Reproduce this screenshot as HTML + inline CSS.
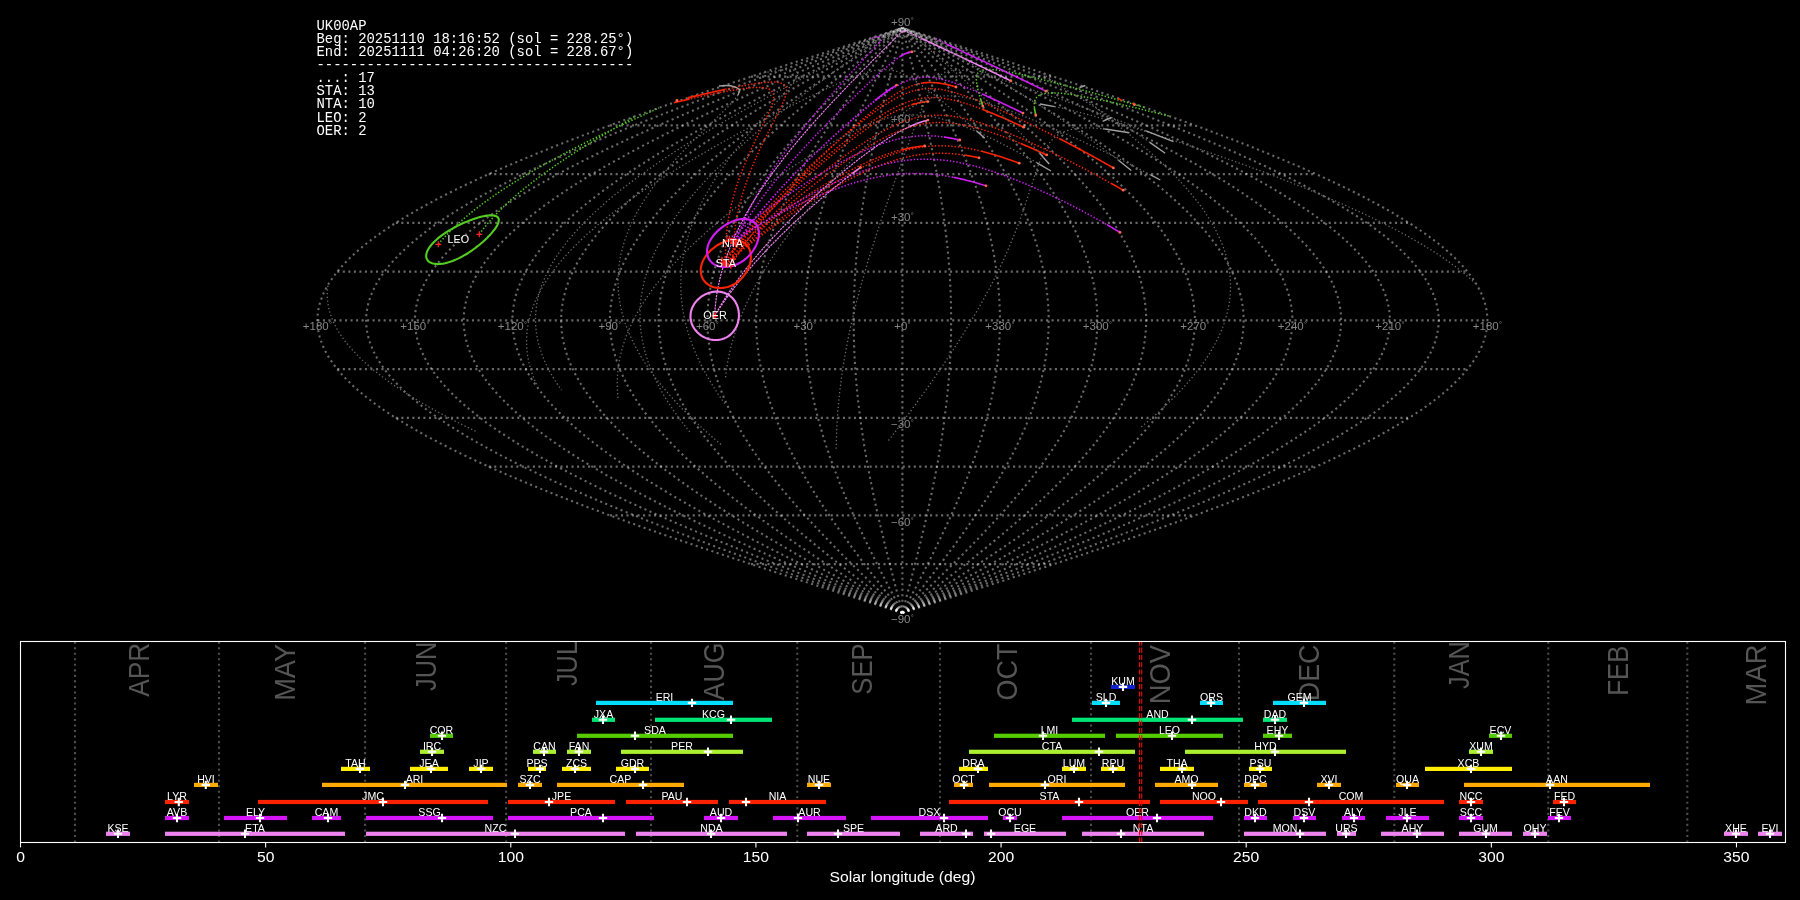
<!DOCTYPE html><html><head><meta charset="utf-8"><style>html,body{margin:0;padding:0;background:#000;width:1800px;height:900px;overflow:hidden}svg{display:block;will-change:transform}text{font-family:"Liberation Sans",sans-serif}</style></head><body>
<svg width="1800" height="900" viewBox="0 0 1800 900">
<rect width="1800" height="900" fill="#000"/>
<g fill="none" stroke="#fff" stroke-opacity="0.41" stroke-width="2.08" stroke-dasharray="2.08 3.44"><path d="M902.4 612.9 L907.5 611.3 L912.6 609.6 L917.7 608.0 L922.8 606.4 L927.9 604.8 L933.0 603.1 L938.1 601.5 L943.2 599.9 L948.3 598.3 L953.4 596.6 L958.5 595.0 L963.5 593.4 L968.6 591.8 L973.7 590.1 L978.8 588.5 L983.8 586.9 L988.9 585.3 L993.9 583.6 L999.0 582.0 L1004.0 580.4 L1009.0 578.8 L1014.0 577.1 L1019.0 575.5 L1024.0 573.9 L1029.0 572.3 L1034.0 570.6 L1039.0 569.0 L1043.9 567.4 L1048.9 565.8 L1053.8 564.1 L1058.7 562.5 L1063.6 560.9 L1068.5 559.3 L1073.4 557.6 L1078.3 556.0 L1083.2 554.4 L1088.0 552.8 L1092.9 551.1 L1097.7 549.5 L1102.5 547.9 L1107.3 546.3 L1112.0 544.6 L1116.8 543.0 L1121.5 541.4 L1126.3 539.8 L1131.0 538.1 L1135.7 536.5 L1140.3 534.9 L1145.0 533.3 L1149.6 531.6 L1154.2 530.0 L1158.8 528.4 L1163.4 526.8 L1168.0 525.1 L1172.5 523.5 L1177.0 521.9 L1181.5 520.3 L1186.0 518.6 L1190.5 517.0 L1194.9 515.4 L1199.3 513.8 L1203.7 512.1 L1208.1 510.5 L1212.4 508.9 L1216.7 507.3 L1221.0 505.6 L1225.3 504.0 L1229.5 502.4 L1233.7 500.8 L1237.9 499.1 L1242.1 497.5 L1246.3 495.9 L1250.4 494.3 L1254.5 492.6 L1258.5 491.0 L1262.6 489.4 L1266.6 487.8 L1270.6 486.1 L1274.5 484.5 L1278.4 482.9 L1282.3 481.3 L1286.2 479.6 L1290.0 478.0 L1293.8 476.4 L1297.6 474.8 L1301.4 473.1 L1305.1 471.5 L1308.8 469.9 L1312.4 468.3 L1316.1 466.6 L1319.7 465.0 L1323.2 463.4 L1326.7 461.8 L1330.2 460.1 L1333.7 458.5 L1337.1 456.9 L1340.5 455.3 L1343.9 453.6 L1347.2 452.0 L1350.5 450.4 L1353.8 448.8 L1357.0 447.1 L1360.2 445.5 L1363.4 443.9 L1366.5 442.3 L1369.6 440.6 L1372.7 439.0 L1375.7 437.4 L1378.7 435.8 L1381.6 434.1 L1384.5 432.5 L1387.4 430.9 L1390.2 429.3 L1393.0 427.6 L1395.8 426.0 L1398.5 424.4 L1401.2 422.8 L1403.8 421.1 L1406.5 419.5 L1409.0 417.9 L1411.6 416.3 L1414.1 414.6 L1416.5 413.0 L1418.9 411.4 L1421.3 409.8 L1423.6 408.1 L1425.9 406.5 L1428.2 404.9 L1430.4 403.3 L1432.6 401.6 L1434.7 400.0 L1436.8 398.4 L1438.9 396.8 L1440.9 395.1 L1442.9 393.5 L1444.8 391.9 L1446.7 390.3 L1448.5 388.6 L1450.4 387.0 L1452.1 385.4 L1453.8 383.8 L1455.5 382.1 L1457.2 380.5 L1458.8 378.9 L1460.3 377.3 L1461.8 375.6 L1463.3 374.0 L1464.7 372.4 L1466.1 370.8 L1467.5 369.1 L1468.8 367.5 L1470.0 365.9 L1471.2 364.3 L1472.4 362.6 L1473.5 361.0 L1474.6 359.4 L1475.7 357.8 L1476.7 356.1 L1477.6 354.5 L1478.5 352.9 L1479.4 351.3 L1480.2 349.6 L1481.0 348.0 L1481.7 346.4 L1482.4 344.8 L1483.0 343.1 L1483.6 341.5 L1484.2 339.9 L1484.7 338.3 L1485.2 336.6 L1485.6 335.0 L1486.0 333.4 L1486.3 331.8 L1486.6 330.1 L1486.8 328.5 L1487.0 326.9 L1487.2 325.3 L1487.3 323.6 L1487.4 322.0 L1487.4 320.4 L1487.4 318.8 L1487.3 317.1 L1487.2 315.5 L1487.0 313.9 L1486.8 312.3 L1486.6 310.6 L1486.3 309.0 L1486.0 307.4 L1485.6 305.8 L1485.2 304.1 L1484.7 302.5 L1484.2 300.9 L1483.6 299.3 L1483.0 297.6 L1482.4 296.0 L1481.7 294.4 L1481.0 292.8 L1480.2 291.1 L1479.4 289.5 L1478.5 287.9 L1477.6 286.3 L1476.7 284.6 L1475.7 283.0 L1474.6 281.4 L1473.5 279.8 L1472.4 278.1 L1471.2 276.5 L1470.0 274.9 L1468.8 273.3 L1467.5 271.6 L1466.1 270.0 L1464.7 268.4 L1463.3 266.8 L1461.8 265.1 L1460.3 263.5 L1458.8 261.9 L1457.2 260.3 L1455.5 258.6 L1453.8 257.0 L1452.1 255.4 L1450.4 253.8 L1448.5 252.1 L1446.7 250.5 L1444.8 248.9 L1442.9 247.3 L1440.9 245.6 L1438.9 244.0 L1436.8 242.4 L1434.7 240.8 L1432.6 239.1 L1430.4 237.5 L1428.2 235.9 L1425.9 234.3 L1423.6 232.6 L1421.3 231.0 L1418.9 229.4 L1416.5 227.8 L1414.1 226.1 L1411.6 224.5 L1409.0 222.9 L1406.5 221.3 L1403.8 219.6 L1401.2 218.0 L1398.5 216.4 L1395.8 214.8 L1393.0 213.1 L1390.2 211.5 L1387.4 209.9 L1384.5 208.3 L1381.6 206.6 L1378.7 205.0 L1375.7 203.4 L1372.7 201.8 L1369.6 200.1 L1366.5 198.5 L1363.4 196.9 L1360.2 195.3 L1357.0 193.6 L1353.8 192.0 L1350.5 190.4 L1347.2 188.8 L1343.9 187.1 L1340.5 185.5 L1337.1 183.9 L1333.7 182.3 L1330.2 180.6 L1326.7 179.0 L1323.2 177.4 L1319.7 175.8 L1316.1 174.1 L1312.4 172.5 L1308.8 170.9 L1305.1 169.3 L1301.4 167.6 L1297.6 166.0 L1293.8 164.4 L1290.0 162.8 L1286.2 161.1 L1282.3 159.5 L1278.4 157.9 L1274.5 156.3 L1270.6 154.6 L1266.6 153.0 L1262.6 151.4 L1258.5 149.8 L1254.5 148.1 L1250.4 146.5 L1246.3 144.9 L1242.1 143.3 L1237.9 141.6 L1233.7 140.0 L1229.5 138.4 L1225.3 136.8 L1221.0 135.1 L1216.7 133.5 L1212.4 131.9 L1208.1 130.3 L1203.7 128.6 L1199.3 127.0 L1194.9 125.4 L1190.5 123.8 L1186.0 122.1 L1181.5 120.5 L1177.0 118.9 L1172.5 117.3 L1168.0 115.6 L1163.4 114.0 L1158.8 112.4 L1154.2 110.8 L1149.6 109.1 L1145.0 107.5 L1140.3 105.9 L1135.7 104.3 L1131.0 102.6 L1126.3 101.0 L1121.5 99.4 L1116.8 97.8 L1112.0 96.1 L1107.3 94.5 L1102.5 92.9 L1097.7 91.3 L1092.9 89.6 L1088.0 88.0 L1083.2 86.4 L1078.3 84.8 L1073.4 83.1 L1068.5 81.5 L1063.6 79.9 L1058.7 78.3 L1053.8 76.6 L1048.9 75.0 L1043.9 73.4 L1039.0 71.8 L1034.0 70.1 L1029.0 68.5 L1024.0 66.9 L1019.0 65.3 L1014.0 63.6 L1009.0 62.0 L1004.0 60.4 L999.0 58.8 L993.9 57.1 L988.9 55.5 L983.8 53.9 L978.8 52.3 L973.7 50.6 L968.6 49.0 L963.5 47.4 L958.5 45.8 L953.4 44.1 L948.3 42.5 L943.2 40.9 L938.1 39.3 L933.0 37.6 L927.9 36.0 L922.8 34.4 L917.7 32.8 L912.6 31.1 L907.5 29.5 L902.4 27.9"/><path d="M902.4 612.9 L907.1 611.3 L911.8 609.6 L916.4 608.0 L921.1 606.4 L925.8 604.8 L930.5 603.1 L935.1 601.5 L939.8 599.9 L944.5 598.3 L949.1 596.6 L953.8 595.0 L958.5 593.4 L963.1 591.8 L967.8 590.1 L972.4 588.5 L977.0 586.9 L981.7 585.3 L986.3 583.6 L990.9 582.0 L995.5 580.4 L1000.1 578.8 L1004.7 577.1 L1009.3 575.5 L1013.9 573.9 L1018.5 572.3 L1023.0 570.6 L1027.6 569.0 L1032.1 567.4 L1036.7 565.8 L1041.2 564.1 L1045.7 562.5 L1050.2 560.9 L1054.7 559.3 L1059.2 557.6 L1063.7 556.0 L1068.1 554.4 L1072.6 552.8 L1077.0 551.1 L1081.4 549.5 L1085.8 547.9 L1090.2 546.3 L1094.6 544.6 L1098.9 543.0 L1103.3 541.4 L1107.6 539.8 L1111.9 538.1 L1116.2 536.5 L1120.5 534.9 L1124.8 533.3 L1129.0 531.6 L1133.3 530.0 L1137.5 528.4 L1141.7 526.8 L1145.9 525.1 L1150.0 523.5 L1154.2 521.9 L1158.3 520.3 L1162.4 518.6 L1166.5 517.0 L1170.5 515.4 L1174.6 513.8 L1178.6 512.1 L1182.6 510.5 L1186.6 508.9 L1190.5 507.3 L1194.5 505.6 L1198.4 504.0 L1202.3 502.4 L1206.1 500.8 L1210.0 499.1 L1213.8 497.5 L1217.6 495.9 L1221.4 494.3 L1225.1 492.6 L1228.8 491.0 L1232.5 489.4 L1236.2 487.8 L1239.9 486.1 L1243.5 484.5 L1247.1 482.9 L1250.7 481.3 L1254.2 479.6 L1257.7 478.0 L1261.2 476.4 L1264.7 474.8 L1268.1 473.1 L1271.5 471.5 L1274.9 469.9 L1278.3 468.3 L1281.6 466.6 L1284.9 465.0 L1288.1 463.4 L1291.4 461.8 L1294.6 460.1 L1297.8 458.5 L1300.9 456.9 L1304.0 455.3 L1307.1 453.6 L1310.2 452.0 L1313.2 450.4 L1316.2 448.8 L1319.1 447.1 L1322.1 445.5 L1325.0 443.9 L1327.8 442.3 L1330.7 440.6 L1333.5 439.0 L1336.2 437.4 L1339.0 435.8 L1341.7 434.1 L1344.3 432.5 L1347.0 430.9 L1349.6 429.3 L1352.1 427.6 L1354.7 426.0 L1357.2 424.4 L1359.6 422.8 L1362.1 421.1 L1364.4 419.5 L1366.8 417.9 L1369.1 416.3 L1371.4 414.6 L1373.7 413.0 L1375.9 411.4 L1378.1 409.8 L1380.2 408.1 L1382.3 406.5 L1384.4 404.9 L1386.4 403.3 L1388.4 401.6 L1390.4 400.0 L1392.3 398.4 L1394.2 396.8 L1396.0 395.1 L1397.8 393.5 L1399.6 391.9 L1401.3 390.3 L1403.0 388.6 L1404.7 387.0 L1406.3 385.4 L1407.9 383.8 L1409.4 382.1 L1410.9 380.5 L1412.4 378.9 L1413.8 377.3 L1415.2 375.6 L1416.6 374.0 L1417.9 372.4 L1419.1 370.8 L1420.4 369.1 L1421.6 367.5 L1422.7 365.9 L1423.8 364.3 L1424.9 362.6 L1425.9 361.0 L1426.9 359.4 L1427.9 357.8 L1428.8 356.1 L1429.7 354.5 L1430.5 352.9 L1431.3 351.3 L1432.0 349.6 L1432.8 348.0 L1433.4 346.4 L1434.1 344.8 L1434.7 343.1 L1435.2 341.5 L1435.7 339.9 L1436.2 338.3 L1436.6 336.6 L1437.0 335.0 L1437.3 333.4 L1437.6 331.8 L1437.9 330.1 L1438.1 328.5 L1438.3 326.9 L1438.5 325.3 L1438.6 323.6 L1438.6 322.0 L1438.7 320.4 L1438.6 318.8 L1438.6 317.1 L1438.5 315.5 L1438.3 313.9 L1438.1 312.3 L1437.9 310.6 L1437.6 309.0 L1437.3 307.4 L1437.0 305.8 L1436.6 304.1 L1436.2 302.5 L1435.7 300.9 L1435.2 299.3 L1434.7 297.6 L1434.1 296.0 L1433.4 294.4 L1432.8 292.8 L1432.0 291.1 L1431.3 289.5 L1430.5 287.9 L1429.7 286.3 L1428.8 284.6 L1427.9 283.0 L1426.9 281.4 L1425.9 279.8 L1424.9 278.1 L1423.8 276.5 L1422.7 274.9 L1421.6 273.3 L1420.4 271.6 L1419.1 270.0 L1417.9 268.4 L1416.6 266.8 L1415.2 265.1 L1413.8 263.5 L1412.4 261.9 L1410.9 260.3 L1409.4 258.6 L1407.9 257.0 L1406.3 255.4 L1404.7 253.8 L1403.0 252.1 L1401.3 250.5 L1399.6 248.9 L1397.8 247.3 L1396.0 245.6 L1394.2 244.0 L1392.3 242.4 L1390.4 240.8 L1388.4 239.1 L1386.4 237.5 L1384.4 235.9 L1382.3 234.3 L1380.2 232.6 L1378.1 231.0 L1375.9 229.4 L1373.7 227.8 L1371.4 226.1 L1369.1 224.5 L1366.8 222.9 L1364.4 221.3 L1362.1 219.6 L1359.6 218.0 L1357.2 216.4 L1354.7 214.8 L1352.1 213.1 L1349.6 211.5 L1347.0 209.9 L1344.3 208.3 L1341.7 206.6 L1339.0 205.0 L1336.2 203.4 L1333.5 201.8 L1330.7 200.1 L1327.8 198.5 L1325.0 196.9 L1322.1 195.3 L1319.1 193.6 L1316.2 192.0 L1313.2 190.4 L1310.2 188.8 L1307.1 187.1 L1304.0 185.5 L1300.9 183.9 L1297.8 182.3 L1294.6 180.6 L1291.4 179.0 L1288.1 177.4 L1284.9 175.8 L1281.6 174.1 L1278.3 172.5 L1274.9 170.9 L1271.5 169.3 L1268.1 167.6 L1264.7 166.0 L1261.2 164.4 L1257.7 162.8 L1254.2 161.1 L1250.7 159.5 L1247.1 157.9 L1243.5 156.3 L1239.9 154.6 L1236.2 153.0 L1232.5 151.4 L1228.8 149.8 L1225.1 148.1 L1221.4 146.5 L1217.6 144.9 L1213.8 143.3 L1210.0 141.6 L1206.1 140.0 L1202.3 138.4 L1198.4 136.8 L1194.5 135.1 L1190.5 133.5 L1186.6 131.9 L1182.6 130.3 L1178.6 128.6 L1174.6 127.0 L1170.5 125.4 L1166.5 123.8 L1162.4 122.1 L1158.3 120.5 L1154.2 118.9 L1150.0 117.3 L1145.9 115.6 L1141.7 114.0 L1137.5 112.4 L1133.3 110.8 L1129.0 109.1 L1124.8 107.5 L1120.5 105.9 L1116.2 104.3 L1111.9 102.6 L1107.6 101.0 L1103.3 99.4 L1098.9 97.8 L1094.6 96.1 L1090.2 94.5 L1085.8 92.9 L1081.4 91.3 L1077.0 89.6 L1072.6 88.0 L1068.1 86.4 L1063.7 84.8 L1059.2 83.1 L1054.7 81.5 L1050.2 79.9 L1045.7 78.3 L1041.2 76.6 L1036.7 75.0 L1032.1 73.4 L1027.6 71.8 L1023.0 70.1 L1018.5 68.5 L1013.9 66.9 L1009.3 65.3 L1004.7 63.6 L1000.1 62.0 L995.5 60.4 L990.9 58.8 L986.3 57.1 L981.7 55.5 L977.0 53.9 L972.4 52.3 L967.8 50.6 L963.1 49.0 L958.5 47.4 L953.8 45.8 L949.1 44.1 L944.5 42.5 L939.8 40.9 L935.1 39.3 L930.5 37.6 L925.8 36.0 L921.1 34.4 L916.4 32.8 L911.8 31.1 L907.1 29.5 L902.4 27.9"/><path d="M902.4 612.9 L906.7 611.3 L910.9 609.6 L915.2 608.0 L919.4 606.4 L923.7 604.8 L927.9 603.1 L932.2 601.5 L936.4 599.9 L940.6 598.3 L944.9 596.6 L949.1 595.0 L953.4 593.4 L957.6 591.8 L961.8 590.1 L966.0 588.5 L970.2 586.9 L974.5 585.3 L978.7 583.6 L982.9 582.0 L987.1 580.4 L991.2 578.8 L995.4 577.1 L999.6 575.5 L1003.8 573.9 L1007.9 572.3 L1012.1 570.6 L1016.2 569.0 L1020.3 567.4 L1024.5 565.8 L1028.6 564.1 L1032.7 562.5 L1036.8 560.9 L1040.9 559.3 L1044.9 557.6 L1049.0 556.0 L1053.0 554.4 L1057.1 552.8 L1061.1 551.1 L1065.1 549.5 L1069.1 547.9 L1073.1 546.3 L1077.1 544.6 L1081.1 543.0 L1085.0 541.4 L1089.0 539.8 L1092.9 538.1 L1096.8 536.5 L1100.7 534.9 L1104.6 533.3 L1108.4 531.6 L1112.3 530.0 L1116.1 528.4 L1119.9 526.8 L1123.7 525.1 L1127.5 523.5 L1131.3 521.9 L1135.0 520.3 L1138.7 518.6 L1142.5 517.0 L1146.2 515.4 L1149.8 513.8 L1153.5 512.1 L1157.1 510.5 L1160.7 508.9 L1164.3 507.3 L1167.9 505.6 L1171.5 504.0 L1175.0 502.4 L1178.5 500.8 L1182.0 499.1 L1185.5 497.5 L1188.9 495.9 L1192.4 494.3 L1195.8 492.6 L1199.2 491.0 L1202.5 489.4 L1205.9 487.8 L1209.2 486.1 L1212.5 484.5 L1215.8 482.9 L1219.0 481.3 L1222.2 479.6 L1225.4 478.0 L1228.6 476.4 L1231.8 474.8 L1234.9 473.1 L1238.0 471.5 L1241.0 469.9 L1244.1 468.3 L1247.1 466.6 L1250.1 465.0 L1253.1 463.4 L1256.0 461.8 L1258.9 460.1 L1261.8 458.5 L1264.7 456.9 L1267.5 455.3 L1270.3 453.6 L1273.1 452.0 L1275.8 450.4 L1278.6 448.8 L1281.3 447.1 L1283.9 445.5 L1286.6 443.9 L1289.2 442.3 L1291.7 440.6 L1294.3 439.0 L1296.8 437.4 L1299.3 435.8 L1301.7 434.1 L1304.2 432.5 L1306.6 430.9 L1308.9 429.3 L1311.3 427.6 L1313.6 426.0 L1315.8 424.4 L1318.1 422.8 L1320.3 421.1 L1322.4 419.5 L1324.6 417.9 L1326.7 416.3 L1328.8 414.6 L1330.8 413.0 L1332.8 411.4 L1334.8 409.8 L1336.8 408.1 L1338.7 406.5 L1340.6 404.9 L1342.4 403.3 L1344.2 401.6 L1346.0 400.0 L1347.8 398.4 L1349.5 396.8 L1351.1 395.1 L1352.8 393.5 L1354.4 391.9 L1356.0 390.3 L1357.5 388.6 L1359.0 387.0 L1360.5 385.4 L1361.9 383.8 L1363.3 382.1 L1364.7 380.5 L1366.0 378.9 L1367.3 377.3 L1368.6 375.6 L1369.8 374.0 L1371.0 372.4 L1372.2 370.8 L1373.3 369.1 L1374.4 367.5 L1375.4 365.9 L1376.4 364.3 L1377.4 362.6 L1378.3 361.0 L1379.2 359.4 L1380.1 357.8 L1380.9 356.1 L1381.7 354.5 L1382.5 352.9 L1383.2 351.3 L1383.9 349.6 L1384.5 348.0 L1385.2 346.4 L1385.7 344.8 L1386.3 343.1 L1386.8 341.5 L1387.2 339.9 L1387.7 338.3 L1388.0 336.6 L1388.4 335.0 L1388.7 333.4 L1389.0 331.8 L1389.2 330.1 L1389.4 328.5 L1389.6 326.9 L1389.7 325.3 L1389.8 323.6 L1389.9 322.0 L1389.9 320.4 L1389.9 318.8 L1389.8 317.1 L1389.7 315.5 L1389.6 313.9 L1389.4 312.3 L1389.2 310.6 L1389.0 309.0 L1388.7 307.4 L1388.4 305.8 L1388.0 304.1 L1387.7 302.5 L1387.2 300.9 L1386.8 299.3 L1386.3 297.6 L1385.7 296.0 L1385.2 294.4 L1384.5 292.8 L1383.9 291.1 L1383.2 289.5 L1382.5 287.9 L1381.7 286.3 L1380.9 284.6 L1380.1 283.0 L1379.2 281.4 L1378.3 279.8 L1377.4 278.1 L1376.4 276.5 L1375.4 274.9 L1374.4 273.3 L1373.3 271.6 L1372.2 270.0 L1371.0 268.4 L1369.8 266.8 L1368.6 265.1 L1367.3 263.5 L1366.0 261.9 L1364.7 260.3 L1363.3 258.6 L1361.9 257.0 L1360.5 255.4 L1359.0 253.8 L1357.5 252.1 L1356.0 250.5 L1354.4 248.9 L1352.8 247.3 L1351.1 245.6 L1349.5 244.0 L1347.8 242.4 L1346.0 240.8 L1344.2 239.1 L1342.4 237.5 L1340.6 235.9 L1338.7 234.3 L1336.8 232.6 L1334.8 231.0 L1332.8 229.4 L1330.8 227.8 L1328.8 226.1 L1326.7 224.5 L1324.6 222.9 L1322.4 221.3 L1320.3 219.6 L1318.1 218.0 L1315.8 216.4 L1313.6 214.8 L1311.3 213.1 L1308.9 211.5 L1306.6 209.9 L1304.2 208.3 L1301.7 206.6 L1299.3 205.0 L1296.8 203.4 L1294.3 201.8 L1291.7 200.1 L1289.2 198.5 L1286.6 196.9 L1283.9 195.3 L1281.3 193.6 L1278.6 192.0 L1275.8 190.4 L1273.1 188.8 L1270.3 187.1 L1267.5 185.5 L1264.7 183.9 L1261.8 182.3 L1258.9 180.6 L1256.0 179.0 L1253.1 177.4 L1250.1 175.8 L1247.1 174.1 L1244.1 172.5 L1241.0 170.9 L1238.0 169.3 L1234.9 167.6 L1231.8 166.0 L1228.6 164.4 L1225.4 162.8 L1222.2 161.1 L1219.0 159.5 L1215.8 157.9 L1212.5 156.3 L1209.2 154.6 L1205.9 153.0 L1202.5 151.4 L1199.2 149.8 L1195.8 148.1 L1192.4 146.5 L1188.9 144.9 L1185.5 143.3 L1182.0 141.6 L1178.5 140.0 L1175.0 138.4 L1171.5 136.8 L1167.9 135.1 L1164.3 133.5 L1160.7 131.9 L1157.1 130.3 L1153.5 128.6 L1149.8 127.0 L1146.2 125.4 L1142.5 123.8 L1138.7 122.1 L1135.0 120.5 L1131.3 118.9 L1127.5 117.3 L1123.7 115.6 L1119.9 114.0 L1116.1 112.4 L1112.3 110.8 L1108.4 109.1 L1104.6 107.5 L1100.7 105.9 L1096.8 104.3 L1092.9 102.6 L1089.0 101.0 L1085.0 99.4 L1081.1 97.8 L1077.1 96.1 L1073.1 94.5 L1069.1 92.9 L1065.1 91.3 L1061.1 89.6 L1057.1 88.0 L1053.0 86.4 L1049.0 84.8 L1044.9 83.1 L1040.9 81.5 L1036.8 79.9 L1032.7 78.3 L1028.6 76.6 L1024.5 75.0 L1020.3 73.4 L1016.2 71.8 L1012.1 70.1 L1007.9 68.5 L1003.8 66.9 L999.6 65.3 L995.4 63.6 L991.2 62.0 L987.1 60.4 L982.9 58.8 L978.7 57.1 L974.5 55.5 L970.2 53.9 L966.0 52.3 L961.8 50.6 L957.6 49.0 L953.4 47.4 L949.1 45.8 L944.9 44.1 L940.6 42.5 L936.4 40.9 L932.2 39.3 L927.9 37.6 L923.7 36.0 L919.4 34.4 L915.2 32.8 L910.9 31.1 L906.7 29.5 L902.4 27.9"/><path d="M902.4 612.9 L906.2 611.3 L910.1 609.6 L913.9 608.0 L917.7 606.4 L921.5 604.8 L925.4 603.1 L929.2 601.5 L933.0 599.9 L936.8 598.3 L940.6 596.6 L944.5 595.0 L948.3 593.4 L952.1 591.8 L955.9 590.1 L959.7 588.5 L963.5 586.9 L967.3 585.3 L971.0 583.6 L974.8 582.0 L978.6 580.4 L982.4 578.8 L986.1 577.1 L989.9 575.5 L993.6 573.9 L997.4 572.3 L1001.1 570.6 L1004.8 569.0 L1008.5 567.4 L1012.3 565.8 L1016.0 564.1 L1019.7 562.5 L1023.3 560.9 L1027.0 559.3 L1030.7 557.6 L1034.3 556.0 L1038.0 554.4 L1041.6 552.8 L1045.2 551.1 L1048.9 549.5 L1052.5 547.9 L1056.1 546.3 L1059.6 544.6 L1063.2 543.0 L1066.8 541.4 L1070.3 539.8 L1073.8 538.1 L1077.4 536.5 L1080.9 534.9 L1084.3 533.3 L1087.8 531.6 L1091.3 530.0 L1094.7 528.4 L1098.2 526.8 L1101.6 525.1 L1105.0 523.5 L1108.4 521.9 L1111.8 520.3 L1115.1 518.6 L1118.5 517.0 L1121.8 515.4 L1125.1 513.8 L1128.4 512.1 L1131.6 510.5 L1134.9 508.9 L1138.1 507.3 L1141.4 505.6 L1144.6 504.0 L1147.7 502.4 L1150.9 500.8 L1154.1 499.1 L1157.2 497.5 L1160.3 495.9 L1163.4 494.3 L1166.4 492.6 L1169.5 491.0 L1172.5 489.4 L1175.5 487.8 L1178.5 486.1 L1181.5 484.5 L1184.4 482.9 L1187.3 481.3 L1190.2 479.6 L1193.1 478.0 L1196.0 476.4 L1198.8 474.8 L1201.6 473.1 L1204.4 471.5 L1207.2 469.9 L1209.9 468.3 L1212.6 466.6 L1215.3 465.0 L1218.0 463.4 L1220.7 461.8 L1223.3 460.1 L1225.9 458.5 L1228.5 456.9 L1231.0 455.3 L1233.5 453.6 L1236.0 452.0 L1238.5 450.4 L1241.0 448.8 L1243.4 447.1 L1245.8 445.5 L1248.1 443.9 L1250.5 442.3 L1252.8 440.6 L1255.1 439.0 L1257.4 437.4 L1259.6 435.8 L1261.8 434.1 L1264.0 432.5 L1266.1 430.9 L1268.3 429.3 L1270.4 427.6 L1272.4 426.0 L1274.5 424.4 L1276.5 422.8 L1278.5 421.1 L1280.4 419.5 L1282.4 417.9 L1284.3 416.3 L1286.1 414.6 L1288.0 413.0 L1289.8 411.4 L1291.6 409.8 L1293.3 408.1 L1295.1 406.5 L1296.7 404.9 L1298.4 403.3 L1300.0 401.6 L1301.6 400.0 L1303.2 398.4 L1304.8 396.8 L1306.3 395.1 L1307.8 393.5 L1309.2 391.9 L1310.6 390.3 L1312.0 388.6 L1313.4 387.0 L1314.7 385.4 L1316.0 383.8 L1317.2 382.1 L1318.5 380.5 L1319.7 378.9 L1320.8 377.3 L1322.0 375.6 L1323.1 374.0 L1324.2 372.4 L1325.2 370.8 L1326.2 369.1 L1327.2 367.5 L1328.1 365.9 L1329.0 364.3 L1329.9 362.6 L1330.7 361.0 L1331.6 359.4 L1332.3 357.8 L1333.1 356.1 L1333.8 354.5 L1334.5 352.9 L1335.1 351.3 L1335.7 349.6 L1336.3 348.0 L1336.9 346.4 L1337.4 344.8 L1337.9 343.1 L1338.3 341.5 L1338.7 339.9 L1339.1 338.3 L1339.5 336.6 L1339.8 335.0 L1340.1 333.4 L1340.3 331.8 L1340.5 330.1 L1340.7 328.5 L1340.9 326.9 L1341.0 325.3 L1341.1 323.6 L1341.1 322.0 L1341.2 320.4 L1341.1 318.8 L1341.1 317.1 L1341.0 315.5 L1340.9 313.9 L1340.7 312.3 L1340.5 310.6 L1340.3 309.0 L1340.1 307.4 L1339.8 305.8 L1339.5 304.1 L1339.1 302.5 L1338.7 300.9 L1338.3 299.3 L1337.9 297.6 L1337.4 296.0 L1336.9 294.4 L1336.3 292.8 L1335.7 291.1 L1335.1 289.5 L1334.5 287.9 L1333.8 286.3 L1333.1 284.6 L1332.3 283.0 L1331.6 281.4 L1330.7 279.8 L1329.9 278.1 L1329.0 276.5 L1328.1 274.9 L1327.2 273.3 L1326.2 271.6 L1325.2 270.0 L1324.2 268.4 L1323.1 266.8 L1322.0 265.1 L1320.8 263.5 L1319.7 261.9 L1318.5 260.3 L1317.2 258.6 L1316.0 257.0 L1314.7 255.4 L1313.4 253.8 L1312.0 252.1 L1310.6 250.5 L1309.2 248.9 L1307.8 247.3 L1306.3 245.6 L1304.8 244.0 L1303.2 242.4 L1301.6 240.8 L1300.0 239.1 L1298.4 237.5 L1296.7 235.9 L1295.1 234.3 L1293.3 232.6 L1291.6 231.0 L1289.8 229.4 L1288.0 227.8 L1286.1 226.1 L1284.3 224.5 L1282.4 222.9 L1280.4 221.3 L1278.5 219.6 L1276.5 218.0 L1274.5 216.4 L1272.4 214.8 L1270.4 213.1 L1268.3 211.5 L1266.1 209.9 L1264.0 208.3 L1261.8 206.6 L1259.6 205.0 L1257.4 203.4 L1255.1 201.8 L1252.8 200.1 L1250.5 198.5 L1248.1 196.9 L1245.8 195.3 L1243.4 193.6 L1241.0 192.0 L1238.5 190.4 L1236.0 188.8 L1233.5 187.1 L1231.0 185.5 L1228.5 183.9 L1225.9 182.3 L1223.3 180.6 L1220.7 179.0 L1218.0 177.4 L1215.3 175.8 L1212.6 174.1 L1209.9 172.5 L1207.2 170.9 L1204.4 169.3 L1201.6 167.6 L1198.8 166.0 L1196.0 164.4 L1193.1 162.8 L1190.2 161.1 L1187.3 159.5 L1184.4 157.9 L1181.5 156.3 L1178.5 154.6 L1175.5 153.0 L1172.5 151.4 L1169.5 149.8 L1166.4 148.1 L1163.4 146.5 L1160.3 144.9 L1157.2 143.3 L1154.1 141.6 L1150.9 140.0 L1147.7 138.4 L1144.6 136.8 L1141.4 135.1 L1138.1 133.5 L1134.9 131.9 L1131.6 130.3 L1128.4 128.6 L1125.1 127.0 L1121.8 125.4 L1118.5 123.8 L1115.1 122.1 L1111.8 120.5 L1108.4 118.9 L1105.0 117.3 L1101.6 115.6 L1098.2 114.0 L1094.7 112.4 L1091.3 110.8 L1087.8 109.1 L1084.3 107.5 L1080.9 105.9 L1077.4 104.3 L1073.8 102.6 L1070.3 101.0 L1066.8 99.4 L1063.2 97.8 L1059.6 96.1 L1056.1 94.5 L1052.5 92.9 L1048.9 91.3 L1045.2 89.6 L1041.6 88.0 L1038.0 86.4 L1034.3 84.8 L1030.7 83.1 L1027.0 81.5 L1023.3 79.9 L1019.7 78.3 L1016.0 76.6 L1012.3 75.0 L1008.5 73.4 L1004.8 71.8 L1001.1 70.1 L997.4 68.5 L993.6 66.9 L989.9 65.3 L986.1 63.6 L982.4 62.0 L978.6 60.4 L974.8 58.8 L971.0 57.1 L967.3 55.5 L963.5 53.9 L959.7 52.3 L955.9 50.6 L952.1 49.0 L948.3 47.4 L944.5 45.8 L940.6 44.1 L936.8 42.5 L933.0 40.9 L929.2 39.3 L925.4 37.6 L921.5 36.0 L917.7 34.4 L913.9 32.8 L910.1 31.1 L906.2 29.5 L902.4 27.9"/><path d="M902.4 612.9 L905.8 611.3 L909.2 609.6 L912.6 608.0 L916.0 606.4 L919.4 604.8 L922.8 603.1 L926.2 601.5 L929.6 599.9 L933.0 598.3 L936.4 596.6 L939.8 595.0 L943.2 593.4 L946.5 591.8 L949.9 590.1 L953.3 588.5 L956.7 586.9 L960.0 585.3 L963.4 583.6 L966.8 582.0 L970.1 580.4 L973.5 578.8 L976.8 577.1 L980.2 575.5 L983.5 573.9 L986.8 572.3 L990.1 570.6 L993.4 569.0 L996.7 567.4 L1000.0 565.8 L1003.3 564.1 L1006.6 562.5 L1009.9 560.9 L1013.2 559.3 L1016.4 557.6 L1019.7 556.0 L1022.9 554.4 L1026.1 552.8 L1029.4 551.1 L1032.6 549.5 L1035.8 547.9 L1039.0 546.3 L1042.2 544.6 L1045.3 543.0 L1048.5 541.4 L1051.6 539.8 L1054.8 538.1 L1057.9 536.5 L1061.0 534.9 L1064.1 533.3 L1067.2 531.6 L1070.3 530.0 L1073.4 528.4 L1076.4 526.8 L1079.5 525.1 L1082.5 523.5 L1085.5 521.9 L1088.5 520.3 L1091.5 518.6 L1094.4 517.0 L1097.4 515.4 L1100.3 513.8 L1103.3 512.1 L1106.2 510.5 L1109.1 508.9 L1111.9 507.3 L1114.8 505.6 L1117.7 504.0 L1120.5 502.4 L1123.3 500.8 L1126.1 499.1 L1128.9 497.5 L1131.6 495.9 L1134.4 494.3 L1137.1 492.6 L1139.8 491.0 L1142.5 489.4 L1145.2 487.8 L1147.8 486.1 L1150.5 484.5 L1153.1 482.9 L1155.7 481.3 L1158.3 479.6 L1160.8 478.0 L1163.4 476.4 L1165.9 474.8 L1168.4 473.1 L1170.9 471.5 L1173.3 469.9 L1175.8 468.3 L1178.2 466.6 L1180.6 465.0 L1182.9 463.4 L1185.3 461.8 L1187.6 460.1 L1189.9 458.5 L1192.2 456.9 L1194.5 455.3 L1196.7 453.6 L1199.0 452.0 L1201.2 450.4 L1203.3 448.8 L1205.5 447.1 L1207.6 445.5 L1209.7 443.9 L1211.8 442.3 L1213.9 440.6 L1215.9 439.0 L1217.9 437.4 L1219.9 435.8 L1221.9 434.1 L1223.8 432.5 L1225.7 430.9 L1227.6 429.3 L1229.5 427.6 L1231.3 426.0 L1233.1 424.4 L1234.9 422.8 L1236.7 421.1 L1238.4 419.5 L1240.1 417.9 L1241.8 416.3 L1243.5 414.6 L1245.1 413.0 L1246.7 411.4 L1248.3 409.8 L1249.9 408.1 L1251.4 406.5 L1252.9 404.9 L1254.4 403.3 L1255.9 401.6 L1257.3 400.0 L1258.7 398.4 L1260.1 396.8 L1261.4 395.1 L1262.7 393.5 L1264.0 391.9 L1265.3 390.3 L1266.5 388.6 L1267.7 387.0 L1268.9 385.4 L1270.0 383.8 L1271.2 382.1 L1272.2 380.5 L1273.3 378.9 L1274.3 377.3 L1275.4 375.6 L1276.3 374.0 L1277.3 372.4 L1278.2 370.8 L1279.1 369.1 L1280.0 367.5 L1280.8 365.9 L1281.6 364.3 L1282.4 362.6 L1283.2 361.0 L1283.9 359.4 L1284.6 357.8 L1285.2 356.1 L1285.9 354.5 L1286.5 352.9 L1287.1 351.3 L1287.6 349.6 L1288.1 348.0 L1288.6 346.4 L1289.1 344.8 L1289.5 343.1 L1289.9 341.5 L1290.3 339.9 L1290.6 338.3 L1290.9 336.6 L1291.2 335.0 L1291.4 333.4 L1291.7 331.8 L1291.9 330.1 L1292.0 328.5 L1292.2 326.9 L1292.3 325.3 L1292.3 323.6 L1292.4 322.0 L1292.4 320.4 L1292.4 318.8 L1292.3 317.1 L1292.3 315.5 L1292.2 313.9 L1292.0 312.3 L1291.9 310.6 L1291.7 309.0 L1291.4 307.4 L1291.2 305.8 L1290.9 304.1 L1290.6 302.5 L1290.3 300.9 L1289.9 299.3 L1289.5 297.6 L1289.1 296.0 L1288.6 294.4 L1288.1 292.8 L1287.6 291.1 L1287.1 289.5 L1286.5 287.9 L1285.9 286.3 L1285.2 284.6 L1284.6 283.0 L1283.9 281.4 L1283.2 279.8 L1282.4 278.1 L1281.6 276.5 L1280.8 274.9 L1280.0 273.3 L1279.1 271.6 L1278.2 270.0 L1277.3 268.4 L1276.3 266.8 L1275.4 265.1 L1274.3 263.5 L1273.3 261.9 L1272.2 260.3 L1271.2 258.6 L1270.0 257.0 L1268.9 255.4 L1267.7 253.8 L1266.5 252.1 L1265.3 250.5 L1264.0 248.9 L1262.7 247.3 L1261.4 245.6 L1260.1 244.0 L1258.7 242.4 L1257.3 240.8 L1255.9 239.1 L1254.4 237.5 L1252.9 235.9 L1251.4 234.3 L1249.9 232.6 L1248.3 231.0 L1246.7 229.4 L1245.1 227.8 L1243.5 226.1 L1241.8 224.5 L1240.1 222.9 L1238.4 221.3 L1236.7 219.6 L1234.9 218.0 L1233.1 216.4 L1231.3 214.8 L1229.5 213.1 L1227.6 211.5 L1225.7 209.9 L1223.8 208.3 L1221.9 206.6 L1219.9 205.0 L1217.9 203.4 L1215.9 201.8 L1213.9 200.1 L1211.8 198.5 L1209.7 196.9 L1207.6 195.3 L1205.5 193.6 L1203.3 192.0 L1201.2 190.4 L1199.0 188.8 L1196.7 187.1 L1194.5 185.5 L1192.2 183.9 L1189.9 182.3 L1187.6 180.6 L1185.3 179.0 L1182.9 177.4 L1180.6 175.8 L1178.2 174.1 L1175.8 172.5 L1173.3 170.9 L1170.9 169.3 L1168.4 167.6 L1165.9 166.0 L1163.4 164.4 L1160.8 162.8 L1158.3 161.1 L1155.7 159.5 L1153.1 157.9 L1150.5 156.3 L1147.8 154.6 L1145.2 153.0 L1142.5 151.4 L1139.8 149.8 L1137.1 148.1 L1134.4 146.5 L1131.6 144.9 L1128.9 143.3 L1126.1 141.6 L1123.3 140.0 L1120.5 138.4 L1117.7 136.8 L1114.8 135.1 L1111.9 133.5 L1109.1 131.9 L1106.2 130.3 L1103.3 128.6 L1100.3 127.0 L1097.4 125.4 L1094.4 123.8 L1091.5 122.1 L1088.5 120.5 L1085.5 118.9 L1082.5 117.3 L1079.5 115.6 L1076.4 114.0 L1073.4 112.4 L1070.3 110.8 L1067.2 109.1 L1064.1 107.5 L1061.0 105.9 L1057.9 104.3 L1054.8 102.6 L1051.6 101.0 L1048.5 99.4 L1045.3 97.8 L1042.2 96.1 L1039.0 94.5 L1035.8 92.9 L1032.6 91.3 L1029.4 89.6 L1026.1 88.0 L1022.9 86.4 L1019.7 84.8 L1016.4 83.1 L1013.2 81.5 L1009.9 79.9 L1006.6 78.3 L1003.3 76.6 L1000.0 75.0 L996.7 73.4 L993.4 71.8 L990.1 70.1 L986.8 68.5 L983.5 66.9 L980.2 65.3 L976.8 63.6 L973.5 62.0 L970.1 60.4 L966.8 58.8 L963.4 57.1 L960.0 55.5 L956.7 53.9 L953.3 52.3 L949.9 50.6 L946.5 49.0 L943.2 47.4 L939.8 45.8 L936.4 44.1 L933.0 42.5 L929.6 40.9 L926.2 39.3 L922.8 37.6 L919.4 36.0 L916.0 34.4 L912.6 32.8 L909.2 31.1 L905.8 29.5 L902.4 27.9"/><path d="M902.4 612.9 L905.4 611.3 L908.4 609.6 L911.3 608.0 L914.3 606.4 L917.3 604.8 L920.3 603.1 L923.2 601.5 L926.2 599.9 L929.2 598.3 L932.1 596.6 L935.1 595.0 L938.1 593.4 L941.0 591.8 L944.0 590.1 L946.9 588.5 L949.9 586.9 L952.8 585.3 L955.8 583.6 L958.7 582.0 L961.7 580.4 L964.6 578.8 L967.5 577.1 L970.4 575.5 L973.3 573.9 L976.3 572.3 L979.2 570.6 L982.1 569.0 L985.0 567.4 L987.8 565.8 L990.7 564.1 L993.6 562.5 L996.5 560.9 L999.3 559.3 L1002.2 557.6 L1005.0 556.0 L1007.9 554.4 L1010.7 552.8 L1013.5 551.1 L1016.3 549.5 L1019.1 547.9 L1021.9 546.3 L1024.7 544.6 L1027.5 543.0 L1030.2 541.4 L1033.0 539.8 L1035.7 538.1 L1038.5 536.5 L1041.2 534.9 L1043.9 533.3 L1046.6 531.6 L1049.3 530.0 L1052.0 528.4 L1054.7 526.8 L1057.3 525.1 L1060.0 523.5 L1062.6 521.9 L1065.2 520.3 L1067.8 518.6 L1070.4 517.0 L1073.0 515.4 L1075.6 513.8 L1078.2 512.1 L1080.7 510.5 L1083.2 508.9 L1085.8 507.3 L1088.3 505.6 L1090.7 504.0 L1093.2 502.4 L1095.7 500.8 L1098.1 499.1 L1100.6 497.5 L1103.0 495.9 L1105.4 494.3 L1107.8 492.6 L1110.1 491.0 L1112.5 489.4 L1114.8 487.8 L1117.2 486.1 L1119.5 484.5 L1121.8 482.9 L1124.0 481.3 L1126.3 479.6 L1128.5 478.0 L1130.7 476.4 L1132.9 474.8 L1135.1 473.1 L1137.3 471.5 L1139.5 469.9 L1141.6 468.3 L1143.7 466.6 L1145.8 465.0 L1147.9 463.4 L1149.9 461.8 L1152.0 460.1 L1154.0 458.5 L1156.0 456.9 L1158.0 455.3 L1159.9 453.6 L1161.9 452.0 L1163.8 450.4 L1165.7 448.8 L1167.6 447.1 L1169.5 445.5 L1171.3 443.9 L1173.1 442.3 L1174.9 440.6 L1176.7 439.0 L1178.5 437.4 L1180.2 435.8 L1181.9 434.1 L1183.6 432.5 L1185.3 430.9 L1187.0 429.3 L1188.6 427.6 L1190.2 426.0 L1191.8 424.4 L1193.4 422.8 L1194.9 421.1 L1196.4 419.5 L1197.9 417.9 L1199.4 416.3 L1200.9 414.6 L1202.3 413.0 L1203.7 411.4 L1205.1 409.8 L1206.5 408.1 L1207.8 406.5 L1209.1 404.9 L1210.4 403.3 L1211.7 401.6 L1212.9 400.0 L1214.1 398.4 L1215.3 396.8 L1216.5 395.1 L1217.7 393.5 L1218.8 391.9 L1219.9 390.3 L1221.0 388.6 L1222.0 387.0 L1223.1 385.4 L1224.1 383.8 L1225.1 382.1 L1226.0 380.5 L1226.9 378.9 L1227.9 377.3 L1228.7 375.6 L1229.6 374.0 L1230.4 372.4 L1231.2 370.8 L1232.0 369.1 L1232.8 367.5 L1233.5 365.9 L1234.2 364.3 L1234.9 362.6 L1235.6 361.0 L1236.2 359.4 L1236.8 357.8 L1237.4 356.1 L1237.9 354.5 L1238.5 352.9 L1239.0 351.3 L1239.4 349.6 L1239.9 348.0 L1240.3 346.4 L1240.7 344.8 L1241.1 343.1 L1241.5 341.5 L1241.8 339.9 L1242.1 338.3 L1242.4 336.6 L1242.6 335.0 L1242.8 333.4 L1243.0 331.8 L1243.2 330.1 L1243.3 328.5 L1243.4 326.9 L1243.5 325.3 L1243.6 323.6 L1243.6 322.0 L1243.7 320.4 L1243.6 318.8 L1243.6 317.1 L1243.5 315.5 L1243.4 313.9 L1243.3 312.3 L1243.2 310.6 L1243.0 309.0 L1242.8 307.4 L1242.6 305.8 L1242.4 304.1 L1242.1 302.5 L1241.8 300.9 L1241.5 299.3 L1241.1 297.6 L1240.7 296.0 L1240.3 294.4 L1239.9 292.8 L1239.4 291.1 L1239.0 289.5 L1238.5 287.9 L1237.9 286.3 L1237.4 284.6 L1236.8 283.0 L1236.2 281.4 L1235.6 279.8 L1234.9 278.1 L1234.2 276.5 L1233.5 274.9 L1232.8 273.3 L1232.0 271.6 L1231.2 270.0 L1230.4 268.4 L1229.6 266.8 L1228.7 265.1 L1227.9 263.5 L1226.9 261.9 L1226.0 260.3 L1225.1 258.6 L1224.1 257.0 L1223.1 255.4 L1222.0 253.8 L1221.0 252.1 L1219.9 250.5 L1218.8 248.9 L1217.7 247.3 L1216.5 245.6 L1215.3 244.0 L1214.1 242.4 L1212.9 240.8 L1211.7 239.1 L1210.4 237.5 L1209.1 235.9 L1207.8 234.3 L1206.5 232.6 L1205.1 231.0 L1203.7 229.4 L1202.3 227.8 L1200.9 226.1 L1199.4 224.5 L1197.9 222.9 L1196.4 221.3 L1194.9 219.6 L1193.4 218.0 L1191.8 216.4 L1190.2 214.8 L1188.6 213.1 L1187.0 211.5 L1185.3 209.9 L1183.6 208.3 L1181.9 206.6 L1180.2 205.0 L1178.5 203.4 L1176.7 201.8 L1174.9 200.1 L1173.1 198.5 L1171.3 196.9 L1169.5 195.3 L1167.6 193.6 L1165.7 192.0 L1163.8 190.4 L1161.9 188.8 L1159.9 187.1 L1158.0 185.5 L1156.0 183.9 L1154.0 182.3 L1152.0 180.6 L1149.9 179.0 L1147.9 177.4 L1145.8 175.8 L1143.7 174.1 L1141.6 172.5 L1139.5 170.9 L1137.3 169.3 L1135.1 167.6 L1132.9 166.0 L1130.7 164.4 L1128.5 162.8 L1126.3 161.1 L1124.0 159.5 L1121.8 157.9 L1119.5 156.3 L1117.2 154.6 L1114.8 153.0 L1112.5 151.4 L1110.1 149.8 L1107.8 148.1 L1105.4 146.5 L1103.0 144.9 L1100.6 143.3 L1098.1 141.6 L1095.7 140.0 L1093.2 138.4 L1090.7 136.8 L1088.3 135.1 L1085.8 133.5 L1083.2 131.9 L1080.7 130.3 L1078.2 128.6 L1075.6 127.0 L1073.0 125.4 L1070.4 123.8 L1067.8 122.1 L1065.2 120.5 L1062.6 118.9 L1060.0 117.3 L1057.3 115.6 L1054.7 114.0 L1052.0 112.4 L1049.3 110.8 L1046.6 109.1 L1043.9 107.5 L1041.2 105.9 L1038.5 104.3 L1035.7 102.6 L1033.0 101.0 L1030.2 99.4 L1027.5 97.8 L1024.7 96.1 L1021.9 94.5 L1019.1 92.9 L1016.3 91.3 L1013.5 89.6 L1010.7 88.0 L1007.9 86.4 L1005.0 84.8 L1002.2 83.1 L999.3 81.5 L996.5 79.9 L993.6 78.3 L990.7 76.6 L987.8 75.0 L985.0 73.4 L982.1 71.8 L979.2 70.1 L976.3 68.5 L973.3 66.9 L970.4 65.3 L967.5 63.6 L964.6 62.0 L961.7 60.4 L958.7 58.8 L955.8 57.1 L952.8 55.5 L949.9 53.9 L946.9 52.3 L944.0 50.6 L941.0 49.0 L938.1 47.4 L935.1 45.8 L932.1 44.1 L929.2 42.5 L926.2 40.9 L923.2 39.3 L920.3 37.6 L917.3 36.0 L914.3 34.4 L911.3 32.8 L908.4 31.1 L905.4 29.5 L902.4 27.9"/><path d="M902.4 612.9 L905.0 611.3 L907.5 609.6 L910.1 608.0 L912.6 606.4 L915.2 604.8 L917.7 603.1 L920.3 601.5 L922.8 599.9 L925.3 598.3 L927.9 596.6 L930.4 595.0 L933.0 593.4 L935.5 591.8 L938.0 590.1 L940.6 588.5 L943.1 586.9 L945.6 585.3 L948.2 583.6 L950.7 582.0 L953.2 580.4 L955.7 578.8 L958.2 577.1 L960.7 575.5 L963.2 573.9 L965.7 572.3 L968.2 570.6 L970.7 569.0 L973.2 567.4 L975.6 565.8 L978.1 564.1 L980.6 562.5 L983.0 560.9 L985.5 559.3 L987.9 557.6 L990.4 556.0 L992.8 554.4 L995.2 552.8 L997.6 551.1 L1000.0 549.5 L1002.4 547.9 L1004.8 546.3 L1007.2 544.6 L1009.6 543.0 L1012.0 541.4 L1014.3 539.8 L1016.7 538.1 L1019.0 536.5 L1021.4 534.9 L1023.7 533.3 L1026.0 531.6 L1028.3 530.0 L1030.6 528.4 L1032.9 526.8 L1035.2 525.1 L1037.5 523.5 L1039.7 521.9 L1042.0 520.3 L1044.2 518.6 L1046.4 517.0 L1048.7 515.4 L1050.9 513.8 L1053.0 512.1 L1055.2 510.5 L1057.4 508.9 L1059.6 507.3 L1061.7 505.6 L1063.8 504.0 L1066.0 502.4 L1068.1 500.8 L1070.2 499.1 L1072.3 497.5 L1074.3 495.9 L1076.4 494.3 L1078.4 492.6 L1080.5 491.0 L1082.5 489.4 L1084.5 487.8 L1086.5 486.1 L1088.5 484.5 L1090.4 482.9 L1092.4 481.3 L1094.3 479.6 L1096.2 478.0 L1098.1 476.4 L1100.0 474.8 L1101.9 473.1 L1103.7 471.5 L1105.6 469.9 L1107.4 468.3 L1109.2 466.6 L1111.0 465.0 L1112.8 463.4 L1114.6 461.8 L1116.3 460.1 L1118.1 458.5 L1119.8 456.9 L1121.5 455.3 L1123.2 453.6 L1124.8 452.0 L1126.5 450.4 L1128.1 448.8 L1129.7 447.1 L1131.3 445.5 L1132.9 443.9 L1134.5 442.3 L1136.0 440.6 L1137.5 439.0 L1139.0 437.4 L1140.5 435.8 L1142.0 434.1 L1143.5 432.5 L1144.9 430.9 L1146.3 429.3 L1147.7 427.6 L1149.1 426.0 L1150.5 424.4 L1151.8 422.8 L1153.1 421.1 L1154.4 419.5 L1155.7 417.9 L1157.0 416.3 L1158.2 414.6 L1159.5 413.0 L1160.7 411.4 L1161.9 409.8 L1163.0 408.1 L1164.2 406.5 L1165.3 404.9 L1166.4 403.3 L1167.5 401.6 L1168.6 400.0 L1169.6 398.4 L1170.6 396.8 L1171.6 395.1 L1172.6 393.5 L1173.6 391.9 L1174.5 390.3 L1175.5 388.6 L1176.4 387.0 L1177.3 385.4 L1178.1 383.8 L1179.0 382.1 L1179.8 380.5 L1180.6 378.9 L1181.4 377.3 L1182.1 375.6 L1182.9 374.0 L1183.6 372.4 L1184.3 370.8 L1184.9 369.1 L1185.6 367.5 L1186.2 365.9 L1186.8 364.3 L1187.4 362.6 L1188.0 361.0 L1188.5 359.4 L1189.0 357.8 L1189.5 356.1 L1190.0 354.5 L1190.5 352.9 L1190.9 351.3 L1191.3 349.6 L1191.7 348.0 L1192.1 346.4 L1192.4 344.8 L1192.7 343.1 L1193.0 341.5 L1193.3 339.9 L1193.6 338.3 L1193.8 336.6 L1194.0 335.0 L1194.2 333.4 L1194.4 331.8 L1194.5 330.1 L1194.6 328.5 L1194.7 326.9 L1194.8 325.3 L1194.9 323.6 L1194.9 322.0 L1194.9 320.4 L1194.9 318.8 L1194.9 317.1 L1194.8 315.5 L1194.7 313.9 L1194.6 312.3 L1194.5 310.6 L1194.4 309.0 L1194.2 307.4 L1194.0 305.8 L1193.8 304.1 L1193.6 302.5 L1193.3 300.9 L1193.0 299.3 L1192.7 297.6 L1192.4 296.0 L1192.1 294.4 L1191.7 292.8 L1191.3 291.1 L1190.9 289.5 L1190.5 287.9 L1190.0 286.3 L1189.5 284.6 L1189.0 283.0 L1188.5 281.4 L1188.0 279.8 L1187.4 278.1 L1186.8 276.5 L1186.2 274.9 L1185.6 273.3 L1184.9 271.6 L1184.3 270.0 L1183.6 268.4 L1182.9 266.8 L1182.1 265.1 L1181.4 263.5 L1180.6 261.9 L1179.8 260.3 L1179.0 258.6 L1178.1 257.0 L1177.3 255.4 L1176.4 253.8 L1175.5 252.1 L1174.5 250.5 L1173.6 248.9 L1172.6 247.3 L1171.6 245.6 L1170.6 244.0 L1169.6 242.4 L1168.6 240.8 L1167.5 239.1 L1166.4 237.5 L1165.3 235.9 L1164.2 234.3 L1163.0 232.6 L1161.9 231.0 L1160.7 229.4 L1159.5 227.8 L1158.2 226.1 L1157.0 224.5 L1155.7 222.9 L1154.4 221.3 L1153.1 219.6 L1151.8 218.0 L1150.5 216.4 L1149.1 214.8 L1147.7 213.1 L1146.3 211.5 L1144.9 209.9 L1143.5 208.3 L1142.0 206.6 L1140.5 205.0 L1139.0 203.4 L1137.5 201.8 L1136.0 200.1 L1134.5 198.5 L1132.9 196.9 L1131.3 195.3 L1129.7 193.6 L1128.1 192.0 L1126.5 190.4 L1124.8 188.8 L1123.2 187.1 L1121.5 185.5 L1119.8 183.9 L1118.1 182.3 L1116.3 180.6 L1114.6 179.0 L1112.8 177.4 L1111.0 175.8 L1109.2 174.1 L1107.4 172.5 L1105.6 170.9 L1103.7 169.3 L1101.9 167.6 L1100.0 166.0 L1098.1 164.4 L1096.2 162.8 L1094.3 161.1 L1092.4 159.5 L1090.4 157.9 L1088.5 156.3 L1086.5 154.6 L1084.5 153.0 L1082.5 151.4 L1080.5 149.8 L1078.4 148.1 L1076.4 146.5 L1074.3 144.9 L1072.3 143.3 L1070.2 141.6 L1068.1 140.0 L1066.0 138.4 L1063.8 136.8 L1061.7 135.1 L1059.6 133.5 L1057.4 131.9 L1055.2 130.3 L1053.0 128.6 L1050.9 127.0 L1048.7 125.4 L1046.4 123.8 L1044.2 122.1 L1042.0 120.5 L1039.7 118.9 L1037.5 117.3 L1035.2 115.6 L1032.9 114.0 L1030.6 112.4 L1028.3 110.8 L1026.0 109.1 L1023.7 107.5 L1021.4 105.9 L1019.0 104.3 L1016.7 102.6 L1014.3 101.0 L1012.0 99.4 L1009.6 97.8 L1007.2 96.1 L1004.8 94.5 L1002.4 92.9 L1000.0 91.3 L997.6 89.6 L995.2 88.0 L992.8 86.4 L990.4 84.8 L987.9 83.1 L985.5 81.5 L983.0 79.9 L980.6 78.3 L978.1 76.6 L975.6 75.0 L973.2 73.4 L970.7 71.8 L968.2 70.1 L965.7 68.5 L963.2 66.9 L960.7 65.3 L958.2 63.6 L955.7 62.0 L953.2 60.4 L950.7 58.8 L948.2 57.1 L945.6 55.5 L943.1 53.9 L940.6 52.3 L938.0 50.6 L935.5 49.0 L933.0 47.4 L930.4 45.8 L927.9 44.1 L925.3 42.5 L922.8 40.9 L920.3 39.3 L917.7 37.6 L915.2 36.0 L912.6 34.4 L910.1 32.8 L907.5 31.1 L905.0 29.5 L902.4 27.9"/><path d="M902.4 612.9 L904.5 611.3 L906.7 609.6 L908.8 608.0 L910.9 606.4 L913.0 604.8 L915.2 603.1 L917.3 601.5 L919.4 599.9 L921.5 598.3 L923.6 596.6 L925.8 595.0 L927.9 593.4 L930.0 591.8 L932.1 590.1 L934.2 588.5 L936.3 586.9 L938.4 585.3 L940.5 583.6 L942.6 582.0 L944.7 580.4 L946.8 578.8 L948.9 577.1 L951.0 575.5 L953.1 573.9 L955.2 572.3 L957.2 570.6 L959.3 569.0 L961.4 567.4 L963.4 565.8 L965.5 564.1 L967.5 562.5 L969.6 560.9 L971.6 559.3 L973.7 557.6 L975.7 556.0 L977.7 554.4 L979.7 552.8 L981.8 551.1 L983.8 549.5 L985.8 547.9 L987.8 546.3 L989.8 544.6 L991.7 543.0 L993.7 541.4 L995.7 539.8 L997.6 538.1 L999.6 536.5 L1001.5 534.9 L1003.5 533.3 L1005.4 531.6 L1007.3 530.0 L1009.3 528.4 L1011.2 526.8 L1013.1 525.1 L1015.0 523.5 L1016.8 521.9 L1018.7 520.3 L1020.6 518.6 L1022.4 517.0 L1024.3 515.4 L1026.1 513.8 L1027.9 512.1 L1029.8 510.5 L1031.6 508.9 L1033.4 507.3 L1035.2 505.6 L1036.9 504.0 L1038.7 502.4 L1040.5 500.8 L1042.2 499.1 L1043.9 497.5 L1045.7 495.9 L1047.4 494.3 L1049.1 492.6 L1050.8 491.0 L1052.5 489.4 L1054.1 487.8 L1055.8 486.1 L1057.4 484.5 L1059.1 482.9 L1060.7 481.3 L1062.3 479.6 L1063.9 478.0 L1065.5 476.4 L1067.1 474.8 L1068.6 473.1 L1070.2 471.5 L1071.7 469.9 L1073.2 468.3 L1074.8 466.6 L1076.3 465.0 L1077.7 463.4 L1079.2 461.8 L1080.7 460.1 L1082.1 458.5 L1083.5 456.9 L1085.0 455.3 L1086.4 453.6 L1087.7 452.0 L1089.1 450.4 L1090.5 448.8 L1091.8 447.1 L1093.2 445.5 L1094.5 443.9 L1095.8 442.3 L1097.1 440.6 L1098.3 439.0 L1099.6 437.4 L1100.8 435.8 L1102.1 434.1 L1103.3 432.5 L1104.5 430.9 L1105.7 429.3 L1106.8 427.6 L1108.0 426.0 L1109.1 424.4 L1110.2 422.8 L1111.3 421.1 L1112.4 419.5 L1113.5 417.9 L1114.5 416.3 L1115.6 414.6 L1116.6 413.0 L1117.6 411.4 L1118.6 409.8 L1119.6 408.1 L1120.5 406.5 L1121.5 404.9 L1122.4 403.3 L1123.3 401.6 L1124.2 400.0 L1125.1 398.4 L1125.9 396.8 L1126.8 395.1 L1127.6 393.5 L1128.4 391.9 L1129.2 390.3 L1130.0 388.6 L1130.7 387.0 L1131.5 385.4 L1132.2 383.8 L1132.9 382.1 L1133.6 380.5 L1134.2 378.9 L1134.9 377.3 L1135.5 375.6 L1136.1 374.0 L1136.7 372.4 L1137.3 370.8 L1137.8 369.1 L1138.4 367.5 L1138.9 365.9 L1139.4 364.3 L1139.9 362.6 L1140.4 361.0 L1140.8 359.4 L1141.3 357.8 L1141.7 356.1 L1142.1 354.5 L1142.4 352.9 L1142.8 351.3 L1143.1 349.6 L1143.5 348.0 L1143.8 346.4 L1144.1 344.8 L1144.3 343.1 L1144.6 341.5 L1144.8 339.9 L1145.0 338.3 L1145.2 336.6 L1145.4 335.0 L1145.6 333.4 L1145.7 331.8 L1145.8 330.1 L1145.9 328.5 L1146.0 326.9 L1146.1 325.3 L1146.1 323.6 L1146.1 322.0 L1146.2 320.4 L1146.1 318.8 L1146.1 317.1 L1146.1 315.5 L1146.0 313.9 L1145.9 312.3 L1145.8 310.6 L1145.7 309.0 L1145.6 307.4 L1145.4 305.8 L1145.2 304.1 L1145.0 302.5 L1144.8 300.9 L1144.6 299.3 L1144.3 297.6 L1144.1 296.0 L1143.8 294.4 L1143.5 292.8 L1143.1 291.1 L1142.8 289.5 L1142.4 287.9 L1142.1 286.3 L1141.7 284.6 L1141.3 283.0 L1140.8 281.4 L1140.4 279.8 L1139.9 278.1 L1139.4 276.5 L1138.9 274.9 L1138.4 273.3 L1137.8 271.6 L1137.3 270.0 L1136.7 268.4 L1136.1 266.8 L1135.5 265.1 L1134.9 263.5 L1134.2 261.9 L1133.6 260.3 L1132.9 258.6 L1132.2 257.0 L1131.5 255.4 L1130.7 253.8 L1130.0 252.1 L1129.2 250.5 L1128.4 248.9 L1127.6 247.3 L1126.8 245.6 L1125.9 244.0 L1125.1 242.4 L1124.2 240.8 L1123.3 239.1 L1122.4 237.5 L1121.5 235.9 L1120.5 234.3 L1119.6 232.6 L1118.6 231.0 L1117.6 229.4 L1116.6 227.8 L1115.6 226.1 L1114.5 224.5 L1113.5 222.9 L1112.4 221.3 L1111.3 219.6 L1110.2 218.0 L1109.1 216.4 L1108.0 214.8 L1106.8 213.1 L1105.7 211.5 L1104.5 209.9 L1103.3 208.3 L1102.1 206.6 L1100.8 205.0 L1099.6 203.4 L1098.3 201.8 L1097.1 200.1 L1095.8 198.5 L1094.5 196.9 L1093.2 195.3 L1091.8 193.6 L1090.5 192.0 L1089.1 190.4 L1087.7 188.8 L1086.4 187.1 L1085.0 185.5 L1083.5 183.9 L1082.1 182.3 L1080.7 180.6 L1079.2 179.0 L1077.7 177.4 L1076.3 175.8 L1074.8 174.1 L1073.2 172.5 L1071.7 170.9 L1070.2 169.3 L1068.6 167.6 L1067.1 166.0 L1065.5 164.4 L1063.9 162.8 L1062.3 161.1 L1060.7 159.5 L1059.1 157.9 L1057.4 156.3 L1055.8 154.6 L1054.1 153.0 L1052.5 151.4 L1050.8 149.8 L1049.1 148.1 L1047.4 146.5 L1045.7 144.9 L1043.9 143.3 L1042.2 141.6 L1040.5 140.0 L1038.7 138.4 L1036.9 136.8 L1035.2 135.1 L1033.4 133.5 L1031.6 131.9 L1029.8 130.3 L1027.9 128.6 L1026.1 127.0 L1024.3 125.4 L1022.4 123.8 L1020.6 122.1 L1018.7 120.5 L1016.8 118.9 L1015.0 117.3 L1013.1 115.6 L1011.2 114.0 L1009.3 112.4 L1007.3 110.8 L1005.4 109.1 L1003.5 107.5 L1001.5 105.9 L999.6 104.3 L997.6 102.6 L995.7 101.0 L993.7 99.4 L991.7 97.8 L989.8 96.1 L987.8 94.5 L985.8 92.9 L983.8 91.3 L981.8 89.6 L979.7 88.0 L977.7 86.4 L975.7 84.8 L973.7 83.1 L971.6 81.5 L969.6 79.9 L967.5 78.3 L965.5 76.6 L963.4 75.0 L961.4 73.4 L959.3 71.8 L957.2 70.1 L955.2 68.5 L953.1 66.9 L951.0 65.3 L948.9 63.6 L946.8 62.0 L944.7 60.4 L942.6 58.8 L940.5 57.1 L938.4 55.5 L936.3 53.9 L934.2 52.3 L932.1 50.6 L930.0 49.0 L927.9 47.4 L925.8 45.8 L923.6 44.1 L921.5 42.5 L919.4 40.9 L917.3 39.3 L915.2 37.6 L913.0 36.0 L910.9 34.4 L908.8 32.8 L906.7 31.1 L904.5 29.5 L902.4 27.9"/><path d="M902.4 612.9 L904.1 611.3 L905.8 609.6 L907.5 608.0 L909.2 606.4 L910.9 604.8 L912.6 603.1 L914.3 601.5 L916.0 599.9 L917.7 598.3 L919.4 596.6 L921.1 595.0 L922.8 593.4 L924.5 591.8 L926.2 590.1 L927.9 588.5 L929.5 586.9 L931.2 585.3 L932.9 583.6 L934.6 582.0 L936.3 580.4 L937.9 578.8 L939.6 577.1 L941.3 575.5 L942.9 573.9 L944.6 572.3 L946.3 570.6 L947.9 569.0 L949.6 567.4 L951.2 565.8 L952.9 564.1 L954.5 562.5 L956.1 560.9 L957.8 559.3 L959.4 557.6 L961.0 556.0 L962.7 554.4 L964.3 552.8 L965.9 551.1 L967.5 549.5 L969.1 547.9 L970.7 546.3 L972.3 544.6 L973.9 543.0 L975.4 541.4 L977.0 539.8 L978.6 538.1 L980.2 536.5 L981.7 534.9 L983.3 533.3 L984.8 531.6 L986.3 530.0 L987.9 528.4 L989.4 526.8 L990.9 525.1 L992.4 523.5 L993.9 521.9 L995.4 520.3 L996.9 518.6 L998.4 517.0 L999.9 515.4 L1001.4 513.8 L1002.8 512.1 L1004.3 510.5 L1005.7 508.9 L1007.2 507.3 L1008.6 505.6 L1010.0 504.0 L1011.4 502.4 L1012.8 500.8 L1014.2 499.1 L1015.6 497.5 L1017.0 495.9 L1018.4 494.3 L1019.8 492.6 L1021.1 491.0 L1022.5 489.4 L1023.8 487.8 L1025.1 486.1 L1026.4 484.5 L1027.7 482.9 L1029.0 481.3 L1030.3 479.6 L1031.6 478.0 L1032.9 476.4 L1034.1 474.8 L1035.4 473.1 L1036.6 471.5 L1037.9 469.9 L1039.1 468.3 L1040.3 466.6 L1041.5 465.0 L1042.7 463.4 L1043.8 461.8 L1045.0 460.1 L1046.2 458.5 L1047.3 456.9 L1048.4 455.3 L1049.6 453.6 L1050.7 452.0 L1051.8 450.4 L1052.9 448.8 L1053.9 447.1 L1055.0 445.5 L1056.1 443.9 L1057.1 442.3 L1058.1 440.6 L1059.2 439.0 L1060.2 437.4 L1061.2 435.8 L1062.1 434.1 L1063.1 432.5 L1064.1 430.9 L1065.0 429.3 L1065.9 427.6 L1066.9 426.0 L1067.8 424.4 L1068.7 422.8 L1069.5 421.1 L1070.4 419.5 L1071.3 417.9 L1072.1 416.3 L1073.0 414.6 L1073.8 413.0 L1074.6 411.4 L1075.4 409.8 L1076.1 408.1 L1076.9 406.5 L1077.7 404.9 L1078.4 403.3 L1079.1 401.6 L1079.8 400.0 L1080.5 398.4 L1081.2 396.8 L1081.9 395.1 L1082.6 393.5 L1083.2 391.9 L1083.8 390.3 L1084.4 388.6 L1085.1 387.0 L1085.6 385.4 L1086.2 383.8 L1086.8 382.1 L1087.3 380.5 L1087.9 378.9 L1088.4 377.3 L1088.9 375.6 L1089.4 374.0 L1089.8 372.4 L1090.3 370.8 L1090.8 369.1 L1091.2 367.5 L1091.6 365.9 L1092.0 364.3 L1092.4 362.6 L1092.8 361.0 L1093.1 359.4 L1093.5 357.8 L1093.8 356.1 L1094.1 354.5 L1094.4 352.9 L1094.7 351.3 L1095.0 349.6 L1095.3 348.0 L1095.5 346.4 L1095.7 344.8 L1095.9 343.1 L1096.1 341.5 L1096.3 339.9 L1096.5 338.3 L1096.7 336.6 L1096.8 335.0 L1096.9 333.4 L1097.0 331.8 L1097.1 330.1 L1097.2 328.5 L1097.3 326.9 L1097.3 325.3 L1097.4 323.6 L1097.4 322.0 L1097.4 320.4 L1097.4 318.8 L1097.4 317.1 L1097.3 315.5 L1097.3 313.9 L1097.2 312.3 L1097.1 310.6 L1097.0 309.0 L1096.9 307.4 L1096.8 305.8 L1096.7 304.1 L1096.5 302.5 L1096.3 300.9 L1096.1 299.3 L1095.9 297.6 L1095.7 296.0 L1095.5 294.4 L1095.3 292.8 L1095.0 291.1 L1094.7 289.5 L1094.4 287.9 L1094.1 286.3 L1093.8 284.6 L1093.5 283.0 L1093.1 281.4 L1092.8 279.8 L1092.4 278.1 L1092.0 276.5 L1091.6 274.9 L1091.2 273.3 L1090.8 271.6 L1090.3 270.0 L1089.8 268.4 L1089.4 266.8 L1088.9 265.1 L1088.4 263.5 L1087.9 261.9 L1087.3 260.3 L1086.8 258.6 L1086.2 257.0 L1085.6 255.4 L1085.1 253.8 L1084.4 252.1 L1083.8 250.5 L1083.2 248.9 L1082.6 247.3 L1081.9 245.6 L1081.2 244.0 L1080.5 242.4 L1079.8 240.8 L1079.1 239.1 L1078.4 237.5 L1077.7 235.9 L1076.9 234.3 L1076.1 232.6 L1075.4 231.0 L1074.6 229.4 L1073.8 227.8 L1073.0 226.1 L1072.1 224.5 L1071.3 222.9 L1070.4 221.3 L1069.5 219.6 L1068.7 218.0 L1067.8 216.4 L1066.9 214.8 L1065.9 213.1 L1065.0 211.5 L1064.1 209.9 L1063.1 208.3 L1062.1 206.6 L1061.2 205.0 L1060.2 203.4 L1059.2 201.8 L1058.1 200.1 L1057.1 198.5 L1056.1 196.9 L1055.0 195.3 L1053.9 193.6 L1052.9 192.0 L1051.8 190.4 L1050.7 188.8 L1049.6 187.1 L1048.4 185.5 L1047.3 183.9 L1046.2 182.3 L1045.0 180.6 L1043.8 179.0 L1042.7 177.4 L1041.5 175.8 L1040.3 174.1 L1039.1 172.5 L1037.9 170.9 L1036.6 169.3 L1035.4 167.6 L1034.1 166.0 L1032.9 164.4 L1031.6 162.8 L1030.3 161.1 L1029.0 159.5 L1027.7 157.9 L1026.4 156.3 L1025.1 154.6 L1023.8 153.0 L1022.5 151.4 L1021.1 149.8 L1019.8 148.1 L1018.4 146.5 L1017.0 144.9 L1015.6 143.3 L1014.2 141.6 L1012.8 140.0 L1011.4 138.4 L1010.0 136.8 L1008.6 135.1 L1007.2 133.5 L1005.7 131.9 L1004.3 130.3 L1002.8 128.6 L1001.4 127.0 L999.9 125.4 L998.4 123.8 L996.9 122.1 L995.4 120.5 L993.9 118.9 L992.4 117.3 L990.9 115.6 L989.4 114.0 L987.9 112.4 L986.3 110.8 L984.8 109.1 L983.3 107.5 L981.7 105.9 L980.2 104.3 L978.6 102.6 L977.0 101.0 L975.4 99.4 L973.9 97.8 L972.3 96.1 L970.7 94.5 L969.1 92.9 L967.5 91.3 L965.9 89.6 L964.3 88.0 L962.7 86.4 L961.0 84.8 L959.4 83.1 L957.8 81.5 L956.1 79.9 L954.5 78.3 L952.9 76.6 L951.2 75.0 L949.6 73.4 L947.9 71.8 L946.3 70.1 L944.6 68.5 L942.9 66.9 L941.3 65.3 L939.6 63.6 L937.9 62.0 L936.3 60.4 L934.6 58.8 L932.9 57.1 L931.2 55.5 L929.5 53.9 L927.9 52.3 L926.2 50.6 L924.5 49.0 L922.8 47.4 L921.1 45.8 L919.4 44.1 L917.7 42.5 L916.0 40.9 L914.3 39.3 L912.6 37.6 L910.9 36.0 L909.2 34.4 L907.5 32.8 L905.8 31.1 L904.1 29.5 L902.4 27.9"/><path d="M902.4 612.9 L903.7 611.3 L905.0 609.6 L906.2 608.0 L907.5 606.4 L908.8 604.8 L910.1 603.1 L911.3 601.5 L912.6 599.9 L913.9 598.3 L915.1 596.6 L916.4 595.0 L917.7 593.4 L919.0 591.8 L920.2 590.1 L921.5 588.5 L922.8 586.9 L924.0 585.3 L925.3 583.6 L926.5 582.0 L927.8 580.4 L929.1 578.8 L930.3 577.1 L931.6 575.5 L932.8 573.9 L934.1 572.3 L935.3 570.6 L936.5 569.0 L937.8 567.4 L939.0 565.8 L940.3 564.1 L941.5 562.5 L942.7 560.9 L943.9 559.3 L945.2 557.6 L946.4 556.0 L947.6 554.4 L948.8 552.8 L950.0 551.1 L951.2 549.5 L952.4 547.9 L953.6 546.3 L954.8 544.6 L956.0 543.0 L957.2 541.4 L958.4 539.8 L959.5 538.1 L960.7 536.5 L961.9 534.9 L963.0 533.3 L964.2 531.6 L965.4 530.0 L966.5 528.4 L967.7 526.8 L968.8 525.1 L969.9 523.5 L971.1 521.9 L972.2 520.3 L973.3 518.6 L974.4 517.0 L975.5 515.4 L976.6 513.8 L977.7 512.1 L978.8 510.5 L979.9 508.9 L981.0 507.3 L982.1 505.6 L983.1 504.0 L984.2 502.4 L985.2 500.8 L986.3 499.1 L987.3 497.5 L988.4 495.9 L989.4 494.3 L990.4 492.6 L991.4 491.0 L992.4 489.4 L993.4 487.8 L994.4 486.1 L995.4 484.5 L996.4 482.9 L997.4 481.3 L998.3 479.6 L999.3 478.0 L1000.3 476.4 L1001.2 474.8 L1002.1 473.1 L1003.1 471.5 L1004.0 469.9 L1004.9 468.3 L1005.8 466.6 L1006.7 465.0 L1007.6 463.4 L1008.5 461.8 L1009.4 460.1 L1010.2 458.5 L1011.1 456.9 L1011.9 455.3 L1012.8 453.6 L1013.6 452.0 L1014.4 450.4 L1015.3 448.8 L1016.1 447.1 L1016.9 445.5 L1017.6 443.9 L1018.4 442.3 L1019.2 440.6 L1020.0 439.0 L1020.7 437.4 L1021.5 435.8 L1022.2 434.1 L1022.9 432.5 L1023.6 430.9 L1024.4 429.3 L1025.1 427.6 L1025.7 426.0 L1026.4 424.4 L1027.1 422.8 L1027.8 421.1 L1028.4 419.5 L1029.1 417.9 L1029.7 416.3 L1030.3 414.6 L1030.9 413.0 L1031.5 411.4 L1032.1 409.8 L1032.7 408.1 L1033.3 406.5 L1033.8 404.9 L1034.4 403.3 L1034.9 401.6 L1035.5 400.0 L1036.0 398.4 L1036.5 396.8 L1037.0 395.1 L1037.5 393.5 L1038.0 391.9 L1038.5 390.3 L1038.9 388.6 L1039.4 387.0 L1039.8 385.4 L1040.3 383.8 L1040.7 382.1 L1041.1 380.5 L1041.5 378.9 L1041.9 377.3 L1042.3 375.6 L1042.6 374.0 L1043.0 372.4 L1043.3 370.8 L1043.7 369.1 L1044.0 367.5 L1044.3 365.9 L1044.6 364.3 L1044.9 362.6 L1045.2 361.0 L1045.5 359.4 L1045.7 357.8 L1046.0 356.1 L1046.2 354.5 L1046.4 352.9 L1046.6 351.3 L1046.8 349.6 L1047.0 348.0 L1047.2 346.4 L1047.4 344.8 L1047.6 343.1 L1047.7 341.5 L1047.8 339.9 L1048.0 338.3 L1048.1 336.6 L1048.2 335.0 L1048.3 333.4 L1048.4 331.8 L1048.4 330.1 L1048.5 328.5 L1048.6 326.9 L1048.6 325.3 L1048.6 323.6 L1048.6 322.0 L1048.7 320.4 L1048.6 318.8 L1048.6 317.1 L1048.6 315.5 L1048.6 313.9 L1048.5 312.3 L1048.4 310.6 L1048.4 309.0 L1048.3 307.4 L1048.2 305.8 L1048.1 304.1 L1048.0 302.5 L1047.8 300.9 L1047.7 299.3 L1047.6 297.6 L1047.4 296.0 L1047.2 294.4 L1047.0 292.8 L1046.8 291.1 L1046.6 289.5 L1046.4 287.9 L1046.2 286.3 L1046.0 284.6 L1045.7 283.0 L1045.5 281.4 L1045.2 279.8 L1044.9 278.1 L1044.6 276.5 L1044.3 274.9 L1044.0 273.3 L1043.7 271.6 L1043.3 270.0 L1043.0 268.4 L1042.6 266.8 L1042.3 265.1 L1041.9 263.5 L1041.5 261.9 L1041.1 260.3 L1040.7 258.6 L1040.3 257.0 L1039.8 255.4 L1039.4 253.8 L1038.9 252.1 L1038.5 250.5 L1038.0 248.9 L1037.5 247.3 L1037.0 245.6 L1036.5 244.0 L1036.0 242.4 L1035.5 240.8 L1034.9 239.1 L1034.4 237.5 L1033.8 235.9 L1033.3 234.3 L1032.7 232.6 L1032.1 231.0 L1031.5 229.4 L1030.9 227.8 L1030.3 226.1 L1029.7 224.5 L1029.1 222.9 L1028.4 221.3 L1027.8 219.6 L1027.1 218.0 L1026.4 216.4 L1025.7 214.8 L1025.1 213.1 L1024.4 211.5 L1023.6 209.9 L1022.9 208.3 L1022.2 206.6 L1021.5 205.0 L1020.7 203.4 L1020.0 201.8 L1019.2 200.1 L1018.4 198.5 L1017.6 196.9 L1016.9 195.3 L1016.1 193.6 L1015.3 192.0 L1014.4 190.4 L1013.6 188.8 L1012.8 187.1 L1011.9 185.5 L1011.1 183.9 L1010.2 182.3 L1009.4 180.6 L1008.5 179.0 L1007.6 177.4 L1006.7 175.8 L1005.8 174.1 L1004.9 172.5 L1004.0 170.9 L1003.1 169.3 L1002.1 167.6 L1001.2 166.0 L1000.3 164.4 L999.3 162.8 L998.3 161.1 L997.4 159.5 L996.4 157.9 L995.4 156.3 L994.4 154.6 L993.4 153.0 L992.4 151.4 L991.4 149.8 L990.4 148.1 L989.4 146.5 L988.4 144.9 L987.3 143.3 L986.3 141.6 L985.2 140.0 L984.2 138.4 L983.1 136.8 L982.1 135.1 L981.0 133.5 L979.9 131.9 L978.8 130.3 L977.7 128.6 L976.6 127.0 L975.5 125.4 L974.4 123.8 L973.3 122.1 L972.2 120.5 L971.1 118.9 L969.9 117.3 L968.8 115.6 L967.7 114.0 L966.5 112.4 L965.4 110.8 L964.2 109.1 L963.0 107.5 L961.9 105.9 L960.7 104.3 L959.5 102.6 L958.4 101.0 L957.2 99.4 L956.0 97.8 L954.8 96.1 L953.6 94.5 L952.4 92.9 L951.2 91.3 L950.0 89.6 L948.8 88.0 L947.6 86.4 L946.4 84.8 L945.2 83.1 L943.9 81.5 L942.7 79.9 L941.5 78.3 L940.3 76.6 L939.0 75.0 L937.8 73.4 L936.5 71.8 L935.3 70.1 L934.1 68.5 L932.8 66.9 L931.6 65.3 L930.3 63.6 L929.1 62.0 L927.8 60.4 L926.5 58.8 L925.3 57.1 L924.0 55.5 L922.8 53.9 L921.5 52.3 L920.2 50.6 L919.0 49.0 L917.7 47.4 L916.4 45.8 L915.1 44.1 L913.9 42.5 L912.6 40.9 L911.3 39.3 L910.1 37.6 L908.8 36.0 L907.5 34.4 L906.2 32.8 L905.0 31.1 L903.7 29.5 L902.4 27.9"/><path d="M902.4 612.9 L903.3 611.3 L904.1 609.6 L905.0 608.0 L905.8 606.4 L906.7 604.8 L907.5 603.1 L908.4 601.5 L909.2 599.9 L910.0 598.3 L910.9 596.6 L911.7 595.0 L912.6 593.4 L913.4 591.8 L914.3 590.1 L915.1 588.5 L916.0 586.9 L916.8 585.3 L917.7 583.6 L918.5 582.0 L919.3 580.4 L920.2 578.8 L921.0 577.1 L921.8 575.5 L922.7 573.9 L923.5 572.3 L924.3 570.6 L925.2 569.0 L926.0 567.4 L926.8 565.8 L927.6 564.1 L928.5 562.5 L929.3 560.9 L930.1 559.3 L930.9 557.6 L931.7 556.0 L932.5 554.4 L933.3 552.8 L934.1 551.1 L934.9 549.5 L935.7 547.9 L936.5 546.3 L937.3 544.6 L938.1 543.0 L938.9 541.4 L939.7 539.8 L940.5 538.1 L941.3 536.5 L942.1 534.9 L942.8 533.3 L943.6 531.6 L944.4 530.0 L945.1 528.4 L945.9 526.8 L946.7 525.1 L947.4 523.5 L948.2 521.9 L948.9 520.3 L949.7 518.6 L950.4 517.0 L951.1 515.4 L951.9 513.8 L952.6 512.1 L953.3 510.5 L954.1 508.9 L954.8 507.3 L955.5 505.6 L956.2 504.0 L956.9 502.4 L957.6 500.8 L958.3 499.1 L959.0 497.5 L959.7 495.9 L960.4 494.3 L961.1 492.6 L961.8 491.0 L962.4 489.4 L963.1 487.8 L963.8 486.1 L964.4 484.5 L965.1 482.9 L965.7 481.3 L966.4 479.6 L967.0 478.0 L967.6 476.4 L968.3 474.8 L968.9 473.1 L969.5 471.5 L970.1 469.9 L970.7 468.3 L971.3 466.6 L971.9 465.0 L972.5 463.4 L973.1 461.8 L973.7 460.1 L974.3 458.5 L974.9 456.9 L975.4 455.3 L976.0 453.6 L976.5 452.0 L977.1 450.4 L977.6 448.8 L978.2 447.1 L978.7 445.5 L979.2 443.9 L979.8 442.3 L980.3 440.6 L980.8 439.0 L981.3 437.4 L981.8 435.8 L982.3 434.1 L982.8 432.5 L983.2 430.9 L983.7 429.3 L984.2 427.6 L984.6 426.0 L985.1 424.4 L985.5 422.8 L986.0 421.1 L986.4 419.5 L986.8 417.9 L987.3 416.3 L987.7 414.6 L988.1 413.0 L988.5 411.4 L988.9 409.8 L989.3 408.1 L989.7 406.5 L990.0 404.9 L990.4 403.3 L990.8 401.6 L991.1 400.0 L991.5 398.4 L991.8 396.8 L992.1 395.1 L992.5 393.5 L992.8 391.9 L993.1 390.3 L993.4 388.6 L993.7 387.0 L994.0 385.4 L994.3 383.8 L994.6 382.1 L994.9 380.5 L995.1 378.9 L995.4 377.3 L995.6 375.6 L995.9 374.0 L996.1 372.4 L996.4 370.8 L996.6 369.1 L996.8 367.5 L997.0 365.9 L997.2 364.3 L997.4 362.6 L997.6 361.0 L997.8 359.4 L997.9 357.8 L998.1 356.1 L998.3 354.5 L998.4 352.9 L998.6 351.3 L998.7 349.6 L998.8 348.0 L999.0 346.4 L999.1 344.8 L999.2 343.1 L999.3 341.5 L999.4 339.9 L999.5 338.3 L999.5 336.6 L999.6 335.0 L999.7 333.4 L999.7 331.8 L999.8 330.1 L999.8 328.5 L999.8 326.9 L999.9 325.3 L999.9 323.6 L999.9 322.0 L999.9 320.4 L999.9 318.8 L999.9 317.1 L999.9 315.5 L999.8 313.9 L999.8 312.3 L999.8 310.6 L999.7 309.0 L999.7 307.4 L999.6 305.8 L999.5 304.1 L999.5 302.5 L999.4 300.9 L999.3 299.3 L999.2 297.6 L999.1 296.0 L999.0 294.4 L998.8 292.8 L998.7 291.1 L998.6 289.5 L998.4 287.9 L998.3 286.3 L998.1 284.6 L997.9 283.0 L997.8 281.4 L997.6 279.8 L997.4 278.1 L997.2 276.5 L997.0 274.9 L996.8 273.3 L996.6 271.6 L996.4 270.0 L996.1 268.4 L995.9 266.8 L995.6 265.1 L995.4 263.5 L995.1 261.9 L994.9 260.3 L994.6 258.6 L994.3 257.0 L994.0 255.4 L993.7 253.8 L993.4 252.1 L993.1 250.5 L992.8 248.9 L992.5 247.3 L992.1 245.6 L991.8 244.0 L991.5 242.4 L991.1 240.8 L990.8 239.1 L990.4 237.5 L990.0 235.9 L989.7 234.3 L989.3 232.6 L988.9 231.0 L988.5 229.4 L988.1 227.8 L987.7 226.1 L987.3 224.5 L986.8 222.9 L986.4 221.3 L986.0 219.6 L985.5 218.0 L985.1 216.4 L984.6 214.8 L984.2 213.1 L983.7 211.5 L983.2 209.9 L982.8 208.3 L982.3 206.6 L981.8 205.0 L981.3 203.4 L980.8 201.8 L980.3 200.1 L979.8 198.5 L979.2 196.9 L978.7 195.3 L978.2 193.6 L977.6 192.0 L977.1 190.4 L976.5 188.8 L976.0 187.1 L975.4 185.5 L974.9 183.9 L974.3 182.3 L973.7 180.6 L973.1 179.0 L972.5 177.4 L971.9 175.8 L971.3 174.1 L970.7 172.5 L970.1 170.9 L969.5 169.3 L968.9 167.6 L968.3 166.0 L967.6 164.4 L967.0 162.8 L966.4 161.1 L965.7 159.5 L965.1 157.9 L964.4 156.3 L963.8 154.6 L963.1 153.0 L962.4 151.4 L961.8 149.8 L961.1 148.1 L960.4 146.5 L959.7 144.9 L959.0 143.3 L958.3 141.6 L957.6 140.0 L956.9 138.4 L956.2 136.8 L955.5 135.1 L954.8 133.5 L954.1 131.9 L953.3 130.3 L952.6 128.6 L951.9 127.0 L951.1 125.4 L950.4 123.8 L949.7 122.1 L948.9 120.5 L948.2 118.9 L947.4 117.3 L946.7 115.6 L945.9 114.0 L945.1 112.4 L944.4 110.8 L943.6 109.1 L942.8 107.5 L942.1 105.9 L941.3 104.3 L940.5 102.6 L939.7 101.0 L938.9 99.4 L938.1 97.8 L937.3 96.1 L936.5 94.5 L935.7 92.9 L934.9 91.3 L934.1 89.6 L933.3 88.0 L932.5 86.4 L931.7 84.8 L930.9 83.1 L930.1 81.5 L929.3 79.9 L928.5 78.3 L927.6 76.6 L926.8 75.0 L926.0 73.4 L925.2 71.8 L924.3 70.1 L923.5 68.5 L922.7 66.9 L921.8 65.3 L921.0 63.6 L920.2 62.0 L919.3 60.4 L918.5 58.8 L917.7 57.1 L916.8 55.5 L916.0 53.9 L915.1 52.3 L914.3 50.6 L913.4 49.0 L912.6 47.4 L911.7 45.8 L910.9 44.1 L910.0 42.5 L909.2 40.9 L908.4 39.3 L907.5 37.6 L906.7 36.0 L905.8 34.4 L905.0 32.8 L904.1 31.1 L903.3 29.5 L902.4 27.9"/><path d="M902.4 612.9 L902.8 611.3 L903.3 609.6 L903.7 608.0 L904.1 606.4 L904.5 604.8 L905.0 603.1 L905.4 601.5 L905.8 599.9 L906.2 598.3 L906.6 596.6 L907.1 595.0 L907.5 593.4 L907.9 591.8 L908.3 590.1 L908.8 588.5 L909.2 586.9 L909.6 585.3 L910.0 583.6 L910.4 582.0 L910.9 580.4 L911.3 578.8 L911.7 577.1 L912.1 575.5 L912.5 573.9 L913.0 572.3 L913.4 570.6 L913.8 569.0 L914.2 567.4 L914.6 565.8 L915.0 564.1 L915.4 562.5 L915.8 560.9 L916.2 559.3 L916.7 557.6 L917.1 556.0 L917.5 554.4 L917.9 552.8 L918.3 551.1 L918.7 549.5 L919.1 547.9 L919.5 546.3 L919.9 544.6 L920.3 543.0 L920.7 541.4 L921.1 539.8 L921.4 538.1 L921.8 536.5 L922.2 534.9 L922.6 533.3 L923.0 531.6 L923.4 530.0 L923.8 528.4 L924.2 526.8 L924.5 525.1 L924.9 523.5 L925.3 521.9 L925.7 520.3 L926.0 518.6 L926.4 517.0 L926.8 515.4 L927.1 513.8 L927.5 512.1 L927.9 510.5 L928.2 508.9 L928.6 507.3 L929.0 505.6 L929.3 504.0 L929.7 502.4 L930.0 500.8 L930.4 499.1 L930.7 497.5 L931.1 495.9 L931.4 494.3 L931.7 492.6 L932.1 491.0 L932.4 489.4 L932.7 487.8 L933.1 486.1 L933.4 484.5 L933.7 482.9 L934.1 481.3 L934.4 479.6 L934.7 478.0 L935.0 476.4 L935.3 474.8 L935.6 473.1 L936.0 471.5 L936.3 469.9 L936.6 468.3 L936.9 466.6 L937.2 465.0 L937.5 463.4 L937.8 461.8 L938.1 460.1 L938.3 458.5 L938.6 456.9 L938.9 455.3 L939.2 453.6 L939.5 452.0 L939.7 450.4 L940.0 448.8 L940.3 447.1 L940.6 445.5 L940.8 443.9 L941.1 442.3 L941.3 440.6 L941.6 439.0 L941.8 437.4 L942.1 435.8 L942.3 434.1 L942.6 432.5 L942.8 430.9 L943.1 429.3 L943.3 427.6 L943.5 426.0 L943.7 424.4 L944.0 422.8 L944.2 421.1 L944.4 419.5 L944.6 417.9 L944.8 416.3 L945.0 414.6 L945.2 413.0 L945.4 411.4 L945.6 409.8 L945.8 408.1 L946.0 406.5 L946.2 404.9 L946.4 403.3 L946.6 401.6 L946.8 400.0 L946.9 398.4 L947.1 396.8 L947.3 395.1 L947.4 393.5 L947.6 391.9 L947.8 390.3 L947.9 388.6 L948.1 387.0 L948.2 385.4 L948.4 383.8 L948.5 382.1 L948.6 380.5 L948.8 378.9 L948.9 377.3 L949.0 375.6 L949.1 374.0 L949.3 372.4 L949.4 370.8 L949.5 369.1 L949.6 367.5 L949.7 365.9 L949.8 364.3 L949.9 362.6 L950.0 361.0 L950.1 359.4 L950.2 357.8 L950.3 356.1 L950.3 354.5 L950.4 352.9 L950.5 351.3 L950.5 349.6 L950.6 348.0 L950.7 346.4 L950.7 344.8 L950.8 343.1 L950.8 341.5 L950.9 339.9 L950.9 338.3 L951.0 336.6 L951.0 335.0 L951.0 333.4 L951.1 331.8 L951.1 330.1 L951.1 328.5 L951.1 326.9 L951.1 325.3 L951.1 323.6 L951.1 322.0 L951.1 320.4 L951.1 318.8 L951.1 317.1 L951.1 315.5 L951.1 313.9 L951.1 312.3 L951.1 310.6 L951.1 309.0 L951.0 307.4 L951.0 305.8 L951.0 304.1 L950.9 302.5 L950.9 300.9 L950.8 299.3 L950.8 297.6 L950.7 296.0 L950.7 294.4 L950.6 292.8 L950.5 291.1 L950.5 289.5 L950.4 287.9 L950.3 286.3 L950.3 284.6 L950.2 283.0 L950.1 281.4 L950.0 279.8 L949.9 278.1 L949.8 276.5 L949.7 274.9 L949.6 273.3 L949.5 271.6 L949.4 270.0 L949.3 268.4 L949.1 266.8 L949.0 265.1 L948.9 263.5 L948.8 261.9 L948.6 260.3 L948.5 258.6 L948.4 257.0 L948.2 255.4 L948.1 253.8 L947.9 252.1 L947.8 250.5 L947.6 248.9 L947.4 247.3 L947.3 245.6 L947.1 244.0 L946.9 242.4 L946.8 240.8 L946.6 239.1 L946.4 237.5 L946.2 235.9 L946.0 234.3 L945.8 232.6 L945.6 231.0 L945.4 229.4 L945.2 227.8 L945.0 226.1 L944.8 224.5 L944.6 222.9 L944.4 221.3 L944.2 219.6 L944.0 218.0 L943.7 216.4 L943.5 214.8 L943.3 213.1 L943.1 211.5 L942.8 209.9 L942.6 208.3 L942.3 206.6 L942.1 205.0 L941.8 203.4 L941.6 201.8 L941.3 200.1 L941.1 198.5 L940.8 196.9 L940.6 195.3 L940.3 193.6 L940.0 192.0 L939.7 190.4 L939.5 188.8 L939.2 187.1 L938.9 185.5 L938.6 183.9 L938.3 182.3 L938.1 180.6 L937.8 179.0 L937.5 177.4 L937.2 175.8 L936.9 174.1 L936.6 172.5 L936.3 170.9 L936.0 169.3 L935.6 167.6 L935.3 166.0 L935.0 164.4 L934.7 162.8 L934.4 161.1 L934.1 159.5 L933.7 157.9 L933.4 156.3 L933.1 154.6 L932.7 153.0 L932.4 151.4 L932.1 149.8 L931.7 148.1 L931.4 146.5 L931.1 144.9 L930.7 143.3 L930.4 141.6 L930.0 140.0 L929.7 138.4 L929.3 136.8 L929.0 135.1 L928.6 133.5 L928.2 131.9 L927.9 130.3 L927.5 128.6 L927.1 127.0 L926.8 125.4 L926.4 123.8 L926.0 122.1 L925.7 120.5 L925.3 118.9 L924.9 117.3 L924.5 115.6 L924.2 114.0 L923.8 112.4 L923.4 110.8 L923.0 109.1 L922.6 107.5 L922.2 105.9 L921.8 104.3 L921.4 102.6 L921.1 101.0 L920.7 99.4 L920.3 97.8 L919.9 96.1 L919.5 94.5 L919.1 92.9 L918.7 91.3 L918.3 89.6 L917.9 88.0 L917.5 86.4 L917.1 84.8 L916.7 83.1 L916.2 81.5 L915.8 79.9 L915.4 78.3 L915.0 76.6 L914.6 75.0 L914.2 73.4 L913.8 71.8 L913.4 70.1 L913.0 68.5 L912.5 66.9 L912.1 65.3 L911.7 63.6 L911.3 62.0 L910.9 60.4 L910.4 58.8 L910.0 57.1 L909.6 55.5 L909.2 53.9 L908.8 52.3 L908.3 50.6 L907.9 49.0 L907.5 47.4 L907.1 45.8 L906.6 44.1 L906.2 42.5 L905.8 40.9 L905.4 39.3 L905.0 37.6 L904.5 36.0 L904.1 34.4 L903.7 32.8 L903.3 31.1 L902.8 29.5 L902.4 27.9"/><path d="M902.4 612.9 L902.4 611.3 L902.4 609.6 L902.4 608.0 L902.4 606.4 L902.4 604.8 L902.4 603.1 L902.4 601.5 L902.4 599.9 L902.4 598.3 L902.4 596.6 L902.4 595.0 L902.4 593.4 L902.4 591.8 L902.4 590.1 L902.4 588.5 L902.4 586.9 L902.4 585.3 L902.4 583.6 L902.4 582.0 L902.4 580.4 L902.4 578.8 L902.4 577.1 L902.4 575.5 L902.4 573.9 L902.4 572.3 L902.4 570.6 L902.4 569.0 L902.4 567.4 L902.4 565.8 L902.4 564.1 L902.4 562.5 L902.4 560.9 L902.4 559.3 L902.4 557.6 L902.4 556.0 L902.4 554.4 L902.4 552.8 L902.4 551.1 L902.4 549.5 L902.4 547.9 L902.4 546.3 L902.4 544.6 L902.4 543.0 L902.4 541.4 L902.4 539.8 L902.4 538.1 L902.4 536.5 L902.4 534.9 L902.4 533.3 L902.4 531.6 L902.4 530.0 L902.4 528.4 L902.4 526.8 L902.4 525.1 L902.4 523.5 L902.4 521.9 L902.4 520.3 L902.4 518.6 L902.4 517.0 L902.4 515.4 L902.4 513.8 L902.4 512.1 L902.4 510.5 L902.4 508.9 L902.4 507.3 L902.4 505.6 L902.4 504.0 L902.4 502.4 L902.4 500.8 L902.4 499.1 L902.4 497.5 L902.4 495.9 L902.4 494.3 L902.4 492.6 L902.4 491.0 L902.4 489.4 L902.4 487.8 L902.4 486.1 L902.4 484.5 L902.4 482.9 L902.4 481.3 L902.4 479.6 L902.4 478.0 L902.4 476.4 L902.4 474.8 L902.4 473.1 L902.4 471.5 L902.4 469.9 L902.4 468.3 L902.4 466.6 L902.4 465.0 L902.4 463.4 L902.4 461.8 L902.4 460.1 L902.4 458.5 L902.4 456.9 L902.4 455.3 L902.4 453.6 L902.4 452.0 L902.4 450.4 L902.4 448.8 L902.4 447.1 L902.4 445.5 L902.4 443.9 L902.4 442.3 L902.4 440.6 L902.4 439.0 L902.4 437.4 L902.4 435.8 L902.4 434.1 L902.4 432.5 L902.4 430.9 L902.4 429.3 L902.4 427.6 L902.4 426.0 L902.4 424.4 L902.4 422.8 L902.4 421.1 L902.4 419.5 L902.4 417.9 L902.4 416.3 L902.4 414.6 L902.4 413.0 L902.4 411.4 L902.4 409.8 L902.4 408.1 L902.4 406.5 L902.4 404.9 L902.4 403.3 L902.4 401.6 L902.4 400.0 L902.4 398.4 L902.4 396.8 L902.4 395.1 L902.4 393.5 L902.4 391.9 L902.4 390.3 L902.4 388.6 L902.4 387.0 L902.4 385.4 L902.4 383.8 L902.4 382.1 L902.4 380.5 L902.4 378.9 L902.4 377.3 L902.4 375.6 L902.4 374.0 L902.4 372.4 L902.4 370.8 L902.4 369.1 L902.4 367.5 L902.4 365.9 L902.4 364.3 L902.4 362.6 L902.4 361.0 L902.4 359.4 L902.4 357.8 L902.4 356.1 L902.4 354.5 L902.4 352.9 L902.4 351.3 L902.4 349.6 L902.4 348.0 L902.4 346.4 L902.4 344.8 L902.4 343.1 L902.4 341.5 L902.4 339.9 L902.4 338.3 L902.4 336.6 L902.4 335.0 L902.4 333.4 L902.4 331.8 L902.4 330.1 L902.4 328.5 L902.4 326.9 L902.4 325.3 L902.4 323.6 L902.4 322.0 L902.4 320.4 L902.4 318.8 L902.4 317.1 L902.4 315.5 L902.4 313.9 L902.4 312.3 L902.4 310.6 L902.4 309.0 L902.4 307.4 L902.4 305.8 L902.4 304.1 L902.4 302.5 L902.4 300.9 L902.4 299.3 L902.4 297.6 L902.4 296.0 L902.4 294.4 L902.4 292.8 L902.4 291.1 L902.4 289.5 L902.4 287.9 L902.4 286.3 L902.4 284.6 L902.4 283.0 L902.4 281.4 L902.4 279.8 L902.4 278.1 L902.4 276.5 L902.4 274.9 L902.4 273.3 L902.4 271.6 L902.4 270.0 L902.4 268.4 L902.4 266.8 L902.4 265.1 L902.4 263.5 L902.4 261.9 L902.4 260.3 L902.4 258.6 L902.4 257.0 L902.4 255.4 L902.4 253.8 L902.4 252.1 L902.4 250.5 L902.4 248.9 L902.4 247.3 L902.4 245.6 L902.4 244.0 L902.4 242.4 L902.4 240.8 L902.4 239.1 L902.4 237.5 L902.4 235.9 L902.4 234.3 L902.4 232.6 L902.4 231.0 L902.4 229.4 L902.4 227.8 L902.4 226.1 L902.4 224.5 L902.4 222.9 L902.4 221.3 L902.4 219.6 L902.4 218.0 L902.4 216.4 L902.4 214.8 L902.4 213.1 L902.4 211.5 L902.4 209.9 L902.4 208.3 L902.4 206.6 L902.4 205.0 L902.4 203.4 L902.4 201.8 L902.4 200.1 L902.4 198.5 L902.4 196.9 L902.4 195.3 L902.4 193.6 L902.4 192.0 L902.4 190.4 L902.4 188.8 L902.4 187.1 L902.4 185.5 L902.4 183.9 L902.4 182.3 L902.4 180.6 L902.4 179.0 L902.4 177.4 L902.4 175.8 L902.4 174.1 L902.4 172.5 L902.4 170.9 L902.4 169.3 L902.4 167.6 L902.4 166.0 L902.4 164.4 L902.4 162.8 L902.4 161.1 L902.4 159.5 L902.4 157.9 L902.4 156.3 L902.4 154.6 L902.4 153.0 L902.4 151.4 L902.4 149.8 L902.4 148.1 L902.4 146.5 L902.4 144.9 L902.4 143.3 L902.4 141.6 L902.4 140.0 L902.4 138.4 L902.4 136.8 L902.4 135.1 L902.4 133.5 L902.4 131.9 L902.4 130.3 L902.4 128.6 L902.4 127.0 L902.4 125.4 L902.4 123.8 L902.4 122.1 L902.4 120.5 L902.4 118.9 L902.4 117.3 L902.4 115.6 L902.4 114.0 L902.4 112.4 L902.4 110.8 L902.4 109.1 L902.4 107.5 L902.4 105.9 L902.4 104.3 L902.4 102.6 L902.4 101.0 L902.4 99.4 L902.4 97.8 L902.4 96.1 L902.4 94.5 L902.4 92.9 L902.4 91.3 L902.4 89.6 L902.4 88.0 L902.4 86.4 L902.4 84.8 L902.4 83.1 L902.4 81.5 L902.4 79.9 L902.4 78.3 L902.4 76.6 L902.4 75.0 L902.4 73.4 L902.4 71.8 L902.4 70.1 L902.4 68.5 L902.4 66.9 L902.4 65.3 L902.4 63.6 L902.4 62.0 L902.4 60.4 L902.4 58.8 L902.4 57.1 L902.4 55.5 L902.4 53.9 L902.4 52.3 L902.4 50.6 L902.4 49.0 L902.4 47.4 L902.4 45.8 L902.4 44.1 L902.4 42.5 L902.4 40.9 L902.4 39.3 L902.4 37.6 L902.4 36.0 L902.4 34.4 L902.4 32.8 L902.4 31.1 L902.4 29.5 L902.4 27.9"/><path d="M902.4 612.9 L902.0 611.3 L901.5 609.6 L901.1 608.0 L900.7 606.4 L900.3 604.8 L899.8 603.1 L899.4 601.5 L899.0 599.9 L898.6 598.3 L898.2 596.6 L897.7 595.0 L897.3 593.4 L896.9 591.8 L896.5 590.1 L896.0 588.5 L895.6 586.9 L895.2 585.3 L894.8 583.6 L894.4 582.0 L893.9 580.4 L893.5 578.8 L893.1 577.1 L892.7 575.5 L892.3 573.9 L891.8 572.3 L891.4 570.6 L891.0 569.0 L890.6 567.4 L890.2 565.8 L889.8 564.1 L889.4 562.5 L889.0 560.9 L888.6 559.3 L888.1 557.6 L887.7 556.0 L887.3 554.4 L886.9 552.8 L886.5 551.1 L886.1 549.5 L885.7 547.9 L885.3 546.3 L884.9 544.6 L884.5 543.0 L884.1 541.4 L883.7 539.8 L883.4 538.1 L883.0 536.5 L882.6 534.9 L882.2 533.3 L881.8 531.6 L881.4 530.0 L881.0 528.4 L880.6 526.8 L880.3 525.1 L879.9 523.5 L879.5 521.9 L879.1 520.3 L878.8 518.6 L878.4 517.0 L878.0 515.4 L877.7 513.8 L877.3 512.1 L876.9 510.5 L876.6 508.9 L876.2 507.3 L875.8 505.6 L875.5 504.0 L875.1 502.4 L874.8 500.8 L874.4 499.1 L874.1 497.5 L873.7 495.9 L873.4 494.3 L873.1 492.6 L872.7 491.0 L872.4 489.4 L872.1 487.8 L871.7 486.1 L871.4 484.5 L871.1 482.9 L870.7 481.3 L870.4 479.6 L870.1 478.0 L869.8 476.4 L869.5 474.8 L869.2 473.1 L868.8 471.5 L868.5 469.9 L868.2 468.3 L867.9 466.6 L867.6 465.0 L867.3 463.4 L867.0 461.8 L866.7 460.1 L866.5 458.5 L866.2 456.9 L865.9 455.3 L865.6 453.6 L865.3 452.0 L865.1 450.4 L864.8 448.8 L864.5 447.1 L864.2 445.5 L864.0 443.9 L863.7 442.3 L863.5 440.6 L863.2 439.0 L863.0 437.4 L862.7 435.8 L862.5 434.1 L862.2 432.5 L862.0 430.9 L861.7 429.3 L861.5 427.6 L861.3 426.0 L861.1 424.4 L860.8 422.8 L860.6 421.1 L860.4 419.5 L860.2 417.9 L860.0 416.3 L859.8 414.6 L859.6 413.0 L859.4 411.4 L859.2 409.8 L859.0 408.1 L858.8 406.5 L858.6 404.9 L858.4 403.3 L858.2 401.6 L858.0 400.0 L857.9 398.4 L857.7 396.8 L857.5 395.1 L857.4 393.5 L857.2 391.9 L857.0 390.3 L856.9 388.6 L856.7 387.0 L856.6 385.4 L856.4 383.8 L856.3 382.1 L856.2 380.5 L856.0 378.9 L855.9 377.3 L855.8 375.6 L855.7 374.0 L855.5 372.4 L855.4 370.8 L855.3 369.1 L855.2 367.5 L855.1 365.9 L855.0 364.3 L854.9 362.6 L854.8 361.0 L854.7 359.4 L854.6 357.8 L854.5 356.1 L854.5 354.5 L854.4 352.9 L854.3 351.3 L854.3 349.6 L854.2 348.0 L854.1 346.4 L854.1 344.8 L854.0 343.1 L854.0 341.5 L853.9 339.9 L853.9 338.3 L853.8 336.6 L853.8 335.0 L853.8 333.4 L853.7 331.8 L853.7 330.1 L853.7 328.5 L853.7 326.9 L853.7 325.3 L853.7 323.6 L853.7 322.0 L853.6 320.4 L853.7 318.8 L853.7 317.1 L853.7 315.5 L853.7 313.9 L853.7 312.3 L853.7 310.6 L853.7 309.0 L853.8 307.4 L853.8 305.8 L853.8 304.1 L853.9 302.5 L853.9 300.9 L854.0 299.3 L854.0 297.6 L854.1 296.0 L854.1 294.4 L854.2 292.8 L854.3 291.1 L854.3 289.5 L854.4 287.9 L854.5 286.3 L854.5 284.6 L854.6 283.0 L854.7 281.4 L854.8 279.8 L854.9 278.1 L855.0 276.5 L855.1 274.9 L855.2 273.3 L855.3 271.6 L855.4 270.0 L855.5 268.4 L855.7 266.8 L855.8 265.1 L855.9 263.5 L856.0 261.9 L856.2 260.3 L856.3 258.6 L856.4 257.0 L856.6 255.4 L856.7 253.8 L856.9 252.1 L857.0 250.5 L857.2 248.9 L857.4 247.3 L857.5 245.6 L857.7 244.0 L857.9 242.4 L858.0 240.8 L858.2 239.1 L858.4 237.5 L858.6 235.9 L858.8 234.3 L859.0 232.6 L859.2 231.0 L859.4 229.4 L859.6 227.8 L859.8 226.1 L860.0 224.5 L860.2 222.9 L860.4 221.3 L860.6 219.6 L860.8 218.0 L861.1 216.4 L861.3 214.8 L861.5 213.1 L861.7 211.5 L862.0 209.9 L862.2 208.3 L862.5 206.6 L862.7 205.0 L863.0 203.4 L863.2 201.8 L863.5 200.1 L863.7 198.5 L864.0 196.9 L864.2 195.3 L864.5 193.6 L864.8 192.0 L865.1 190.4 L865.3 188.8 L865.6 187.1 L865.9 185.5 L866.2 183.9 L866.5 182.3 L866.7 180.6 L867.0 179.0 L867.3 177.4 L867.6 175.8 L867.9 174.1 L868.2 172.5 L868.5 170.9 L868.8 169.3 L869.2 167.6 L869.5 166.0 L869.8 164.4 L870.1 162.8 L870.4 161.1 L870.7 159.5 L871.1 157.9 L871.4 156.3 L871.7 154.6 L872.1 153.0 L872.4 151.4 L872.7 149.8 L873.1 148.1 L873.4 146.5 L873.7 144.9 L874.1 143.3 L874.4 141.6 L874.8 140.0 L875.1 138.4 L875.5 136.8 L875.8 135.1 L876.2 133.5 L876.6 131.9 L876.9 130.3 L877.3 128.6 L877.7 127.0 L878.0 125.4 L878.4 123.8 L878.8 122.1 L879.1 120.5 L879.5 118.9 L879.9 117.3 L880.3 115.6 L880.6 114.0 L881.0 112.4 L881.4 110.8 L881.8 109.1 L882.2 107.5 L882.6 105.9 L883.0 104.3 L883.4 102.6 L883.7 101.0 L884.1 99.4 L884.5 97.8 L884.9 96.1 L885.3 94.5 L885.7 92.9 L886.1 91.3 L886.5 89.6 L886.9 88.0 L887.3 86.4 L887.7 84.8 L888.1 83.1 L888.6 81.5 L889.0 79.9 L889.4 78.3 L889.8 76.6 L890.2 75.0 L890.6 73.4 L891.0 71.8 L891.4 70.1 L891.8 68.5 L892.3 66.9 L892.7 65.3 L893.1 63.6 L893.5 62.0 L893.9 60.4 L894.4 58.8 L894.8 57.1 L895.2 55.5 L895.6 53.9 L896.0 52.3 L896.5 50.6 L896.9 49.0 L897.3 47.4 L897.7 45.8 L898.2 44.1 L898.6 42.5 L899.0 40.9 L899.4 39.3 L899.8 37.6 L900.3 36.0 L900.7 34.4 L901.1 32.8 L901.5 31.1 L902.0 29.5 L902.4 27.9"/><path d="M902.4 612.9 L901.5 611.3 L900.7 609.6 L899.8 608.0 L899.0 606.4 L898.1 604.8 L897.3 603.1 L896.4 601.5 L895.6 599.9 L894.8 598.3 L893.9 596.6 L893.1 595.0 L892.2 593.4 L891.4 591.8 L890.5 590.1 L889.7 588.5 L888.8 586.9 L888.0 585.3 L887.1 583.6 L886.3 582.0 L885.5 580.4 L884.6 578.8 L883.8 577.1 L883.0 575.5 L882.1 573.9 L881.3 572.3 L880.5 570.6 L879.6 569.0 L878.8 567.4 L878.0 565.8 L877.2 564.1 L876.3 562.5 L875.5 560.9 L874.7 559.3 L873.9 557.6 L873.1 556.0 L872.3 554.4 L871.5 552.8 L870.7 551.1 L869.9 549.5 L869.1 547.9 L868.3 546.3 L867.5 544.6 L866.7 543.0 L865.9 541.4 L865.1 539.8 L864.3 538.1 L863.5 536.5 L862.7 534.9 L862.0 533.3 L861.2 531.6 L860.4 530.0 L859.7 528.4 L858.9 526.8 L858.1 525.1 L857.4 523.5 L856.6 521.9 L855.9 520.3 L855.1 518.6 L854.4 517.0 L853.6 515.4 L852.9 513.8 L852.2 512.1 L851.5 510.5 L850.7 508.9 L850.0 507.3 L849.3 505.6 L848.6 504.0 L847.9 502.4 L847.2 500.8 L846.5 499.1 L845.8 497.5 L845.1 495.9 L844.4 494.3 L843.7 492.6 L843.0 491.0 L842.4 489.4 L841.7 487.8 L841.0 486.1 L840.4 484.5 L839.7 482.9 L839.1 481.3 L838.4 479.6 L837.8 478.0 L837.2 476.4 L836.5 474.8 L835.9 473.1 L835.3 471.5 L834.7 469.9 L834.1 468.3 L833.5 466.6 L832.9 465.0 L832.3 463.4 L831.7 461.8 L831.1 460.1 L830.5 458.5 L829.9 456.9 L829.4 455.3 L828.8 453.6 L828.3 452.0 L827.7 450.4 L827.2 448.8 L826.6 447.1 L826.1 445.5 L825.6 443.9 L825.0 442.3 L824.5 440.6 L824.0 439.0 L823.5 437.4 L823.0 435.8 L822.5 434.1 L822.0 432.5 L821.6 430.9 L821.1 429.3 L820.6 427.6 L820.2 426.0 L819.7 424.4 L819.3 422.8 L818.8 421.1 L818.4 419.5 L818.0 417.9 L817.5 416.3 L817.1 414.6 L816.7 413.0 L816.3 411.4 L815.9 409.8 L815.5 408.1 L815.1 406.5 L814.8 404.9 L814.4 403.3 L814.0 401.6 L813.7 400.0 L813.3 398.4 L813.0 396.8 L812.7 395.1 L812.3 393.5 L812.0 391.9 L811.7 390.3 L811.4 388.6 L811.1 387.0 L810.8 385.4 L810.5 383.8 L810.2 382.1 L809.9 380.5 L809.7 378.9 L809.4 377.3 L809.2 375.6 L808.9 374.0 L808.7 372.4 L808.4 370.8 L808.2 369.1 L808.0 367.5 L807.8 365.9 L807.6 364.3 L807.4 362.6 L807.2 361.0 L807.0 359.4 L806.9 357.8 L806.7 356.1 L806.5 354.5 L806.4 352.9 L806.2 351.3 L806.1 349.6 L806.0 348.0 L805.8 346.4 L805.7 344.8 L805.6 343.1 L805.5 341.5 L805.4 339.9 L805.3 338.3 L805.3 336.6 L805.2 335.0 L805.1 333.4 L805.1 331.8 L805.0 330.1 L805.0 328.5 L805.0 326.9 L804.9 325.3 L804.9 323.6 L804.9 322.0 L804.9 320.4 L804.9 318.8 L804.9 317.1 L804.9 315.5 L805.0 313.9 L805.0 312.3 L805.0 310.6 L805.1 309.0 L805.1 307.4 L805.2 305.8 L805.3 304.1 L805.3 302.5 L805.4 300.9 L805.5 299.3 L805.6 297.6 L805.7 296.0 L805.8 294.4 L806.0 292.8 L806.1 291.1 L806.2 289.5 L806.4 287.9 L806.5 286.3 L806.7 284.6 L806.9 283.0 L807.0 281.4 L807.2 279.8 L807.4 278.1 L807.6 276.5 L807.8 274.9 L808.0 273.3 L808.2 271.6 L808.4 270.0 L808.7 268.4 L808.9 266.8 L809.2 265.1 L809.4 263.5 L809.7 261.9 L809.9 260.3 L810.2 258.6 L810.5 257.0 L810.8 255.4 L811.1 253.8 L811.4 252.1 L811.7 250.5 L812.0 248.9 L812.3 247.3 L812.7 245.6 L813.0 244.0 L813.3 242.4 L813.7 240.8 L814.0 239.1 L814.4 237.5 L814.8 235.9 L815.1 234.3 L815.5 232.6 L815.9 231.0 L816.3 229.4 L816.7 227.8 L817.1 226.1 L817.5 224.5 L818.0 222.9 L818.4 221.3 L818.8 219.6 L819.3 218.0 L819.7 216.4 L820.2 214.8 L820.6 213.1 L821.1 211.5 L821.6 209.9 L822.0 208.3 L822.5 206.6 L823.0 205.0 L823.5 203.4 L824.0 201.8 L824.5 200.1 L825.0 198.5 L825.6 196.9 L826.1 195.3 L826.6 193.6 L827.2 192.0 L827.7 190.4 L828.3 188.8 L828.8 187.1 L829.4 185.5 L829.9 183.9 L830.5 182.3 L831.1 180.6 L831.7 179.0 L832.3 177.4 L832.9 175.8 L833.5 174.1 L834.1 172.5 L834.7 170.9 L835.3 169.3 L835.9 167.6 L836.5 166.0 L837.2 164.4 L837.8 162.8 L838.4 161.1 L839.1 159.5 L839.7 157.9 L840.4 156.3 L841.0 154.6 L841.7 153.0 L842.4 151.4 L843.0 149.8 L843.7 148.1 L844.4 146.5 L845.1 144.9 L845.8 143.3 L846.5 141.6 L847.2 140.0 L847.9 138.4 L848.6 136.8 L849.3 135.1 L850.0 133.5 L850.7 131.9 L851.5 130.3 L852.2 128.6 L852.9 127.0 L853.6 125.4 L854.4 123.8 L855.1 122.1 L855.9 120.5 L856.6 118.9 L857.4 117.3 L858.1 115.6 L858.9 114.0 L859.7 112.4 L860.4 110.8 L861.2 109.1 L862.0 107.5 L862.7 105.9 L863.5 104.3 L864.3 102.6 L865.1 101.0 L865.9 99.4 L866.7 97.8 L867.5 96.1 L868.3 94.5 L869.1 92.9 L869.9 91.3 L870.7 89.6 L871.5 88.0 L872.3 86.4 L873.1 84.8 L873.9 83.1 L874.7 81.5 L875.5 79.9 L876.3 78.3 L877.2 76.6 L878.0 75.0 L878.8 73.4 L879.6 71.8 L880.5 70.1 L881.3 68.5 L882.1 66.9 L883.0 65.3 L883.8 63.6 L884.6 62.0 L885.5 60.4 L886.3 58.8 L887.1 57.1 L888.0 55.5 L888.8 53.9 L889.7 52.3 L890.5 50.6 L891.4 49.0 L892.2 47.4 L893.1 45.8 L893.9 44.1 L894.8 42.5 L895.6 40.9 L896.4 39.3 L897.3 37.6 L898.1 36.0 L899.0 34.4 L899.8 32.8 L900.7 31.1 L901.5 29.5 L902.4 27.9"/><path d="M902.4 612.9 L901.1 611.3 L899.8 609.6 L898.6 608.0 L897.3 606.4 L896.0 604.8 L894.7 603.1 L893.5 601.5 L892.2 599.9 L890.9 598.3 L889.7 596.6 L888.4 595.0 L887.1 593.4 L885.8 591.8 L884.6 590.1 L883.3 588.5 L882.0 586.9 L880.8 585.3 L879.5 583.6 L878.3 582.0 L877.0 580.4 L875.7 578.8 L874.5 577.1 L873.2 575.5 L872.0 573.9 L870.7 572.3 L869.5 570.6 L868.3 569.0 L867.0 567.4 L865.8 565.8 L864.5 564.1 L863.3 562.5 L862.1 560.9 L860.9 559.3 L859.6 557.6 L858.4 556.0 L857.2 554.4 L856.0 552.8 L854.8 551.1 L853.6 549.5 L852.4 547.9 L851.2 546.3 L850.0 544.6 L848.8 543.0 L847.6 541.4 L846.4 539.8 L845.3 538.1 L844.1 536.5 L842.9 534.9 L841.8 533.3 L840.6 531.6 L839.4 530.0 L838.3 528.4 L837.1 526.8 L836.0 525.1 L834.9 523.5 L833.7 521.9 L832.6 520.3 L831.5 518.6 L830.4 517.0 L829.3 515.4 L828.2 513.8 L827.1 512.1 L826.0 510.5 L824.9 508.9 L823.8 507.3 L822.7 505.6 L821.7 504.0 L820.6 502.4 L819.6 500.8 L818.5 499.1 L817.5 497.5 L816.4 495.9 L815.4 494.3 L814.4 492.6 L813.4 491.0 L812.4 489.4 L811.4 487.8 L810.4 486.1 L809.4 484.5 L808.4 482.9 L807.4 481.3 L806.5 479.6 L805.5 478.0 L804.5 476.4 L803.6 474.8 L802.7 473.1 L801.7 471.5 L800.8 469.9 L799.9 468.3 L799.0 466.6 L798.1 465.0 L797.2 463.4 L796.3 461.8 L795.4 460.1 L794.6 458.5 L793.7 456.9 L792.9 455.3 L792.0 453.6 L791.2 452.0 L790.4 450.4 L789.5 448.8 L788.7 447.1 L787.9 445.5 L787.2 443.9 L786.4 442.3 L785.6 440.6 L784.8 439.0 L784.1 437.4 L783.3 435.8 L782.6 434.1 L781.9 432.5 L781.2 430.9 L780.4 429.3 L779.7 427.6 L779.1 426.0 L778.4 424.4 L777.7 422.8 L777.0 421.1 L776.4 419.5 L775.7 417.9 L775.1 416.3 L774.5 414.6 L773.9 413.0 L773.3 411.4 L772.7 409.8 L772.1 408.1 L771.5 406.5 L771.0 404.9 L770.4 403.3 L769.9 401.6 L769.3 400.0 L768.8 398.4 L768.3 396.8 L767.8 395.1 L767.3 393.5 L766.8 391.9 L766.3 390.3 L765.9 388.6 L765.4 387.0 L765.0 385.4 L764.5 383.8 L764.1 382.1 L763.7 380.5 L763.3 378.9 L762.9 377.3 L762.5 375.6 L762.2 374.0 L761.8 372.4 L761.5 370.8 L761.1 369.1 L760.8 367.5 L760.5 365.9 L760.2 364.3 L759.9 362.6 L759.6 361.0 L759.3 359.4 L759.1 357.8 L758.8 356.1 L758.6 354.5 L758.4 352.9 L758.2 351.3 L758.0 349.6 L757.8 348.0 L757.6 346.4 L757.4 344.8 L757.2 343.1 L757.1 341.5 L757.0 339.9 L756.8 338.3 L756.7 336.6 L756.6 335.0 L756.5 333.4 L756.4 331.8 L756.4 330.1 L756.3 328.5 L756.2 326.9 L756.2 325.3 L756.2 323.6 L756.2 322.0 L756.1 320.4 L756.2 318.8 L756.2 317.1 L756.2 315.5 L756.2 313.9 L756.3 312.3 L756.4 310.6 L756.4 309.0 L756.5 307.4 L756.6 305.8 L756.7 304.1 L756.8 302.5 L757.0 300.9 L757.1 299.3 L757.2 297.6 L757.4 296.0 L757.6 294.4 L757.8 292.8 L758.0 291.1 L758.2 289.5 L758.4 287.9 L758.6 286.3 L758.8 284.6 L759.1 283.0 L759.3 281.4 L759.6 279.8 L759.9 278.1 L760.2 276.5 L760.5 274.9 L760.8 273.3 L761.1 271.6 L761.5 270.0 L761.8 268.4 L762.2 266.8 L762.5 265.1 L762.9 263.5 L763.3 261.9 L763.7 260.3 L764.1 258.6 L764.5 257.0 L765.0 255.4 L765.4 253.8 L765.9 252.1 L766.3 250.5 L766.8 248.9 L767.3 247.3 L767.8 245.6 L768.3 244.0 L768.8 242.4 L769.3 240.8 L769.9 239.1 L770.4 237.5 L771.0 235.9 L771.5 234.3 L772.1 232.6 L772.7 231.0 L773.3 229.4 L773.9 227.8 L774.5 226.1 L775.1 224.5 L775.7 222.9 L776.4 221.3 L777.0 219.6 L777.7 218.0 L778.4 216.4 L779.1 214.8 L779.7 213.1 L780.4 211.5 L781.2 209.9 L781.9 208.3 L782.6 206.6 L783.3 205.0 L784.1 203.4 L784.8 201.8 L785.6 200.1 L786.4 198.5 L787.2 196.9 L787.9 195.3 L788.7 193.6 L789.5 192.0 L790.4 190.4 L791.2 188.8 L792.0 187.1 L792.9 185.5 L793.7 183.9 L794.6 182.3 L795.4 180.6 L796.3 179.0 L797.2 177.4 L798.1 175.8 L799.0 174.1 L799.9 172.5 L800.8 170.9 L801.7 169.3 L802.7 167.6 L803.6 166.0 L804.5 164.4 L805.5 162.8 L806.5 161.1 L807.4 159.5 L808.4 157.9 L809.4 156.3 L810.4 154.6 L811.4 153.0 L812.4 151.4 L813.4 149.8 L814.4 148.1 L815.4 146.5 L816.4 144.9 L817.5 143.3 L818.5 141.6 L819.6 140.0 L820.6 138.4 L821.7 136.8 L822.7 135.1 L823.8 133.5 L824.9 131.9 L826.0 130.3 L827.1 128.6 L828.2 127.0 L829.3 125.4 L830.4 123.8 L831.5 122.1 L832.6 120.5 L833.7 118.9 L834.9 117.3 L836.0 115.6 L837.1 114.0 L838.3 112.4 L839.4 110.8 L840.6 109.1 L841.8 107.5 L842.9 105.9 L844.1 104.3 L845.3 102.6 L846.4 101.0 L847.6 99.4 L848.8 97.8 L850.0 96.1 L851.2 94.5 L852.4 92.9 L853.6 91.3 L854.8 89.6 L856.0 88.0 L857.2 86.4 L858.4 84.8 L859.6 83.1 L860.9 81.5 L862.1 79.9 L863.3 78.3 L864.5 76.6 L865.8 75.0 L867.0 73.4 L868.3 71.8 L869.5 70.1 L870.7 68.5 L872.0 66.9 L873.2 65.3 L874.5 63.6 L875.7 62.0 L877.0 60.4 L878.3 58.8 L879.5 57.1 L880.8 55.5 L882.0 53.9 L883.3 52.3 L884.6 50.6 L885.8 49.0 L887.1 47.4 L888.4 45.8 L889.7 44.1 L890.9 42.5 L892.2 40.9 L893.5 39.3 L894.7 37.6 L896.0 36.0 L897.3 34.4 L898.6 32.8 L899.8 31.1 L901.1 29.5 L902.4 27.9"/><path d="M902.4 612.9 L900.7 611.3 L899.0 609.6 L897.3 608.0 L895.6 606.4 L893.9 604.8 L892.2 603.1 L890.5 601.5 L888.8 599.9 L887.1 598.3 L885.4 596.6 L883.7 595.0 L882.0 593.4 L880.3 591.8 L878.6 590.1 L876.9 588.5 L875.3 586.9 L873.6 585.3 L871.9 583.6 L870.2 582.0 L868.5 580.4 L866.9 578.8 L865.2 577.1 L863.5 575.5 L861.9 573.9 L860.2 572.3 L858.5 570.6 L856.9 569.0 L855.2 567.4 L853.6 565.8 L851.9 564.1 L850.3 562.5 L848.7 560.9 L847.0 559.3 L845.4 557.6 L843.8 556.0 L842.1 554.4 L840.5 552.8 L838.9 551.1 L837.3 549.5 L835.7 547.9 L834.1 546.3 L832.5 544.6 L830.9 543.0 L829.4 541.4 L827.8 539.8 L826.2 538.1 L824.6 536.5 L823.1 534.9 L821.5 533.3 L820.0 531.6 L818.5 530.0 L816.9 528.4 L815.4 526.8 L813.9 525.1 L812.4 523.5 L810.9 521.9 L809.4 520.3 L807.9 518.6 L806.4 517.0 L804.9 515.4 L803.4 513.8 L802.0 512.1 L800.5 510.5 L799.1 508.9 L797.6 507.3 L796.2 505.6 L794.8 504.0 L793.4 502.4 L792.0 500.8 L790.6 499.1 L789.2 497.5 L787.8 495.9 L786.4 494.3 L785.0 492.6 L783.7 491.0 L782.3 489.4 L781.0 487.8 L779.7 486.1 L778.4 484.5 L777.1 482.9 L775.8 481.3 L774.5 479.6 L773.2 478.0 L771.9 476.4 L770.7 474.8 L769.4 473.1 L768.2 471.5 L766.9 469.9 L765.7 468.3 L764.5 466.6 L763.3 465.0 L762.1 463.4 L761.0 461.8 L759.8 460.1 L758.6 458.5 L757.5 456.9 L756.4 455.3 L755.2 453.6 L754.1 452.0 L753.0 450.4 L751.9 448.8 L750.9 447.1 L749.8 445.5 L748.7 443.9 L747.7 442.3 L746.7 440.6 L745.6 439.0 L744.6 437.4 L743.6 435.8 L742.7 434.1 L741.7 432.5 L740.7 430.9 L739.8 429.3 L738.9 427.6 L737.9 426.0 L737.0 424.4 L736.1 422.8 L735.3 421.1 L734.4 419.5 L733.5 417.9 L732.7 416.3 L731.8 414.6 L731.0 413.0 L730.2 411.4 L729.4 409.8 L728.7 408.1 L727.9 406.5 L727.1 404.9 L726.4 403.3 L725.7 401.6 L725.0 400.0 L724.3 398.4 L723.6 396.8 L722.9 395.1 L722.2 393.5 L721.6 391.9 L721.0 390.3 L720.4 388.6 L719.7 387.0 L719.2 385.4 L718.6 383.8 L718.0 382.1 L717.5 380.5 L716.9 378.9 L716.4 377.3 L715.9 375.6 L715.4 374.0 L715.0 372.4 L714.5 370.8 L714.0 369.1 L713.6 367.5 L713.2 365.9 L712.8 364.3 L712.4 362.6 L712.0 361.0 L711.7 359.4 L711.3 357.8 L711.0 356.1 L710.7 354.5 L710.4 352.9 L710.1 351.3 L709.8 349.6 L709.5 348.0 L709.3 346.4 L709.1 344.8 L708.9 343.1 L708.7 341.5 L708.5 339.9 L708.3 338.3 L708.1 336.6 L708.0 335.0 L707.9 333.4 L707.8 331.8 L707.7 330.1 L707.6 328.5 L707.5 326.9 L707.5 325.3 L707.4 323.6 L707.4 322.0 L707.4 320.4 L707.4 318.8 L707.4 317.1 L707.5 315.5 L707.5 313.9 L707.6 312.3 L707.7 310.6 L707.8 309.0 L707.9 307.4 L708.0 305.8 L708.1 304.1 L708.3 302.5 L708.5 300.9 L708.7 299.3 L708.9 297.6 L709.1 296.0 L709.3 294.4 L709.5 292.8 L709.8 291.1 L710.1 289.5 L710.4 287.9 L710.7 286.3 L711.0 284.6 L711.3 283.0 L711.7 281.4 L712.0 279.8 L712.4 278.1 L712.8 276.5 L713.2 274.9 L713.6 273.3 L714.0 271.6 L714.5 270.0 L715.0 268.4 L715.4 266.8 L715.9 265.1 L716.4 263.5 L716.9 261.9 L717.5 260.3 L718.0 258.6 L718.6 257.0 L719.2 255.4 L719.7 253.8 L720.4 252.1 L721.0 250.5 L721.6 248.9 L722.2 247.3 L722.9 245.6 L723.6 244.0 L724.3 242.4 L725.0 240.8 L725.7 239.1 L726.4 237.5 L727.1 235.9 L727.9 234.3 L728.7 232.6 L729.4 231.0 L730.2 229.4 L731.0 227.8 L731.8 226.1 L732.7 224.5 L733.5 222.9 L734.4 221.3 L735.3 219.6 L736.1 218.0 L737.0 216.4 L737.9 214.8 L738.9 213.1 L739.8 211.5 L740.7 209.9 L741.7 208.3 L742.7 206.6 L743.6 205.0 L744.6 203.4 L745.6 201.8 L746.7 200.1 L747.7 198.5 L748.7 196.9 L749.8 195.3 L750.9 193.6 L751.9 192.0 L753.0 190.4 L754.1 188.8 L755.2 187.1 L756.4 185.5 L757.5 183.9 L758.6 182.3 L759.8 180.6 L761.0 179.0 L762.1 177.4 L763.3 175.8 L764.5 174.1 L765.7 172.5 L766.9 170.9 L768.2 169.3 L769.4 167.6 L770.7 166.0 L771.9 164.4 L773.2 162.8 L774.5 161.1 L775.8 159.5 L777.1 157.9 L778.4 156.3 L779.7 154.6 L781.0 153.0 L782.3 151.4 L783.7 149.8 L785.0 148.1 L786.4 146.5 L787.8 144.9 L789.2 143.3 L790.6 141.6 L792.0 140.0 L793.4 138.4 L794.8 136.8 L796.2 135.1 L797.6 133.5 L799.1 131.9 L800.5 130.3 L802.0 128.6 L803.4 127.0 L804.9 125.4 L806.4 123.8 L807.9 122.1 L809.4 120.5 L810.9 118.9 L812.4 117.3 L813.9 115.6 L815.4 114.0 L816.9 112.4 L818.5 110.8 L820.0 109.1 L821.5 107.5 L823.1 105.9 L824.6 104.3 L826.2 102.6 L827.8 101.0 L829.4 99.4 L830.9 97.8 L832.5 96.1 L834.1 94.5 L835.7 92.9 L837.3 91.3 L838.9 89.6 L840.5 88.0 L842.1 86.4 L843.8 84.8 L845.4 83.1 L847.0 81.5 L848.7 79.9 L850.3 78.3 L851.9 76.6 L853.6 75.0 L855.2 73.4 L856.9 71.8 L858.5 70.1 L860.2 68.5 L861.9 66.9 L863.5 65.3 L865.2 63.6 L866.9 62.0 L868.5 60.4 L870.2 58.8 L871.9 57.1 L873.6 55.5 L875.3 53.9 L876.9 52.3 L878.6 50.6 L880.3 49.0 L882.0 47.4 L883.7 45.8 L885.4 44.1 L887.1 42.5 L888.8 40.9 L890.5 39.3 L892.2 37.6 L893.9 36.0 L895.6 34.4 L897.3 32.8 L899.0 31.1 L900.7 29.5 L902.4 27.9"/><path d="M902.4 612.9 L900.3 611.3 L898.1 609.6 L896.0 608.0 L893.9 606.4 L891.8 604.8 L889.6 603.1 L887.5 601.5 L885.4 599.9 L883.3 598.3 L881.2 596.6 L879.0 595.0 L876.9 593.4 L874.8 591.8 L872.7 590.1 L870.6 588.5 L868.5 586.9 L866.4 585.3 L864.3 583.6 L862.2 582.0 L860.1 580.4 L858.0 578.8 L855.9 577.1 L853.8 575.5 L851.7 573.9 L849.6 572.3 L847.6 570.6 L845.5 569.0 L843.4 567.4 L841.4 565.8 L839.3 564.1 L837.3 562.5 L835.2 560.9 L833.2 559.3 L831.1 557.6 L829.1 556.0 L827.1 554.4 L825.1 552.8 L823.0 551.1 L821.0 549.5 L819.0 547.9 L817.0 546.3 L815.0 544.6 L813.1 543.0 L811.1 541.4 L809.1 539.8 L807.2 538.1 L805.2 536.5 L803.3 534.9 L801.3 533.3 L799.4 531.6 L797.5 530.0 L795.5 528.4 L793.6 526.8 L791.7 525.1 L789.8 523.5 L788.0 521.9 L786.1 520.3 L784.2 518.6 L782.4 517.0 L780.5 515.4 L778.7 513.8 L776.9 512.1 L775.0 510.5 L773.2 508.9 L771.4 507.3 L769.6 505.6 L767.9 504.0 L766.1 502.4 L764.3 500.8 L762.6 499.1 L760.9 497.5 L759.1 495.9 L757.4 494.3 L755.7 492.6 L754.0 491.0 L752.3 489.4 L750.7 487.8 L749.0 486.1 L747.4 484.5 L745.7 482.9 L744.1 481.3 L742.5 479.6 L740.9 478.0 L739.3 476.4 L737.7 474.8 L736.2 473.1 L734.6 471.5 L733.1 469.9 L731.6 468.3 L730.0 466.6 L728.5 465.0 L727.1 463.4 L725.6 461.8 L724.1 460.1 L722.7 458.5 L721.3 456.9 L719.8 455.3 L718.4 453.6 L717.1 452.0 L715.7 450.4 L714.3 448.8 L713.0 447.1 L711.6 445.5 L710.3 443.9 L709.0 442.3 L707.7 440.6 L706.5 439.0 L705.2 437.4 L704.0 435.8 L702.7 434.1 L701.5 432.5 L700.3 430.9 L699.1 429.3 L698.0 427.6 L696.8 426.0 L695.7 424.4 L694.6 422.8 L693.5 421.1 L692.4 419.5 L691.3 417.9 L690.3 416.3 L689.2 414.6 L688.2 413.0 L687.2 411.4 L686.2 409.8 L685.2 408.1 L684.3 406.5 L683.3 404.9 L682.4 403.3 L681.5 401.6 L680.6 400.0 L679.7 398.4 L678.9 396.8 L678.0 395.1 L677.2 393.5 L676.4 391.9 L675.6 390.3 L674.8 388.6 L674.1 387.0 L673.3 385.4 L672.6 383.8 L671.9 382.1 L671.2 380.5 L670.6 378.9 L669.9 377.3 L669.3 375.6 L668.7 374.0 L668.1 372.4 L667.5 370.8 L667.0 369.1 L666.4 367.5 L665.9 365.9 L665.4 364.3 L664.9 362.6 L664.4 361.0 L664.0 359.4 L663.5 357.8 L663.1 356.1 L662.7 354.5 L662.4 352.9 L662.0 351.3 L661.7 349.6 L661.3 348.0 L661.0 346.4 L660.7 344.8 L660.5 343.1 L660.2 341.5 L660.0 339.9 L659.8 338.3 L659.6 336.6 L659.4 335.0 L659.2 333.4 L659.1 331.8 L659.0 330.1 L658.9 328.5 L658.8 326.9 L658.7 325.3 L658.7 323.6 L658.7 322.0 L658.6 320.4 L658.7 318.8 L658.7 317.1 L658.7 315.5 L658.8 313.9 L658.9 312.3 L659.0 310.6 L659.1 309.0 L659.2 307.4 L659.4 305.8 L659.6 304.1 L659.8 302.5 L660.0 300.9 L660.2 299.3 L660.5 297.6 L660.7 296.0 L661.0 294.4 L661.3 292.8 L661.7 291.1 L662.0 289.5 L662.4 287.9 L662.7 286.3 L663.1 284.6 L663.5 283.0 L664.0 281.4 L664.4 279.8 L664.9 278.1 L665.4 276.5 L665.9 274.9 L666.4 273.3 L667.0 271.6 L667.5 270.0 L668.1 268.4 L668.7 266.8 L669.3 265.1 L669.9 263.5 L670.6 261.9 L671.2 260.3 L671.9 258.6 L672.6 257.0 L673.3 255.4 L674.1 253.8 L674.8 252.1 L675.6 250.5 L676.4 248.9 L677.2 247.3 L678.0 245.6 L678.9 244.0 L679.7 242.4 L680.6 240.8 L681.5 239.1 L682.4 237.5 L683.3 235.9 L684.3 234.3 L685.2 232.6 L686.2 231.0 L687.2 229.4 L688.2 227.8 L689.2 226.1 L690.3 224.5 L691.3 222.9 L692.4 221.3 L693.5 219.6 L694.6 218.0 L695.7 216.4 L696.8 214.8 L698.0 213.1 L699.1 211.5 L700.3 209.9 L701.5 208.3 L702.7 206.6 L704.0 205.0 L705.2 203.4 L706.5 201.8 L707.7 200.1 L709.0 198.5 L710.3 196.9 L711.6 195.3 L713.0 193.6 L714.3 192.0 L715.7 190.4 L717.1 188.8 L718.4 187.1 L719.8 185.5 L721.3 183.9 L722.7 182.3 L724.1 180.6 L725.6 179.0 L727.1 177.4 L728.5 175.8 L730.0 174.1 L731.6 172.5 L733.1 170.9 L734.6 169.3 L736.2 167.6 L737.7 166.0 L739.3 164.4 L740.9 162.8 L742.5 161.1 L744.1 159.5 L745.7 157.9 L747.4 156.3 L749.0 154.6 L750.7 153.0 L752.3 151.4 L754.0 149.8 L755.7 148.1 L757.4 146.5 L759.1 144.9 L760.9 143.3 L762.6 141.6 L764.3 140.0 L766.1 138.4 L767.9 136.8 L769.6 135.1 L771.4 133.5 L773.2 131.9 L775.0 130.3 L776.9 128.6 L778.7 127.0 L780.5 125.4 L782.4 123.8 L784.2 122.1 L786.1 120.5 L788.0 118.9 L789.8 117.3 L791.7 115.6 L793.6 114.0 L795.5 112.4 L797.5 110.8 L799.4 109.1 L801.3 107.5 L803.3 105.9 L805.2 104.3 L807.2 102.6 L809.1 101.0 L811.1 99.4 L813.1 97.8 L815.0 96.1 L817.0 94.5 L819.0 92.9 L821.0 91.3 L823.0 89.6 L825.1 88.0 L827.1 86.4 L829.1 84.8 L831.1 83.1 L833.2 81.5 L835.2 79.9 L837.3 78.3 L839.3 76.6 L841.4 75.0 L843.4 73.4 L845.5 71.8 L847.6 70.1 L849.6 68.5 L851.7 66.9 L853.8 65.3 L855.9 63.6 L858.0 62.0 L860.1 60.4 L862.2 58.8 L864.3 57.1 L866.4 55.5 L868.5 53.9 L870.6 52.3 L872.7 50.6 L874.8 49.0 L876.9 47.4 L879.0 45.8 L881.2 44.1 L883.3 42.5 L885.4 40.9 L887.5 39.3 L889.6 37.6 L891.8 36.0 L893.9 34.4 L896.0 32.8 L898.1 31.1 L900.3 29.5 L902.4 27.9"/><path d="M902.4 612.9 L899.8 611.3 L897.3 609.6 L894.7 608.0 L892.2 606.4 L889.6 604.8 L887.1 603.1 L884.5 601.5 L882.0 599.9 L879.5 598.3 L876.9 596.6 L874.4 595.0 L871.8 593.4 L869.3 591.8 L866.8 590.1 L864.2 588.5 L861.7 586.9 L859.2 585.3 L856.6 583.6 L854.1 582.0 L851.6 580.4 L849.1 578.8 L846.6 577.1 L844.1 575.5 L841.6 573.9 L839.1 572.3 L836.6 570.6 L834.1 569.0 L831.6 567.4 L829.2 565.8 L826.7 564.1 L824.2 562.5 L821.8 560.9 L819.3 559.3 L816.9 557.6 L814.4 556.0 L812.0 554.4 L809.6 552.8 L807.2 551.1 L804.8 549.5 L802.4 547.9 L800.0 546.3 L797.6 544.6 L795.2 543.0 L792.8 541.4 L790.5 539.8 L788.1 538.1 L785.8 536.5 L783.4 534.9 L781.1 533.3 L778.8 531.6 L776.5 530.0 L774.2 528.4 L771.9 526.8 L769.6 525.1 L767.3 523.5 L765.1 521.9 L762.8 520.3 L760.6 518.6 L758.4 517.0 L756.1 515.4 L753.9 513.8 L751.8 512.1 L749.6 510.5 L747.4 508.9 L745.2 507.3 L743.1 505.6 L741.0 504.0 L738.8 502.4 L736.7 500.8 L734.6 499.1 L732.5 497.5 L730.5 495.9 L728.4 494.3 L726.4 492.6 L724.3 491.0 L722.3 489.4 L720.3 487.8 L718.3 486.1 L716.3 484.5 L714.4 482.9 L712.4 481.3 L710.5 479.6 L708.6 478.0 L706.7 476.4 L704.8 474.8 L702.9 473.1 L701.1 471.5 L699.2 469.9 L697.4 468.3 L695.6 466.6 L693.8 465.0 L692.0 463.4 L690.2 461.8 L688.5 460.1 L686.7 458.5 L685.0 456.9 L683.3 455.3 L681.6 453.6 L680.0 452.0 L678.3 450.4 L676.7 448.8 L675.1 447.1 L673.5 445.5 L671.9 443.9 L670.3 442.3 L668.8 440.6 L667.3 439.0 L665.8 437.4 L664.3 435.8 L662.8 434.1 L661.3 432.5 L659.9 430.9 L658.5 429.3 L657.1 427.6 L655.7 426.0 L654.3 424.4 L653.0 422.8 L651.7 421.1 L650.4 419.5 L649.1 417.9 L647.8 416.3 L646.6 414.6 L645.3 413.0 L644.1 411.4 L642.9 409.8 L641.8 408.1 L640.6 406.5 L639.5 404.9 L638.4 403.3 L637.3 401.6 L636.2 400.0 L635.2 398.4 L634.2 396.8 L633.2 395.1 L632.2 393.5 L631.2 391.9 L630.3 390.3 L629.3 388.6 L628.4 387.0 L627.5 385.4 L626.7 383.8 L625.8 382.1 L625.0 380.5 L624.2 378.9 L623.4 377.3 L622.7 375.6 L621.9 374.0 L621.2 372.4 L620.5 370.8 L619.9 369.1 L619.2 367.5 L618.6 365.9 L618.0 364.3 L617.4 362.6 L616.8 361.0 L616.3 359.4 L615.8 357.8 L615.3 356.1 L614.8 354.5 L614.3 352.9 L613.9 351.3 L613.5 349.6 L613.1 348.0 L612.7 346.4 L612.4 344.8 L612.1 343.1 L611.8 341.5 L611.5 339.9 L611.2 338.3 L611.0 336.6 L610.8 335.0 L610.6 333.4 L610.4 331.8 L610.3 330.1 L610.2 328.5 L610.1 326.9 L610.0 325.3 L609.9 323.6 L609.9 322.0 L609.9 320.4 L609.9 318.8 L609.9 317.1 L610.0 315.5 L610.1 313.9 L610.2 312.3 L610.3 310.6 L610.4 309.0 L610.6 307.4 L610.8 305.8 L611.0 304.1 L611.2 302.5 L611.5 300.9 L611.8 299.3 L612.1 297.6 L612.4 296.0 L612.7 294.4 L613.1 292.8 L613.5 291.1 L613.9 289.5 L614.3 287.9 L614.8 286.3 L615.3 284.6 L615.8 283.0 L616.3 281.4 L616.8 279.8 L617.4 278.1 L618.0 276.5 L618.6 274.9 L619.2 273.3 L619.9 271.6 L620.5 270.0 L621.2 268.4 L621.9 266.8 L622.7 265.1 L623.4 263.5 L624.2 261.9 L625.0 260.3 L625.8 258.6 L626.7 257.0 L627.5 255.4 L628.4 253.8 L629.3 252.1 L630.3 250.5 L631.2 248.9 L632.2 247.3 L633.2 245.6 L634.2 244.0 L635.2 242.4 L636.2 240.8 L637.3 239.1 L638.4 237.5 L639.5 235.9 L640.6 234.3 L641.8 232.6 L642.9 231.0 L644.1 229.4 L645.3 227.8 L646.6 226.1 L647.8 224.5 L649.1 222.9 L650.4 221.3 L651.7 219.6 L653.0 218.0 L654.3 216.4 L655.7 214.8 L657.1 213.1 L658.5 211.5 L659.9 209.9 L661.3 208.3 L662.8 206.6 L664.3 205.0 L665.8 203.4 L667.3 201.8 L668.8 200.1 L670.3 198.5 L671.9 196.9 L673.5 195.3 L675.1 193.6 L676.7 192.0 L678.3 190.4 L680.0 188.8 L681.6 187.1 L683.3 185.5 L685.0 183.9 L686.7 182.3 L688.5 180.6 L690.2 179.0 L692.0 177.4 L693.8 175.8 L695.6 174.1 L697.4 172.5 L699.2 170.9 L701.1 169.3 L702.9 167.6 L704.8 166.0 L706.7 164.4 L708.6 162.8 L710.5 161.1 L712.4 159.5 L714.4 157.9 L716.3 156.3 L718.3 154.6 L720.3 153.0 L722.3 151.4 L724.3 149.8 L726.4 148.1 L728.4 146.5 L730.5 144.9 L732.5 143.3 L734.6 141.6 L736.7 140.0 L738.8 138.4 L741.0 136.8 L743.1 135.1 L745.2 133.5 L747.4 131.9 L749.6 130.3 L751.8 128.6 L753.9 127.0 L756.1 125.4 L758.4 123.8 L760.6 122.1 L762.8 120.5 L765.1 118.9 L767.3 117.3 L769.6 115.6 L771.9 114.0 L774.2 112.4 L776.5 110.8 L778.8 109.1 L781.1 107.5 L783.4 105.9 L785.8 104.3 L788.1 102.6 L790.5 101.0 L792.8 99.4 L795.2 97.8 L797.6 96.1 L800.0 94.5 L802.4 92.9 L804.8 91.3 L807.2 89.6 L809.6 88.0 L812.0 86.4 L814.4 84.8 L816.9 83.1 L819.3 81.5 L821.8 79.9 L824.2 78.3 L826.7 76.6 L829.2 75.0 L831.6 73.4 L834.1 71.8 L836.6 70.1 L839.1 68.5 L841.6 66.9 L844.1 65.3 L846.6 63.6 L849.1 62.0 L851.6 60.4 L854.1 58.8 L856.6 57.1 L859.2 55.5 L861.7 53.9 L864.2 52.3 L866.8 50.6 L869.3 49.0 L871.8 47.4 L874.4 45.8 L876.9 44.1 L879.5 42.5 L882.0 40.9 L884.5 39.3 L887.1 37.6 L889.6 36.0 L892.2 34.4 L894.7 32.8 L897.3 31.1 L899.8 29.5 L902.4 27.9"/><path d="M902.4 612.9 L899.4 611.3 L896.4 609.6 L893.5 608.0 L890.5 606.4 L887.5 604.8 L884.5 603.1 L881.6 601.5 L878.6 599.9 L875.6 598.3 L872.7 596.6 L869.7 595.0 L866.7 593.4 L863.8 591.8 L860.8 590.1 L857.9 588.5 L854.9 586.9 L852.0 585.3 L849.0 583.6 L846.1 582.0 L843.1 580.4 L840.2 578.8 L837.3 577.1 L834.4 575.5 L831.5 573.9 L828.5 572.3 L825.6 570.6 L822.7 569.0 L819.8 567.4 L817.0 565.8 L814.1 564.1 L811.2 562.5 L808.3 560.9 L805.5 559.3 L802.6 557.6 L799.8 556.0 L796.9 554.4 L794.1 552.8 L791.3 551.1 L788.5 549.5 L785.7 547.9 L782.9 546.3 L780.1 544.6 L777.3 543.0 L774.6 541.4 L771.8 539.8 L769.1 538.1 L766.3 536.5 L763.6 534.9 L760.9 533.3 L758.2 531.6 L755.5 530.0 L752.8 528.4 L750.1 526.8 L747.5 525.1 L744.8 523.5 L742.2 521.9 L739.6 520.3 L737.0 518.6 L734.4 517.0 L731.8 515.4 L729.2 513.8 L726.6 512.1 L724.1 510.5 L721.6 508.9 L719.0 507.3 L716.5 505.6 L714.1 504.0 L711.6 502.4 L709.1 500.8 L706.7 499.1 L704.2 497.5 L701.8 495.9 L699.4 494.3 L697.0 492.6 L694.7 491.0 L692.3 489.4 L690.0 487.8 L687.6 486.1 L685.3 484.5 L683.0 482.9 L680.8 481.3 L678.5 479.6 L676.3 478.0 L674.1 476.4 L671.9 474.8 L669.7 473.1 L667.5 471.5 L665.3 469.9 L663.2 468.3 L661.1 466.6 L659.0 465.0 L656.9 463.4 L654.9 461.8 L652.8 460.1 L650.8 458.5 L648.8 456.9 L646.8 455.3 L644.9 453.6 L642.9 452.0 L641.0 450.4 L639.1 448.8 L637.2 447.1 L635.3 445.5 L633.5 443.9 L631.7 442.3 L629.9 440.6 L628.1 439.0 L626.3 437.4 L624.6 435.8 L622.9 434.1 L621.2 432.5 L619.5 430.9 L617.8 429.3 L616.2 427.6 L614.6 426.0 L613.0 424.4 L611.4 422.8 L609.9 421.1 L608.4 419.5 L606.9 417.9 L605.4 416.3 L603.9 414.6 L602.5 413.0 L601.1 411.4 L599.7 409.8 L598.3 408.1 L597.0 406.5 L595.7 404.9 L594.4 403.3 L593.1 401.6 L591.9 400.0 L590.7 398.4 L589.5 396.8 L588.3 395.1 L587.1 393.5 L586.0 391.9 L584.9 390.3 L583.8 388.6 L582.8 387.0 L581.7 385.4 L580.7 383.8 L579.7 382.1 L578.8 380.5 L577.9 378.9 L576.9 377.3 L576.1 375.6 L575.2 374.0 L574.4 372.4 L573.6 370.8 L572.8 369.1 L572.0 367.5 L571.3 365.9 L570.6 364.3 L569.9 362.6 L569.2 361.0 L568.6 359.4 L568.0 357.8 L567.4 356.1 L566.9 354.5 L566.3 352.9 L565.8 351.3 L565.4 349.6 L564.9 348.0 L564.5 346.4 L564.1 344.8 L563.7 343.1 L563.3 341.5 L563.0 339.9 L562.7 338.3 L562.4 336.6 L562.2 335.0 L562.0 333.4 L561.8 331.8 L561.6 330.1 L561.5 328.5 L561.4 326.9 L561.3 325.3 L561.2 323.6 L561.2 322.0 L561.1 320.4 L561.2 318.8 L561.2 317.1 L561.3 315.5 L561.4 313.9 L561.5 312.3 L561.6 310.6 L561.8 309.0 L562.0 307.4 L562.2 305.8 L562.4 304.1 L562.7 302.5 L563.0 300.9 L563.3 299.3 L563.7 297.6 L564.1 296.0 L564.5 294.4 L564.9 292.8 L565.4 291.1 L565.8 289.5 L566.3 287.9 L566.9 286.3 L567.4 284.6 L568.0 283.0 L568.6 281.4 L569.2 279.8 L569.9 278.1 L570.6 276.5 L571.3 274.9 L572.0 273.3 L572.8 271.6 L573.6 270.0 L574.4 268.4 L575.2 266.8 L576.1 265.1 L576.9 263.5 L577.9 261.9 L578.8 260.3 L579.7 258.6 L580.7 257.0 L581.7 255.4 L582.8 253.8 L583.8 252.1 L584.9 250.5 L586.0 248.9 L587.1 247.3 L588.3 245.6 L589.5 244.0 L590.7 242.4 L591.9 240.8 L593.1 239.1 L594.4 237.5 L595.7 235.9 L597.0 234.3 L598.3 232.6 L599.7 231.0 L601.1 229.4 L602.5 227.8 L603.9 226.1 L605.4 224.5 L606.9 222.9 L608.4 221.3 L609.9 219.6 L611.4 218.0 L613.0 216.4 L614.6 214.8 L616.2 213.1 L617.8 211.5 L619.5 209.9 L621.2 208.3 L622.9 206.6 L624.6 205.0 L626.3 203.4 L628.1 201.8 L629.9 200.1 L631.7 198.5 L633.5 196.9 L635.3 195.3 L637.2 193.6 L639.1 192.0 L641.0 190.4 L642.9 188.8 L644.9 187.1 L646.8 185.5 L648.8 183.9 L650.8 182.3 L652.8 180.6 L654.9 179.0 L656.9 177.4 L659.0 175.8 L661.1 174.1 L663.2 172.5 L665.3 170.9 L667.5 169.3 L669.7 167.6 L671.9 166.0 L674.1 164.4 L676.3 162.8 L678.5 161.1 L680.8 159.5 L683.0 157.9 L685.3 156.3 L687.6 154.6 L690.0 153.0 L692.3 151.4 L694.7 149.8 L697.0 148.1 L699.4 146.5 L701.8 144.9 L704.2 143.3 L706.7 141.6 L709.1 140.0 L711.6 138.4 L714.1 136.8 L716.5 135.1 L719.0 133.5 L721.6 131.9 L724.1 130.3 L726.6 128.6 L729.2 127.0 L731.8 125.4 L734.4 123.8 L737.0 122.1 L739.6 120.5 L742.2 118.9 L744.8 117.3 L747.5 115.6 L750.1 114.0 L752.8 112.4 L755.5 110.8 L758.2 109.1 L760.9 107.5 L763.6 105.9 L766.3 104.3 L769.1 102.6 L771.8 101.0 L774.6 99.4 L777.3 97.8 L780.1 96.1 L782.9 94.5 L785.7 92.9 L788.5 91.3 L791.3 89.6 L794.1 88.0 L796.9 86.4 L799.8 84.8 L802.6 83.1 L805.5 81.5 L808.3 79.9 L811.2 78.3 L814.1 76.6 L817.0 75.0 L819.8 73.4 L822.7 71.8 L825.6 70.1 L828.5 68.5 L831.5 66.9 L834.4 65.3 L837.3 63.6 L840.2 62.0 L843.1 60.4 L846.1 58.8 L849.0 57.1 L852.0 55.5 L854.9 53.9 L857.9 52.3 L860.8 50.6 L863.8 49.0 L866.7 47.4 L869.7 45.8 L872.7 44.1 L875.6 42.5 L878.6 40.9 L881.6 39.3 L884.5 37.6 L887.5 36.0 L890.5 34.4 L893.5 32.8 L896.4 31.1 L899.4 29.5 L902.4 27.9"/><path d="M902.4 612.9 L899.0 611.3 L895.6 609.6 L892.2 608.0 L888.8 606.4 L885.4 604.8 L882.0 603.1 L878.6 601.5 L875.2 599.9 L871.8 598.3 L868.4 596.6 L865.0 595.0 L861.6 593.4 L858.3 591.8 L854.9 590.1 L851.5 588.5 L848.1 586.9 L844.8 585.3 L841.4 583.6 L838.0 582.0 L834.7 580.4 L831.3 578.8 L828.0 577.1 L824.6 575.5 L821.3 573.9 L818.0 572.3 L814.7 570.6 L811.4 569.0 L808.1 567.4 L804.8 565.8 L801.5 564.1 L798.2 562.5 L794.9 560.9 L791.6 559.3 L788.4 557.6 L785.1 556.0 L781.9 554.4 L778.7 552.8 L775.4 551.1 L772.2 549.5 L769.0 547.9 L765.8 546.3 L762.6 544.6 L759.5 543.0 L756.3 541.4 L753.2 539.8 L750.0 538.1 L746.9 536.5 L743.8 534.9 L740.7 533.3 L737.6 531.6 L734.5 530.0 L731.4 528.4 L728.4 526.8 L725.3 525.1 L722.3 523.5 L719.3 521.9 L716.3 520.3 L713.3 518.6 L710.4 517.0 L707.4 515.4 L704.5 513.8 L701.5 512.1 L698.6 510.5 L695.7 508.9 L692.9 507.3 L690.0 505.6 L687.1 504.0 L684.3 502.4 L681.5 500.8 L678.7 499.1 L675.9 497.5 L673.2 495.9 L670.4 494.3 L667.7 492.6 L665.0 491.0 L662.3 489.4 L659.6 487.8 L657.0 486.1 L654.3 484.5 L651.7 482.9 L649.1 481.3 L646.5 479.6 L644.0 478.0 L641.4 476.4 L638.9 474.8 L636.4 473.1 L633.9 471.5 L631.5 469.9 L629.0 468.3 L626.6 466.6 L624.2 465.0 L621.9 463.4 L619.5 461.8 L617.2 460.1 L614.9 458.5 L612.6 456.9 L610.3 455.3 L608.1 453.6 L605.8 452.0 L603.6 450.4 L601.5 448.8 L599.3 447.1 L597.2 445.5 L595.1 443.9 L593.0 442.3 L590.9 440.6 L588.9 439.0 L586.9 437.4 L584.9 435.8 L582.9 434.1 L581.0 432.5 L579.1 430.9 L577.2 429.3 L575.3 427.6 L573.5 426.0 L571.7 424.4 L569.9 422.8 L568.1 421.1 L566.4 419.5 L564.7 417.9 L563.0 416.3 L561.3 414.6 L559.7 413.0 L558.1 411.4 L556.5 409.8 L554.9 408.1 L553.4 406.5 L551.9 404.9 L550.4 403.3 L548.9 401.6 L547.5 400.0 L546.1 398.4 L544.7 396.8 L543.4 395.1 L542.1 393.5 L540.8 391.9 L539.5 390.3 L538.3 388.6 L537.1 387.0 L535.9 385.4 L534.8 383.8 L533.6 382.1 L532.6 380.5 L531.5 378.9 L530.5 377.3 L529.4 375.6 L528.5 374.0 L527.5 372.4 L526.6 370.8 L525.7 369.1 L524.8 367.5 L524.0 365.9 L523.2 364.3 L522.4 362.6 L521.6 361.0 L520.9 359.4 L520.2 357.8 L519.6 356.1 L518.9 354.5 L518.3 352.9 L517.7 351.3 L517.2 349.6 L516.7 348.0 L516.2 346.4 L515.7 344.8 L515.3 343.1 L514.9 341.5 L514.5 339.9 L514.2 338.3 L513.9 336.6 L513.6 335.0 L513.4 333.4 L513.1 331.8 L512.9 330.1 L512.8 328.5 L512.6 326.9 L512.5 325.3 L512.5 323.6 L512.4 322.0 L512.4 320.4 L512.4 318.8 L512.5 317.1 L512.5 315.5 L512.6 313.9 L512.8 312.3 L512.9 310.6 L513.1 309.0 L513.4 307.4 L513.6 305.8 L513.9 304.1 L514.2 302.5 L514.5 300.9 L514.9 299.3 L515.3 297.6 L515.7 296.0 L516.2 294.4 L516.7 292.8 L517.2 291.1 L517.7 289.5 L518.3 287.9 L518.9 286.3 L519.6 284.6 L520.2 283.0 L520.9 281.4 L521.6 279.8 L522.4 278.1 L523.2 276.5 L524.0 274.9 L524.8 273.3 L525.7 271.6 L526.6 270.0 L527.5 268.4 L528.5 266.8 L529.4 265.1 L530.5 263.5 L531.5 261.9 L532.6 260.3 L533.6 258.6 L534.8 257.0 L535.9 255.4 L537.1 253.8 L538.3 252.1 L539.5 250.5 L540.8 248.9 L542.1 247.3 L543.4 245.6 L544.7 244.0 L546.1 242.4 L547.5 240.8 L548.9 239.1 L550.4 237.5 L551.9 235.9 L553.4 234.3 L554.9 232.6 L556.5 231.0 L558.1 229.4 L559.7 227.8 L561.3 226.1 L563.0 224.5 L564.7 222.9 L566.4 221.3 L568.1 219.6 L569.9 218.0 L571.7 216.4 L573.5 214.8 L575.3 213.1 L577.2 211.5 L579.1 209.9 L581.0 208.3 L582.9 206.6 L584.9 205.0 L586.9 203.4 L588.9 201.8 L590.9 200.1 L593.0 198.5 L595.1 196.9 L597.2 195.3 L599.3 193.6 L601.5 192.0 L603.6 190.4 L605.8 188.8 L608.1 187.1 L610.3 185.5 L612.6 183.9 L614.9 182.3 L617.2 180.6 L619.5 179.0 L621.9 177.4 L624.2 175.8 L626.6 174.1 L629.0 172.5 L631.5 170.9 L633.9 169.3 L636.4 167.6 L638.9 166.0 L641.4 164.4 L644.0 162.8 L646.5 161.1 L649.1 159.5 L651.7 157.9 L654.3 156.3 L657.0 154.6 L659.6 153.0 L662.3 151.4 L665.0 149.8 L667.7 148.1 L670.4 146.5 L673.2 144.9 L675.9 143.3 L678.7 141.6 L681.5 140.0 L684.3 138.4 L687.1 136.8 L690.0 135.1 L692.9 133.5 L695.7 131.9 L698.6 130.3 L701.5 128.6 L704.5 127.0 L707.4 125.4 L710.4 123.8 L713.3 122.1 L716.3 120.5 L719.3 118.9 L722.3 117.3 L725.3 115.6 L728.4 114.0 L731.4 112.4 L734.5 110.8 L737.6 109.1 L740.7 107.5 L743.8 105.9 L746.9 104.3 L750.0 102.6 L753.2 101.0 L756.3 99.4 L759.5 97.8 L762.6 96.1 L765.8 94.5 L769.0 92.9 L772.2 91.3 L775.4 89.6 L778.7 88.0 L781.9 86.4 L785.1 84.8 L788.4 83.1 L791.6 81.5 L794.9 79.9 L798.2 78.3 L801.5 76.6 L804.8 75.0 L808.1 73.4 L811.4 71.8 L814.7 70.1 L818.0 68.5 L821.3 66.9 L824.6 65.3 L828.0 63.6 L831.3 62.0 L834.7 60.4 L838.0 58.8 L841.4 57.1 L844.8 55.5 L848.1 53.9 L851.5 52.3 L854.9 50.6 L858.3 49.0 L861.6 47.4 L865.0 45.8 L868.4 44.1 L871.8 42.5 L875.2 40.9 L878.6 39.3 L882.0 37.6 L885.4 36.0 L888.8 34.4 L892.2 32.8 L895.6 31.1 L899.0 29.5 L902.4 27.9"/><path d="M902.4 612.9 L898.6 611.3 L894.7 609.6 L890.9 608.0 L887.1 606.4 L883.3 604.8 L879.4 603.1 L875.6 601.5 L871.8 599.9 L868.0 598.3 L864.2 596.6 L860.3 595.0 L856.5 593.4 L852.7 591.8 L848.9 590.1 L845.1 588.5 L841.3 586.9 L837.5 585.3 L833.8 583.6 L830.0 582.0 L826.2 580.4 L822.4 578.8 L818.7 577.1 L814.9 575.5 L811.2 573.9 L807.4 572.3 L803.7 570.6 L800.0 569.0 L796.3 567.4 L792.5 565.8 L788.8 564.1 L785.1 562.5 L781.5 560.9 L777.8 559.3 L774.1 557.6 L770.5 556.0 L766.8 554.4 L763.2 552.8 L759.6 551.1 L755.9 549.5 L752.3 547.9 L748.7 546.3 L745.2 544.6 L741.6 543.0 L738.0 541.4 L734.5 539.8 L731.0 538.1 L727.4 536.5 L723.9 534.9 L720.5 533.3 L717.0 531.6 L713.5 530.0 L710.1 528.4 L706.6 526.8 L703.2 525.1 L699.8 523.5 L696.4 521.9 L693.0 520.3 L689.7 518.6 L686.3 517.0 L683.0 515.4 L679.7 513.8 L676.4 512.1 L673.2 510.5 L669.9 508.9 L666.7 507.3 L663.4 505.6 L660.2 504.0 L657.1 502.4 L653.9 500.8 L650.7 499.1 L647.6 497.5 L644.5 495.9 L641.4 494.3 L638.4 492.6 L635.3 491.0 L632.3 489.4 L629.3 487.8 L626.3 486.1 L623.3 484.5 L620.4 482.9 L617.5 481.3 L614.6 479.6 L611.7 478.0 L608.8 476.4 L606.0 474.8 L603.2 473.1 L600.4 471.5 L597.6 469.9 L594.9 468.3 L592.2 466.6 L589.5 465.0 L586.8 463.4 L584.1 461.8 L581.5 460.1 L578.9 458.5 L576.3 456.9 L573.8 455.3 L571.3 453.6 L568.8 452.0 L566.3 450.4 L563.8 448.8 L561.4 447.1 L559.0 445.5 L556.7 443.9 L554.3 442.3 L552.0 440.6 L549.7 439.0 L547.4 437.4 L545.2 435.8 L543.0 434.1 L540.8 432.5 L538.7 430.9 L536.5 429.3 L534.4 427.6 L532.4 426.0 L530.3 424.4 L528.3 422.8 L526.3 421.1 L524.4 419.5 L522.4 417.9 L520.5 416.3 L518.7 414.6 L516.8 413.0 L515.0 411.4 L513.2 409.8 L511.5 408.1 L509.7 406.5 L508.1 404.9 L506.4 403.3 L504.8 401.6 L503.2 400.0 L501.6 398.4 L500.0 396.8 L498.5 395.1 L497.0 393.5 L495.6 391.9 L494.2 390.3 L492.8 388.6 L491.4 387.0 L490.1 385.4 L488.8 383.8 L487.6 382.1 L486.3 380.5 L485.1 378.9 L484.0 377.3 L482.8 375.6 L481.7 374.0 L480.6 372.4 L479.6 370.8 L478.6 369.1 L477.6 367.5 L476.7 365.9 L475.8 364.3 L474.9 362.6 L474.1 361.0 L473.2 359.4 L472.5 357.8 L471.7 356.1 L471.0 354.5 L470.3 352.9 L469.7 351.3 L469.1 349.6 L468.5 348.0 L467.9 346.4 L467.4 344.8 L466.9 343.1 L466.5 341.5 L466.1 339.9 L465.7 338.3 L465.3 336.6 L465.0 335.0 L464.7 333.4 L464.5 331.8 L464.3 330.1 L464.1 328.5 L463.9 326.9 L463.8 325.3 L463.7 323.6 L463.7 322.0 L463.6 320.4 L463.7 318.8 L463.7 317.1 L463.8 315.5 L463.9 313.9 L464.1 312.3 L464.3 310.6 L464.5 309.0 L464.7 307.4 L465.0 305.8 L465.3 304.1 L465.7 302.5 L466.1 300.9 L466.5 299.3 L466.9 297.6 L467.4 296.0 L467.9 294.4 L468.5 292.8 L469.1 291.1 L469.7 289.5 L470.3 287.9 L471.0 286.3 L471.7 284.6 L472.5 283.0 L473.2 281.4 L474.1 279.8 L474.9 278.1 L475.8 276.5 L476.7 274.9 L477.6 273.3 L478.6 271.6 L479.6 270.0 L480.6 268.4 L481.7 266.8 L482.8 265.1 L484.0 263.5 L485.1 261.9 L486.3 260.3 L487.6 258.6 L488.8 257.0 L490.1 255.4 L491.4 253.8 L492.8 252.1 L494.2 250.5 L495.6 248.9 L497.0 247.3 L498.5 245.6 L500.0 244.0 L501.6 242.4 L503.2 240.8 L504.8 239.1 L506.4 237.5 L508.1 235.9 L509.7 234.3 L511.5 232.6 L513.2 231.0 L515.0 229.4 L516.8 227.8 L518.7 226.1 L520.5 224.5 L522.4 222.9 L524.4 221.3 L526.3 219.6 L528.3 218.0 L530.3 216.4 L532.4 214.8 L534.4 213.1 L536.5 211.5 L538.7 209.9 L540.8 208.3 L543.0 206.6 L545.2 205.0 L547.4 203.4 L549.7 201.8 L552.0 200.1 L554.3 198.5 L556.7 196.9 L559.0 195.3 L561.4 193.6 L563.8 192.0 L566.3 190.4 L568.8 188.8 L571.3 187.1 L573.8 185.5 L576.3 183.9 L578.9 182.3 L581.5 180.6 L584.1 179.0 L586.8 177.4 L589.5 175.8 L592.2 174.1 L594.9 172.5 L597.6 170.9 L600.4 169.3 L603.2 167.6 L606.0 166.0 L608.8 164.4 L611.7 162.8 L614.6 161.1 L617.5 159.5 L620.4 157.9 L623.3 156.3 L626.3 154.6 L629.3 153.0 L632.3 151.4 L635.3 149.8 L638.4 148.1 L641.4 146.5 L644.5 144.9 L647.6 143.3 L650.7 141.6 L653.9 140.0 L657.1 138.4 L660.2 136.8 L663.4 135.1 L666.7 133.5 L669.9 131.9 L673.2 130.3 L676.4 128.6 L679.7 127.0 L683.0 125.4 L686.3 123.8 L689.7 122.1 L693.0 120.5 L696.4 118.9 L699.8 117.3 L703.2 115.6 L706.6 114.0 L710.1 112.4 L713.5 110.8 L717.0 109.1 L720.5 107.5 L723.9 105.9 L727.4 104.3 L731.0 102.6 L734.5 101.0 L738.0 99.4 L741.6 97.8 L745.2 96.1 L748.7 94.5 L752.3 92.9 L755.9 91.3 L759.6 89.6 L763.2 88.0 L766.8 86.4 L770.5 84.8 L774.1 83.1 L777.8 81.5 L781.5 79.9 L785.1 78.3 L788.8 76.6 L792.5 75.0 L796.3 73.4 L800.0 71.8 L803.7 70.1 L807.4 68.5 L811.2 66.9 L814.9 65.3 L818.7 63.6 L822.4 62.0 L826.2 60.4 L830.0 58.8 L833.8 57.1 L837.5 55.5 L841.3 53.9 L845.1 52.3 L848.9 50.6 L852.7 49.0 L856.5 47.4 L860.3 45.8 L864.2 44.1 L868.0 42.5 L871.8 40.9 L875.6 39.3 L879.4 37.6 L883.3 36.0 L887.1 34.4 L890.9 32.8 L894.7 31.1 L898.6 29.5 L902.4 27.9"/><path d="M902.4 612.9 L898.1 611.3 L893.9 609.6 L889.6 608.0 L885.4 606.4 L881.1 604.8 L876.9 603.1 L872.6 601.5 L868.4 599.9 L864.2 598.3 L859.9 596.6 L855.7 595.0 L851.4 593.4 L847.2 591.8 L843.0 590.1 L838.8 588.5 L834.6 586.9 L830.3 585.3 L826.1 583.6 L821.9 582.0 L817.7 580.4 L813.6 578.8 L809.4 577.1 L805.2 575.5 L801.0 573.9 L796.9 572.3 L792.7 570.6 L788.6 569.0 L784.5 567.4 L780.3 565.8 L776.2 564.1 L772.1 562.5 L768.0 560.9 L763.9 559.3 L759.9 557.6 L755.8 556.0 L751.8 554.4 L747.7 552.8 L743.7 551.1 L739.7 549.5 L735.7 547.9 L731.7 546.3 L727.7 544.6 L723.7 543.0 L719.8 541.4 L715.8 539.8 L711.9 538.1 L708.0 536.5 L704.1 534.9 L700.2 533.3 L696.4 531.6 L692.5 530.0 L688.7 528.4 L684.9 526.8 L681.1 525.1 L677.3 523.5 L673.5 521.9 L669.8 520.3 L666.1 518.6 L662.3 517.0 L658.6 515.4 L655.0 513.8 L651.3 512.1 L647.7 510.5 L644.1 508.9 L640.5 507.3 L636.9 505.6 L633.3 504.0 L629.8 502.4 L626.3 500.8 L622.8 499.1 L619.3 497.5 L615.9 495.9 L612.4 494.3 L609.0 492.6 L605.6 491.0 L602.3 489.4 L598.9 487.8 L595.6 486.1 L592.3 484.5 L589.0 482.9 L585.8 481.3 L582.6 479.6 L579.4 478.0 L576.2 476.4 L573.0 474.8 L569.9 473.1 L566.8 471.5 L563.8 469.9 L560.7 468.3 L557.7 466.6 L554.7 465.0 L551.7 463.4 L548.8 461.8 L545.9 460.1 L543.0 458.5 L540.1 456.9 L537.3 455.3 L534.5 453.6 L531.7 452.0 L529.0 450.4 L526.2 448.8 L523.5 447.1 L520.9 445.5 L518.2 443.9 L515.6 442.3 L513.1 440.6 L510.5 439.0 L508.0 437.4 L505.5 435.8 L503.1 434.1 L500.6 432.5 L498.2 430.9 L495.9 429.3 L493.5 427.6 L491.2 426.0 L489.0 424.4 L486.7 422.8 L484.5 421.1 L482.4 419.5 L480.2 417.9 L478.1 416.3 L476.0 414.6 L474.0 413.0 L472.0 411.4 L470.0 409.8 L468.0 408.1 L466.1 406.5 L464.2 404.9 L462.4 403.3 L460.6 401.6 L458.8 400.0 L457.0 398.4 L455.3 396.8 L453.7 395.1 L452.0 393.5 L450.4 391.9 L448.8 390.3 L447.3 388.6 L445.8 387.0 L444.3 385.4 L442.9 383.8 L441.5 382.1 L440.1 380.5 L438.8 378.9 L437.5 377.3 L436.2 375.6 L435.0 374.0 L433.8 372.4 L432.6 370.8 L431.5 369.1 L430.4 367.5 L429.4 365.9 L428.4 364.3 L427.4 362.6 L426.5 361.0 L425.6 359.4 L424.7 357.8 L423.9 356.1 L423.1 354.5 L422.3 352.9 L421.6 351.3 L420.9 349.6 L420.3 348.0 L419.6 346.4 L419.1 344.8 L418.5 343.1 L418.0 341.5 L417.6 339.9 L417.1 338.3 L416.8 336.6 L416.4 335.0 L416.1 333.4 L415.8 331.8 L415.6 330.1 L415.4 328.5 L415.2 326.9 L415.1 325.3 L415.0 323.6 L414.9 322.0 L414.9 320.4 L414.9 318.8 L415.0 317.1 L415.1 315.5 L415.2 313.9 L415.4 312.3 L415.6 310.6 L415.8 309.0 L416.1 307.4 L416.4 305.8 L416.8 304.1 L417.1 302.5 L417.6 300.9 L418.0 299.3 L418.5 297.6 L419.1 296.0 L419.6 294.4 L420.3 292.8 L420.9 291.1 L421.6 289.5 L422.3 287.9 L423.1 286.3 L423.9 284.6 L424.7 283.0 L425.6 281.4 L426.5 279.8 L427.4 278.1 L428.4 276.5 L429.4 274.9 L430.4 273.3 L431.5 271.6 L432.6 270.0 L433.8 268.4 L435.0 266.8 L436.2 265.1 L437.5 263.5 L438.8 261.9 L440.1 260.3 L441.5 258.6 L442.9 257.0 L444.3 255.4 L445.8 253.8 L447.3 252.1 L448.8 250.5 L450.4 248.9 L452.0 247.3 L453.7 245.6 L455.3 244.0 L457.0 242.4 L458.8 240.8 L460.6 239.1 L462.4 237.5 L464.2 235.9 L466.1 234.3 L468.0 232.6 L470.0 231.0 L472.0 229.4 L474.0 227.8 L476.0 226.1 L478.1 224.5 L480.2 222.9 L482.4 221.3 L484.5 219.6 L486.7 218.0 L489.0 216.4 L491.2 214.8 L493.5 213.1 L495.9 211.5 L498.2 209.9 L500.6 208.3 L503.1 206.6 L505.5 205.0 L508.0 203.4 L510.5 201.8 L513.1 200.1 L515.6 198.5 L518.2 196.9 L520.9 195.3 L523.5 193.6 L526.2 192.0 L529.0 190.4 L531.7 188.8 L534.5 187.1 L537.3 185.5 L540.1 183.9 L543.0 182.3 L545.9 180.6 L548.8 179.0 L551.7 177.4 L554.7 175.8 L557.7 174.1 L560.7 172.5 L563.8 170.9 L566.8 169.3 L569.9 167.6 L573.0 166.0 L576.2 164.4 L579.4 162.8 L582.6 161.1 L585.8 159.5 L589.0 157.9 L592.3 156.3 L595.6 154.6 L598.9 153.0 L602.3 151.4 L605.6 149.8 L609.0 148.1 L612.4 146.5 L615.9 144.9 L619.3 143.3 L622.8 141.6 L626.3 140.0 L629.8 138.4 L633.3 136.8 L636.9 135.1 L640.5 133.5 L644.1 131.9 L647.7 130.3 L651.3 128.6 L655.0 127.0 L658.6 125.4 L662.3 123.8 L666.1 122.1 L669.8 120.5 L673.5 118.9 L677.3 117.3 L681.1 115.6 L684.9 114.0 L688.7 112.4 L692.5 110.8 L696.4 109.1 L700.2 107.5 L704.1 105.9 L708.0 104.3 L711.9 102.6 L715.8 101.0 L719.8 99.4 L723.7 97.8 L727.7 96.1 L731.7 94.5 L735.7 92.9 L739.7 91.3 L743.7 89.6 L747.7 88.0 L751.8 86.4 L755.8 84.8 L759.9 83.1 L763.9 81.5 L768.0 79.9 L772.1 78.3 L776.2 76.6 L780.3 75.0 L784.5 73.4 L788.6 71.8 L792.7 70.1 L796.9 68.5 L801.0 66.9 L805.2 65.3 L809.4 63.6 L813.6 62.0 L817.7 60.4 L821.9 58.8 L826.1 57.1 L830.3 55.5 L834.6 53.9 L838.8 52.3 L843.0 50.6 L847.2 49.0 L851.4 47.4 L855.7 45.8 L859.9 44.1 L864.2 42.5 L868.4 40.9 L872.6 39.3 L876.9 37.6 L881.1 36.0 L885.4 34.4 L889.6 32.8 L893.9 31.1 L898.1 29.5 L902.4 27.9"/><path d="M902.4 612.9 L897.7 611.3 L893.0 609.6 L888.4 608.0 L883.7 606.4 L879.0 604.8 L874.3 603.1 L869.7 601.5 L865.0 599.9 L860.3 598.3 L855.7 596.6 L851.0 595.0 L846.3 593.4 L841.7 591.8 L837.0 590.1 L832.4 588.5 L827.8 586.9 L823.1 585.3 L818.5 583.6 L813.9 582.0 L809.3 580.4 L804.7 578.8 L800.1 577.1 L795.5 575.5 L790.9 573.9 L786.3 572.3 L781.8 570.6 L777.2 569.0 L772.7 567.4 L768.1 565.8 L763.6 564.1 L759.1 562.5 L754.6 560.9 L750.1 559.3 L745.6 557.6 L741.1 556.0 L736.7 554.4 L732.2 552.8 L727.8 551.1 L723.4 549.5 L719.0 547.9 L714.6 546.3 L710.2 544.6 L705.9 543.0 L701.5 541.4 L697.2 539.8 L692.9 538.1 L688.6 536.5 L684.3 534.9 L680.0 533.3 L675.8 531.6 L671.5 530.0 L667.3 528.4 L663.1 526.8 L658.9 525.1 L654.8 523.5 L650.6 521.9 L646.5 520.3 L642.4 518.6 L638.3 517.0 L634.3 515.4 L630.2 513.8 L626.2 512.1 L622.2 510.5 L618.2 508.9 L614.3 507.3 L610.3 505.6 L606.4 504.0 L602.5 502.4 L598.7 500.8 L594.8 499.1 L591.0 497.5 L587.2 495.9 L583.4 494.3 L579.7 492.6 L576.0 491.0 L572.3 489.4 L568.6 487.8 L564.9 486.1 L561.3 484.5 L557.7 482.9 L554.1 481.3 L550.6 479.6 L547.1 478.0 L543.6 476.4 L540.1 474.8 L536.7 473.1 L533.3 471.5 L529.9 469.9 L526.5 468.3 L523.2 466.6 L519.9 465.0 L516.7 463.4 L513.4 461.8 L510.2 460.1 L507.0 458.5 L503.9 456.9 L500.8 455.3 L497.7 453.6 L494.6 452.0 L491.6 450.4 L488.6 448.8 L485.7 447.1 L482.7 445.5 L479.8 443.9 L477.0 442.3 L474.1 440.6 L471.3 439.0 L468.6 437.4 L465.8 435.8 L463.1 434.1 L460.5 432.5 L457.8 430.9 L455.2 429.3 L452.7 427.6 L450.1 426.0 L447.6 424.4 L445.2 422.8 L442.7 421.1 L440.4 419.5 L438.0 417.9 L435.7 416.3 L433.4 414.6 L431.1 413.0 L428.9 411.4 L426.7 409.8 L424.6 408.1 L422.5 406.5 L420.4 404.9 L418.4 403.3 L416.4 401.6 L414.4 400.0 L412.5 398.4 L410.6 396.8 L408.8 395.1 L407.0 393.5 L405.2 391.9 L403.5 390.3 L401.8 388.6 L400.1 387.0 L398.5 385.4 L396.9 383.8 L395.4 382.1 L393.9 380.5 L392.4 378.9 L391.0 377.3 L389.6 375.6 L388.2 374.0 L386.9 372.4 L385.7 370.8 L384.4 369.1 L383.2 367.5 L382.1 365.9 L381.0 364.3 L379.9 362.6 L378.9 361.0 L377.9 359.4 L376.9 357.8 L376.0 356.1 L375.1 354.5 L374.3 352.9 L373.5 351.3 L372.8 349.6 L372.0 348.0 L371.4 346.4 L370.7 344.8 L370.1 343.1 L369.6 341.5 L369.1 339.9 L368.6 338.3 L368.2 336.6 L367.8 335.0 L367.5 333.4 L367.2 331.8 L366.9 330.1 L366.7 328.5 L366.5 326.9 L366.3 325.3 L366.2 323.6 L366.2 322.0 L366.1 320.4 L366.2 318.8 L366.2 317.1 L366.3 315.5 L366.5 313.9 L366.7 312.3 L366.9 310.6 L367.2 309.0 L367.5 307.4 L367.8 305.8 L368.2 304.1 L368.6 302.5 L369.1 300.9 L369.6 299.3 L370.1 297.6 L370.7 296.0 L371.4 294.4 L372.0 292.8 L372.8 291.1 L373.5 289.5 L374.3 287.9 L375.1 286.3 L376.0 284.6 L376.9 283.0 L377.9 281.4 L378.9 279.8 L379.9 278.1 L381.0 276.5 L382.1 274.9 L383.2 273.3 L384.4 271.6 L385.7 270.0 L386.9 268.4 L388.2 266.8 L389.6 265.1 L391.0 263.5 L392.4 261.9 L393.9 260.3 L395.4 258.6 L396.9 257.0 L398.5 255.4 L400.1 253.8 L401.8 252.1 L403.5 250.5 L405.2 248.9 L407.0 247.3 L408.8 245.6 L410.6 244.0 L412.5 242.4 L414.4 240.8 L416.4 239.1 L418.4 237.5 L420.4 235.9 L422.5 234.3 L424.6 232.6 L426.7 231.0 L428.9 229.4 L431.1 227.8 L433.4 226.1 L435.7 224.5 L438.0 222.9 L440.4 221.3 L442.7 219.6 L445.2 218.0 L447.6 216.4 L450.1 214.8 L452.7 213.1 L455.2 211.5 L457.8 209.9 L460.5 208.3 L463.1 206.6 L465.8 205.0 L468.6 203.4 L471.3 201.8 L474.1 200.1 L477.0 198.5 L479.8 196.9 L482.7 195.3 L485.7 193.6 L488.6 192.0 L491.6 190.4 L494.6 188.8 L497.7 187.1 L500.8 185.5 L503.9 183.9 L507.0 182.3 L510.2 180.6 L513.4 179.0 L516.7 177.4 L519.9 175.8 L523.2 174.1 L526.5 172.5 L529.9 170.9 L533.3 169.3 L536.7 167.6 L540.1 166.0 L543.6 164.4 L547.1 162.8 L550.6 161.1 L554.1 159.5 L557.7 157.9 L561.3 156.3 L564.9 154.6 L568.6 153.0 L572.3 151.4 L576.0 149.8 L579.7 148.1 L583.4 146.5 L587.2 144.9 L591.0 143.3 L594.8 141.6 L598.7 140.0 L602.5 138.4 L606.4 136.8 L610.3 135.1 L614.3 133.5 L618.2 131.9 L622.2 130.3 L626.2 128.6 L630.2 127.0 L634.3 125.4 L638.3 123.8 L642.4 122.1 L646.5 120.5 L650.6 118.9 L654.8 117.3 L658.9 115.6 L663.1 114.0 L667.3 112.4 L671.5 110.8 L675.8 109.1 L680.0 107.5 L684.3 105.9 L688.6 104.3 L692.9 102.6 L697.2 101.0 L701.5 99.4 L705.9 97.8 L710.2 96.1 L714.6 94.5 L719.0 92.9 L723.4 91.3 L727.8 89.6 L732.2 88.0 L736.7 86.4 L741.1 84.8 L745.6 83.1 L750.1 81.5 L754.6 79.9 L759.1 78.3 L763.6 76.6 L768.1 75.0 L772.7 73.4 L777.2 71.8 L781.8 70.1 L786.3 68.5 L790.9 66.9 L795.5 65.3 L800.1 63.6 L804.7 62.0 L809.3 60.4 L813.9 58.8 L818.5 57.1 L823.1 55.5 L827.8 53.9 L832.4 52.3 L837.0 50.6 L841.7 49.0 L846.3 47.4 L851.0 45.8 L855.7 44.1 L860.3 42.5 L865.0 40.9 L869.7 39.3 L874.3 37.6 L879.0 36.0 L883.7 34.4 L888.4 32.8 L893.0 31.1 L897.7 29.5 L902.4 27.9"/><path d="M902.4 612.9 L897.3 611.3 L892.2 609.6 L887.1 608.0 L882.0 606.4 L876.9 604.8 L871.8 603.1 L866.7 601.5 L861.6 599.9 L856.5 598.3 L851.4 596.6 L846.3 595.0 L841.3 593.4 L836.2 591.8 L831.1 590.1 L826.0 588.5 L821.0 586.9 L815.9 585.3 L810.9 583.6 L805.8 582.0 L800.8 580.4 L795.8 578.8 L790.8 577.1 L785.8 575.5 L780.8 573.9 L775.8 572.3 L770.8 570.6 L765.8 569.0 L760.9 567.4 L755.9 565.8 L751.0 564.1 L746.1 562.5 L741.2 560.9 L736.3 559.3 L731.4 557.6 L726.5 556.0 L721.6 554.4 L716.8 552.8 L711.9 551.1 L707.1 549.5 L702.3 547.9 L697.5 546.3 L692.8 544.6 L688.0 543.0 L683.3 541.4 L678.5 539.8 L673.8 538.1 L669.1 536.5 L664.5 534.9 L659.8 533.3 L655.2 531.6 L650.6 530.0 L646.0 528.4 L641.4 526.8 L636.8 525.1 L632.3 523.5 L627.8 521.9 L623.3 520.3 L618.8 518.6 L614.3 517.0 L609.9 515.4 L605.5 513.8 L601.1 512.1 L596.7 510.5 L592.4 508.9 L588.1 507.3 L583.8 505.6 L579.5 504.0 L575.3 502.4 L571.1 500.8 L566.9 499.1 L562.7 497.5 L558.5 495.9 L554.4 494.3 L550.3 492.6 L546.3 491.0 L542.2 489.4 L538.2 487.8 L534.2 486.1 L530.3 484.5 L526.4 482.9 L522.5 481.3 L518.6 479.6 L514.8 478.0 L511.0 476.4 L507.2 474.8 L503.4 473.1 L499.7 471.5 L496.0 469.9 L492.4 468.3 L488.7 466.6 L485.1 465.0 L481.6 463.4 L478.1 461.8 L474.6 460.1 L471.1 458.5 L467.7 456.9 L464.3 455.3 L460.9 453.6 L457.6 452.0 L454.3 450.4 L451.0 448.8 L447.8 447.1 L444.6 445.5 L441.4 443.9 L438.3 442.3 L435.2 440.6 L432.1 439.0 L429.1 437.4 L426.1 435.8 L423.2 434.1 L420.3 432.5 L417.4 430.9 L414.6 429.3 L411.8 427.6 L409.0 426.0 L406.3 424.4 L403.6 422.8 L401.0 421.1 L398.3 419.5 L395.8 417.9 L393.2 416.3 L390.7 414.6 L388.3 413.0 L385.9 411.4 L383.5 409.8 L381.2 408.1 L378.9 406.5 L376.6 404.9 L374.4 403.3 L372.2 401.6 L370.1 400.0 L368.0 398.4 L365.9 396.8 L363.9 395.1 L361.9 393.5 L360.0 391.9 L358.1 390.3 L356.3 388.6 L354.4 387.0 L352.7 385.4 L351.0 383.8 L349.3 382.1 L347.6 380.5 L346.0 378.9 L344.5 377.3 L343.0 375.6 L341.5 374.0 L340.1 372.4 L338.7 370.8 L337.3 369.1 L336.0 367.5 L334.8 365.9 L333.6 364.3 L332.4 362.6 L331.3 361.0 L330.2 359.4 L329.1 357.8 L328.1 356.1 L327.2 354.5 L326.3 352.9 L325.4 351.3 L324.6 349.6 L323.8 348.0 L323.1 346.4 L322.4 344.8 L321.8 343.1 L321.2 341.5 L320.6 339.9 L320.1 338.3 L319.6 336.6 L319.2 335.0 L318.8 333.4 L318.5 331.8 L318.2 330.1 L318.0 328.5 L317.8 326.9 L317.6 325.3 L317.5 323.6 L317.4 322.0 L317.4 320.4 L317.4 318.8 L317.5 317.1 L317.6 315.5 L317.8 313.9 L318.0 312.3 L318.2 310.6 L318.5 309.0 L318.8 307.4 L319.2 305.8 L319.6 304.1 L320.1 302.5 L320.6 300.9 L321.2 299.3 L321.8 297.6 L322.4 296.0 L323.1 294.4 L323.8 292.8 L324.6 291.1 L325.4 289.5 L326.3 287.9 L327.2 286.3 L328.1 284.6 L329.1 283.0 L330.2 281.4 L331.3 279.8 L332.4 278.1 L333.6 276.5 L334.8 274.9 L336.0 273.3 L337.3 271.6 L338.7 270.0 L340.1 268.4 L341.5 266.8 L343.0 265.1 L344.5 263.5 L346.0 261.9 L347.6 260.3 L349.3 258.6 L351.0 257.0 L352.7 255.4 L354.4 253.8 L356.3 252.1 L358.1 250.5 L360.0 248.9 L361.9 247.3 L363.9 245.6 L365.9 244.0 L368.0 242.4 L370.1 240.8 L372.2 239.1 L374.4 237.5 L376.6 235.9 L378.9 234.3 L381.2 232.6 L383.5 231.0 L385.9 229.4 L388.3 227.8 L390.7 226.1 L393.2 224.5 L395.8 222.9 L398.3 221.3 L401.0 219.6 L403.6 218.0 L406.3 216.4 L409.0 214.8 L411.8 213.1 L414.6 211.5 L417.4 209.9 L420.3 208.3 L423.2 206.6 L426.1 205.0 L429.1 203.4 L432.1 201.8 L435.2 200.1 L438.3 198.5 L441.4 196.9 L444.6 195.3 L447.8 193.6 L451.0 192.0 L454.3 190.4 L457.6 188.8 L460.9 187.1 L464.3 185.5 L467.7 183.9 L471.1 182.3 L474.6 180.6 L478.1 179.0 L481.6 177.4 L485.1 175.8 L488.7 174.1 L492.4 172.5 L496.0 170.9 L499.7 169.3 L503.4 167.6 L507.2 166.0 L511.0 164.4 L514.8 162.8 L518.6 161.1 L522.5 159.5 L526.4 157.9 L530.3 156.3 L534.2 154.6 L538.2 153.0 L542.2 151.4 L546.3 149.8 L550.3 148.1 L554.4 146.5 L558.5 144.9 L562.7 143.3 L566.9 141.6 L571.1 140.0 L575.3 138.4 L579.5 136.8 L583.8 135.1 L588.1 133.5 L592.4 131.9 L596.7 130.3 L601.1 128.6 L605.5 127.0 L609.9 125.4 L614.3 123.8 L618.8 122.1 L623.3 120.5 L627.8 118.9 L632.3 117.3 L636.8 115.6 L641.4 114.0 L646.0 112.4 L650.6 110.8 L655.2 109.1 L659.8 107.5 L664.5 105.9 L669.1 104.3 L673.8 102.6 L678.5 101.0 L683.3 99.4 L688.0 97.8 L692.8 96.1 L697.5 94.5 L702.3 92.9 L707.1 91.3 L711.9 89.6 L716.8 88.0 L721.6 86.4 L726.5 84.8 L731.4 83.1 L736.3 81.5 L741.2 79.9 L746.1 78.3 L751.0 76.6 L755.9 75.0 L760.9 73.4 L765.8 71.8 L770.8 70.1 L775.8 68.5 L780.8 66.9 L785.8 65.3 L790.8 63.6 L795.8 62.0 L800.8 60.4 L805.8 58.8 L810.9 57.1 L815.9 55.5 L821.0 53.9 L826.0 52.3 L831.1 50.6 L836.2 49.0 L841.3 47.4 L846.3 45.8 L851.4 44.1 L856.5 42.5 L861.6 40.9 L866.7 39.3 L871.8 37.6 L876.9 36.0 L882.0 34.4 L887.1 32.8 L892.2 31.1 L897.3 29.5 L902.4 27.9"/><path d="M751.0 564.1 L752.7 564.1 L754.4 564.1 L756.0 564.1 L757.7 564.1 L759.4 564.1 L761.1 564.1 L762.8 564.1 L764.4 564.1 L766.1 564.1 L767.8 564.1 L769.5 564.1 L771.2 564.1 L772.9 564.1 L774.5 564.1 L776.2 564.1 L777.9 564.1 L779.6 564.1 L781.3 564.1 L783.0 564.1 L784.6 564.1 L786.3 564.1 L788.0 564.1 L789.7 564.1 L791.4 564.1 L793.0 564.1 L794.7 564.1 L796.4 564.1 L798.1 564.1 L799.8 564.1 L801.5 564.1 L803.1 564.1 L804.8 564.1 L806.5 564.1 L808.2 564.1 L809.9 564.1 L811.6 564.1 L813.2 564.1 L814.9 564.1 L816.6 564.1 L818.3 564.1 L820.0 564.1 L821.6 564.1 L823.3 564.1 L825.0 564.1 L826.7 564.1 L828.4 564.1 L830.1 564.1 L831.7 564.1 L833.4 564.1 L835.1 564.1 L836.8 564.1 L838.5 564.1 L840.2 564.1 L841.8 564.1 L843.5 564.1 L845.2 564.1 L846.9 564.1 L848.6 564.1 L850.2 564.1 L851.9 564.1 L853.6 564.1 L855.3 564.1 L857.0 564.1 L858.7 564.1 L860.3 564.1 L862.0 564.1 L863.7 564.1 L865.4 564.1 L867.1 564.1 L868.8 564.1 L870.4 564.1 L872.1 564.1 L873.8 564.1 L875.5 564.1 L877.2 564.1 L878.8 564.1 L880.5 564.1 L882.2 564.1 L883.9 564.1 L885.6 564.1 L887.3 564.1 L888.9 564.1 L890.6 564.1 L892.3 564.1 L894.0 564.1 L895.7 564.1 L897.4 564.1 L899.0 564.1 L900.7 564.1 L902.4 564.1 L904.1 564.1 L905.8 564.1 L907.4 564.1 L909.1 564.1 L910.8 564.1 L912.5 564.1 L914.2 564.1 L915.9 564.1 L917.5 564.1 L919.2 564.1 L920.9 564.1 L922.6 564.1 L924.3 564.1 L926.0 564.1 L927.6 564.1 L929.3 564.1 L931.0 564.1 L932.7 564.1 L934.4 564.1 L936.0 564.1 L937.7 564.1 L939.4 564.1 L941.1 564.1 L942.8 564.1 L944.5 564.1 L946.1 564.1 L947.8 564.1 L949.5 564.1 L951.2 564.1 L952.9 564.1 L954.6 564.1 L956.2 564.1 L957.9 564.1 L959.6 564.1 L961.3 564.1 L963.0 564.1 L964.6 564.1 L966.3 564.1 L968.0 564.1 L969.7 564.1 L971.4 564.1 L973.1 564.1 L974.7 564.1 L976.4 564.1 L978.1 564.1 L979.8 564.1 L981.5 564.1 L983.2 564.1 L984.8 564.1 L986.5 564.1 L988.2 564.1 L989.9 564.1 L991.6 564.1 L993.2 564.1 L994.9 564.1 L996.6 564.1 L998.3 564.1 L1000.0 564.1 L1001.7 564.1 L1003.3 564.1 L1005.0 564.1 L1006.7 564.1 L1008.4 564.1 L1010.1 564.1 L1011.8 564.1 L1013.4 564.1 L1015.1 564.1 L1016.8 564.1 L1018.5 564.1 L1020.2 564.1 L1021.8 564.1 L1023.5 564.1 L1025.2 564.1 L1026.9 564.1 L1028.6 564.1 L1030.3 564.1 L1031.9 564.1 L1033.6 564.1 L1035.3 564.1 L1037.0 564.1 L1038.7 564.1 L1040.4 564.1 L1042.0 564.1 L1043.7 564.1 L1045.4 564.1 L1047.1 564.1 L1048.8 564.1 L1050.4 564.1 L1052.1 564.1 L1053.8 564.1"/><path d="M609.9 515.4 L613.1 515.4 L616.4 515.4 L619.6 515.4 L622.9 515.4 L626.1 515.4 L629.4 515.4 L632.6 515.4 L635.9 515.4 L639.1 515.4 L642.4 515.4 L645.6 515.4 L648.9 515.4 L652.1 515.4 L655.4 515.4 L658.6 515.4 L661.9 515.4 L665.1 515.4 L668.4 515.4 L671.6 515.4 L674.9 515.4 L678.1 515.4 L681.4 515.4 L684.6 515.4 L687.9 515.4 L691.1 515.4 L694.4 515.4 L697.6 515.4 L700.9 515.4 L704.1 515.4 L707.4 515.4 L710.6 515.4 L713.9 515.4 L717.1 515.4 L720.4 515.4 L723.6 515.4 L726.9 515.4 L730.1 515.4 L733.4 515.4 L736.6 515.4 L739.9 515.4 L743.1 515.4 L746.4 515.4 L749.6 515.4 L752.9 515.4 L756.1 515.4 L759.4 515.4 L762.6 515.4 L765.9 515.4 L769.1 515.4 L772.4 515.4 L775.6 515.4 L778.9 515.4 L782.1 515.4 L785.4 515.4 L788.6 515.4 L791.9 515.4 L795.1 515.4 L798.4 515.4 L801.6 515.4 L804.9 515.4 L808.1 515.4 L811.4 515.4 L814.6 515.4 L817.9 515.4 L821.1 515.4 L824.4 515.4 L827.6 515.4 L830.9 515.4 L834.1 515.4 L837.4 515.4 L840.6 515.4 L843.9 515.4 L847.1 515.4 L850.4 515.4 L853.6 515.4 L856.9 515.4 L860.1 515.4 L863.4 515.4 L866.6 515.4 L869.9 515.4 L873.1 515.4 L876.4 515.4 L879.6 515.4 L882.9 515.4 L886.1 515.4 L889.4 515.4 L892.6 515.4 L895.9 515.4 L899.1 515.4 L902.4 515.4 L905.6 515.4 L908.9 515.4 L912.1 515.4 L915.4 515.4 L918.6 515.4 L921.9 515.4 L925.1 515.4 L928.4 515.4 L931.6 515.4 L934.9 515.4 L938.1 515.4 L941.4 515.4 L944.6 515.4 L947.9 515.4 L951.1 515.4 L954.4 515.4 L957.6 515.4 L960.9 515.4 L964.1 515.4 L967.4 515.4 L970.6 515.4 L973.9 515.4 L977.1 515.4 L980.4 515.4 L983.6 515.4 L986.9 515.4 L990.1 515.4 L993.4 515.4 L996.6 515.4 L999.9 515.4 L1003.1 515.4 L1006.4 515.4 L1009.6 515.4 L1012.9 515.4 L1016.1 515.4 L1019.4 515.4 L1022.6 515.4 L1025.9 515.4 L1029.2 515.4 L1032.4 515.4 L1035.7 515.4 L1038.9 515.4 L1042.2 515.4 L1045.4 515.4 L1048.7 515.4 L1051.9 515.4 L1055.2 515.4 L1058.4 515.4 L1061.7 515.4 L1064.9 515.4 L1068.2 515.4 L1071.4 515.4 L1074.7 515.4 L1077.9 515.4 L1081.2 515.4 L1084.4 515.4 L1087.7 515.4 L1090.9 515.4 L1094.2 515.4 L1097.4 515.4 L1100.7 515.4 L1103.9 515.4 L1107.2 515.4 L1110.4 515.4 L1113.7 515.4 L1116.9 515.4 L1120.2 515.4 L1123.4 515.4 L1126.7 515.4 L1129.9 515.4 L1133.2 515.4 L1136.4 515.4 L1139.7 515.4 L1142.9 515.4 L1146.2 515.4 L1149.4 515.4 L1152.7 515.4 L1155.9 515.4 L1159.2 515.4 L1162.4 515.4 L1165.7 515.4 L1168.9 515.4 L1172.2 515.4 L1175.4 515.4 L1178.7 515.4 L1181.9 515.4 L1185.2 515.4 L1188.4 515.4 L1191.7 515.4 L1194.9 515.4"/><path d="M488.7 466.6 L493.3 466.6 L497.9 466.6 L502.5 466.6 L507.1 466.6 L511.7 466.6 L516.3 466.6 L520.9 466.6 L525.5 466.6 L530.1 466.6 L534.7 466.6 L539.3 466.6 L543.9 466.6 L548.5 466.6 L553.1 466.6 L557.7 466.6 L562.3 466.6 L566.9 466.6 L571.5 466.6 L576.1 466.6 L580.7 466.6 L585.3 466.6 L589.9 466.6 L594.5 466.6 L599.1 466.6 L603.6 466.6 L608.2 466.6 L612.8 466.6 L617.4 466.6 L622.0 466.6 L626.6 466.6 L631.2 466.6 L635.8 466.6 L640.4 466.6 L645.0 466.6 L649.6 466.6 L654.2 466.6 L658.8 466.6 L663.4 466.6 L668.0 466.6 L672.6 466.6 L677.2 466.6 L681.8 466.6 L686.4 466.6 L691.0 466.6 L695.6 466.6 L700.2 466.6 L704.8 466.6 L709.4 466.6 L714.0 466.6 L718.6 466.6 L723.1 466.6 L727.7 466.6 L732.3 466.6 L736.9 466.6 L741.5 466.6 L746.1 466.6 L750.7 466.6 L755.3 466.6 L759.9 466.6 L764.5 466.6 L769.1 466.6 L773.7 466.6 L778.3 466.6 L782.9 466.6 L787.5 466.6 L792.1 466.6 L796.7 466.6 L801.3 466.6 L805.9 466.6 L810.5 466.6 L815.1 466.6 L819.7 466.6 L824.3 466.6 L828.9 466.6 L833.5 466.6 L838.1 466.6 L842.6 466.6 L847.2 466.6 L851.8 466.6 L856.4 466.6 L861.0 466.6 L865.6 466.6 L870.2 466.6 L874.8 466.6 L879.4 466.6 L884.0 466.6 L888.6 466.6 L893.2 466.6 L897.8 466.6 L902.4 466.6 L907.0 466.6 L911.6 466.6 L916.2 466.6 L920.8 466.6 L925.4 466.6 L930.0 466.6 L934.6 466.6 L939.2 466.6 L943.8 466.6 L948.4 466.6 L953.0 466.6 L957.6 466.6 L962.2 466.6 L966.7 466.6 L971.3 466.6 L975.9 466.6 L980.5 466.6 L985.1 466.6 L989.7 466.6 L994.3 466.6 L998.9 466.6 L1003.5 466.6 L1008.1 466.6 L1012.7 466.6 L1017.3 466.6 L1021.9 466.6 L1026.5 466.6 L1031.1 466.6 L1035.7 466.6 L1040.3 466.6 L1044.9 466.6 L1049.5 466.6 L1054.1 466.6 L1058.7 466.6 L1063.3 466.6 L1067.9 466.6 L1072.5 466.6 L1077.1 466.6 L1081.7 466.6 L1086.2 466.6 L1090.8 466.6 L1095.4 466.6 L1100.0 466.6 L1104.6 466.6 L1109.2 466.6 L1113.8 466.6 L1118.4 466.6 L1123.0 466.6 L1127.6 466.6 L1132.2 466.6 L1136.8 466.6 L1141.4 466.6 L1146.0 466.6 L1150.6 466.6 L1155.2 466.6 L1159.8 466.6 L1164.4 466.6 L1169.0 466.6 L1173.6 466.6 L1178.2 466.6 L1182.8 466.6 L1187.4 466.6 L1192.0 466.6 L1196.6 466.6 L1201.2 466.6 L1205.7 466.6 L1210.3 466.6 L1214.9 466.6 L1219.5 466.6 L1224.1 466.6 L1228.7 466.6 L1233.3 466.6 L1237.9 466.6 L1242.5 466.6 L1247.1 466.6 L1251.7 466.6 L1256.3 466.6 L1260.9 466.6 L1265.5 466.6 L1270.1 466.6 L1274.7 466.6 L1279.3 466.6 L1283.9 466.6 L1288.5 466.6 L1293.1 466.6 L1297.7 466.6 L1302.3 466.6 L1306.9 466.6 L1311.5 466.6 L1316.1 466.6"/><path d="M395.8 417.9 L401.4 417.9 L407.0 417.9 L412.7 417.9 L418.3 417.9 L423.9 417.9 L429.6 417.9 L435.2 417.9 L440.8 417.9 L446.4 417.9 L452.1 417.9 L457.7 417.9 L463.3 417.9 L469.0 417.9 L474.6 417.9 L480.2 417.9 L485.8 417.9 L491.5 417.9 L497.1 417.9 L502.7 417.9 L508.4 417.9 L514.0 417.9 L519.6 417.9 L525.2 417.9 L530.9 417.9 L536.5 417.9 L542.1 417.9 L547.8 417.9 L553.4 417.9 L559.0 417.9 L564.7 417.9 L570.3 417.9 L575.9 417.9 L581.5 417.9 L587.2 417.9 L592.8 417.9 L598.4 417.9 L604.1 417.9 L609.7 417.9 L615.3 417.9 L620.9 417.9 L626.6 417.9 L632.2 417.9 L637.8 417.9 L643.5 417.9 L649.1 417.9 L654.7 417.9 L660.3 417.9 L666.0 417.9 L671.6 417.9 L677.2 417.9 L682.9 417.9 L688.5 417.9 L694.1 417.9 L699.8 417.9 L705.4 417.9 L711.0 417.9 L716.6 417.9 L722.3 417.9 L727.9 417.9 L733.5 417.9 L739.2 417.9 L744.8 417.9 L750.4 417.9 L756.0 417.9 L761.7 417.9 L767.3 417.9 L772.9 417.9 L778.6 417.9 L784.2 417.9 L789.8 417.9 L795.4 417.9 L801.1 417.9 L806.7 417.9 L812.3 417.9 L818.0 417.9 L823.6 417.9 L829.2 417.9 L834.9 417.9 L840.5 417.9 L846.1 417.9 L851.7 417.9 L857.4 417.9 L863.0 417.9 L868.6 417.9 L874.3 417.9 L879.9 417.9 L885.5 417.9 L891.1 417.9 L896.8 417.9 L902.4 417.9 L908.0 417.9 L913.7 417.9 L919.3 417.9 L924.9 417.9 L930.5 417.9 L936.2 417.9 L941.8 417.9 L947.4 417.9 L953.1 417.9 L958.7 417.9 L964.3 417.9 L969.9 417.9 L975.6 417.9 L981.2 417.9 L986.8 417.9 L992.5 417.9 L998.1 417.9 L1003.7 417.9 L1009.4 417.9 L1015.0 417.9 L1020.6 417.9 L1026.2 417.9 L1031.9 417.9 L1037.5 417.9 L1043.1 417.9 L1048.8 417.9 L1054.4 417.9 L1060.0 417.9 L1065.6 417.9 L1071.3 417.9 L1076.9 417.9 L1082.5 417.9 L1088.2 417.9 L1093.8 417.9 L1099.4 417.9 L1105.0 417.9 L1110.7 417.9 L1116.3 417.9 L1121.9 417.9 L1127.6 417.9 L1133.2 417.9 L1138.8 417.9 L1144.5 417.9 L1150.1 417.9 L1155.7 417.9 L1161.3 417.9 L1167.0 417.9 L1172.6 417.9 L1178.2 417.9 L1183.9 417.9 L1189.5 417.9 L1195.1 417.9 L1200.7 417.9 L1206.4 417.9 L1212.0 417.9 L1217.6 417.9 L1223.3 417.9 L1228.9 417.9 L1234.5 417.9 L1240.1 417.9 L1245.8 417.9 L1251.4 417.9 L1257.0 417.9 L1262.7 417.9 L1268.3 417.9 L1273.9 417.9 L1279.6 417.9 L1285.2 417.9 L1290.8 417.9 L1296.4 417.9 L1302.1 417.9 L1307.7 417.9 L1313.3 417.9 L1319.0 417.9 L1324.6 417.9 L1330.2 417.9 L1335.8 417.9 L1341.5 417.9 L1347.1 417.9 L1352.7 417.9 L1358.4 417.9 L1364.0 417.9 L1369.6 417.9 L1375.2 417.9 L1380.9 417.9 L1386.5 417.9 L1392.1 417.9 L1397.8 417.9 L1403.4 417.9 L1409.0 417.9"/><path d="M337.3 369.1 L343.6 369.1 L349.9 369.1 L356.2 369.1 L362.4 369.1 L368.7 369.1 L375.0 369.1 L381.3 369.1 L387.6 369.1 L393.8 369.1 L400.1 369.1 L406.4 369.1 L412.7 369.1 L419.0 369.1 L425.2 369.1 L431.5 369.1 L437.8 369.1 L444.1 369.1 L450.3 369.1 L456.6 369.1 L462.9 369.1 L469.2 369.1 L475.5 369.1 L481.7 369.1 L488.0 369.1 L494.3 369.1 L500.6 369.1 L506.9 369.1 L513.1 369.1 L519.4 369.1 L525.7 369.1 L532.0 369.1 L538.2 369.1 L544.5 369.1 L550.8 369.1 L557.1 369.1 L563.4 369.1 L569.6 369.1 L575.9 369.1 L582.2 369.1 L588.5 369.1 L594.8 369.1 L601.0 369.1 L607.3 369.1 L613.6 369.1 L619.9 369.1 L626.1 369.1 L632.4 369.1 L638.7 369.1 L645.0 369.1 L651.3 369.1 L657.5 369.1 L663.8 369.1 L670.1 369.1 L676.4 369.1 L682.7 369.1 L688.9 369.1 L695.2 369.1 L701.5 369.1 L707.8 369.1 L714.0 369.1 L720.3 369.1 L726.6 369.1 L732.9 369.1 L739.2 369.1 L745.4 369.1 L751.7 369.1 L758.0 369.1 L764.3 369.1 L770.6 369.1 L776.8 369.1 L783.1 369.1 L789.4 369.1 L795.7 369.1 L801.9 369.1 L808.2 369.1 L814.5 369.1 L820.8 369.1 L827.1 369.1 L833.3 369.1 L839.6 369.1 L845.9 369.1 L852.2 369.1 L858.5 369.1 L864.7 369.1 L871.0 369.1 L877.3 369.1 L883.6 369.1 L889.8 369.1 L896.1 369.1 L902.4 369.1 L908.7 369.1 L915.0 369.1 L921.2 369.1 L927.5 369.1 L933.8 369.1 L940.1 369.1 L946.3 369.1 L952.6 369.1 L958.9 369.1 L965.2 369.1 L971.5 369.1 L977.7 369.1 L984.0 369.1 L990.3 369.1 L996.6 369.1 L1002.9 369.1 L1009.1 369.1 L1015.4 369.1 L1021.7 369.1 L1028.0 369.1 L1034.2 369.1 L1040.5 369.1 L1046.8 369.1 L1053.1 369.1 L1059.4 369.1 L1065.6 369.1 L1071.9 369.1 L1078.2 369.1 L1084.5 369.1 L1090.8 369.1 L1097.0 369.1 L1103.3 369.1 L1109.6 369.1 L1115.9 369.1 L1122.1 369.1 L1128.4 369.1 L1134.7 369.1 L1141.0 369.1 L1147.3 369.1 L1153.5 369.1 L1159.8 369.1 L1166.1 369.1 L1172.4 369.1 L1178.7 369.1 L1184.9 369.1 L1191.2 369.1 L1197.5 369.1 L1203.8 369.1 L1210.0 369.1 L1216.3 369.1 L1222.6 369.1 L1228.9 369.1 L1235.2 369.1 L1241.4 369.1 L1247.7 369.1 L1254.0 369.1 L1260.3 369.1 L1266.6 369.1 L1272.8 369.1 L1279.1 369.1 L1285.4 369.1 L1291.7 369.1 L1297.9 369.1 L1304.2 369.1 L1310.5 369.1 L1316.8 369.1 L1323.1 369.1 L1329.3 369.1 L1335.6 369.1 L1341.9 369.1 L1348.2 369.1 L1354.5 369.1 L1360.7 369.1 L1367.0 369.1 L1373.3 369.1 L1379.6 369.1 L1385.8 369.1 L1392.1 369.1 L1398.4 369.1 L1404.7 369.1 L1411.0 369.1 L1417.2 369.1 L1423.5 369.1 L1429.8 369.1 L1436.1 369.1 L1442.4 369.1 L1448.6 369.1 L1454.9 369.1 L1461.2 369.1 L1467.5 369.1"/><path d="M317.4 320.4 L323.9 320.4 L330.4 320.4 L336.9 320.4 L343.4 320.4 L349.9 320.4 L356.4 320.4 L362.9 320.4 L369.4 320.4 L375.9 320.4 L382.4 320.4 L388.9 320.4 L395.4 320.4 L401.9 320.4 L408.4 320.4 L414.9 320.4 L421.4 320.4 L427.9 320.4 L434.4 320.4 L440.9 320.4 L447.4 320.4 L453.9 320.4 L460.4 320.4 L466.9 320.4 L473.4 320.4 L479.9 320.4 L486.4 320.4 L492.9 320.4 L499.4 320.4 L505.9 320.4 L512.4 320.4 L518.9 320.4 L525.4 320.4 L531.9 320.4 L538.4 320.4 L544.9 320.4 L551.4 320.4 L557.9 320.4 L564.4 320.4 L570.9 320.4 L577.4 320.4 L583.9 320.4 L590.4 320.4 L596.9 320.4 L603.4 320.4 L609.9 320.4 L616.4 320.4 L622.9 320.4 L629.4 320.4 L635.9 320.4 L642.4 320.4 L648.9 320.4 L655.4 320.4 L661.9 320.4 L668.4 320.4 L674.9 320.4 L681.4 320.4 L687.9 320.4 L694.4 320.4 L700.9 320.4 L707.4 320.4 L713.9 320.4 L720.4 320.4 L726.9 320.4 L733.4 320.4 L739.9 320.4 L746.4 320.4 L752.9 320.4 L759.4 320.4 L765.9 320.4 L772.4 320.4 L778.9 320.4 L785.4 320.4 L791.9 320.4 L798.4 320.4 L804.9 320.4 L811.4 320.4 L817.9 320.4 L824.4 320.4 L830.9 320.4 L837.4 320.4 L843.9 320.4 L850.4 320.4 L856.9 320.4 L863.4 320.4 L869.9 320.4 L876.4 320.4 L882.9 320.4 L889.4 320.4 L895.9 320.4 L902.4 320.4 L908.9 320.4 L915.4 320.4 L921.9 320.4 L928.4 320.4 L934.9 320.4 L941.4 320.4 L947.9 320.4 L954.4 320.4 L960.9 320.4 L967.4 320.4 L973.9 320.4 L980.4 320.4 L986.9 320.4 L993.4 320.4 L999.9 320.4 L1006.4 320.4 L1012.9 320.4 L1019.4 320.4 L1025.9 320.4 L1032.4 320.4 L1038.9 320.4 L1045.4 320.4 L1051.9 320.4 L1058.4 320.4 L1064.9 320.4 L1071.4 320.4 L1077.9 320.4 L1084.4 320.4 L1090.9 320.4 L1097.4 320.4 L1103.9 320.4 L1110.4 320.4 L1116.9 320.4 L1123.4 320.4 L1129.9 320.4 L1136.4 320.4 L1142.9 320.4 L1149.4 320.4 L1155.9 320.4 L1162.4 320.4 L1168.9 320.4 L1175.4 320.4 L1181.9 320.4 L1188.4 320.4 L1194.9 320.4 L1201.4 320.4 L1207.9 320.4 L1214.4 320.4 L1220.9 320.4 L1227.4 320.4 L1233.9 320.4 L1240.4 320.4 L1246.9 320.4 L1253.4 320.4 L1259.9 320.4 L1266.4 320.4 L1272.9 320.4 L1279.4 320.4 L1285.9 320.4 L1292.4 320.4 L1298.9 320.4 L1305.4 320.4 L1311.9 320.4 L1318.4 320.4 L1324.9 320.4 L1331.4 320.4 L1337.9 320.4 L1344.4 320.4 L1350.9 320.4 L1357.4 320.4 L1363.9 320.4 L1370.4 320.4 L1376.9 320.4 L1383.4 320.4 L1389.9 320.4 L1396.4 320.4 L1402.9 320.4 L1409.4 320.4 L1415.9 320.4 L1422.4 320.4 L1428.9 320.4 L1435.4 320.4 L1441.9 320.4 L1448.4 320.4 L1454.9 320.4 L1461.4 320.4 L1467.9 320.4 L1474.4 320.4 L1480.9 320.4 L1487.4 320.4"/><path d="M337.3 271.6 L343.6 271.6 L349.9 271.6 L356.2 271.6 L362.4 271.6 L368.7 271.6 L375.0 271.6 L381.3 271.6 L387.6 271.6 L393.8 271.6 L400.1 271.6 L406.4 271.6 L412.7 271.6 L419.0 271.6 L425.2 271.6 L431.5 271.6 L437.8 271.6 L444.1 271.6 L450.3 271.6 L456.6 271.6 L462.9 271.6 L469.2 271.6 L475.5 271.6 L481.7 271.6 L488.0 271.6 L494.3 271.6 L500.6 271.6 L506.9 271.6 L513.1 271.6 L519.4 271.6 L525.7 271.6 L532.0 271.6 L538.2 271.6 L544.5 271.6 L550.8 271.6 L557.1 271.6 L563.4 271.6 L569.6 271.6 L575.9 271.6 L582.2 271.6 L588.5 271.6 L594.8 271.6 L601.0 271.6 L607.3 271.6 L613.6 271.6 L619.9 271.6 L626.1 271.6 L632.4 271.6 L638.7 271.6 L645.0 271.6 L651.3 271.6 L657.5 271.6 L663.8 271.6 L670.1 271.6 L676.4 271.6 L682.7 271.6 L688.9 271.6 L695.2 271.6 L701.5 271.6 L707.8 271.6 L714.0 271.6 L720.3 271.6 L726.6 271.6 L732.9 271.6 L739.2 271.6 L745.4 271.6 L751.7 271.6 L758.0 271.6 L764.3 271.6 L770.6 271.6 L776.8 271.6 L783.1 271.6 L789.4 271.6 L795.7 271.6 L801.9 271.6 L808.2 271.6 L814.5 271.6 L820.8 271.6 L827.1 271.6 L833.3 271.6 L839.6 271.6 L845.9 271.6 L852.2 271.6 L858.5 271.6 L864.7 271.6 L871.0 271.6 L877.3 271.6 L883.6 271.6 L889.8 271.6 L896.1 271.6 L902.4 271.6 L908.7 271.6 L915.0 271.6 L921.2 271.6 L927.5 271.6 L933.8 271.6 L940.1 271.6 L946.3 271.6 L952.6 271.6 L958.9 271.6 L965.2 271.6 L971.5 271.6 L977.7 271.6 L984.0 271.6 L990.3 271.6 L996.6 271.6 L1002.9 271.6 L1009.1 271.6 L1015.4 271.6 L1021.7 271.6 L1028.0 271.6 L1034.2 271.6 L1040.5 271.6 L1046.8 271.6 L1053.1 271.6 L1059.4 271.6 L1065.6 271.6 L1071.9 271.6 L1078.2 271.6 L1084.5 271.6 L1090.8 271.6 L1097.0 271.6 L1103.3 271.6 L1109.6 271.6 L1115.9 271.6 L1122.1 271.6 L1128.4 271.6 L1134.7 271.6 L1141.0 271.6 L1147.3 271.6 L1153.5 271.6 L1159.8 271.6 L1166.1 271.6 L1172.4 271.6 L1178.7 271.6 L1184.9 271.6 L1191.2 271.6 L1197.5 271.6 L1203.8 271.6 L1210.0 271.6 L1216.3 271.6 L1222.6 271.6 L1228.9 271.6 L1235.2 271.6 L1241.4 271.6 L1247.7 271.6 L1254.0 271.6 L1260.3 271.6 L1266.6 271.6 L1272.8 271.6 L1279.1 271.6 L1285.4 271.6 L1291.7 271.6 L1297.9 271.6 L1304.2 271.6 L1310.5 271.6 L1316.8 271.6 L1323.1 271.6 L1329.3 271.6 L1335.6 271.6 L1341.9 271.6 L1348.2 271.6 L1354.5 271.6 L1360.7 271.6 L1367.0 271.6 L1373.3 271.6 L1379.6 271.6 L1385.8 271.6 L1392.1 271.6 L1398.4 271.6 L1404.7 271.6 L1411.0 271.6 L1417.2 271.6 L1423.5 271.6 L1429.8 271.6 L1436.1 271.6 L1442.4 271.6 L1448.6 271.6 L1454.9 271.6 L1461.2 271.6 L1467.5 271.6"/><path d="M395.8 222.9 L401.4 222.9 L407.0 222.9 L412.7 222.9 L418.3 222.9 L423.9 222.9 L429.6 222.9 L435.2 222.9 L440.8 222.9 L446.4 222.9 L452.1 222.9 L457.7 222.9 L463.3 222.9 L469.0 222.9 L474.6 222.9 L480.2 222.9 L485.8 222.9 L491.5 222.9 L497.1 222.9 L502.7 222.9 L508.4 222.9 L514.0 222.9 L519.6 222.9 L525.2 222.9 L530.9 222.9 L536.5 222.9 L542.1 222.9 L547.8 222.9 L553.4 222.9 L559.0 222.9 L564.7 222.9 L570.3 222.9 L575.9 222.9 L581.5 222.9 L587.2 222.9 L592.8 222.9 L598.4 222.9 L604.1 222.9 L609.7 222.9 L615.3 222.9 L620.9 222.9 L626.6 222.9 L632.2 222.9 L637.8 222.9 L643.5 222.9 L649.1 222.9 L654.7 222.9 L660.3 222.9 L666.0 222.9 L671.6 222.9 L677.2 222.9 L682.9 222.9 L688.5 222.9 L694.1 222.9 L699.8 222.9 L705.4 222.9 L711.0 222.9 L716.6 222.9 L722.3 222.9 L727.9 222.9 L733.5 222.9 L739.2 222.9 L744.8 222.9 L750.4 222.9 L756.0 222.9 L761.7 222.9 L767.3 222.9 L772.9 222.9 L778.6 222.9 L784.2 222.9 L789.8 222.9 L795.4 222.9 L801.1 222.9 L806.7 222.9 L812.3 222.9 L818.0 222.9 L823.6 222.9 L829.2 222.9 L834.9 222.9 L840.5 222.9 L846.1 222.9 L851.7 222.9 L857.4 222.9 L863.0 222.9 L868.6 222.9 L874.3 222.9 L879.9 222.9 L885.5 222.9 L891.1 222.9 L896.8 222.9 L902.4 222.9 L908.0 222.9 L913.7 222.9 L919.3 222.9 L924.9 222.9 L930.5 222.9 L936.2 222.9 L941.8 222.9 L947.4 222.9 L953.1 222.9 L958.7 222.9 L964.3 222.9 L969.9 222.9 L975.6 222.9 L981.2 222.9 L986.8 222.9 L992.5 222.9 L998.1 222.9 L1003.7 222.9 L1009.4 222.9 L1015.0 222.9 L1020.6 222.9 L1026.2 222.9 L1031.9 222.9 L1037.5 222.9 L1043.1 222.9 L1048.8 222.9 L1054.4 222.9 L1060.0 222.9 L1065.6 222.9 L1071.3 222.9 L1076.9 222.9 L1082.5 222.9 L1088.2 222.9 L1093.8 222.9 L1099.4 222.9 L1105.0 222.9 L1110.7 222.9 L1116.3 222.9 L1121.9 222.9 L1127.6 222.9 L1133.2 222.9 L1138.8 222.9 L1144.5 222.9 L1150.1 222.9 L1155.7 222.9 L1161.3 222.9 L1167.0 222.9 L1172.6 222.9 L1178.2 222.9 L1183.9 222.9 L1189.5 222.9 L1195.1 222.9 L1200.7 222.9 L1206.4 222.9 L1212.0 222.9 L1217.6 222.9 L1223.3 222.9 L1228.9 222.9 L1234.5 222.9 L1240.1 222.9 L1245.8 222.9 L1251.4 222.9 L1257.0 222.9 L1262.7 222.9 L1268.3 222.9 L1273.9 222.9 L1279.6 222.9 L1285.2 222.9 L1290.8 222.9 L1296.4 222.9 L1302.1 222.9 L1307.7 222.9 L1313.3 222.9 L1319.0 222.9 L1324.6 222.9 L1330.2 222.9 L1335.8 222.9 L1341.5 222.9 L1347.1 222.9 L1352.7 222.9 L1358.4 222.9 L1364.0 222.9 L1369.6 222.9 L1375.2 222.9 L1380.9 222.9 L1386.5 222.9 L1392.1 222.9 L1397.8 222.9 L1403.4 222.9 L1409.0 222.9"/><path d="M488.7 174.1 L493.3 174.1 L497.9 174.1 L502.5 174.1 L507.1 174.1 L511.7 174.1 L516.3 174.1 L520.9 174.1 L525.5 174.1 L530.1 174.1 L534.7 174.1 L539.3 174.1 L543.9 174.1 L548.5 174.1 L553.1 174.1 L557.7 174.1 L562.3 174.1 L566.9 174.1 L571.5 174.1 L576.1 174.1 L580.7 174.1 L585.3 174.1 L589.9 174.1 L594.5 174.1 L599.1 174.1 L603.6 174.1 L608.2 174.1 L612.8 174.1 L617.4 174.1 L622.0 174.1 L626.6 174.1 L631.2 174.1 L635.8 174.1 L640.4 174.1 L645.0 174.1 L649.6 174.1 L654.2 174.1 L658.8 174.1 L663.4 174.1 L668.0 174.1 L672.6 174.1 L677.2 174.1 L681.8 174.1 L686.4 174.1 L691.0 174.1 L695.6 174.1 L700.2 174.1 L704.8 174.1 L709.4 174.1 L714.0 174.1 L718.6 174.1 L723.1 174.1 L727.7 174.1 L732.3 174.1 L736.9 174.1 L741.5 174.1 L746.1 174.1 L750.7 174.1 L755.3 174.1 L759.9 174.1 L764.5 174.1 L769.1 174.1 L773.7 174.1 L778.3 174.1 L782.9 174.1 L787.5 174.1 L792.1 174.1 L796.7 174.1 L801.3 174.1 L805.9 174.1 L810.5 174.1 L815.1 174.1 L819.7 174.1 L824.3 174.1 L828.9 174.1 L833.5 174.1 L838.1 174.1 L842.6 174.1 L847.2 174.1 L851.8 174.1 L856.4 174.1 L861.0 174.1 L865.6 174.1 L870.2 174.1 L874.8 174.1 L879.4 174.1 L884.0 174.1 L888.6 174.1 L893.2 174.1 L897.8 174.1 L902.4 174.1 L907.0 174.1 L911.6 174.1 L916.2 174.1 L920.8 174.1 L925.4 174.1 L930.0 174.1 L934.6 174.1 L939.2 174.1 L943.8 174.1 L948.4 174.1 L953.0 174.1 L957.6 174.1 L962.2 174.1 L966.7 174.1 L971.3 174.1 L975.9 174.1 L980.5 174.1 L985.1 174.1 L989.7 174.1 L994.3 174.1 L998.9 174.1 L1003.5 174.1 L1008.1 174.1 L1012.7 174.1 L1017.3 174.1 L1021.9 174.1 L1026.5 174.1 L1031.1 174.1 L1035.7 174.1 L1040.3 174.1 L1044.9 174.1 L1049.5 174.1 L1054.1 174.1 L1058.7 174.1 L1063.3 174.1 L1067.9 174.1 L1072.5 174.1 L1077.1 174.1 L1081.7 174.1 L1086.2 174.1 L1090.8 174.1 L1095.4 174.1 L1100.0 174.1 L1104.6 174.1 L1109.2 174.1 L1113.8 174.1 L1118.4 174.1 L1123.0 174.1 L1127.6 174.1 L1132.2 174.1 L1136.8 174.1 L1141.4 174.1 L1146.0 174.1 L1150.6 174.1 L1155.2 174.1 L1159.8 174.1 L1164.4 174.1 L1169.0 174.1 L1173.6 174.1 L1178.2 174.1 L1182.8 174.1 L1187.4 174.1 L1192.0 174.1 L1196.6 174.1 L1201.2 174.1 L1205.7 174.1 L1210.3 174.1 L1214.9 174.1 L1219.5 174.1 L1224.1 174.1 L1228.7 174.1 L1233.3 174.1 L1237.9 174.1 L1242.5 174.1 L1247.1 174.1 L1251.7 174.1 L1256.3 174.1 L1260.9 174.1 L1265.5 174.1 L1270.1 174.1 L1274.7 174.1 L1279.3 174.1 L1283.9 174.1 L1288.5 174.1 L1293.1 174.1 L1297.7 174.1 L1302.3 174.1 L1306.9 174.1 L1311.5 174.1 L1316.1 174.1"/><path d="M609.9 125.4 L613.1 125.4 L616.4 125.4 L619.6 125.4 L622.9 125.4 L626.1 125.4 L629.4 125.4 L632.6 125.4 L635.9 125.4 L639.1 125.4 L642.4 125.4 L645.6 125.4 L648.9 125.4 L652.1 125.4 L655.4 125.4 L658.6 125.4 L661.9 125.4 L665.1 125.4 L668.4 125.4 L671.6 125.4 L674.9 125.4 L678.1 125.4 L681.4 125.4 L684.6 125.4 L687.9 125.4 L691.1 125.4 L694.4 125.4 L697.6 125.4 L700.9 125.4 L704.1 125.4 L707.4 125.4 L710.6 125.4 L713.9 125.4 L717.1 125.4 L720.4 125.4 L723.6 125.4 L726.9 125.4 L730.1 125.4 L733.4 125.4 L736.6 125.4 L739.9 125.4 L743.1 125.4 L746.4 125.4 L749.6 125.4 L752.9 125.4 L756.1 125.4 L759.4 125.4 L762.6 125.4 L765.9 125.4 L769.1 125.4 L772.4 125.4 L775.6 125.4 L778.9 125.4 L782.1 125.4 L785.4 125.4 L788.6 125.4 L791.9 125.4 L795.1 125.4 L798.4 125.4 L801.6 125.4 L804.9 125.4 L808.1 125.4 L811.4 125.4 L814.6 125.4 L817.9 125.4 L821.1 125.4 L824.4 125.4 L827.6 125.4 L830.9 125.4 L834.1 125.4 L837.4 125.4 L840.6 125.4 L843.9 125.4 L847.1 125.4 L850.4 125.4 L853.6 125.4 L856.9 125.4 L860.1 125.4 L863.4 125.4 L866.6 125.4 L869.9 125.4 L873.1 125.4 L876.4 125.4 L879.6 125.4 L882.9 125.4 L886.1 125.4 L889.4 125.4 L892.6 125.4 L895.9 125.4 L899.1 125.4 L902.4 125.4 L905.6 125.4 L908.9 125.4 L912.1 125.4 L915.4 125.4 L918.6 125.4 L921.9 125.4 L925.1 125.4 L928.4 125.4 L931.6 125.4 L934.9 125.4 L938.1 125.4 L941.4 125.4 L944.6 125.4 L947.9 125.4 L951.1 125.4 L954.4 125.4 L957.6 125.4 L960.9 125.4 L964.1 125.4 L967.4 125.4 L970.6 125.4 L973.9 125.4 L977.1 125.4 L980.4 125.4 L983.6 125.4 L986.9 125.4 L990.1 125.4 L993.4 125.4 L996.6 125.4 L999.9 125.4 L1003.1 125.4 L1006.4 125.4 L1009.6 125.4 L1012.9 125.4 L1016.1 125.4 L1019.4 125.4 L1022.6 125.4 L1025.9 125.4 L1029.2 125.4 L1032.4 125.4 L1035.7 125.4 L1038.9 125.4 L1042.2 125.4 L1045.4 125.4 L1048.7 125.4 L1051.9 125.4 L1055.2 125.4 L1058.4 125.4 L1061.7 125.4 L1064.9 125.4 L1068.2 125.4 L1071.4 125.4 L1074.7 125.4 L1077.9 125.4 L1081.2 125.4 L1084.4 125.4 L1087.7 125.4 L1090.9 125.4 L1094.2 125.4 L1097.4 125.4 L1100.7 125.4 L1103.9 125.4 L1107.2 125.4 L1110.4 125.4 L1113.7 125.4 L1116.9 125.4 L1120.2 125.4 L1123.4 125.4 L1126.7 125.4 L1129.9 125.4 L1133.2 125.4 L1136.4 125.4 L1139.7 125.4 L1142.9 125.4 L1146.2 125.4 L1149.4 125.4 L1152.7 125.4 L1155.9 125.4 L1159.2 125.4 L1162.4 125.4 L1165.7 125.4 L1168.9 125.4 L1172.2 125.4 L1175.4 125.4 L1178.7 125.4 L1181.9 125.4 L1185.2 125.4 L1188.4 125.4 L1191.7 125.4 L1194.9 125.4"/><path d="M751.0 76.6 L752.7 76.6 L754.4 76.6 L756.0 76.6 L757.7 76.6 L759.4 76.6 L761.1 76.6 L762.8 76.6 L764.4 76.6 L766.1 76.6 L767.8 76.6 L769.5 76.6 L771.2 76.6 L772.9 76.6 L774.5 76.6 L776.2 76.6 L777.9 76.6 L779.6 76.6 L781.3 76.6 L783.0 76.6 L784.6 76.6 L786.3 76.6 L788.0 76.6 L789.7 76.6 L791.4 76.6 L793.0 76.6 L794.7 76.6 L796.4 76.6 L798.1 76.6 L799.8 76.6 L801.5 76.6 L803.1 76.6 L804.8 76.6 L806.5 76.6 L808.2 76.6 L809.9 76.6 L811.6 76.6 L813.2 76.6 L814.9 76.6 L816.6 76.6 L818.3 76.6 L820.0 76.6 L821.6 76.6 L823.3 76.6 L825.0 76.6 L826.7 76.6 L828.4 76.6 L830.1 76.6 L831.7 76.6 L833.4 76.6 L835.1 76.6 L836.8 76.6 L838.5 76.6 L840.2 76.6 L841.8 76.6 L843.5 76.6 L845.2 76.6 L846.9 76.6 L848.6 76.6 L850.2 76.6 L851.9 76.6 L853.6 76.6 L855.3 76.6 L857.0 76.6 L858.7 76.6 L860.3 76.6 L862.0 76.6 L863.7 76.6 L865.4 76.6 L867.1 76.6 L868.8 76.6 L870.4 76.6 L872.1 76.6 L873.8 76.6 L875.5 76.6 L877.2 76.6 L878.8 76.6 L880.5 76.6 L882.2 76.6 L883.9 76.6 L885.6 76.6 L887.3 76.6 L888.9 76.6 L890.6 76.6 L892.3 76.6 L894.0 76.6 L895.7 76.6 L897.4 76.6 L899.0 76.6 L900.7 76.6 L902.4 76.6 L904.1 76.6 L905.8 76.6 L907.4 76.6 L909.1 76.6 L910.8 76.6 L912.5 76.6 L914.2 76.6 L915.9 76.6 L917.5 76.6 L919.2 76.6 L920.9 76.6 L922.6 76.6 L924.3 76.6 L926.0 76.6 L927.6 76.6 L929.3 76.6 L931.0 76.6 L932.7 76.6 L934.4 76.6 L936.0 76.6 L937.7 76.6 L939.4 76.6 L941.1 76.6 L942.8 76.6 L944.5 76.6 L946.1 76.6 L947.8 76.6 L949.5 76.6 L951.2 76.6 L952.9 76.6 L954.6 76.6 L956.2 76.6 L957.9 76.6 L959.6 76.6 L961.3 76.6 L963.0 76.6 L964.6 76.6 L966.3 76.6 L968.0 76.6 L969.7 76.6 L971.4 76.6 L973.1 76.6 L974.7 76.6 L976.4 76.6 L978.1 76.6 L979.8 76.6 L981.5 76.6 L983.2 76.6 L984.8 76.6 L986.5 76.6 L988.2 76.6 L989.9 76.6 L991.6 76.6 L993.2 76.6 L994.9 76.6 L996.6 76.6 L998.3 76.6 L1000.0 76.6 L1001.7 76.6 L1003.3 76.6 L1005.0 76.6 L1006.7 76.6 L1008.4 76.6 L1010.1 76.6 L1011.8 76.6 L1013.4 76.6 L1015.1 76.6 L1016.8 76.6 L1018.5 76.6 L1020.2 76.6 L1021.8 76.6 L1023.5 76.6 L1025.2 76.6 L1026.9 76.6 L1028.6 76.6 L1030.3 76.6 L1031.9 76.6 L1033.6 76.6 L1035.3 76.6 L1037.0 76.6 L1038.7 76.6 L1040.4 76.6 L1042.0 76.6 L1043.7 76.6 L1045.4 76.6 L1047.1 76.6 L1048.8 76.6 L1050.4 76.6 L1052.1 76.6 L1053.8 76.6"/></g>
<text x="902.4" y="330.0" fill="#868686" font-size="11.5" text-anchor="middle">+0<tspan font-size="7.5" dx="0.3" dy="-3">°</tspan></text>
<text x="804.9" y="330.0" fill="#868686" font-size="11.5" text-anchor="middle">+30<tspan font-size="7.5" dx="0.3" dy="-3">°</tspan></text>
<text x="707.4" y="330.0" fill="#868686" font-size="11.5" text-anchor="middle">+60<tspan font-size="7.5" dx="0.3" dy="-3">°</tspan></text>
<text x="609.9" y="330.0" fill="#868686" font-size="11.5" text-anchor="middle">+90<tspan font-size="7.5" dx="0.3" dy="-3">°</tspan></text>
<text x="512.4" y="330.0" fill="#868686" font-size="11.5" text-anchor="middle">+120<tspan font-size="7.5" dx="0.3" dy="-3">°</tspan></text>
<text x="414.9" y="330.0" fill="#868686" font-size="11.5" text-anchor="middle">+150<tspan font-size="7.5" dx="0.3" dy="-3">°</tspan></text>
<text x="1389.9" y="330.0" fill="#868686" font-size="11.5" text-anchor="middle">+210<tspan font-size="7.5" dx="0.3" dy="-3">°</tspan></text>
<text x="1292.4" y="330.0" fill="#868686" font-size="11.5" text-anchor="middle">+240<tspan font-size="7.5" dx="0.3" dy="-3">°</tspan></text>
<text x="1194.9" y="330.0" fill="#868686" font-size="11.5" text-anchor="middle">+270<tspan font-size="7.5" dx="0.3" dy="-3">°</tspan></text>
<text x="1097.4" y="330.0" fill="#868686" font-size="11.5" text-anchor="middle">+300<tspan font-size="7.5" dx="0.3" dy="-3">°</tspan></text>
<text x="999.9" y="330.0" fill="#868686" font-size="11.5" text-anchor="middle">+330<tspan font-size="7.5" dx="0.3" dy="-3">°</tspan></text>
<text x="317.4" y="330.0" fill="#868686" font-size="11.5" text-anchor="middle">+180<tspan font-size="7.5" dx="0.3" dy="-3">°</tspan></text>
<text x="1487.4" y="330.0" fill="#868686" font-size="11.5" text-anchor="middle">+180<tspan font-size="7.5" dx="0.3" dy="-3">°</tspan></text>
<text x="902.4" y="25.9" fill="#868686" font-size="11.5" text-anchor="middle">+90<tspan font-size="7.5" dx="0.3" dy="-3">°</tspan></text>
<text x="902.4" y="123.4" fill="#868686" font-size="11.5" text-anchor="middle">+60<tspan font-size="7.5" dx="0.3" dy="-3">°</tspan></text>
<text x="902.4" y="220.9" fill="#868686" font-size="11.5" text-anchor="middle">+30<tspan font-size="7.5" dx="0.3" dy="-3">°</tspan></text>
<text x="902.4" y="428.1" fill="#868686" font-size="11.5" text-anchor="middle">−30<tspan font-size="7.5" dx="0.3" dy="-3">°</tspan></text>
<text x="902.4" y="525.6" fill="#868686" font-size="11.5" text-anchor="middle">−60<tspan font-size="7.5" dx="0.3" dy="-3">°</tspan></text>
<text x="902.4" y="623.1" fill="#868686" font-size="11.5" text-anchor="middle">−90<tspan font-size="7.5" dx="0.3" dy="-3">°</tspan></text>
<path d="M733.0 259.0 L733.0 258.2 L733.0 257.5 L733.0 256.7 L733.0 255.9 L733.0 255.1 L733.0 254.4 L733.0 253.6 L733.1 252.8 L733.1 252.0 L733.1 251.3 L733.1 250.5 L733.1 249.7 L733.2 249.0 L733.2 248.2 L733.2 247.4 L733.3 246.6 L733.3 245.9 L733.4 245.1 L733.4 244.3 L733.5 243.6 L733.5 242.8 L733.6 242.0 L733.6 241.3 L733.7 240.5 L733.8 239.7 L733.8 238.9 L733.9 238.2 L734.0 237.4 L734.1 236.6 L734.1 235.9 L734.2 235.1 L734.3 234.3 L734.4 233.6 L734.5 232.8 L734.6 232.0 L734.7 231.3 L734.8 230.5 L734.9 229.7 L735.0 229.0 L735.1 228.2 L735.2 227.4 L735.3 226.7 L735.4 225.9 L735.5 225.1 L735.6 224.4 L735.8 223.6 L735.9 222.8 L736.0 222.1 L736.2 221.3 L736.3 220.5 L736.4 219.8 L736.6 219.0 L736.7 218.2 L736.8 217.5 L737.0 216.7 L737.1 216.0 L737.3 215.2 L737.5 214.4 L737.6 213.7 L737.8 212.9 L737.9 212.1 L738.1 211.4 L738.3 210.6 L738.4 209.9 L738.6 209.1 L738.8 208.3 L739.0 207.6 L739.1 206.8 L739.3 206.1 L739.5 205.3 L739.7 204.5 L739.9 203.8 L740.1 203.0 L740.3 202.3 L740.5 201.5 L740.7 200.7 L740.9 200.0 L741.1 199.2 L741.3 198.5 L741.5 197.7 L741.7 197.0 L741.9 196.2 L742.2 195.5 L742.4 194.7 L742.6 193.9 L742.8 193.2 L743.0 192.4 L743.3 191.7 L743.5 190.9 L743.7 190.2 L744.0 189.4 L744.2 188.7 L744.5 187.9 L744.7 187.2 L744.9 186.4 L745.2 185.7 L745.4 184.9 L745.7 184.2 L745.9 183.4 L746.2 182.7 L746.5 181.9 L746.7 181.2 L747.0 180.4 L747.2 179.7 L747.5 179.0 L747.8 178.2 L748.1 177.5 L748.3 176.7 L748.6 176.0 L748.9 175.2 L749.2 174.5 L749.4 173.8 L749.7 173.0 L750.0 172.3 L750.3 171.5 L750.6 170.8 L750.9 170.1 L751.2 169.3 L751.5 168.6 L751.8 167.8 L752.1 167.1 L752.4 166.4 L752.7 165.6 L753.0 164.9 L753.3 164.2 L753.6 163.4 L753.9 162.7 L754.2 162.0 L754.5 161.2 L754.8 160.5 L755.1 159.8 L755.4 159.1 L755.8 158.3 L756.1 157.6 L756.4 156.9 L756.7 156.2 L757.0 155.4 L757.4 154.7 L757.7 154.0 L758.0 153.3 L758.3 152.6 L758.7 151.8 L759.0 151.1 L759.3 150.4 L759.7 149.7 L760.0 149.0 L760.3 148.3 L760.7 147.5 L761.0 146.8 L761.3 146.1 L761.7 145.4 L762.0 144.7 L762.4 144.0 L762.7 143.3 L763.0 142.6 L763.4 141.9 L763.7 141.2 L764.1 140.5 L764.4 139.8 L764.8 139.1 L765.1 138.4 L765.5 137.7 L765.8 137.0 L766.1 136.3 L766.5 135.6 L766.8 134.9 L767.2 134.2 L767.5 133.5 L767.9 132.9 L768.2 132.2 L768.6 131.5 L768.9 130.8 L769.3 130.1 L769.6 129.5 L770.0 128.8 L770.3 128.1 L770.6 127.4 L771.0 126.8 L771.3 126.1 L771.7 125.4 L772.0 124.8 L772.4 124.1 L772.7 123.5 L773.0 122.8 L773.4 122.1 L773.7 121.5 L774.1 120.8 L774.4 120.2 L774.7 119.5 L775.1 118.9 L775.4 118.3 L775.7 117.6 L776.0 117.0 L776.4 116.3 L776.7 115.7 L777.0 115.1 L777.3 114.5 L777.6 113.8 L778.0 113.2 L778.3 112.6 L778.6 112.0 L778.9 111.4 L779.2 110.8 L779.5 110.2 L779.8 109.6 L780.1 109.0 L780.3 108.4 L780.6 107.8 L780.9 107.2 L781.2 106.6 L781.5 106.0 L781.7 105.5 L782.0 104.9 L782.2 104.3 L782.5 103.8 L782.7 103.2 L783.0 102.7 L783.2 102.1 L783.4 101.6 L783.7 101.0 L783.9 100.5 L784.1 100.0 L784.3 99.4 L784.5 98.9 L784.7 98.4 L784.9 97.9 L785.0 97.4 L785.2 96.9 L785.3 96.4 L785.5 95.9 L785.6 95.4 L785.8 95.0 L785.9 94.5 L786.0 94.0 L786.1 93.6 L786.2 93.1 L786.3 92.7 L786.3 92.2 L786.4 91.8 L786.4 91.4 L786.5 91.0 L786.5 90.6 L786.5 90.2 L786.5 89.8 L786.5 89.4 L786.4 89.0 L786.4 88.7 L786.3 88.3 L786.2 88.0 L786.1 87.6 L786.0 87.3 L785.9 87.0 L785.7 86.6 L785.6 86.3 L785.4 86.0 L785.2 85.8 L785.0 85.5 L784.7 85.2 L784.5 85.0 L784.2 84.7 L783.9 84.5 L783.6 84.2 L783.3 84.0 L782.9 83.8 L782.5 83.6 L782.1 83.4 L781.7 83.3 L781.2 83.1 L780.8 83.0 L780.3 82.8 L779.7 82.7 L779.2 82.6 L778.6 82.5 L778.0 82.4 L777.4 82.3 L776.7 82.2 L776.1 82.2 L775.4 82.1 L774.6 82.1 L773.9 82.1 L773.1 82.0 L772.3 82.0 L771.4 82.1 L770.6 82.1 L769.7 82.1 L768.8 82.2 L767.8 82.2 L766.8 82.3 L765.8 82.4 L764.8 82.5 L763.7 82.6 L762.6 82.7 L761.5 82.8 L760.4 83.0 L759.2 83.1 L758.0 83.3 L756.8 83.4 L755.5 83.6 L754.2 83.8 L752.9 84.0 L751.6 84.2 L750.2 84.5 L748.8 84.7 L747.4 85.0 L745.9 85.2 L744.5 85.5 L743.0 85.8 L741.4 86.0 L739.9 86.3 L738.3 86.6 L736.7 87.0 L735.1 87.3 L733.4 87.6 L731.8 88.0 L730.1 88.3 L728.4 88.7 L726.6 89.0 L724.9 89.4 M725.8 264.0 L725.8 263.2 L725.7 262.5 L725.7 261.7 L725.7 260.9 L725.6 260.2 L725.6 259.4 L725.6 258.6 L725.6 257.9 L725.6 257.1 L725.5 256.3 L725.5 255.6 L725.5 254.8 L725.5 254.1 L725.5 253.3 L725.5 252.5 L725.5 251.8 L725.5 251.0 L725.6 250.2 L725.6 249.5 L725.6 248.7 L725.6 247.9 L725.6 247.2 L725.7 246.4 L725.7 245.7 L725.7 244.9 L725.8 244.1 L725.8 243.4 L725.8 242.6 L725.9 241.8 L725.9 241.1 L726.0 240.3 L726.0 239.6 L726.1 238.8 L726.1 238.0 L726.2 237.3 L726.3 236.5 L726.3 235.8 L726.4 235.0 L726.5 234.2 L726.5 233.5 L726.6 232.7 L726.7 232.0 L726.8 231.2 L726.9 230.4 L727.0 229.7 L727.0 228.9 L727.1 228.2 L727.2 227.4 L727.3 226.6 L727.4 225.9 L727.5 225.1 L727.6 224.4 L727.8 223.6 L727.9 222.9 L728.0 222.1 L728.1 221.3 L728.2 220.6 L728.4 219.8 L728.5 219.1 L728.6 218.3 L728.7 217.6 L728.9 216.8 L729.0 216.1 L729.2 215.3 L729.3 214.6 L729.4 213.8 L729.6 213.1 L729.7 212.3 L729.9 211.6 L730.1 210.8 L730.2 210.0 L730.4 209.3 L730.5 208.5 L730.7 207.8 L730.9 207.0 L731.0 206.3 L731.2 205.6 L731.4 204.8 L731.6 204.1 L731.8 203.3 L731.9 202.6 L732.1 201.8 L732.3 201.1 L732.5 200.3 L732.7 199.6 L732.9 198.8 L733.1 198.1 L733.3 197.3 L733.5 196.6 L733.7 195.8 L733.9 195.1 L734.1 194.4 L734.3 193.6 L734.6 192.9 L734.8 192.1 L735.0 191.4 L735.2 190.7 L735.4 189.9 L735.7 189.2 L735.9 188.4 L736.1 187.7 L736.4 187.0 L736.6 186.2 L736.8 185.5 L737.1 184.8 L737.3 184.0 L737.6 183.3 L737.8 182.5 L738.1 181.8 L738.3 181.1 L738.6 180.3 L738.8 179.6 L739.1 178.9 L739.3 178.2 L739.6 177.4 L739.9 176.7 L740.1 176.0 L740.4 175.2 L740.7 174.5 L740.9 173.8 L741.2 173.1 L741.5 172.3 L741.8 171.6 L742.0 170.9 L742.3 170.2 L742.6 169.4 L742.9 168.7 L743.2 168.0 L743.4 167.3 L743.7 166.6 L744.0 165.8 L744.3 165.1 L744.6 164.4 L744.9 163.7 L745.2 163.0 L745.5 162.3 L745.8 161.5 L746.1 160.8 L746.4 160.1 L746.7 159.4 L747.0 158.7 L747.3 158.0 L747.6 157.3 L747.9 156.6 L748.2 155.9 L748.5 155.2 L748.8 154.5 L749.2 153.8 L749.5 153.1 L749.8 152.4 L750.1 151.7 L750.4 151.0 L750.7 150.3 L751.0 149.6 L751.4 148.9 L751.7 148.2 L752.0 147.5 L752.3 146.8 L752.6 146.1 L753.0 145.4 L753.3 144.7 L753.6 144.1 L753.9 143.4 L754.3 142.7 L754.6 142.0 L754.9 141.3 L755.2 140.7 L755.6 140.0 L755.9 139.3 L756.2 138.6 L756.5 138.0 L756.9 137.3 L757.2 136.6 L757.5 136.0 L757.8 135.3 L758.2 134.6 L758.5 134.0 L758.8 133.3 L759.1 132.7 L759.4 132.0 L759.8 131.3 L760.1 130.7 L760.4 130.0 L760.7 129.4 L761.0 128.8 L761.4 128.1 L761.7 127.5 L762.0 126.8 L762.3 126.2 L762.6 125.6 L762.9 124.9 L763.2 124.3 L763.5 123.7 L763.8 123.1 L764.1 122.4 L764.4 121.8 L764.7 121.2 L765.0 120.6 L765.3 120.0 L765.6 119.4 L765.9 118.8 L766.2 118.2 L766.5 117.6 L766.8 117.0 L767.0 116.4 L767.3 115.8 L767.6 115.2 L767.9 114.6 L768.1 114.1 L768.4 113.5 L768.6 112.9 L768.9 112.3 L769.1 111.8 L769.4 111.2 L769.6 110.7 L769.9 110.1 L770.1 109.6 L770.3 109.0 L770.5 108.5 L770.7 107.9 L770.9 107.4 L771.1 106.9 L771.3 106.4 L771.5 105.9 L771.7 105.3 L771.9 104.8 L772.1 104.3 L772.2 103.8 L772.4 103.3 L772.5 102.9 L772.7 102.4 L772.8 101.9 L772.9 101.4 L773.0 101.0 L773.1 100.5 L773.2 100.0 L773.3 99.6 L773.4 99.2 L773.5 98.7 L773.5 98.3 L773.6 97.9 L773.6 97.5 L773.6 97.0 L773.6 96.6 L773.6 96.2 L773.6 95.9 L773.6 95.5 L773.6 95.1 L773.5 94.7 L773.4 94.4 L773.4 94.0 L773.3 93.7 L773.2 93.3 L773.0 93.0 L772.9 92.7 L772.8 92.4 L772.6 92.1 L772.4 91.8 L772.2 91.5 L772.0 91.2 L771.8 91.0 L771.5 90.7 L771.2 90.5 L770.9 90.2 L770.6 90.0 L770.3 89.8 L770.0 89.5 L769.6 89.3 L769.2 89.2 L768.8 89.0 L768.4 88.8 L767.9 88.6 L767.5 88.5 L767.0 88.3 L766.5 88.2 L765.9 88.1 L765.4 88.0 L764.8 87.9 L764.2 87.8 L763.6 87.7 L762.9 87.6 L762.3 87.6 L761.6 87.5 L760.8 87.5 L760.1 87.4 L759.3 87.4 L758.5 87.4 L757.7 87.4 L756.9 87.4 L756.0 87.5 L755.1 87.5 L754.2 87.5 L753.2 87.6 L752.2 87.7 L751.2 87.8 L750.2 87.8 L749.2 87.9 L748.1 88.0 L747.0 88.2 L745.9 88.3 L744.7 88.4 L743.5 88.6 L742.3 88.8 L741.1 88.9 L739.9 89.1 L738.6 89.3 L737.3 89.5 L736.0 89.7 L734.6 89.9 L733.2 90.2 L731.8 90.4 L730.4 90.6 L729.0 90.9 L727.5 91.2 L726.0 91.4 L724.5 91.7 L722.9 92.0 L721.4 92.3 L719.8 92.6 L718.2 92.9 L716.5 93.3 L714.9 93.6 L713.2 93.9 L711.5 94.3 L709.8 94.6 L708.1 95.0 L706.3 95.4 L704.6 95.8 L702.8 96.1 L701.0 96.5 L699.1 96.9 L697.3 97.3 L695.4 97.8 L693.5 98.2 L691.6 98.6 L689.7 99.0 M730.8 265.7 L731.2 264.9 L731.7 264.2 L732.2 263.4 L732.6 262.6 L733.1 261.8 L733.6 261.1 L734.1 260.3 L734.6 259.5 L735.0 258.8 L735.5 258.0 L736.0 257.2 L736.5 256.4 L737.0 255.7 L737.5 254.9 L738.0 254.1 L738.5 253.4 L739.0 252.6 L739.5 251.8 L740.0 251.0 L740.6 250.3 L741.1 249.5 L741.6 248.7 L742.1 248.0 L742.6 247.2 L743.2 246.4 L743.7 245.7 L744.2 244.9 L744.8 244.1 L745.3 243.3 L745.9 242.6 L746.4 241.8 L746.9 241.0 L747.5 240.3 L748.1 239.5 L748.6 238.7 L749.2 238.0 L749.7 237.2 L750.3 236.4 L750.8 235.7 L751.4 234.9 L752.0 234.1 L752.6 233.4 L753.1 232.6 L753.7 231.8 L754.3 231.1 L754.9 230.3 L755.5 229.5 L756.0 228.8 L756.6 228.0 L757.2 227.2 L757.8 226.5 L758.4 225.7 L759.0 224.9 L759.6 224.2 L760.2 223.4 L760.8 222.6 L761.4 221.9 L762.0 221.1 L762.7 220.4 L763.3 219.6 L763.9 218.8 L764.5 218.1 L765.1 217.3 L765.8 216.5 L766.4 215.8 L767.0 215.0 L767.6 214.3 L768.3 213.5 L768.9 212.7 L769.5 212.0 L770.2 211.2 L770.8 210.5 L771.5 209.7 L772.1 208.9 L772.8 208.2 L773.4 207.4 L774.1 206.7 L774.7 205.9 L775.4 205.1 L776.0 204.4 L776.7 203.6 L777.3 202.9 L778.0 202.1 L778.7 201.4 L779.3 200.6 L780.0 199.8 L780.7 199.1 L781.3 198.3 L782.0 197.6 L782.7 196.8 L783.4 196.1 L784.0 195.3 L784.7 194.6 L785.4 193.8 L786.1 193.1 L786.8 192.3 L787.5 191.6 L788.2 190.8 L788.8 190.1 L789.5 189.3 L790.2 188.6 L790.9 187.8 L791.6 187.1 L792.3 186.3 L793.0 185.6 L793.7 184.8 L794.4 184.1 L795.1 183.3 L795.8 182.6 L796.5 181.8 L797.3 181.1 L798.0 180.3 L798.7 179.6 L799.4 178.9 L800.1 178.1 L800.8 177.4 L801.5 176.6 L802.3 175.9 L803.0 175.1 L803.7 174.4 L804.4 173.7 L805.1 172.9 L805.9 172.2 L806.6 171.5 L807.3 170.7 L808.1 170.0 L808.8 169.2 L809.5 168.5 L810.2 167.8 L811.0 167.0 L811.7 166.3 L812.4 165.6 L813.2 164.8 L813.9 164.1 L814.7 163.4 L815.4 162.6 L816.1 161.9 L816.9 161.2 L817.6 160.5 L818.4 159.7 L819.1 159.0 L819.8 158.3 L820.6 157.6 L821.3 156.8 L822.1 156.1 L822.8 155.4 L823.6 154.7 L824.3 154.0 L825.1 153.2 L825.8 152.5 L826.6 151.8 L827.3 151.1 L828.1 150.4 L828.8 149.7 L829.6 148.9 L830.3 148.2 L831.1 147.5 L831.8 146.8 L832.6 146.1 L833.4 145.4 L834.1 144.7 L834.9 144.0 L835.6 143.3 L836.4 142.6 L837.1 141.9 L837.9 141.2 L838.7 140.5 L839.4 139.8 L840.2 139.1 L840.9 138.4 L841.7 137.7 L842.4 137.0 L843.2 136.3 L844.0 135.6 L844.7 134.9 L845.5 134.3 L846.2 133.6 L847.0 132.9 L847.8 132.2 L848.5 131.5 L849.3 130.9 L850.0 130.2 L850.8 129.5 L851.6 128.8 L852.3 128.2 L853.1 127.5 L853.8 126.8 L854.6 126.2 L855.3 125.5 L856.1 124.8 L856.9 124.2 L857.6 123.5 L858.4 122.9 L859.1 122.2 L859.9 121.6 L860.6 120.9 L861.4 120.3 L862.1 119.6 L862.9 119.0 L863.6 118.4 L864.4 117.7 L865.2 117.1 L865.9 116.5 L866.7 115.8 L867.4 115.2 L868.2 114.6 L868.9 114.0 L869.6 113.3 L870.4 112.7 L871.1 112.1 L871.9 111.5 L872.6 110.9 L873.4 110.3 L874.1 109.7 L874.9 109.1 L875.6 108.5 L876.3 107.9 L877.1 107.4 L877.8 106.8 L878.6 106.2 L879.3 105.6 L880.0 105.1 L880.8 104.5 L881.5 104.0 L882.2 103.4 L883.0 102.9 L883.7 102.3 L884.4 101.8 L885.2 101.2 L885.9 100.7 L886.6 100.2 L887.3 99.7 L888.1 99.1 L888.8 98.6 L889.5 98.1 L890.2 97.6 L891.0 97.1 L891.7 96.6 L892.4 96.2 L893.1 95.7 L893.8 95.2 L894.6 94.7 L895.3 94.3 L896.0 93.8 L896.7 93.4 L897.4 93.0 L898.1 92.5 L898.9 92.1 L899.6 91.7 L900.3 91.3 L901.0 90.9 L901.7 90.5 L902.4 90.1 L903.1 89.7 L903.9 89.3 L904.6 89.0 L905.3 88.6 L906.0 88.3 L906.7 87.9 L907.4 87.6 L908.2 87.3 L908.9 87.0 L909.6 86.7 L910.3 86.4 L911.0 86.1 L911.8 85.8 L912.5 85.6 L913.2 85.3 L913.9 85.1 L914.7 84.8 L915.4 84.6 L916.1 84.4 L916.9 84.2 L917.6 84.0 L918.3 83.8 L919.1 83.7 L919.8 83.5 L920.6 83.4 L921.3 83.2 L922.1 83.1 M724.3 263.2 L724.8 262.5 L725.4 261.7 L725.9 261.0 L726.5 260.2 L727.1 259.5 L727.6 258.8 L728.2 258.0 L728.8 257.3 L729.4 256.5 L729.9 255.8 L730.5 255.1 L731.1 254.3 L731.7 253.6 L732.3 252.8 L732.9 252.1 L733.5 251.4 L734.1 250.6 L734.7 249.9 L735.3 249.1 L735.9 248.4 L736.5 247.7 L737.1 246.9 L737.7 246.2 L738.3 245.4 L738.9 244.7 L739.6 244.0 L740.2 243.2 L740.8 242.5 L741.4 241.8 L742.1 241.0 L742.7 240.3 L743.3 239.5 L744.0 238.8 L744.6 238.1 L745.2 237.3 L745.9 236.6 L746.5 235.9 L747.2 235.1 L747.8 234.4 L748.5 233.7 L749.1 232.9 L749.8 232.2 L750.5 231.5 L751.1 230.7 L751.8 230.0 L752.5 229.3 L753.1 228.5 L753.8 227.8 L754.5 227.1 L755.1 226.4 L755.8 225.6 L756.5 224.9 L757.2 224.2 L757.9 223.4 L758.5 222.7 L759.2 222.0 L759.9 221.3 L760.6 220.5 L761.3 219.8 L762.0 219.1 L762.7 218.4 L763.4 217.6 L764.1 216.9 L764.8 216.2 L765.5 215.5 L766.2 214.7 L766.9 214.0 L767.6 213.3 L768.3 212.6 L769.1 211.8 L769.8 211.1 L770.5 210.4 L771.2 209.7 L771.9 209.0 L772.6 208.3 L773.4 207.5 L774.1 206.8 L774.8 206.1 L775.6 205.4 L776.3 204.7 L777.0 203.9 L777.7 203.2 L778.5 202.5 L779.2 201.8 L780.0 201.1 L780.7 200.4 L781.4 199.7 L782.2 199.0 L782.9 198.2 L783.7 197.5 L784.4 196.8 L785.2 196.1 L785.9 195.4 L786.7 194.7 L787.4 194.0 L788.2 193.3 L788.9 192.6 L789.7 191.9 L790.4 191.2 L791.2 190.5 L792.0 189.8 L792.7 189.1 L793.5 188.4 L794.2 187.7 L795.0 187.0 L795.8 186.3 L796.5 185.6 L797.3 184.9 L798.1 184.2 L798.9 183.5 L799.6 182.8 L800.4 182.1 L801.2 181.4 L801.9 180.7 L802.7 180.0 L803.5 179.3 L804.3 178.7 L805.0 178.0 L805.8 177.3 L806.6 176.6 L807.4 175.9 L808.2 175.2 L808.9 174.5 L809.7 173.9 L810.5 173.2 L811.3 172.5 L812.1 171.8 L812.9 171.1 L813.6 170.5 L814.4 169.8 L815.2 169.1 L816.0 168.4 L816.8 167.8 L817.6 167.1 L818.4 166.4 L819.2 165.8 L820.0 165.1 L820.7 164.4 L821.5 163.8 L822.3 163.1 L823.1 162.4 L823.9 161.8 L824.7 161.1 L825.5 160.5 L826.3 159.8 L827.1 159.2 L827.9 158.5 L828.7 157.9 L829.5 157.2 L830.2 156.6 L831.0 155.9 L831.8 155.3 L832.6 154.6 L833.4 154.0 L834.2 153.3 L835.0 152.7 L835.8 152.1 L836.6 151.4 L837.4 150.8 L838.2 150.2 L839.0 149.5 L839.8 148.9 L840.6 148.3 L841.4 147.6 L842.2 147.0 L842.9 146.4 L843.7 145.8 L844.5 145.2 L845.3 144.6 L846.1 143.9 L846.9 143.3 L847.7 142.7 L848.5 142.1 L849.3 141.5 L850.1 140.9 L850.9 140.3 L851.7 139.7 L852.4 139.1 L853.2 138.5 L854.0 137.9 L854.8 137.4 L855.6 136.8 L856.4 136.2 L857.2 135.6 L858.0 135.0 L858.7 134.5 L859.5 133.9 L860.3 133.3 L861.1 132.8 L861.9 132.2 L862.7 131.6 L863.4 131.1 L864.2 130.5 L865.0 130.0 L865.8 129.4 L866.6 128.9 L867.3 128.4 L868.1 127.8 L868.9 127.3 L869.7 126.8 L870.4 126.2 L871.2 125.7 L872.0 125.2 L872.8 124.7 L873.5 124.2 L874.3 123.6 L875.1 123.1 L875.8 122.6 L876.6 122.1 L877.4 121.7 L878.1 121.2 L878.9 120.7 L879.7 120.2 L880.4 119.7 L881.2 119.3 L882.0 118.8 L882.7 118.3 L883.5 117.9 L884.2 117.4 L885.0 117.0 L885.8 116.5 L886.5 116.1 L887.3 115.6 L888.0 115.2 L888.8 114.8 L889.5 114.4 L890.3 114.0 L891.1 113.5 L891.8 113.1 L892.6 112.7 L893.3 112.4 L894.1 112.0 L894.8 111.6 L895.6 111.2 L896.3 110.8 L897.1 110.5 L897.8 110.1 L898.6 109.8 L899.3 109.4 L900.1 109.1 L900.8 108.8 L901.6 108.4 L902.3 108.1 L903.1 107.8 L903.8 107.5 L904.5 107.2 L905.3 106.9 L906.0 106.6 L906.8 106.3 L907.5 106.1 L908.3 105.8 L909.0 105.5 L909.8 105.3 L910.5 105.0 L911.3 104.8 M723.5 262.9 L724.1 262.2 L724.6 261.4 L725.1 260.7 L725.7 259.9 L726.2 259.2 L726.8 258.4 L727.4 257.7 L727.9 256.9 L728.5 256.2 L729.1 255.4 L729.6 254.7 L730.2 253.9 L730.8 253.2 L731.3 252.4 L731.9 251.7 L732.5 251.0 L733.1 250.2 L733.7 249.5 L734.3 248.7 L734.9 248.0 L735.5 247.2 L736.1 246.5 L736.7 245.7 L737.3 245.0 L737.9 244.3 L738.5 243.5 L739.1 242.8 L739.7 242.0 L740.3 241.3 L740.9 240.5 L741.6 239.8 L742.2 239.1 L742.8 238.3 L743.4 237.6 L744.1 236.8 L744.7 236.1 L745.3 235.4 L746.0 234.6 L746.6 233.9 L747.2 233.1 L747.9 232.4 L748.5 231.7 L749.2 230.9 L749.8 230.2 L750.5 229.4 L751.1 228.7 L751.8 228.0 L752.5 227.2 L753.1 226.5 L753.8 225.8 L754.5 225.0 L755.1 224.3 L755.8 223.6 L756.5 222.8 L757.1 222.1 L757.8 221.3 L758.5 220.6 L759.2 219.9 L759.9 219.1 L760.6 218.4 L761.2 217.7 L761.9 217.0 L762.6 216.2 L763.3 215.5 L764.0 214.8 L764.7 214.0 L765.4 213.3 L766.1 212.6 L766.8 211.8 L767.5 211.1 L768.2 210.4 L768.9 209.7 L769.6 208.9 L770.4 208.2 L771.1 207.5 L771.8 206.8 L772.5 206.0 L773.2 205.3 L773.9 204.6 L774.7 203.9 L775.4 203.1 L776.1 202.4 L776.8 201.7 L777.6 201.0 L778.3 200.2 L779.0 199.5 L779.8 198.8 L780.5 198.1 L781.2 197.4 L782.0 196.6 L782.7 195.9 L783.5 195.2 L784.2 194.5 L785.0 193.8 L785.7 193.1 L786.5 192.3 L787.2 191.6 L787.9 190.9 L788.7 190.2 L789.5 189.5 L790.2 188.8 L791.0 188.1 L791.7 187.4 L792.5 186.7 L793.2 185.9 L794.0 185.2 L794.8 184.5 L795.5 183.8 L796.3 183.1 L797.0 182.4 L797.8 181.7 L798.6 181.0 L799.4 180.3 L800.1 179.6 L800.9 178.9 L801.7 178.2 L802.4 177.5 L803.2 176.8 L804.0 176.1 L804.8 175.4 L805.5 174.7 L806.3 174.0 L807.1 173.3 L807.9 172.6 L808.6 172.0 L809.4 171.3 L810.2 170.6 L811.0 169.9 L811.8 169.2 L812.5 168.5 L813.3 167.8 L814.1 167.1 L814.9 166.5 L815.7 165.8 L816.5 165.1 L817.3 164.4 L818.0 163.7 L818.8 163.1 L819.6 162.4 L820.4 161.7 L821.2 161.0 L822.0 160.4 L822.8 159.7 L823.6 159.0 L824.4 158.4 L825.1 157.7 L825.9 157.0 L826.7 156.4 L827.5 155.7 L828.3 155.0 L829.1 154.4 L829.9 153.7 L830.7 153.1 L831.5 152.4 L832.3 151.7 L833.1 151.1 L833.9 150.4 L834.7 149.8 L835.5 149.1 L836.2 148.5 L837.0 147.9 L837.8 147.2 L838.6 146.6 L839.4 145.9 L840.2 145.3 L841.0 144.7 L841.8 144.0 L842.6 143.4 L843.4 142.8 L844.2 142.1 L845.0 141.5 L845.8 140.9 L846.5 140.3 L847.3 139.6 L848.1 139.0 L848.9 138.4 L849.7 137.8 L850.5 137.2 L851.3 136.6 L852.1 136.0 L852.9 135.4 L853.7 134.8 L854.4 134.2 L855.2 133.6 L856.0 133.0 L856.8 132.4 L857.6 131.8 L858.4 131.2 L859.2 130.6 L859.9 130.1 L860.7 129.5 L861.5 128.9 L862.3 128.3 L863.1 127.8 L863.8 127.2 L864.6 126.6 L865.4 126.1 L866.2 125.5 L867.0 125.0 L867.7 124.4 L868.5 123.9 L869.3 123.3 L870.1 122.8 L870.8 122.3 L871.6 121.7 L872.4 121.2 L873.1 120.7 L873.9 120.2 L874.7 119.6 L875.4 119.1 L876.2 118.6 L877.0 118.1 L877.7 117.6 L878.5 117.1 L879.3 116.6 L880.0 116.1 L880.8 115.6 L881.6 115.2 L882.3 114.7 L883.1 114.2 L883.8 113.8 L884.6 113.3 L885.3 112.8 L886.1 112.4 L886.9 111.9 L887.6 111.5 L888.4 111.1 L889.1 110.6 L889.9 110.2 L890.6 109.8 L891.4 109.4 L892.1 109.0 L892.9 108.6 L893.6 108.2 L894.4 107.8 L895.1 107.4 L895.9 107.0 L896.6 106.6 L897.4 106.3 L898.1 105.9 L898.8 105.6 L899.6 105.2 L900.3 104.9 L901.1 104.5 L901.8 104.2 L902.6 103.9 L903.3 103.6 L904.1 103.3 L904.8 103.0 L905.6 102.7 L906.3 102.4 L907.0 102.1 L907.8 101.8 L908.5 101.6 L909.3 101.3 L910.0 101.1 L910.8 100.8 L911.5 100.6 L912.3 100.4 L913.0 100.1 L913.8 99.9 L914.5 99.7 L915.3 99.5 L916.0 99.4 L916.8 99.2 L917.6 99.0 L918.3 98.9 L919.1 98.7 L919.9 98.6 L920.6 98.4 L921.4 98.3 L922.2 98.2 L922.9 98.1 L923.7 98.0 L924.5 97.9 L925.3 97.8 L926.1 97.7 L926.8 97.7 L927.6 97.6 L928.4 97.6 L929.2 97.5 L930.0 97.5 L930.8 97.5 L931.6 97.5 L932.4 97.5 L933.3 97.5 L934.1 97.5 L934.9 97.5 L935.7 97.6 L936.5 97.6 L937.4 97.7 L938.2 97.7 L939.1 97.8 L939.9 97.9 L940.8 98.0 L941.6 98.1 L942.5 98.2 L943.3 98.3 L944.2 98.4 L945.1 98.5 L946.0 98.7 L946.8 98.8 L947.7 99.0 L948.6 99.2 L949.5 99.3 L950.4 99.5 L951.3 99.7 L952.3 99.9 L953.2 100.1 L954.1 100.3 L955.0 100.5 L956.0 100.8 L956.9 101.0 L957.9 101.3 L958.8 101.5 L959.8 101.8 L960.7 102.1 L961.7 102.3 L962.7 102.6 L963.7 102.9 L964.7 103.2 L965.6 103.5 L966.6 103.8 L967.6 104.1 L968.6 104.5 L969.7 104.8 L970.7 105.1 L971.7 105.5 L972.7 105.8 L973.8 106.2 L974.8 106.6 L975.8 106.9 L976.9 107.3 L977.9 107.7 L979.0 108.1 L980.1 108.5 L981.1 108.9 L982.2 109.3 M721.9 259.8 L722.6 259.2 L723.4 258.6 L724.1 257.9 L724.8 257.3 L725.5 256.7 L726.2 256.0 L727.0 255.4 L727.7 254.8 L728.4 254.1 L729.1 253.5 L729.9 252.9 L730.6 252.3 L731.4 251.6 L732.1 251.0 L732.8 250.4 L733.6 249.8 L734.3 249.1 L735.1 248.5 L735.8 247.9 L736.6 247.3 L737.3 246.6 L738.1 246.0 L738.8 245.4 L739.6 244.8 L740.3 244.1 L741.1 243.5 L741.8 242.9 L742.6 242.3 L743.4 241.7 L744.1 241.1 L744.9 240.4 L745.6 239.8 L746.4 239.2 L747.2 238.6 L748.0 238.0 L748.7 237.4 L749.5 236.7 L750.3 236.1 L751.1 235.5 L751.8 234.9 L752.6 234.3 L753.4 233.7 L754.2 233.1 L755.0 232.5 L755.7 231.9 L756.5 231.3 L757.3 230.7 L758.1 230.1 L758.9 229.5 L759.7 228.9 L760.5 228.3 L761.3 227.7 L762.1 227.1 L762.8 226.5 L763.6 225.9 L764.4 225.3 L765.2 224.7 L766.0 224.1 L766.8 223.5 L767.6 222.9 L768.4 222.3 L769.2 221.7 L770.0 221.1 L770.8 220.5 L771.7 219.9 L772.5 219.3 L773.3 218.8 L774.1 218.2 L774.9 217.6 L775.7 217.0 L776.5 216.4 L777.3 215.8 L778.1 215.3 L778.9 214.7 L779.8 214.1 L780.6 213.5 L781.4 212.9 L782.2 212.4 L783.0 211.8 L783.8 211.2 L784.6 210.7 L785.5 210.1 L786.3 209.5 L787.1 208.9 L787.9 208.4 L788.7 207.8 L789.6 207.3 L790.4 206.7 L791.2 206.1 L792.0 205.6 L792.8 205.0 L793.7 204.5 L794.5 203.9 L795.3 203.3 L796.1 202.8 L797.0 202.2 L797.8 201.7 L798.6 201.1 L799.4 200.6 L800.3 200.0 L801.1 199.5 L801.9 199.0 L802.7 198.4 L803.6 197.9 L804.4 197.3 L805.2 196.8 L806.1 196.3 L806.9 195.7 L807.7 195.2 L808.5 194.7 L809.4 194.1 L810.2 193.6 L811.0 193.1 L811.8 192.6 L812.7 192.0 L813.5 191.5 L814.3 191.0 L815.2 190.5 L816.0 190.0 L816.8 189.4 L817.6 188.9 L818.5 188.4 L819.3 187.9 L820.1 187.4 L821.0 186.9 L821.8 186.4 L822.6 185.9 L823.4 185.4 L824.3 184.9 L825.1 184.4 L825.9 183.9 L826.7 183.4 L827.6 182.9 L828.4 182.5 L829.2 182.0 L830.0 181.5 L830.9 181.0 L831.7 180.5 L832.5 180.0 L833.3 179.6 L834.2 179.1 L835.0 178.6 L835.8 178.2 L836.6 177.7 L837.5 177.2 L838.3 176.8 L839.1 176.3 L839.9 175.9 L840.8 175.4 L841.6 175.0 L842.4 174.5 L843.2 174.1 L844.0 173.6 L844.9 173.2 L845.7 172.7 L846.5 172.3 L847.3 171.9 L848.1 171.4 L848.9 171.0 L849.8 170.6 L850.6 170.2 L851.4 169.7 L852.2 169.3 L853.0 168.9 L853.8 168.5 L854.6 168.1 L855.5 167.7 L856.3 167.3 L857.1 166.9 L857.9 166.5 L858.7 166.1 L859.5 165.7 L860.3 165.3 L861.1 164.9 L861.9 164.5 L862.7 164.1 L863.5 163.8 L864.3 163.4 L865.2 163.0 L866.0 162.7 L866.8 162.3 L867.6 161.9 L868.4 161.6 L869.2 161.2 L870.0 160.9 L870.8 160.5 L871.6 160.2 L872.4 159.8 L873.2 159.5 L874.0 159.2 L874.8 158.8 L875.6 158.5 L876.4 158.2 L877.2 157.9 L878.0 157.5 L878.8 157.2 L879.6 156.9 L880.4 156.6 L881.2 156.3 L881.9 156.0 L882.7 155.7 L883.5 155.4 L884.3 155.1 L885.1 154.8 L885.9 154.6 L886.7 154.3 L887.5 154.0 L888.3 153.7 L889.1 153.5 L889.9 153.2 L890.7 153.0 L891.4 152.7 L892.2 152.5 L893.0 152.2 L893.8 152.0 L894.6 151.7 L895.4 151.5 L896.2 151.3 L897.0 151.1 L897.8 150.8 L898.5 150.6 L899.3 150.4 L900.1 150.2 L900.9 150.0 L901.7 149.8 M725.7 263.9 L726.4 263.2 L727.1 262.6 L727.8 262.0 L728.5 261.3 L729.2 260.7 L729.9 260.1 L730.6 259.4 L731.3 258.8 L732.0 258.2 L732.7 257.5 L733.4 256.9 L734.1 256.3 L734.8 255.6 L735.5 255.0 L736.3 254.4 L737.0 253.7 L737.7 253.1 L738.4 252.5 L739.2 251.9 L739.9 251.2 L740.6 250.6 L741.3 250.0 L742.1 249.4 L742.8 248.7 L743.5 248.1 L744.3 247.5 L745.0 246.9 L745.8 246.2 L746.5 245.6 L747.2 245.0 L748.0 244.4 L748.7 243.8 L749.5 243.1 L750.2 242.5 L751.0 241.9 L751.7 241.3 L752.5 240.7 L753.2 240.0 L754.0 239.4 L754.8 238.8 L755.5 238.2 L756.3 237.6 L757.0 237.0 L757.8 236.4 L758.6 235.8 L759.3 235.1 L760.1 234.5 L760.9 233.9 L761.6 233.3 L762.4 232.7 L763.2 232.1 L763.9 231.5 L764.7 230.9 L765.5 230.3 L766.3 229.7 L767.0 229.1 L767.8 228.5 L768.6 227.9 L769.4 227.3 L770.2 226.7 L770.9 226.1 L771.7 225.5 L772.5 224.9 L773.3 224.3 L774.1 223.7 L774.9 223.1 L775.7 222.5 L776.4 221.9 L777.2 221.3 L778.0 220.7 L778.8 220.2 L779.6 219.6 L780.4 219.0 L781.2 218.4 L782.0 217.8 L782.8 217.2 L783.6 216.7 L784.4 216.1 L785.2 215.5 L786.0 214.9 L786.8 214.3 L787.6 213.8 L788.4 213.2 L789.2 212.6 L790.0 212.0 L790.8 211.5 L791.6 210.9 L792.4 210.3 L793.2 209.8 L794.0 209.2 L794.8 208.6 L795.6 208.1 L796.4 207.5 L797.2 206.9 L798.0 206.4 L798.8 205.8 L799.6 205.2 L800.5 204.7 L801.3 204.1 L802.1 203.6 L802.9 203.0 L803.7 202.5 L804.5 201.9 L805.3 201.4 L806.1 200.8 L806.9 200.3 L807.7 199.7 L808.6 199.2 L809.4 198.7 L810.2 198.1 L811.0 197.6 L811.8 197.0 L812.6 196.5 L813.4 196.0 L814.2 195.4 L815.0 194.9 L815.9 194.4 L816.7 193.8 L817.5 193.3 L818.3 192.8 L819.1 192.3 L819.9 191.8 L820.7 191.2 L821.6 190.7 L822.4 190.2 L823.2 189.7 L824.0 189.2 L824.8 188.7 L825.6 188.2 L826.4 187.6 L827.2 187.1 L828.1 186.6 L828.9 186.1 L829.7 185.6 L830.5 185.1 L831.3 184.7 L832.1 184.2 L832.9 183.7 L833.7 183.2 L834.5 182.7 L835.4 182.2 L836.2 181.7 L837.0 181.2 L837.8 180.8 L838.6 180.3 L839.4 179.8 L840.2 179.3 L841.0 178.9 L841.8 178.4 L842.6 177.9 L843.5 177.5 L844.3 177.0 L845.1 176.6 L845.9 176.1 L846.7 175.6 L847.5 175.2 L848.3 174.7 L849.1 174.3 L849.9 173.9 L850.7 173.4 L851.5 173.0 L852.3 172.5 L853.1 172.1 L853.9 171.7 L854.7 171.2 L855.5 170.8 L856.3 170.4 L857.1 170.0 L857.9 169.6 L858.7 169.1 L859.5 168.7 L860.3 168.3 L861.1 167.9 L861.9 167.5 L862.7 167.1 L863.5 166.7 L864.3 166.3 L865.1 165.9 L865.9 165.5 L866.7 165.1 L867.5 164.8 L868.3 164.4 L869.1 164.0 L869.9 163.6 L870.7 163.3 L871.5 162.9 L872.3 162.5 L873.1 162.2 L873.8 161.8 L874.6 161.4 L875.4 161.1 L876.2 160.7 L877.0 160.4 L877.8 160.1 L878.6 159.7 L879.4 159.4 L880.2 159.1 L880.9 158.7 L881.7 158.4 L882.5 158.1 L883.3 157.8 L884.1 157.4 L884.9 157.1 L885.7 156.8 L886.4 156.5 L887.2 156.2 L888.0 155.9 L888.8 155.6 L889.6 155.4 L890.4 155.1 L891.2 154.8 L891.9 154.5 L892.7 154.2 L893.5 154.0 L894.3 153.7 L895.1 153.4 L895.8 153.2 L896.6 152.9 L897.4 152.7 L898.2 152.4 L899.0 152.2 L899.7 152.0 L900.5 151.7 L901.3 151.5 L902.1 151.3 L902.9 151.1 L903.6 150.8 L904.4 150.6 L905.2 150.4 L906.0 150.2 L906.8 150.0 L907.6 149.8 L908.3 149.6 L909.1 149.4 L909.9 149.3 L910.7 149.1 L911.5 148.9 L912.2 148.7 L913.0 148.6 L913.8 148.4 L914.6 148.3 L915.4 148.1 L916.2 148.0 L916.9 147.8 L917.7 147.7 L918.5 147.6 L919.3 147.4 L920.1 147.3 L920.9 147.2 L921.7 147.1 L922.4 147.0 L923.2 146.9 L924.0 146.8 L924.8 146.7 L925.6 146.6 L926.4 146.5 L927.2 146.4 L928.0 146.3 L928.8 146.3 L929.6 146.2 L930.4 146.1 L931.2 146.1 L932.0 146.0 L932.8 146.0 L933.6 145.9 L934.4 145.9 L935.2 145.9 L936.0 145.8 L936.8 145.8 L937.6 145.8 L938.4 145.8 L939.2 145.8 L940.0 145.8 L940.8 145.8 L941.6 145.8 L942.5 145.8 L943.3 145.8 L944.1 145.8 L944.9 145.8 L945.7 145.9 L946.5 145.9 L947.4 145.9 L948.2 146.0 L949.0 146.0 L949.8 146.1 L950.7 146.1 L951.5 146.2 L952.3 146.3 L953.2 146.3 L954.0 146.4 L954.8 146.5 L955.7 146.6 L956.5 146.7 L957.4 146.8 L958.2 146.9 L959.1 147.0 L959.9 147.1 L960.8 147.2 L961.6 147.3 L962.5 147.5 L963.3 147.6 L964.2 147.7 L965.1 147.9 L965.9 148.0 L966.8 148.1 L967.6 148.3 L968.5 148.5 L969.4 148.6 L970.3 148.8 L971.1 148.9 L972.0 149.1 L972.9 149.3 L973.8 149.5 L974.7 149.7 L975.5 149.9 L976.4 150.1 L977.3 150.3 L978.2 150.5 L979.1 150.7 L980.0 150.9 L980.9 151.1 M725.8 264.0 L726.5 263.4 L727.2 262.8 L727.9 262.2 L728.7 261.5 L729.4 260.9 L730.1 260.3 L730.8 259.7 L731.5 259.1 L732.3 258.5 L733.0 257.9 L733.7 257.3 L734.5 256.7 L735.2 256.1 L735.9 255.5 L736.7 254.8 L737.4 254.2 L738.1 253.6 L738.9 253.0 L739.6 252.4 L740.4 251.8 L741.1 251.2 L741.9 250.6 L742.6 250.0 L743.3 249.4 L744.1 248.8 L744.9 248.2 L745.6 247.6 L746.4 247.0 L747.1 246.4 L747.9 245.8 L748.6 245.2 L749.4 244.6 L750.2 244.0 L750.9 243.4 L751.7 242.9 L752.4 242.3 L753.2 241.7 L754.0 241.1 L754.7 240.5 L755.5 239.9 L756.3 239.3 L757.1 238.7 L757.8 238.1 L758.6 237.5 L759.4 237.0 L760.2 236.4 L760.9 235.8 L761.7 235.2 L762.5 234.6 L763.3 234.0 L764.1 233.5 L764.9 232.9 L765.6 232.3 L766.4 231.7 L767.2 231.1 L768.0 230.6 L768.8 230.0 L769.6 229.4 L770.4 228.8 L771.2 228.3 L771.9 227.7 L772.7 227.1 L773.5 226.6 L774.3 226.0 L775.1 225.4 L775.9 224.9 L776.7 224.3 L777.5 223.7 L778.3 223.2 L779.1 222.6 L779.9 222.0 L780.7 221.5 L781.5 220.9 L782.3 220.4 L783.1 219.8 L783.9 219.2 L784.7 218.7 L785.5 218.1 L786.3 217.6 L787.1 217.0 L787.9 216.5 L788.8 215.9 L789.6 215.4 L790.4 214.8 L791.2 214.3 L792.0 213.7 L792.8 213.2 L793.6 212.7 L794.4 212.1 L795.2 211.6 L796.0 211.0 L796.8 210.5 L797.7 210.0 L798.5 209.4 L799.3 208.9 L800.1 208.4 L800.9 207.8 L801.7 207.3 L802.5 206.8 L803.3 206.3 L804.2 205.7 L805.0 205.2 L805.8 204.7 L806.6 204.2 L807.4 203.7 L808.2 203.1 L809.1 202.6 L809.9 202.1 L810.7 201.6 L811.5 201.1 L812.3 200.6 L813.1 200.1 L813.9 199.6 L814.8 199.1 L815.6 198.6 L816.4 198.1 L817.2 197.6 L818.0 197.1 L818.8 196.6 L819.7 196.1 L820.5 195.6 L821.3 195.1 L822.1 194.6 L822.9 194.1 L823.7 193.6 L824.6 193.1 L825.4 192.7 L826.2 192.2 L827.0 191.7 L827.8 191.2 L828.6 190.8 L829.4 190.3 L830.3 189.8 L831.1 189.4 L831.9 188.9 L832.7 188.4 L833.5 188.0 L834.3 187.5 L835.1 187.0 L836.0 186.6 L836.8 186.1 L837.6 185.7 L838.4 185.2 L839.2 184.8 L840.0 184.3 L840.8 183.9 L841.6 183.5 L842.4 183.0 L843.3 182.6 L844.1 182.2 L844.9 181.7 L845.7 181.3 L846.5 180.9 L847.3 180.4 L848.1 180.0 L848.9 179.6 L849.7 179.2 L850.5 178.8 L851.3 178.4 L852.1 177.9 L853.0 177.5 L853.8 177.1 L854.6 176.7 L855.4 176.3 L856.2 175.9 L857.0 175.5 L857.8 175.2 L858.6 174.8 L859.4 174.4 L860.2 174.0 L861.0 173.6 L861.8 173.2 L862.6 172.9 L863.4 172.5 L864.2 172.1 L865.0 171.8 L865.8 171.4 L866.6 171.0 L867.4 170.7 L868.2 170.3 L869.0 170.0 L869.8 169.6 L870.6 169.3 L871.4 168.9 L872.2 168.6 L873.0 168.3 L873.7 167.9 L874.5 167.6 L875.3 167.3 L876.1 166.9 L876.9 166.6 L877.7 166.3 L878.5 166.0 L879.3 165.7 L880.1 165.4 L880.9 165.1 L881.7 164.8 L882.5 164.5 L883.2 164.2 L884.0 163.9 L884.8 163.6 L885.6 163.3 L886.4 163.0 L887.2 162.8 L888.0 162.5 L888.8 162.2 L889.6 161.9 L890.3 161.7 L891.1 161.4 L891.9 161.2 L892.7 160.9 L893.5 160.7 L894.3 160.4 L895.1 160.2 L895.8 160.0 L896.6 159.7 L897.4 159.5 L898.2 159.3 L899.0 159.0 L899.8 158.8 L900.6 158.6 L901.3 158.4 L902.1 158.2 L902.9 158.0 L903.7 157.8 L904.5 157.6 L905.3 157.4 L906.0 157.2 L906.8 157.0 L907.6 156.9 L908.4 156.7 L909.2 156.5 L910.0 156.4 L910.8 156.2 L911.5 156.0 L912.3 155.9 L913.1 155.7 L913.9 155.6 L914.7 155.4 L915.5 155.3 L916.3 155.2 L917.1 155.0 L917.8 154.9 L918.6 154.8 L919.4 154.7 L920.2 154.6 L921.0 154.5 L921.8 154.4 L922.6 154.3 L923.4 154.2 L924.2 154.1 L925.0 154.0 L925.8 153.9 L926.6 153.8 L927.3 153.8 L928.1 153.7 L928.9 153.6 L929.7 153.6 L930.5 153.5 L931.3 153.5 L932.1 153.4 L932.9 153.4 L933.7 153.3 L934.5 153.3 L935.3 153.3 L936.1 153.3 L937.0 153.2 L937.8 153.2 L938.6 153.2 L939.4 153.2 L940.2 153.2 L941.0 153.2 L941.8 153.2 L942.6 153.2 L943.4 153.2 L944.3 153.3 L945.1 153.3 L945.9 153.3 L946.7 153.3 L947.5 153.4 L948.4 153.4 L949.2 153.5 L950.0 153.5 L950.8 153.6 L951.7 153.6 L952.5 153.7 L953.3 153.8 L954.1 153.8 L955.0 153.9 L955.8 154.0 L956.7 154.1 L957.5 154.2 L958.3 154.3 L959.2 154.4 L960.0 154.5 L960.9 154.6 L961.7 154.7 L962.6 154.8 L963.4 154.9 L964.3 155.0 L965.1 155.2 M727.0 264.9 L727.7 264.2 L728.3 263.5 L728.9 262.8 L729.5 262.1 L730.2 261.4 L730.8 260.7 L731.4 260.0 L732.0 259.3 L732.7 258.6 L733.3 257.9 L734.0 257.2 L734.6 256.5 L735.2 255.8 L735.9 255.1 L736.5 254.4 L737.2 253.7 L737.8 253.0 L738.5 252.4 L739.2 251.7 L739.8 251.0 L740.5 250.3 L741.1 249.6 L741.8 248.9 L742.5 248.2 L743.2 247.5 L743.8 246.8 L744.5 246.1 L745.2 245.4 L745.9 244.7 L746.5 244.1 L747.2 243.4 L747.9 242.7 L748.6 242.0 L749.3 241.3 L750.0 240.6 L750.7 239.9 L751.3 239.3 L752.0 238.6 L752.7 237.9 L753.4 237.2 L754.1 236.5 L754.8 235.8 L755.6 235.1 L756.3 234.5 L757.0 233.8 L757.7 233.1 L758.4 232.4 L759.1 231.7 L759.8 231.1 L760.5 230.4 L761.3 229.7 L762.0 229.0 L762.7 228.3 L763.4 227.7 L764.1 227.0 L764.9 226.3 L765.6 225.6 L766.3 225.0 L767.1 224.3 L767.8 223.6 L768.5 223.0 L769.3 222.3 L770.0 221.6 L770.7 220.9 L771.5 220.3 L772.2 219.6 L773.0 218.9 L773.7 218.3 L774.4 217.6 L775.2 216.9 L775.9 216.3 L776.7 215.6 L777.4 214.9 L778.2 214.3 L778.9 213.6 L779.7 212.9 L780.5 212.3 L781.2 211.6 L782.0 211.0 L782.7 210.3 L783.5 209.6 L784.3 209.0 L785.0 208.3 L785.8 207.7 L786.5 207.0 L787.3 206.4 L788.1 205.7 L788.8 205.1 L789.6 204.4 L790.4 203.8 L791.2 203.1 L791.9 202.5 L792.7 201.8 L793.5 201.2 L794.2 200.5 L795.0 199.9 L795.8 199.2 L796.6 198.6 L797.4 198.0 L798.1 197.3 L798.9 196.7 L799.7 196.0 L800.5 195.4 L801.3 194.8 L802.0 194.1 L802.8 193.5 L803.6 192.9 L804.4 192.2 L805.2 191.6 L806.0 191.0 L806.7 190.3 L807.5 189.7 L808.3 189.1 L809.1 188.5 L809.9 187.8 L810.7 187.2 L811.5 186.6 L812.3 186.0 L813.1 185.4 L813.8 184.8 L814.6 184.1 L815.4 183.5 L816.2 182.9 L817.0 182.3 L817.8 181.7 L818.6 181.1 L819.4 180.5 L820.2 179.9 L821.0 179.3 L821.8 178.7 L822.6 178.1 L823.4 177.5 L824.2 176.9 L824.9 176.3 L825.7 175.7 L826.5 175.1 L827.3 174.5 L828.1 173.9 L828.9 173.3 L829.7 172.7 L830.5 172.1 L831.3 171.6 L832.1 171.0 L832.9 170.4 L833.7 169.8 L834.5 169.2 L835.3 168.7 L836.1 168.1 L836.9 167.5 L837.7 167.0 L838.5 166.4 L839.3 165.8 L840.0 165.3 L840.8 164.7 L841.6 164.1 L842.4 163.6 L843.2 163.0 L844.0 162.5 L844.8 161.9 L845.6 161.4 L846.4 160.8 L847.2 160.3 L848.0 159.8 L848.8 159.2 L849.6 158.7 L850.3 158.2 L851.1 157.6 L851.9 157.1 L852.7 156.6 L853.5 156.0 L854.3 155.5 L855.1 155.0 L855.9 154.5 L856.7 154.0 L857.4 153.5 L858.2 153.0 L859.0 152.5 L859.8 152.0 L860.6 151.5 L861.4 151.0 L862.2 150.5 L862.9 150.0 L863.7 149.5 L864.5 149.0 L865.3 148.5 L866.1 148.0 L866.8 147.6 L867.6 147.1 L868.4 146.6 L869.2 146.1 L870.0 145.7 L870.7 145.2 L871.5 144.8 L872.3 144.3 L873.1 143.9 L873.8 143.4 L874.6 143.0 L875.4 142.5 L876.2 142.1 L876.9 141.7 L877.7 141.2 L878.5 140.8 L879.3 140.4 L880.0 140.0 L880.8 139.6 L881.6 139.1 L882.3 138.7 L883.1 138.3 L883.9 137.9 L884.6 137.5 L885.4 137.2 L886.2 136.8 L886.9 136.4 L887.7 136.0 L888.5 135.6 L889.2 135.3 L890.0 134.9 L890.8 134.5 L891.5 134.2 L892.3 133.8 L893.1 133.5 L893.8 133.1 L894.6 132.8 L895.3 132.5 L896.1 132.1 L896.9 131.8 L897.6 131.5 L898.4 131.2 L899.1 130.9 L899.9 130.6 L900.7 130.3 L901.4 130.0 L902.2 129.7 L902.9 129.4 L903.7 129.1 L904.5 128.9 L905.2 128.6 L906.0 128.3 L906.8 128.1 L907.5 127.8 L908.3 127.6 L909.0 127.3 L909.8 127.1 L910.6 126.9 L911.3 126.6 L912.1 126.4 L912.8 126.2 L913.6 126.0 L914.4 125.8 L915.1 125.6 L915.9 125.4 L916.7 125.2 L917.4 125.0 L918.2 124.9 L919.0 124.7 L919.8 124.5 L920.5 124.4 L921.3 124.2 L922.1 124.1 L922.8 123.9 L923.6 123.8 L924.4 123.7 L925.2 123.6 L926.0 123.5 L926.7 123.3 L927.5 123.2 L928.3 123.1 L929.1 123.1 L929.9 123.0 L930.7 122.9 L931.4 122.8 L932.2 122.8 L933.0 122.7 L933.8 122.7 L934.6 122.6 L935.4 122.6 L936.2 122.5 L937.0 122.5 L937.8 122.5 L938.6 122.5 L939.5 122.5 L940.3 122.5 L941.1 122.5 L941.9 122.5 L942.7 122.5 L943.5 122.5 L944.4 122.6 L945.2 122.6 L946.0 122.7 L946.9 122.7 L947.7 122.8 L948.5 122.8 L949.4 122.9 L950.2 123.0 L951.1 123.1 L951.9 123.1 L952.8 123.2 L953.6 123.3 L954.5 123.4 L955.3 123.6 L956.2 123.7 L957.1 123.8 L957.9 123.9 L958.8 124.1 L959.7 124.2 L960.6 124.4 L961.4 124.5 L962.3 124.7 L963.2 124.9 L964.1 125.0 L965.0 125.2 L965.9 125.4 L966.8 125.6 L967.7 125.8 L968.6 126.0 L969.5 126.2 L970.5 126.4 L971.4 126.6 L972.3 126.8 L973.2 127.1 L974.2 127.3 L975.1 127.6 L976.0 127.8 L977.0 128.1 L977.9 128.3 L978.9 128.6 L979.8 128.8 L980.8 129.1 L981.7 129.4 L982.7 129.7 L983.7 130.0 L984.6 130.3 L985.6 130.6 L986.6 130.9 L987.5 131.2 L988.5 131.5 L989.5 131.8 L990.5 132.1 L991.5 132.5 L992.5 132.8 L993.5 133.1 L994.5 133.5 L995.5 133.8 L996.5 134.2 L997.5 134.5 L998.5 134.9 L999.5 135.3 L1000.6 135.6 L1001.6 136.0 L1002.6 136.4 L1003.6 136.8 L1004.7 137.1 L1005.7 137.5 L1006.7 137.9 L1007.8 138.3 L1008.8 138.7 L1009.9 139.1 L1010.9 139.5 L1012.0 140.0 L1013.0 140.4 L1014.1 140.8 L1015.2 141.2 L1016.2 141.6 L1017.3 142.1 L1018.4 142.5 L1019.4 143.0 L1020.5 143.4 M724.0 263.3 L724.5 262.5 L725.0 261.7 L725.5 261.0 L726.0 260.2 L726.5 259.4 L727.1 258.7 L727.6 257.9 L728.1 257.2 L728.6 256.4 L729.2 255.6 L729.7 254.9 L730.2 254.1 L730.8 253.3 L731.3 252.6 L731.9 251.8 L732.4 251.1 L733.0 250.3 L733.5 249.5 L734.1 248.8 L734.7 248.0 L735.2 247.2 L735.8 246.5 L736.4 245.7 L736.9 245.0 L737.5 244.2 L738.1 243.4 L738.7 242.7 L739.2 241.9 L739.8 241.2 L740.4 240.4 L741.0 239.6 L741.6 238.9 L742.2 238.1 L742.8 237.4 L743.4 236.6 L744.0 235.9 L744.6 235.1 L745.2 234.3 L745.8 233.6 L746.4 232.8 L747.0 232.1 L747.7 231.3 L748.3 230.5 L748.9 229.8 L749.5 229.0 L750.2 228.3 L750.8 227.5 L751.4 226.8 L752.0 226.0 L752.7 225.3 L753.3 224.5 L754.0 223.8 L754.6 223.0 L755.3 222.2 L755.9 221.5 L756.6 220.7 L757.2 220.0 L757.9 219.2 L758.5 218.5 L759.2 217.7 L759.8 217.0 L760.5 216.2 L761.2 215.5 L761.8 214.7 L762.5 214.0 L763.2 213.2 L763.9 212.5 L764.5 211.7 L765.2 211.0 L765.9 210.2 L766.6 209.5 L767.3 208.7 L768.0 208.0 L768.6 207.2 L769.3 206.5 L770.0 205.7 L770.7 205.0 L771.4 204.2 L772.1 203.5 L772.8 202.8 L773.5 202.0 L774.2 201.3 L774.9 200.5 L775.6 199.8 L776.3 199.0 L777.1 198.3 L777.8 197.6 L778.5 196.8 L779.2 196.1 L779.9 195.3 L780.6 194.6 L781.4 193.8 L782.1 193.1 L782.8 192.4 L783.5 191.6 L784.3 190.9 L785.0 190.2 L785.7 189.4 L786.5 188.7 L787.2 187.9 L787.9 187.2 L788.7 186.5 L789.4 185.7 L790.2 185.0 L790.9 184.3 L791.6 183.5 L792.4 182.8 L793.1 182.1 L793.9 181.4 L794.6 180.6 L795.4 179.9 L796.1 179.2 L796.9 178.4 L797.6 177.7 L798.4 177.0 L799.1 176.3 L799.9 175.5 L800.7 174.8 L801.4 174.1 L802.2 173.4 L802.9 172.6 L803.7 171.9 L804.5 171.2 L805.2 170.5 L806.0 169.8 L806.8 169.0 L807.5 168.3 L808.3 167.6 L809.1 166.9 L809.8 166.2 L810.6 165.5 L811.4 164.7 L812.2 164.0 L812.9 163.3 L813.7 162.6 L814.5 161.9 L815.3 161.2 L816.0 160.5 L816.8 159.8 L817.6 159.1 L818.4 158.4 L819.2 157.7 L819.9 157.0 L820.7 156.3 L821.5 155.6 L822.3 154.9 L823.1 154.2 L823.9 153.5 L824.6 152.8 L825.4 152.1 L826.2 151.4 L827.0 150.7 L827.8 150.0 L828.6 149.3 L829.4 148.6 L830.1 147.9 L830.9 147.2 L831.7 146.6 L832.5 145.9 L833.3 145.2 L834.1 144.5 L834.9 143.8 L835.7 143.2 L836.4 142.5 L837.2 141.8 L838.0 141.1 L838.8 140.5 L839.6 139.8 L840.4 139.1 L841.2 138.5 L842.0 137.8 L842.8 137.1 L843.5 136.5 L844.3 135.8 L845.1 135.2 L845.9 134.5 L846.7 133.8 L847.5 133.2 L848.3 132.5 L849.1 131.9 L849.8 131.3 L850.6 130.6 L851.4 130.0 L852.2 129.3 L853.0 128.7 L853.8 128.1 L854.6 127.4 L855.3 126.8 L856.1 126.2 L856.9 125.5 L857.7 124.9 L858.5 124.3 L859.3 123.7 L860.0 123.1 L860.8 122.5 L861.6 121.8 L862.4 121.2 L863.2 120.6 L863.9 120.0 L864.7 119.4 L865.5 118.8 L866.3 118.3 L867.0 117.7 L867.8 117.1 L868.6 116.5 L869.3 115.9 L870.1 115.3 L870.9 114.8 L871.7 114.2 L872.4 113.6 L873.2 113.1 L874.0 112.5 L874.7 112.0 L875.5 111.4 L876.3 110.9 L877.0 110.3 L877.8 109.8 L878.5 109.3 L879.3 108.7 L880.1 108.2 L880.8 107.7 L881.6 107.2 L882.3 106.7 L883.1 106.2 L883.8 105.7 L884.6 105.2 L885.3 104.7 L886.1 104.2 L886.8 103.7 L887.6 103.2 L888.3 102.8 L889.1 102.3 L889.8 101.9 L890.6 101.4 L891.3 101.0 L892.1 100.5 L892.8 100.1 L893.5 99.7 L894.3 99.2 L895.0 98.8 L895.8 98.4 L896.5 98.0 L897.2 97.6 L898.0 97.2 L898.7 96.8 L899.5 96.5 L900.2 96.1 L900.9 95.7 L901.7 95.4 L902.4 95.0 L903.1 94.7 L903.9 94.4 L904.6 94.1 L905.3 93.8 L906.1 93.4 L906.8 93.2 L907.6 92.9 L908.3 92.6 L909.0 92.3 L909.8 92.1 L910.5 91.8 L911.3 91.6 L912.0 91.3 L912.8 91.1 L913.5 90.9 L914.3 90.7 L915.0 90.5 L915.8 90.3 L916.5 90.1 L917.3 89.9 L918.0 89.8 L918.8 89.6 L919.5 89.5 L920.3 89.4 L921.1 89.3 L921.9 89.1 L922.6 89.0 L923.4 89.0 L924.2 88.9 L925.0 88.8 L925.8 88.8 L926.6 88.7 L927.4 88.7 L928.2 88.6 L929.0 88.6 L929.8 88.6 L930.6 88.6 L931.4 88.6 L932.2 88.7 L933.1 88.7 L933.9 88.8 L934.7 88.8 L935.6 88.9 L936.4 89.0 L937.3 89.0 L938.1 89.1 L939.0 89.3 L939.9 89.4 L940.7 89.5 L941.6 89.6 L942.5 89.8 L943.4 90.0 L944.3 90.1 L945.2 90.3 L946.1 90.5 L947.1 90.7 L948.0 90.9 L948.9 91.1 L949.9 91.3 L950.8 91.6 L951.8 91.8 L952.7 92.1 L953.7 92.3 L954.7 92.6 L955.6 92.9 L956.6 93.2 L957.6 93.5 L958.6 93.8 L959.6 94.1 L960.6 94.4 L961.7 94.7 L962.7 95.1 L963.7 95.4 L964.8 95.8 L965.8 96.1 L966.9 96.5 L967.9 96.9 L969.0 97.2 L970.1 97.6 L971.1 98.0 L972.2 98.4 L973.3 98.8 L974.4 99.3 L975.5 99.7 L976.6 100.1 L977.7 100.5 L978.8 101.0 L979.9 101.4 L981.1 101.9 L982.2 102.3 L983.3 102.8 L984.5 103.3 L985.6 103.7 L986.8 104.2 L987.9 104.7 L989.1 105.2 L990.3 105.7 L991.4 106.2 L992.6 106.7 L993.8 107.2 L995.0 107.7 L996.2 108.2 L997.4 108.8 L998.6 109.3 L999.8 109.8 L1001.0 110.4 L1002.2 110.9 L1003.4 111.5 L1004.6 112.0 L1005.8 112.6 L1007.1 113.1 L1008.3 113.7 L1009.5 114.2 L1010.8 114.8 L1012.0 115.4 L1013.2 116.0 L1014.5 116.5 L1015.7 117.1 L1017.0 117.7 L1018.2 118.3 L1019.5 118.9 L1020.7 119.5 L1022.0 120.1 L1023.3 120.7 L1024.5 121.3 L1025.8 121.9 L1027.1 122.5 L1028.3 123.1 L1029.6 123.7 L1030.9 124.3 L1032.2 125.0 L1033.4 125.6 L1034.7 126.2 L1036.0 126.8 L1037.3 127.5 L1038.6 128.1 L1039.8 128.7 L1041.1 129.4 L1042.4 130.0 L1043.7 130.6 L1045.0 131.3 L1046.3 131.9 L1047.6 132.6 L1048.9 133.2 L1050.1 133.9 L1051.4 134.5 L1052.7 135.2 L1054.0 135.9 L1055.3 136.5 L1056.6 137.2 L1057.9 137.8 L1059.2 138.5 M725.8 264.0 L726.4 263.3 L727.0 262.6 L727.6 261.9 L728.2 261.1 L728.8 260.4 L729.4 259.7 L730.0 259.0 L730.6 258.3 L731.3 257.6 L731.9 256.9 L732.5 256.2 L733.1 255.4 L733.8 254.7 L734.4 254.0 L735.0 253.3 L735.6 252.6 L736.3 251.9 L736.9 251.2 L737.6 250.5 L738.2 249.8 L738.8 249.1 L739.5 248.3 L740.1 247.6 L740.8 246.9 L741.4 246.2 L742.1 245.5 L742.8 244.8 L743.4 244.1 L744.1 243.4 L744.7 242.7 L745.4 242.0 L746.1 241.3 L746.8 240.6 L747.4 239.9 L748.1 239.2 L748.8 238.5 L749.5 237.8 L750.1 237.1 L750.8 236.4 L751.5 235.7 L752.2 235.0 L752.9 234.3 L753.6 233.6 L754.3 232.9 L755.0 232.2 L755.7 231.5 L756.4 230.8 L757.1 230.1 L757.8 229.4 L758.5 228.7 L759.2 228.0 L759.9 227.3 L760.6 226.6 L761.3 225.9 L762.0 225.2 L762.7 224.5 L763.4 223.8 L764.2 223.1 L764.9 222.4 L765.6 221.7 L766.3 221.0 L767.0 220.4 L767.8 219.7 L768.5 219.0 L769.2 218.3 L770.0 217.6 L770.7 216.9 L771.4 216.2 L772.2 215.5 L772.9 214.9 L773.6 214.2 L774.4 213.5 L775.1 212.8 L775.9 212.1 L776.6 211.4 L777.3 210.8 L778.1 210.1 L778.8 209.4 L779.6 208.7 L780.3 208.0 L781.1 207.4 L781.8 206.7 L782.6 206.0 L783.4 205.3 L784.1 204.7 L784.9 204.0 L785.6 203.3 L786.4 202.6 L787.1 202.0 L787.9 201.3 L788.7 200.6 L789.4 200.0 L790.2 199.3 L791.0 198.6 L791.7 198.0 L792.5 197.3 L793.3 196.6 L794.0 196.0 L794.8 195.3 L795.6 194.6 L796.4 194.0 L797.1 193.3 L797.9 192.7 L798.7 192.0 L799.5 191.3 L800.3 190.7 L801.0 190.0 L801.8 189.4 L802.6 188.7 L803.4 188.1 L804.2 187.4 L804.9 186.8 L805.7 186.1 L806.5 185.5 L807.3 184.8 L808.1 184.2 L808.9 183.5 L809.6 182.9 L810.4 182.3 L811.2 181.6 L812.0 181.0 L812.8 180.3 L813.6 179.7 L814.4 179.1 L815.2 178.4 L816.0 177.8 L816.7 177.2 L817.5 176.5 L818.3 175.9 L819.1 175.3 L819.9 174.7 L820.7 174.0 L821.5 173.4 L822.3 172.8 L823.1 172.2 L823.9 171.6 L824.7 170.9 L825.5 170.3 L826.3 169.7 L827.0 169.1 L827.8 168.5 L828.6 167.9 L829.4 167.3 L830.2 166.7 L831.0 166.1 L831.8 165.5 L832.6 164.9 L833.4 164.3 L834.2 163.7 L835.0 163.1 L835.8 162.5 L836.6 161.9 L837.4 161.3 L838.2 160.7 L839.0 160.1 L839.8 159.5 L840.5 158.9 L841.3 158.4 L842.1 157.8 L842.9 157.2 L843.7 156.6 L844.5 156.1 L845.3 155.5 L846.1 154.9 L846.9 154.4 L847.7 153.8 L848.5 153.2 L849.3 152.7 L850.1 152.1 L850.8 151.6 L851.6 151.0 L852.4 150.5 L853.2 149.9 L854.0 149.4 L854.8 148.9 L855.6 148.3 L856.4 147.8 L857.1 147.2 L857.9 146.7 L858.7 146.2 L859.5 145.7 L860.3 145.1 L861.1 144.6 L861.8 144.1 L862.6 143.6 L863.4 143.1 L864.2 142.6 L865.0 142.1 L865.8 141.6 L866.5 141.1 L867.3 140.6 L868.1 140.1 L868.9 139.6 L869.6 139.1 L870.4 138.6 L871.2 138.2 L872.0 137.7 L872.7 137.2 L873.5 136.7 L874.3 136.3 L875.1 135.8 L875.8 135.4 L876.6 134.9 L877.4 134.5 L878.1 134.0 L878.9 133.6 L879.7 133.1 L880.5 132.7 L881.2 132.3 L882.0 131.8 L882.8 131.4 L883.5 131.0 L884.3 130.6 L885.0 130.2 L885.8 129.8 L886.6 129.4 L887.3 129.0 L888.1 128.6 L888.9 128.2 L889.6 127.8 L890.4 127.4 L891.1 127.1 L891.9 126.7 L892.7 126.3 L893.4 126.0 L894.2 125.6 L894.9 125.3 L895.7 124.9 L896.4 124.6 L897.2 124.3 L898.0 123.9 L898.7 123.6 L899.5 123.3 L900.2 123.0 L901.0 122.7 L901.7 122.4 L902.5 122.1 L903.2 121.8 L904.0 121.5 L904.8 121.2 L905.5 121.0 L906.3 120.7 L907.0 120.4 L907.8 120.2 L908.5 119.9 L909.3 119.7 L910.1 119.4 L910.8 119.2 L911.6 119.0 L912.3 118.8 L913.1 118.5 L913.9 118.3 L914.6 118.1 L915.4 117.9 L916.1 117.7 L916.9 117.6 L917.7 117.4 L918.4 117.2 L919.2 117.1 L920.0 116.9 L920.7 116.8 L921.5 116.6 L922.3 116.5 L923.1 116.3 L923.8 116.2 L924.6 116.1 L925.4 116.0 L926.2 115.9 L926.9 115.8 L927.7 115.7 L928.5 115.6 L929.3 115.5 L930.1 115.5 L930.9 115.4 L931.7 115.4 L932.5 115.3 L933.3 115.3 L934.1 115.2 L934.9 115.2 L935.7 115.2 L936.5 115.2 L937.3 115.2 L938.1 115.2 L938.9 115.2 L939.7 115.2 L940.5 115.2 L941.4 115.2 L942.2 115.3 L943.0 115.3 L943.9 115.4 L944.7 115.4 L945.5 115.5 L946.4 115.6 L947.2 115.6 L948.1 115.7 L948.9 115.8 L949.8 115.9 L950.6 116.0 L951.5 116.1 L952.3 116.3 L953.2 116.4 L954.1 116.5 L954.9 116.6 L955.8 116.8 L956.7 116.9 L957.6 117.1 L958.5 117.3 L959.4 117.4 L960.3 117.6 L961.2 117.8 L962.1 118.0 L963.0 118.2 L963.9 118.4 L964.8 118.6 L965.7 118.8 L966.7 119.0 L967.6 119.3 L968.5 119.5 L969.4 119.7 L970.4 120.0 L971.3 120.2 L972.3 120.5 L973.2 120.8 L974.2 121.0 L975.1 121.3 L976.1 121.6 L977.1 121.9 L978.0 122.2 L979.0 122.5 L980.0 122.8 L981.0 123.1 L981.9 123.4 L982.9 123.7 L983.9 124.0 L984.9 124.4 L985.9 124.7 L986.9 125.0 L987.9 125.4 L988.9 125.7 L990.0 126.1 L991.0 126.4 L992.0 126.8 L993.0 127.2 L994.1 127.5 L995.1 127.9 L996.1 128.3 L997.2 128.7 L998.2 129.1 L999.3 129.5 L1000.3 129.9 L1001.4 130.3 L1002.4 130.7 L1003.5 131.1 L1004.5 131.5 L1005.6 132.0 L1006.7 132.4 L1007.7 132.8 L1008.8 133.2 L1009.9 133.7 L1011.0 134.1 L1012.1 134.6 L1013.1 135.0 L1014.2 135.5 L1015.3 135.9 L1016.4 136.4 L1017.5 136.9 L1018.6 137.3 L1019.7 137.8 L1020.8 138.3 L1021.9 138.8 L1023.0 139.2 L1024.2 139.7 L1025.3 140.2 L1026.4 140.7 L1027.5 141.2 L1028.6 141.7 L1029.8 142.2 L1030.9 142.7 L1032.0 143.2 L1033.1 143.7 L1034.3 144.2 L1035.4 144.8 L1036.5 145.3 L1037.7 145.8 L1038.8 146.3 L1040.0 146.9 L1041.1 147.4 L1042.2 147.9 L1043.4 148.5 L1044.5 149.0 L1045.7 149.5 L1046.8 150.1 L1048.0 150.6 L1049.1 151.2 L1050.3 151.7 L1051.4 152.3 L1052.6 152.8 L1053.7 153.4 L1054.9 153.9 L1056.1 154.5 L1057.2 155.1 L1058.4 155.6 L1059.5 156.2 L1060.7 156.8 L1061.9 157.4 L1063.0 157.9 L1064.2 158.5 L1065.4 159.1 L1066.5 159.7 L1067.7 160.3 L1068.8 160.8 L1070.0 161.4 L1071.2 162.0 L1072.3 162.6 L1073.5 163.2 L1074.7 163.8 L1075.8 164.4 L1077.0 165.0 L1078.2 165.6 L1079.3 166.2 L1080.5 166.8 L1081.7 167.4 L1082.8 168.0 L1084.0 168.6 L1085.2 169.2 L1086.3 169.9 L1087.5 170.5 L1088.7 171.1 L1089.8 171.7 L1091.0 172.3 L1092.2 172.9 L1093.3 173.6 L1094.5 174.2 L1095.6 174.8 L1096.8 175.4 L1098.0 176.1 L1099.1 176.7 L1100.3 177.3 L1101.4 178.0 L1102.6 178.6 L1103.8 179.2 L1104.9 179.9 L1106.1 180.5 L1107.2 181.1 L1108.4 181.8 L1109.5 182.4 L1110.7 183.1" fill="none" stroke="#ff2200" stroke-width="1.5" stroke-dasharray="1.4 1.9"/>
<path d="M735.2 242.9 L735.5 242.1 L735.8 241.3 L736.0 240.5 L736.3 239.7 L736.6 238.8 L736.9 238.0 L737.2 237.2 L737.5 236.4 L737.8 235.6 L738.1 234.8 L738.5 234.0 L738.8 233.2 L739.1 232.4 L739.4 231.6 L739.7 230.8 L740.1 229.9 L740.4 229.1 L740.7 228.3 L741.1 227.5 L741.4 226.7 L741.7 225.9 L742.1 225.1 L742.4 224.3 L742.8 223.5 L743.2 222.7 L743.5 221.9 L743.9 221.1 L744.2 220.2 L744.6 219.4 L745.0 218.6 L745.3 217.8 L745.7 217.0 L746.1 216.2 L746.5 215.4 L746.9 214.6 L747.3 213.8 L747.6 213.0 L748.0 212.2 L748.4 211.4 L748.8 210.5 L749.2 209.7 L749.6 208.9 L750.1 208.1 L750.5 207.3 L750.9 206.5 L751.3 205.7 L751.7 204.9 L752.1 204.1 L752.6 203.3 L753.0 202.5 L753.4 201.7 L753.9 200.8 L754.3 200.0 L754.7 199.2 L755.2 198.4 L755.6 197.6 L756.1 196.8 L756.5 196.0 L757.0 195.2 L757.4 194.4 L757.9 193.6 L758.3 192.8 L758.8 192.0 L759.3 191.1 L759.7 190.3 L760.2 189.5 L760.7 188.7 L761.2 187.9 L761.6 187.1 L762.1 186.3 L762.6 185.5 L763.1 184.7 L763.6 183.9 L764.1 183.1 L764.6 182.3 L765.1 181.4 L765.6 180.6 L766.1 179.8 L766.6 179.0 L767.1 178.2 L767.6 177.4 L768.1 176.6 L768.6 175.8 L769.2 175.0 L769.7 174.2 L770.2 173.4 L770.7 172.6 L771.3 171.8 L771.8 170.9 L772.3 170.1 L772.9 169.3 L773.4 168.5 L773.9 167.7 L774.5 166.9 L775.0 166.1 L775.6 165.3 L776.1 164.5 L776.7 163.7 L777.2 162.9 L777.8 162.1 L778.3 161.2 L778.9 160.4 L779.5 159.6 L780.0 158.8 L780.6 158.0 L781.2 157.2 L781.8 156.4 L782.3 155.6 L782.9 154.8 L783.5 154.0 L784.1 153.2 L784.7 152.4 L785.2 151.6 L785.8 150.8 L786.4 149.9 L787.0 149.1 L787.6 148.3 L788.2 147.5 L788.8 146.7 L789.4 145.9 L790.0 145.1 L790.6 144.3 L791.2 143.5 L791.8 142.7 L792.4 141.9 L793.1 141.1 L793.7 140.3 L794.3 139.5 L794.9 138.6 L795.5 137.8 L796.2 137.0 L796.8 136.2 L797.4 135.4 L798.0 134.6 L798.7 133.8 L799.3 133.0 L799.9 132.2 L800.6 131.4 L801.2 130.6 L801.9 129.8 L802.5 129.0 L803.2 128.2 L803.8 127.4 L804.4 126.5 L805.1 125.7 L805.7 124.9 L806.4 124.1 L807.1 123.3 L807.7 122.5 L808.4 121.7 L809.0 120.9 L809.7 120.1 L810.4 119.3 L811.0 118.5 L811.7 117.7 L812.4 116.9 L813.0 116.1 L813.7 115.3 L814.4 114.5 L815.1 113.7 L815.7 112.8 L816.4 112.0 L817.1 111.2 L817.8 110.4 L818.5 109.6 L819.1 108.8 L819.8 108.0 L820.5 107.2 L821.2 106.4 L821.9 105.6 L822.6 104.8 L823.3 104.0 L824.0 103.2 L824.7 102.4 L825.4 101.6 L826.1 100.8 L826.8 100.0 L827.5 99.2 L828.2 98.4 L828.9 97.6 L829.6 96.8 L830.3 96.0 L831.0 95.2 L831.7 94.4 L832.4 93.6 L833.1 92.8 L833.8 92.0 L834.5 91.1 L835.3 90.3 L836.0 89.5 L836.7 88.7 L837.4 87.9 L838.1 87.1 L838.8 86.3 L839.6 85.5 L840.3 84.7 L841.0 83.9 L841.7 83.1 L842.5 82.3 L843.2 81.5 L843.9 80.7 L844.6 79.9 L845.4 79.1 L846.1 78.4 L846.8 77.6 L847.5 76.8 L848.3 76.0 L849.0 75.2 L849.7 74.4 L850.5 73.6 L851.2 72.8 L851.9 72.0 L852.6 71.2 L853.4 70.4 L854.1 69.6 L854.8 68.8 L855.6 68.0 L856.3 67.2 L857.0 66.4 L857.8 65.7 L858.5 64.9 L859.2 64.1 L860.0 63.3 L860.7 62.5 L861.4 61.7 L862.1 61.0 L862.9 60.2 L863.6 59.4 L864.3 58.6 L865.0 57.8 L865.8 57.1 L866.5 56.3 L867.2 55.5 L867.9 54.8 L868.6 54.0 L869.3 53.2 L870.0 52.5 L870.7 51.7 L871.4 51.0 L872.1 50.2 L872.8 49.5 L873.5 48.7 L874.2 48.0 L874.8 47.3 L875.5 46.6 L876.1 45.8 L876.8 45.1 L877.4 44.4 L878.0 43.8 L878.6 43.1 L879.2 42.4 L879.7 41.8 L880.2 41.2 L880.7 40.6 L881.1 40.0 L881.5 39.5 L881.8 38.9 L882.1 38.5 L882.2 38.0 L882.3 37.6 L882.3 37.3 L882.1 37.0 L881.8 36.8 L881.4 36.7 L880.7 36.6 L879.9 36.6 L878.9 36.7 L877.6 36.8 L876.2 37.1 L874.6 37.4 L872.9 37.7 L871.0 38.1 M935.8 38.5 L936.6 39.0 L937.6 39.6 L938.7 40.1 L939.8 40.7 L941.0 41.3 L942.3 41.9 L943.6 42.6 L945.0 43.2 L946.4 43.9 M733.0 243.0 L733.4 242.2 L733.9 241.4 L734.3 240.6 L734.8 239.8 L735.2 239.0 L735.7 238.2 L736.1 237.4 L736.6 236.6 L737.0 235.8 L737.5 235.0 L738.0 234.2 L738.4 233.4 L738.9 232.6 L739.4 231.8 L739.9 231.0 L740.4 230.2 L740.8 229.4 L741.3 228.6 L741.8 227.8 L742.3 227.0 L742.8 226.2 L743.3 225.3 L743.8 224.5 L744.3 223.7 L744.8 222.9 L745.3 222.1 L745.9 221.3 L746.4 220.5 L746.9 219.7 L747.4 218.9 L747.9 218.1 L748.5 217.3 L749.0 216.5 L749.5 215.7 L750.1 214.9 L750.6 214.1 L751.2 213.3 L751.7 212.5 L752.3 211.7 L752.8 210.9 L753.4 210.1 L753.9 209.3 L754.5 208.5 L755.0 207.7 L755.6 206.9 L756.2 206.1 L756.7 205.3 L757.3 204.5 L757.9 203.7 L758.5 202.9 L759.0 202.1 L759.6 201.3 L760.2 200.5 L760.8 199.7 L761.4 198.9 L762.0 198.1 L762.6 197.3 L763.2 196.5 L763.8 195.7 L764.4 194.9 L765.0 194.1 L765.6 193.3 L766.2 192.5 L766.8 191.7 L767.4 190.9 L768.1 190.1 L768.7 189.3 L769.3 188.5 L769.9 187.7 L770.6 186.9 L771.2 186.1 L771.8 185.3 L772.5 184.5 L773.1 183.7 L773.7 182.9 L774.4 182.1 L775.0 181.3 L775.7 180.5 L776.3 179.7 L777.0 178.9 L777.6 178.1 L778.3 177.3 L778.9 176.5 L779.6 175.7 L780.3 174.9 L780.9 174.2 L781.6 173.4 L782.3 172.6 L782.9 171.8 L783.6 171.0 L784.3 170.2 L785.0 169.4 L785.6 168.6 L786.3 167.8 L787.0 167.0 L787.7 166.2 L788.4 165.4 L789.1 164.6 L789.8 163.8 L790.5 163.0 L791.2 162.2 L791.8 161.4 L792.5 160.6 L793.2 159.8 L794.0 159.0 L794.7 158.2 L795.4 157.4 L796.1 156.6 L796.8 155.8 L797.5 155.1 L798.2 154.3 L798.9 153.5 L799.6 152.7 L800.4 151.9 L801.1 151.1 L801.8 150.3 L802.5 149.5 L803.3 148.7 L804.0 147.9 L804.7 147.1 L805.4 146.3 L806.2 145.5 L806.9 144.7 L807.6 144.0 L808.4 143.2 L809.1 142.4 L809.9 141.6 L810.6 140.8 L811.3 140.0 L812.1 139.2 L812.8 138.4 L813.6 137.6 L814.3 136.8 L815.1 136.1 L815.8 135.3 L816.6 134.5 L817.3 133.7 L818.1 132.9 L818.9 132.1 L819.6 131.3 L820.4 130.5 L821.1 129.8 L821.9 129.0 L822.7 128.2 L823.4 127.4 L824.2 126.6 L825.0 125.8 L825.7 125.1 L826.5 124.3 L827.3 123.5 L828.0 122.7 L828.8 121.9 L829.6 121.1 L830.3 120.4 L831.1 119.6 L831.9 118.8 L832.7 118.0 L833.5 117.2 L834.2 116.5 L835.0 115.7 L835.8 114.9 L836.6 114.1 L837.4 113.3 L838.1 112.6 L838.9 111.8 L839.7 111.0 L840.5 110.2 L841.3 109.5 L842.1 108.7 L842.8 107.9 L843.6 107.2 L844.4 106.4 L845.2 105.6 L846.0 104.8 L846.8 104.1 L847.6 103.3 L848.4 102.5 L849.1 101.8 L849.9 101.0 L850.7 100.2 L851.5 99.5 L852.3 98.7 L853.1 98.0 L853.9 97.2 L854.7 96.4 L855.5 95.7 L856.2 94.9 L857.0 94.2 L857.8 93.4 L858.6 92.7 L859.4 91.9 L860.2 91.2 L861.0 90.4 L861.8 89.7 L862.6 88.9 L863.4 88.2 L864.1 87.4 L864.9 86.7 L865.7 86.0 L866.5 85.2 L867.3 84.5 L868.1 83.8 L868.9 83.0 L869.6 82.3 L870.4 81.6 L871.2 80.8 L872.0 80.1 L872.8 79.4 L873.5 78.7 L874.3 78.0 L875.1 77.3 L875.9 76.6 L876.6 75.9 L877.4 75.2 L878.2 74.5 L879.0 73.8 L879.7 73.1 L880.5 72.4 L881.3 71.7 L882.0 71.0 L882.8 70.4 L883.5 69.7 L884.3 69.0 L885.1 68.4 L885.8 67.7 L886.6 67.1 L887.3 66.4 L888.1 65.8 L888.8 65.2 L889.5 64.5 L890.3 63.9 L891.0 63.3 L891.7 62.7 L892.5 62.1 L893.2 61.6 L893.9 61.0 L894.7 60.4 L895.4 59.9 L896.1 59.4 L896.8 58.8 L897.5 58.3 L898.2 57.8 L899.0 57.3 L899.7 56.9 M736.3 244.1 L736.8 243.3 L737.4 242.5 L737.9 241.7 L738.5 240.9 L739.0 240.2 L739.5 239.4 L740.1 238.6 L740.6 237.8 L741.2 237.1 L741.7 236.3 L742.3 235.5 L742.9 234.7 L743.4 233.9 L744.0 233.2 L744.6 232.4 L745.1 231.6 L745.7 230.8 L746.3 230.0 L746.9 229.3 L747.4 228.5 L748.0 227.7 L748.6 226.9 L749.2 226.2 L749.8 225.4 L750.4 224.6 L751.0 223.8 L751.6 223.1 L752.2 222.3 L752.8 221.5 L753.4 220.7 L754.0 220.0 L754.6 219.2 L755.2 218.4 L755.9 217.6 L756.5 216.9 L757.1 216.1 L757.7 215.3 L758.4 214.5 L759.0 213.8 L759.6 213.0 L760.2 212.2 L760.9 211.4 L761.5 210.7 L762.2 209.9 L762.8 209.1 L763.5 208.3 L764.1 207.6 L764.8 206.8 L765.4 206.0 L766.1 205.3 L766.7 204.5 L767.4 203.7 L768.0 202.9 L768.7 202.2 L769.4 201.4 L770.0 200.6 L770.7 199.9 L771.4 199.1 L772.1 198.3 L772.7 197.6 L773.4 196.8 L774.1 196.0 L774.8 195.3 L775.5 194.5 L776.1 193.7 L776.8 193.0 L777.5 192.2 L778.2 191.4 L778.9 190.7 L779.6 189.9 L780.3 189.1 L781.0 188.4 L781.7 187.6 L782.4 186.8 L783.1 186.1 L783.8 185.3 L784.5 184.5 L785.2 183.8 L785.9 183.0 L786.7 182.3 L787.4 181.5 L788.1 180.7 L788.8 180.0 L789.5 179.2 L790.3 178.5 L791.0 177.7 L791.7 176.9 L792.4 176.2 L793.2 175.4 L793.9 174.7 L794.6 173.9 L795.4 173.1 L796.1 172.4 L796.8 171.6 L797.6 170.9 L798.3 170.1 L799.0 169.4 L799.8 168.6 L800.5 167.9 L801.3 167.1 L802.0 166.4 L802.8 165.6 L803.5 164.9 L804.3 164.1 L805.0 163.4 L805.8 162.6 L806.5 161.9 L807.3 161.1 L808.0 160.4 L808.8 159.6 L809.6 158.9 L810.3 158.1 L811.1 157.4 L811.8 156.6 L812.6 155.9 L813.4 155.1 L814.1 154.4 L814.9 153.7 L815.7 152.9 L816.4 152.2 L817.2 151.4 L818.0 150.7 L818.7 150.0 L819.5 149.2 L820.3 148.5 L821.1 147.8 L821.8 147.0 L822.6 146.3 L823.4 145.6 L824.2 144.8 L824.9 144.1 L825.7 143.4 L826.5 142.6 L827.3 141.9 L828.0 141.2 L828.8 140.4 L829.6 139.7 L830.4 139.0 L831.2 138.3 L831.9 137.6 L832.7 136.8 L833.5 136.1 L834.3 135.4 L835.1 134.7 L835.9 134.0 L836.6 133.2 L837.4 132.5 L838.2 131.8 L839.0 131.1 L839.8 130.4 L840.6 129.7 L841.3 129.0 L842.1 128.3 L842.9 127.6 L843.7 126.9 L844.5 126.2 L845.3 125.5 L846.1 124.8 L846.8 124.1 L847.6 123.4 L848.4 122.7 L849.2 122.0 L850.0 121.3 L850.8 120.6 L851.5 119.9 L852.3 119.3 L853.1 118.6 L853.9 117.9 L854.7 117.2 L855.5 116.5 L856.2 115.9 L857.0 115.2 L857.8 114.5 L858.6 113.9 L859.4 113.2 L860.1 112.5 L860.9 111.9 L861.7 111.2 L862.5 110.6 L863.3 109.9 L864.0 109.3 L864.8 108.6 L865.6 108.0 L866.4 107.3 L867.1 106.7 L867.9 106.1 L868.7 105.4 L869.4 104.8 L870.2 104.2 L871.0 103.6 L871.7 102.9 L872.5 102.3 L873.3 101.7 L874.0 101.1 L874.8 100.5 M735.8 243.9 L736.3 243.1 L736.8 242.4 L737.4 241.6 L737.9 240.8 L738.5 240.0 L739.0 239.3 L739.6 238.5 L740.1 237.7 L740.7 236.9 L741.2 236.1 L741.8 235.4 L742.4 234.6 L742.9 233.8 L743.5 233.0 L744.1 232.3 L744.7 231.5 L745.2 230.7 L745.8 229.9 L746.4 229.2 L747.0 228.4 L747.6 227.6 L748.2 226.9 L748.8 226.1 L749.4 225.3 L750.0 224.5 L750.6 223.8 L751.2 223.0 L751.8 222.2 L752.4 221.4 L753.0 220.7 L753.6 219.9 L754.2 219.1 L754.9 218.4 L755.5 217.6 L756.1 216.8 L756.7 216.0 L757.4 215.3 L758.0 214.5 L758.6 213.7 L759.3 213.0 L759.9 212.2 L760.5 211.4 L761.2 210.6 L761.8 209.9 L762.5 209.1 L763.1 208.3 L763.8 207.6 L764.4 206.8 L765.1 206.0 L765.8 205.3 L766.4 204.5 L767.1 203.7 L767.7 203.0 L768.4 202.2 L769.1 201.4 L769.8 200.7 L770.4 199.9 L771.1 199.1 L771.8 198.4 L772.5 197.6 L773.1 196.8 L773.8 196.1 L774.5 195.3 L775.2 194.5 L775.9 193.8 L776.6 193.0 L777.3 192.2 L778.0 191.5 L778.7 190.7 L779.4 190.0 L780.1 189.2 L780.8 188.4 L781.5 187.7 L782.2 186.9 L782.9 186.2 L783.6 185.4 L784.3 184.6 L785.0 183.9 L785.8 183.1 L786.5 182.4 L787.2 181.6 L787.9 180.8 L788.6 180.1 L789.4 179.3 L790.1 178.6 L790.8 177.8 L791.6 177.1 L792.3 176.3 L793.0 175.6 L793.8 174.8 L794.5 174.0 L795.2 173.3 L796.0 172.5 L796.7 171.8 L797.4 171.0 L798.2 170.3 L798.9 169.5 L799.7 168.8 L800.4 168.0 L801.2 167.3 L801.9 166.5 L802.7 165.8 L803.4 165.0 L804.2 164.3 L804.9 163.5 L805.7 162.8 L806.5 162.1 L807.2 161.3 L808.0 160.6 L808.7 159.8 L809.5 159.1 L810.3 158.3 L811.0 157.6 L811.8 156.9 L812.5 156.1 L813.3 155.4 L814.1 154.6 L814.9 153.9 L815.6 153.2 L816.4 152.4 L817.2 151.7 L817.9 151.0 L818.7 150.2 L819.5 149.5 L820.3 148.8 L821.0 148.0 L821.8 147.3 L822.6 146.6 L823.4 145.9 L824.1 145.1 L824.9 144.4 L825.7 143.7 L826.5 143.0 L827.3 142.2 L828.0 141.5 L828.8 140.8 L829.6 140.1 L830.4 139.3 L831.2 138.6 L832.0 137.9 L832.7 137.2 L833.5 136.5 L834.3 135.8 L835.1 135.1 L835.9 134.3 L836.7 133.6 L837.5 132.9 L838.2 132.2 L839.0 131.5 L839.8 130.8 L840.6 130.1 L841.4 129.4 L842.2 128.7 L843.0 128.0 L843.7 127.3 L844.5 126.6 L845.3 125.9 L846.1 125.2 L846.9 124.5 L847.7 123.9 L848.5 123.2 L849.2 122.5 L850.0 121.8 L850.8 121.1 L851.6 120.4 L852.4 119.8 L853.2 119.1 L854.0 118.4 L854.7 117.7 L855.5 117.1 L856.3 116.4 L857.1 115.7 L857.9 115.1 L858.7 114.4 L859.4 113.8 L860.2 113.1 L861.0 112.5 L861.8 111.8 L862.6 111.2 L863.3 110.5 L864.1 109.9 L864.9 109.2 L865.7 108.6 L866.4 108.0 L867.2 107.3 L868.0 106.7 L868.7 106.1 L869.5 105.5 L870.3 104.8 L871.1 104.2 L871.8 103.6 L872.6 103.0 L873.4 102.4 L874.1 101.8 L874.9 101.2 L875.6 100.6 L876.4 100.0 L877.2 99.4 L877.9 98.9 L878.7 98.3 L879.4 97.7 L880.2 97.1 L881.0 96.6 L881.7 96.0 L882.5 95.5 L883.2 94.9 L884.0 94.4 L884.7 93.9 L885.5 93.3 L886.2 92.8 L886.9 92.3 L887.7 91.8 L888.4 91.3 L889.2 90.8 L889.9 90.3 L890.6 89.8 L891.4 89.3 L892.1 88.8 L892.9 88.3 L893.6 87.9 L894.3 87.4 L895.1 87.0 L895.8 86.5 L896.5 86.1 L897.2 85.7 L898.0 85.3 L898.7 84.9 L899.4 84.5 L900.2 84.1 L900.9 83.7 L901.6 83.3 L902.3 82.9 L903.1 82.6 L903.8 82.2 L904.5 81.9 L905.2 81.6 L906.0 81.3 L906.7 81.0 L907.4 80.7 L908.2 80.4 L908.9 80.1 L909.6 79.8 L910.4 79.6 L911.1 79.3 L911.8 79.1 L912.6 78.9 L913.3 78.7 L914.1 78.5 L914.8 78.3 L915.6 78.1 L916.3 78.0 L917.1 77.8 L917.8 77.7 L918.6 77.6 L919.4 77.5 L920.1 77.4 L920.9 77.3 L921.7 77.2 L922.5 77.2 L923.3 77.1 L924.1 77.1 L924.9 77.1 L925.7 77.1 L926.5 77.1 L927.3 77.1 L928.1 77.1 L929.0 77.2 L929.8 77.2 L930.7 77.3 L931.5 77.4 L932.4 77.5 L933.3 77.6 L934.1 77.7 L935.0 77.9 L935.9 78.0 L936.8 78.2 L937.7 78.4 L938.6 78.5 L939.6 78.7 L940.5 79.0 L941.4 79.2 L942.4 79.4 L943.3 79.7 L944.3 79.9 L945.3 80.2 L946.3 80.5 L947.3 80.7 L948.3 81.0 L949.3 81.3 L950.3 81.7 L951.3 82.0 L952.4 82.3 L953.4 82.7 L954.5 83.0 L955.5 83.4 L956.6 83.8 L957.7 84.2 L958.8 84.6 L959.9 85.0 L961.0 85.4 L962.1 85.8 L963.2 86.2 L964.3 86.7 L965.4 87.1 L966.6 87.5 L967.7 88.0 L968.9 88.5 L970.0 88.9 L971.2 89.4 L972.4 89.9 L973.6 90.4 L974.7 90.9 L975.9 91.4 L977.1 91.9 L978.3 92.4 L979.6 92.9 L980.8 93.5 L982.0 94.0 M729.3 238.8 L730.1 238.2 L730.9 237.5 L731.6 236.9 L732.4 236.2 L733.2 235.6 L734.0 235.0 L734.8 234.3 L735.6 233.7 L736.3 233.0 L737.1 232.4 L737.9 231.8 L738.7 231.1 L739.5 230.5 L740.3 229.8 L741.1 229.2 L741.9 228.6 L742.7 227.9 L743.5 227.3 L744.3 226.7 L745.1 226.0 L745.9 225.4 L746.7 224.8 L747.5 224.1 L748.3 223.5 L749.1 222.9 L750.0 222.2 L750.8 221.6 L751.6 221.0 L752.4 220.4 L753.2 219.7 L754.0 219.1 L754.9 218.5 L755.7 217.9 L756.5 217.2 L757.3 216.6 L758.1 216.0 L759.0 215.4 L759.8 214.8 L760.6 214.2 L761.5 213.5 L762.3 212.9 L763.1 212.3 L764.0 211.7 L764.8 211.1 L765.6 210.5 L766.5 209.9 L767.3 209.3 L768.1 208.6 L769.0 208.0 L769.8 207.4 L770.6 206.8 L771.5 206.2 L772.3 205.6 L773.2 205.0 L774.0 204.4 L774.9 203.8 L775.7 203.2 L776.6 202.6 L777.4 202.0 L778.2 201.4 L779.1 200.8 L779.9 200.3 L780.8 199.7 L781.6 199.1 L782.5 198.5 L783.3 197.9 L784.2 197.3 L785.0 196.7 L785.9 196.2 L786.7 195.6 L787.6 195.0 L788.5 194.4 L789.3 193.8 L790.2 193.3 L791.0 192.7 L791.9 192.1 L792.7 191.5 L793.6 191.0 L794.4 190.4 L795.3 189.8 L796.1 189.3 L797.0 188.7 L797.9 188.1 L798.7 187.6 L799.6 187.0 L800.4 186.5 L801.3 185.9 L802.1 185.4 L803.0 184.8 L803.9 184.3 L804.7 183.7 L805.6 183.2 L806.4 182.6 L807.3 182.1 L808.2 181.5 L809.0 181.0 L809.9 180.4 L810.7 179.9 L811.6 179.4 L812.4 178.8 L813.3 178.3 L814.2 177.8 L815.0 177.3 L815.9 176.7 L816.7 176.2 L817.6 175.7 L818.4 175.2 L819.3 174.7 L820.1 174.1 L821.0 173.6 L821.9 173.1 L822.7 172.6 L823.6 172.1 L824.4 171.6 L825.3 171.1 L826.1 170.6 L827.0 170.1 L827.8 169.6 L828.7 169.1 L829.5 168.6 L830.4 168.1 L831.2 167.6 L832.1 167.2 L832.9 166.7 L833.8 166.2 L834.6 165.7 L835.5 165.3 L836.3 164.8 L837.2 164.3 L838.0 163.9 L838.9 163.4 L839.7 162.9 L840.5 162.5 L841.4 162.0 L842.2 161.6 L843.1 161.1 L843.9 160.7 L844.7 160.2 L845.6 159.8 L846.4 159.4 L847.3 158.9 L848.1 158.5 L848.9 158.1 L849.8 157.6 L850.6 157.2 L851.4 156.8 L852.3 156.4 L853.1 156.0 L853.9 155.6 L854.8 155.2 L855.6 154.8 L856.4 154.4 L857.3 154.0 L858.1 153.6 L858.9 153.2 L859.7 152.8 L860.6 152.4 L861.4 152.0 L862.2 151.7 L863.0 151.3 L863.9 150.9 L864.7 150.5 L865.5 150.2 L866.3 149.8 L867.1 149.5 L868.0 149.1 L868.8 148.8 L869.6 148.4 L870.4 148.1 L871.2 147.8 L872.0 147.4 L872.8 147.1 L873.7 146.8 L874.5 146.5 L875.3 146.1 L876.1 145.8 L876.9 145.5 L877.7 145.2 L878.5 144.9 L879.3 144.6 L880.1 144.3 L880.9 144.1 L881.7 143.8 L882.5 143.5 L883.3 143.2 L884.2 143.0 L885.0 142.7 L885.8 142.4 L886.6 142.2 L887.4 141.9 L888.2 141.7 L889.0 141.4 L889.8 141.2 L890.6 141.0 L891.4 140.8 L892.2 140.5 L893.0 140.3 L893.8 140.1 L894.6 139.9 L895.4 139.7 L896.1 139.5 L896.9 139.3 L897.7 139.1 L898.5 138.9 L899.3 138.7 L900.1 138.6 L900.9 138.4 L901.7 138.2 L902.5 138.1 L903.3 137.9 L904.1 137.8 L904.9 137.6 L905.7 137.5 L906.5 137.4 L907.3 137.2 L908.1 137.1 L908.9 137.0 L909.7 136.9 L910.5 136.8 L911.3 136.7 L912.1 136.6 L912.9 136.5 L913.7 136.4 L914.5 136.3 L915.3 136.2 L916.1 136.2 L916.9 136.1 L917.7 136.1 L918.5 136.0 L919.3 136.0 L920.1 135.9 L920.9 135.9 L921.7 135.8 L922.5 135.8 L923.3 135.8 L924.1 135.8 L924.9 135.8 L925.7 135.8 L926.6 135.8 L927.4 135.8 L928.2 135.8 L929.0 135.8 L929.8 135.8 L930.6 135.8 L931.5 135.9 L932.3 135.9 L933.1 136.0 L933.9 136.0 L934.7 136.1 L935.6 136.1 L936.4 136.2 L937.2 136.2 L938.0 136.3 L938.9 136.4 L939.7 136.5 L940.5 136.6 L941.4 136.7 L942.2 136.8 L943.1 136.9 L943.9 137.0 M732.0 240.5 L732.8 240.0 L733.7 239.5 L734.5 238.9 L735.4 238.4 L736.2 237.9 L737.1 237.4 L737.9 236.9 L738.8 236.4 L739.6 235.9 L740.5 235.4 L741.3 234.9 L742.2 234.4 L743.0 233.9 L743.9 233.4 L744.7 232.9 L745.6 232.4 L746.4 231.9 L747.3 231.4 L748.1 230.9 L749.0 230.4 L749.9 229.9 L750.7 229.4 L751.6 229.0 L752.4 228.5 L753.3 228.0 L754.2 227.5 L755.0 227.0 L755.9 226.5 L756.7 226.0 L757.6 225.6 L758.5 225.1 L759.3 224.6 L760.2 224.1 L761.1 223.7 L761.9 223.2 L762.8 222.7 L763.7 222.2 L764.5 221.8 L765.4 221.3 L766.2 220.8 L767.1 220.4 L768.0 219.9 L768.8 219.4 L769.7 219.0 L770.6 218.5 L771.4 218.1 L772.3 217.6 L773.2 217.2 L774.0 216.7 L774.9 216.2 L775.8 215.8 L776.6 215.3 L777.5 214.9 L778.4 214.5 L779.3 214.0 L780.1 213.6 L781.0 213.1 L781.9 212.7 L782.7 212.2 L783.6 211.8 L784.5 211.4 L785.3 210.9 L786.2 210.5 L787.1 210.1 L787.9 209.7 L788.8 209.2 L789.7 208.8 L790.5 208.4 L791.4 208.0 L792.3 207.5 L793.1 207.1 L794.0 206.7 L794.9 206.3 L795.7 205.9 L796.6 205.5 L797.5 205.1 L798.3 204.7 L799.2 204.3 L800.1 203.9 L800.9 203.5 L801.8 203.1 L802.6 202.7 L803.5 202.3 L804.4 201.9 L805.2 201.5 L806.1 201.1 L807.0 200.7 L807.8 200.3 L808.7 199.9 L809.5 199.6 L810.4 199.2 L811.3 198.8 L812.1 198.4 L813.0 198.1 L813.8 197.7 L814.7 197.3 L815.6 197.0 L816.4 196.6 L817.3 196.2 L818.1 195.9 L819.0 195.5 L819.8 195.2 L820.7 194.8 L821.5 194.5 L822.4 194.1 L823.3 193.8 L824.1 193.4 L825.0 193.1 L825.8 192.7 L826.7 192.4 L827.5 192.1 L828.4 191.7 L829.2 191.4 L830.1 191.1 L830.9 190.8 L831.8 190.4 L832.6 190.1 L833.4 189.8 L834.3 189.5 L835.1 189.2 L836.0 188.9 L836.8 188.6 L837.7 188.3 L838.5 188.0 L839.4 187.7 L840.2 187.4 L841.0 187.1 L841.9 186.8 L842.7 186.5 L843.6 186.2 L844.4 185.9 L845.2 185.7 L846.1 185.4 L846.9 185.1 L847.7 184.8 L848.6 184.6 L849.4 184.3 L850.2 184.0 L851.1 183.8 L851.9 183.5 L852.7 183.3 L853.6 183.0 L854.4 182.8 L855.2 182.5 L856.1 182.3 L856.9 182.1 L857.7 181.8 L858.6 181.6 L859.4 181.4 L860.2 181.1 L861.0 180.9 L861.9 180.7 L862.7 180.5 L863.5 180.3 L864.3 180.0 L865.2 179.8 L866.0 179.6 L866.8 179.4 L867.6 179.2 L868.4 179.0 L869.3 178.8 L870.1 178.6 L870.9 178.5 L871.7 178.3 L872.5 178.1 L873.4 177.9 L874.2 177.7 L875.0 177.6 L875.8 177.4 L876.6 177.2 L877.4 177.1 L878.3 176.9 L879.1 176.8 L879.9 176.6 L880.7 176.5 L881.5 176.3 L882.3 176.2 L883.2 176.1 L884.0 175.9 L884.8 175.8 L885.6 175.7 L886.4 175.5 L887.2 175.4 L888.0 175.3 L888.8 175.2 L889.6 175.1 L890.5 175.0 L891.3 174.9 L892.1 174.8 L892.9 174.7 L893.7 174.6 L894.5 174.5 L895.3 174.4 L896.1 174.3 L896.9 174.2 L897.8 174.2 L898.6 174.1 L899.4 174.0 L900.2 174.0 L901.0 173.9 L901.8 173.8 L902.6 173.8 L903.4 173.7 L904.2 173.7 L905.0 173.6 L905.8 173.6 L906.7 173.6 L907.5 173.5 L908.3 173.5 L909.1 173.5 L909.9 173.5 L910.7 173.4 L911.5 173.4 L912.3 173.4 L913.1 173.4 L913.9 173.4 L914.8 173.4 L915.6 173.4 L916.4 173.4 L917.2 173.4 L918.0 173.4 L918.8 173.4 L919.6 173.5 L920.4 173.5 L921.3 173.5 L922.1 173.5 L922.9 173.6 L923.7 173.6 L924.5 173.7 L925.3 173.7 L926.1 173.7 L927.0 173.8 L927.8 173.9 L928.6 173.9 L929.4 174.0 L930.2 174.0 L931.1 174.1 L931.9 174.2 L932.7 174.3 L933.5 174.3 L934.3 174.4 L935.2 174.5 L936.0 174.6 L936.8 174.7 L937.6 174.8 L938.4 174.9 L939.3 175.0 L940.1 175.1 L940.9 175.2 L941.7 175.3 L942.6 175.5 L943.4 175.6 L944.2 175.7 L945.1 175.8 L945.9 176.0 L946.7 176.1 L947.6 176.2 L948.4 176.4 L949.2 176.5 L950.1 176.7 L950.9 176.8 L951.7 177.0 L952.6 177.1 L953.4 177.3 M733.0 243.0 L733.8 242.4 L734.6 241.9 L735.4 241.3 L736.2 240.7 L737.0 240.1 L737.8 239.6 L738.7 239.0 L739.5 238.4 L740.3 237.9 L741.1 237.3 L741.9 236.8 L742.7 236.2 L743.6 235.6 L744.4 235.1 L745.2 234.5 L746.0 233.9 L746.8 233.4 L747.7 232.8 L748.5 232.3 L749.3 231.7 L750.1 231.2 L751.0 230.6 L751.8 230.1 L752.6 229.5 L753.5 229.0 L754.3 228.4 L755.1 227.9 L756.0 227.3 L756.8 226.8 L757.6 226.2 L758.5 225.7 L759.3 225.1 L760.1 224.6 L761.0 224.0 L761.8 223.5 L762.7 223.0 L763.5 222.4 L764.3 221.9 L765.2 221.4 L766.0 220.8 L766.9 220.3 L767.7 219.8 L768.5 219.2 L769.4 218.7 L770.2 218.2 L771.1 217.6 L771.9 217.1 L772.8 216.6 L773.6 216.1 L774.5 215.6 L775.3 215.0 L776.2 214.5 L777.0 214.0 L777.9 213.5 L778.7 213.0 L779.6 212.4 L780.4 211.9 L781.3 211.4 L782.1 210.9 L783.0 210.4 L783.8 209.9 L784.7 209.4 L785.5 208.9 L786.4 208.4 L787.2 207.9 L788.1 207.4 L788.9 206.9 L789.8 206.4 L790.6 205.9 L791.5 205.4 L792.3 204.9 L793.2 204.4 L794.0 203.9 L794.9 203.5 L795.7 203.0 L796.6 202.5 L797.5 202.0 L798.3 201.5 L799.2 201.0 L800.0 200.6 L800.9 200.1 L801.7 199.6 L802.6 199.1 L803.4 198.7 L804.3 198.2 L805.1 197.7 L806.0 197.3 L806.8 196.8 L807.7 196.4 L808.5 195.9 L809.4 195.4 L810.2 195.0 L811.1 194.5 L811.9 194.1 L812.8 193.6 L813.6 193.2 L814.5 192.7 L815.3 192.3 L816.2 191.9 L817.0 191.4 L817.9 191.0 L818.7 190.6 L819.6 190.1 L820.4 189.7 L821.3 189.3 L822.1 188.8 L823.0 188.4 L823.8 188.0 L824.7 187.6 L825.5 187.2 L826.4 186.7 L827.2 186.3 L828.0 185.9 L828.9 185.5 L829.7 185.1 L830.6 184.7 L831.4 184.3 L832.3 183.9 L833.1 183.5 L833.9 183.1 L834.8 182.7 L835.6 182.3 L836.5 181.9 L837.3 181.6 L838.1 181.2 L839.0 180.8 L839.8 180.4 L840.7 180.1 L841.5 179.7 L842.3 179.3 L843.2 179.0 L844.0 178.6 L844.8 178.2 L845.7 177.9 L846.5 177.5 L847.3 177.2 L848.2 176.8 L849.0 176.5 L849.8 176.1 L850.6 175.8 L851.5 175.4 L852.3 175.1 L853.1 174.8 L854.0 174.5 L854.8 174.1 L855.6 173.8 L856.4 173.5 L857.3 173.2 L858.1 172.9 L858.9 172.5 L859.7 172.2 L860.6 171.9 L861.4 171.6 L862.2 171.3 L863.0 171.0 L863.8 170.7 L864.7 170.5 L865.5 170.2 L866.3 169.9 L867.1 169.6 L867.9 169.3 L868.7 169.1 L869.6 168.8 L870.4 168.5 L871.2 168.3 L872.0 168.0 L872.8 167.7 L873.6 167.5 L874.4 167.2 L875.3 167.0 L876.1 166.8 L876.9 166.5 L877.7 166.3 L878.5 166.0 L879.3 165.8 L880.1 165.6 L880.9 165.4 L881.7 165.2 L882.5 164.9 L883.4 164.7 L884.2 164.5 L885.0 164.3 L885.8 164.1 L886.6 163.9 L887.4 163.7 L888.2 163.5 L889.0 163.4 L889.8 163.2 L890.6 163.0 L891.4 162.8 L892.2 162.7 L893.0 162.5 L893.8 162.3 L894.6 162.2 L895.4 162.0 L896.2 161.9 L897.0 161.7 L897.8 161.6 L898.6 161.4 L899.4 161.3 L900.2 161.2 L901.0 161.1 L901.8 160.9 L902.6 160.8 L903.5 160.7 L904.3 160.6 L905.1 160.5 L905.9 160.4 L906.7 160.3 L907.5 160.2 L908.3 160.1 L909.1 160.0 L909.9 159.9 L910.7 159.9 L911.5 159.8 L912.3 159.7 L913.1 159.6 L913.9 159.6 L914.7 159.5 L915.5 159.5 L916.3 159.4 L917.1 159.4 L917.9 159.3 L918.7 159.3 L919.5 159.3 L920.3 159.2 L921.1 159.2 L922.0 159.2 L922.8 159.2 L923.6 159.2 L924.4 159.2 L925.2 159.2 L926.0 159.2 L926.8 159.2 L927.6 159.2 L928.4 159.2 L929.3 159.2 L930.1 159.2 L930.9 159.2 L931.7 159.3 L932.5 159.3 L933.3 159.3 L934.2 159.4 L935.0 159.4 L935.8 159.5 L936.6 159.5 L937.4 159.6 L938.3 159.7 L939.1 159.7 L939.9 159.8 L940.7 159.9 L941.6 160.0 L942.4 160.0 L943.2 160.1 L944.0 160.2 L944.9 160.3 L945.7 160.4 L946.5 160.5 L947.4 160.6 L948.2 160.7 L949.0 160.8 L949.9 161.0 L950.7 161.1 L951.6 161.2 L952.4 161.3 L953.2 161.5 L954.1 161.6 L954.9 161.8 L955.8 161.9 L956.6 162.1 L957.5 162.2 L958.3 162.4 L959.2 162.5 L960.0 162.7 L960.9 162.9 L961.7 163.0 L962.6 163.2 L963.4 163.4 L964.3 163.6 L965.1 163.8 L966.0 164.0 L966.9 164.2 L967.7 164.4 L968.6 164.6 L969.5 164.8 L970.3 165.0 L971.2 165.2 L972.1 165.4 L972.9 165.6 L973.8 165.9 L974.7 166.1 L975.6 166.3 L976.4 166.6 L977.3 166.8 L978.2 167.1 L979.1 167.3 L980.0 167.5 L980.9 167.8 L981.7 168.1 L982.6 168.3 L983.5 168.6 L984.4 168.8 L985.3 169.1 L986.2 169.4 L987.1 169.7 L988.0 169.9 L988.9 170.2 L989.8 170.5 L990.7 170.8 L991.6 171.1 L992.5 171.4 L993.4 171.7 L994.3 172.0 L995.2 172.3 L996.1 172.6 L997.0 172.9 L997.9 173.2 L998.8 173.6 L999.7 173.9 L1000.6 174.2 L1001.6 174.5 L1002.5 174.9 L1003.4 175.2 L1004.3 175.5 L1005.2 175.9 L1006.2 176.2 L1007.1 176.5 L1008.0 176.9 L1008.9 177.2 L1009.9 177.6 L1010.8 178.0 L1011.7 178.3 L1012.6 178.7 L1013.6 179.0 L1014.5 179.4 L1015.4 179.8 L1016.4 180.1 L1017.3 180.5 L1018.2 180.9 L1019.2 181.3 L1020.1 181.7 L1021.0 182.0 L1022.0 182.4 L1022.9 182.8 L1023.9 183.2 L1024.8 183.6 L1025.8 184.0 L1026.7 184.4 L1027.6 184.8 L1028.6 185.2 L1029.5 185.6 L1030.5 186.0 L1031.4 186.4 L1032.4 186.8 L1033.3 187.3 L1034.3 187.7 L1035.2 188.1 L1036.2 188.5 L1037.1 188.9 L1038.1 189.4 L1039.0 189.8 L1040.0 190.2 L1041.0 190.7 L1041.9 191.1 L1042.9 191.5 L1043.8 192.0 L1044.8 192.4 L1045.7 192.8 L1046.7 193.3 L1047.7 193.7 L1048.6 194.2 L1049.6 194.6 L1050.5 195.1 L1051.5 195.5 L1052.5 196.0 L1053.4 196.5 L1054.4 196.9 L1055.3 197.4 L1056.3 197.9 L1057.3 198.3 L1058.2 198.8 L1059.2 199.3 L1060.1 199.7 L1061.1 200.2 L1062.1 200.7 L1063.0 201.2 L1064.0 201.6 L1065.0 202.1 L1065.9 202.6 L1066.9 203.1 L1067.8 203.6 L1068.8 204.0 L1069.8 204.5 L1070.7 205.0 L1071.7 205.5 L1072.7 206.0 L1073.6 206.5 L1074.6 207.0 L1075.5 207.5 L1076.5 208.0 L1077.5 208.5 L1078.4 209.0 L1079.4 209.5 L1080.3 210.0 L1081.3 210.5 L1082.3 211.0 L1083.2 211.5 L1084.2 212.1 L1085.1 212.6 L1086.1 213.1 L1087.0 213.6 L1088.0 214.1 L1089.0 214.6 L1089.9 215.1 L1090.9 215.7 L1091.8 216.2 L1092.8 216.7 L1093.7 217.2 L1094.7 217.8 L1095.6 218.3 L1096.6 218.8 L1097.5 219.3 L1098.5 219.9 L1099.4 220.4 L1100.4 220.9 L1101.3 221.5 L1102.3 222.0 L1103.2 222.6 L1104.1 223.1 L1105.1 223.6 L1106.0 224.2 L1107.0 224.7" fill="none" stroke="#d21ef5" stroke-width="1.5" stroke-dasharray="1.4 1.9"/>
<path d="M714.7 315.8 L714.7 315.0 L714.8 314.2 L714.8 313.4 L714.9 312.6 L714.9 311.7 L715.0 310.9 L715.0 310.1 L715.1 309.3 L715.1 308.5 L715.2 307.7 L715.3 306.9 L715.4 306.1 L715.4 305.3 L715.5 304.4 L715.6 303.6 L715.7 302.8 L715.8 302.0 L715.9 301.2 L716.0 300.4 L716.1 299.6 L716.2 298.8 L716.3 298.0 L716.4 297.1 L716.5 296.3 L716.7 295.5 L716.8 294.7 L716.9 293.9 L717.0 293.1 L717.2 292.3 L717.3 291.5 L717.5 290.6 L717.6 289.8 L717.8 289.0 L717.9 288.2 L718.1 287.4 L718.2 286.6 L718.4 285.8 L718.5 285.0 L718.7 284.2 L718.9 283.3 L719.1 282.5 L719.3 281.7 L719.4 280.9 L719.6 280.1 L719.8 279.3 L720.0 278.5 L720.2 277.7 L720.4 276.9 L720.6 276.0 L720.8 275.2 L721.0 274.4 L721.2 273.6 L721.5 272.8 L721.7 272.0 L721.9 271.2 L722.1 270.4 L722.4 269.6 L722.6 268.7 L722.8 267.9 L723.1 267.1 L723.3 266.3 L723.6 265.5 L723.8 264.7 L724.1 263.9 L724.4 263.1 L724.6 262.3 L724.9 261.4 L725.2 260.6 L725.4 259.8 L725.7 259.0 L726.0 258.2 L726.3 257.4 L726.5 256.6 L726.8 255.8 L727.1 255.0 L727.4 254.1 L727.7 253.3 L728.0 252.5 L728.3 251.7 L728.6 250.9 L729.0 250.1 L729.3 249.3 L729.6 248.5 L729.9 247.6 L730.2 246.8 L730.6 246.0 L730.9 245.2 L731.2 244.4 L731.6 243.6 L731.9 242.8 L732.3 242.0 L732.6 241.2 L733.0 240.3 L733.3 239.5 L733.7 238.7 L734.0 237.9 L734.4 237.1 L734.8 236.3 L735.1 235.5 L735.5 234.7 L735.9 233.9 L736.3 233.0 L736.7 232.2 L737.1 231.4 L737.4 230.6 L737.8 229.8 L738.2 229.0 L738.6 228.2 L739.0 227.4 L739.4 226.6 L739.8 225.7 L740.3 224.9 L740.7 224.1 L741.1 223.3 L741.5 222.5 L741.9 221.7 L742.4 220.9 L742.8 220.1 L743.2 219.3 L743.7 218.4 L744.1 217.6 L744.5 216.8 L745.0 216.0 L745.4 215.2 L745.9 214.4 L746.3 213.6 L746.8 212.8 L747.3 212.0 L747.7 211.1 L748.2 210.3 L748.7 209.5 L749.1 208.7 L749.6 207.9 L750.1 207.1 L750.6 206.3 L751.0 205.5 L751.5 204.6 L752.0 203.8 L752.5 203.0 L753.0 202.2 L753.5 201.4 L754.0 200.6 L754.5 199.8 L755.0 199.0 L755.5 198.2 L756.0 197.3 L756.6 196.5 L757.1 195.7 L757.6 194.9 L758.1 194.1 L758.6 193.3 L759.2 192.5 L759.7 191.7 L760.2 190.9 L760.8 190.0 L761.3 189.2 L761.8 188.4 L762.4 187.6 L762.9 186.8 L763.5 186.0 L764.0 185.2 L764.6 184.4 L765.2 183.6 L765.7 182.7 L766.3 181.9 L766.8 181.1 L767.4 180.3 L768.0 179.5 L768.6 178.7 L769.1 177.9 L769.7 177.1 L770.3 176.3 L770.9 175.4 L771.5 174.6 L772.0 173.8 L772.6 173.0 L773.2 172.2 L773.8 171.4 L774.4 170.6 L775.0 169.8 L775.6 169.0 L776.2 168.1 L776.8 167.3 L777.4 166.5 L778.1 165.7 L778.7 164.9 L779.3 164.1 L779.9 163.3 L780.5 162.5 L781.2 161.7 L781.8 160.8 L782.4 160.0 L783.0 159.2 L783.7 158.4 L784.3 157.6 L784.9 156.8 L785.6 156.0 L786.2 155.2 L786.9 154.4 L787.5 153.5 L788.2 152.7 L788.8 151.9 L789.5 151.1 L790.1 150.3 L790.8 149.5 L791.4 148.7 L792.1 147.9 L792.8 147.1 L793.4 146.2 L794.1 145.4 L794.8 144.6 L795.4 143.8 L796.1 143.0 L796.8 142.2 L797.5 141.4 L798.1 140.6 L798.8 139.8 L799.5 138.9 L800.2 138.1 L800.9 137.3 L801.6 136.5 L802.3 135.7 L803.0 134.9 L803.7 134.1 L804.4 133.3 L805.1 132.5 L805.8 131.6 L806.5 130.8 L807.2 130.0 L807.9 129.2 L808.6 128.4 L809.3 127.6 L810.0 126.8 L810.7 126.0 L811.4 125.2 L812.1 124.3 L812.9 123.5 L813.6 122.7 L814.3 121.9 L815.0 121.1 L815.7 120.3 L816.5 119.5 L817.2 118.7 L817.9 117.9 L818.7 117.0 L819.4 116.2 L820.1 115.4 L820.9 114.6 L821.6 113.8 L822.3 113.0 L823.1 112.2 L823.8 111.4 L824.6 110.6 L825.3 109.7 L826.1 108.9 L826.8 108.1 L827.6 107.3 L828.3 106.5 L829.1 105.7 L829.8 104.9 L830.6 104.1 L831.3 103.3 L832.1 102.5 L832.8 101.6 L833.6 100.8 L834.4 100.0 L835.1 99.2 L835.9 98.4 L836.7 97.6 L837.4 96.8 L838.2 96.0 L839.0 95.2 L839.7 94.3 L840.5 93.5 L841.3 92.7 L842.1 91.9 L842.8 91.1 L843.6 90.3 L844.4 89.5 L845.2 88.7 L845.9 87.9 L846.7 87.1 L847.5 86.2 L848.3 85.4 L849.1 84.6 L849.9 83.8 L850.6 83.0 L851.4 82.2 L852.2 81.4 L853.0 80.6 L853.8 79.8 L854.6 79.0 L855.4 78.1 L856.2 77.3 L857.0 76.5 L857.7 75.7 L858.5 74.9 L859.3 74.1 L860.1 73.3 L860.9 72.5 L861.7 71.7 L862.5 70.9 L863.3 70.0 L864.1 69.2 L864.9 68.4 L865.7 67.6 L866.5 66.8 L867.3 66.0 L868.1 65.2 L868.9 64.4 L869.7 63.6 L870.5 62.8 L871.3 62.0 L872.1 61.2 L872.9 60.3 L873.7 59.5 L874.6 58.7 L875.4 57.9 L876.2 57.1 L877.0 56.3 L877.8 55.5 L878.6 54.7 L879.4 53.9 L880.2 53.1 L881.0 52.3 L881.8 51.5 L882.6 50.7 L883.4 49.9 L884.2 49.1 L885.0 48.3 L885.8 47.5 L886.7 46.7 L887.5 45.9 L888.3 45.1 L889.1 44.3 L889.9 43.5 L890.7 42.7 L891.5 41.9 L892.3 41.1 L893.1 40.3 L893.9 39.5 L894.6 38.7 L895.4 38.0 L896.2 37.2 L897.0 36.4 L897.8 35.7 L898.5 35.0 L899.3 34.2 L900.0 33.6 L900.8 32.9 L901.5 32.3 L902.2 31.8 L902.8 31.4 L903.6 31.1 L904.3 31.1 L905.2 31.2 L906.3 31.5 L907.5 32.0 L908.8 32.5 L910.3 33.2 L911.7 33.8 L913.3 34.5 L914.9 35.3 L916.4 36.0 L918.1 36.8 L919.7 37.5 L921.4 38.3 M714.7 315.8 L715.1 315.1 L715.5 314.4 L715.9 313.6 L716.3 312.9 L716.7 312.2 L717.1 311.5 L717.5 310.8 L717.9 310.0 L718.4 309.3 L718.8 308.6 L719.2 307.9 L719.6 307.2 L720.0 306.5 L720.5 305.7 L720.9 305.0 L721.3 304.3 L721.8 303.6 L722.2 302.9 L722.7 302.1 L723.1 301.4 L723.6 300.7 L724.0 300.0 L724.5 299.3 L724.9 298.6 L725.4 297.8 L725.8 297.1 L726.3 296.4 L726.8 295.7 L727.2 295.0 L727.7 294.3 L728.2 293.5 L728.7 292.8 L729.2 292.1 L729.6 291.4 L730.1 290.7 L730.6 290.0 L731.1 289.2 L731.6 288.5 L732.1 287.8 L732.6 287.1 L733.1 286.4 L733.6 285.7 L734.1 284.9 L734.6 284.2 L735.1 283.5 L735.6 282.8 L736.1 282.1 L736.7 281.4 L737.2 280.7 L737.7 279.9 L738.2 279.2 L738.8 278.5 L739.3 277.8 L739.8 277.1 L740.4 276.4 L740.9 275.7 L741.4 274.9 L742.0 274.2 L742.5 273.5 L743.1 272.8 L743.6 272.1 L744.2 271.4 L744.7 270.7 L745.3 270.0 L745.8 269.2 L746.4 268.5 L746.9 267.8 L747.5 267.1 L748.1 266.4 L748.6 265.7 L749.2 265.0 L749.8 264.3 L750.4 263.6 L750.9 262.9 L751.5 262.1 L752.1 261.4 L752.7 260.7 L753.3 260.0 L753.8 259.3 L754.4 258.6 L755.0 257.9 L755.6 257.2 L756.2 256.5 L756.8 255.8 L757.4 255.1 L758.0 254.4 L758.6 253.7 L759.2 253.0 L759.8 252.2 L760.4 251.5 L761.1 250.8 L761.7 250.1 L762.3 249.4 L762.9 248.7 L763.5 248.0 L764.1 247.3 L764.8 246.6 L765.4 245.9 L766.0 245.2 L766.6 244.5 L767.3 243.8 L767.9 243.1 L768.5 242.4 L769.2 241.7 L769.8 241.0 L770.4 240.3 L771.1 239.6 L771.7 238.9 L772.4 238.2 L773.0 237.5 L773.7 236.8 L774.3 236.1 L775.0 235.4 L775.6 234.8 L776.3 234.1 L776.9 233.4 L777.6 232.7 L778.2 232.0 L778.9 231.3 L779.6 230.6 L780.2 229.9 L780.9 229.2 L781.6 228.5 L782.2 227.8 L782.9 227.1 L783.6 226.5 L784.2 225.8 L784.9 225.1 L785.6 224.4 L786.3 223.7 L786.9 223.0 L787.6 222.3 L788.3 221.6 L789.0 221.0 L789.7 220.3 L790.3 219.6 L791.0 218.9 L791.7 218.2 L792.4 217.6 L793.1 216.9 L793.8 216.2 L794.5 215.5 L795.2 214.8 L795.9 214.2 L796.6 213.5 L797.3 212.8 L798.0 212.1 L798.6 211.4 L799.3 210.8 L800.0 210.1 L800.8 209.4 L801.5 208.8 L802.2 208.1 L802.9 207.4 L803.6 206.7 L804.3 206.1 L805.0 205.4 L805.7 204.7 L806.4 204.1 L807.1 203.4 L807.8 202.7 L808.5 202.1 L809.2 201.4 L810.0 200.8 L810.7 200.1 L811.4 199.4 L812.1 198.8 L812.8 198.1 L813.5 197.5 L814.3 196.8 L815.0 196.1 L815.7 195.5 L816.4 194.8 L817.1 194.2 L817.9 193.5 L818.6 192.9 L819.3 192.2 L820.0 191.6 L820.8 190.9 L821.5 190.3 L822.2 189.6 L822.9 189.0 L823.7 188.3 L824.4 187.7 L825.1 187.1 L825.9 186.4 L826.6 185.8 L827.3 185.1 L828.0 184.5 L828.8 183.9 L829.5 183.2 L830.2 182.6 L831.0 182.0 L831.7 181.3 L832.4 180.7 L833.2 180.1 L833.9 179.5 L834.6 178.8 L835.4 178.2 L836.1 177.6 L836.8 177.0 L837.6 176.4 L838.3 175.7 L839.0 175.1 L839.8 174.5 L840.5 173.9 L841.2 173.3 L842.0 172.7 L842.7 172.1 L843.5 171.5 L844.2 170.8 L844.9 170.2 L845.7 169.6 L846.4 169.0 L847.1 168.4 L847.9 167.8 L848.6 167.2 L849.3 166.7 L850.1 166.1 L850.8 165.5 L851.6 164.9 L852.3 164.3 L853.0 163.7 L853.8 163.1 L854.5 162.5 L855.2 162.0 L856.0 161.4 L856.7 160.8 L857.4 160.2 L858.2 159.7 L858.9 159.1 L859.6 158.5 L860.4 158.0 L861.1 157.4 L861.9 156.8 L862.6 156.3 L863.3 155.7 L864.1 155.2 L864.8 154.6 L865.5 154.1 L866.3 153.5 L867.0 153.0 L867.7 152.4 L868.4 151.9 L869.2 151.4 L869.9 150.8 L870.6 150.3 L871.4 149.8 L872.1 149.3 L872.8 148.7 L873.6 148.2 L874.3 147.7 L875.0 147.2 L875.8 146.7 L876.5 146.2 L877.2 145.6 L877.9 145.1 L878.7 144.6 L879.4 144.1 L880.1 143.7 L880.8 143.2 L881.6 142.7 L882.3 142.2 L883.0 141.7 L883.7 141.2 L884.5 140.8 L885.2 140.3 L885.9 139.8 L886.6 139.3 L887.4 138.9 L888.1 138.4 L888.8 138.0 L889.5 137.5 L890.3 137.1 L891.0 136.6 L891.7 136.2 L892.4 135.8 L893.1 135.3 L893.9 134.9 L894.6 134.5 L895.3 134.1 L896.0 133.6 L896.7 133.2 L897.5 132.8 L898.2 132.4 L898.9 132.0 L899.6 131.6 L900.3 131.2 L901.1 130.8 L901.8 130.5 L902.5 130.1 L903.2 129.7 L903.9 129.3 L904.6 129.0 L905.4 128.6 L906.1 128.3 L906.8 127.9 L907.5 127.6 L908.2 127.2 L909.0 126.9 L909.7 126.6 M714.7 315.8 L715.1 315.1 L715.6 314.4 L716.0 313.7 L716.5 313.0 L716.9 312.3 L717.3 311.6 L717.8 310.9 L718.2 310.2 L718.7 309.5 L719.2 308.8 L719.6 308.1 L720.1 307.4 L720.5 306.7 L721.0 306.0 L721.5 305.3 L722.0 304.6 L722.4 303.9 L722.9 303.2 L723.4 302.5 L723.9 301.8 L724.4 301.2 L724.8 300.5 L725.3 299.8 L725.8 299.1 L726.3 298.4 L726.8 297.7 L727.3 297.0 L727.8 296.3 L728.3 295.6 L728.8 294.9 L729.3 294.2 L729.9 293.5 L730.4 292.8 L730.9 292.1 L731.4 291.4 L731.9 290.7 L732.5 290.0 L733.0 289.3 L733.5 288.6 L734.0 287.9 L734.6 287.2 L735.1 286.5 L735.6 285.9 L736.2 285.2 L736.7 284.5 L737.3 283.8 L737.8 283.1 L738.4 282.4 L738.9 281.7 L739.5 281.0 L740.0 280.3 L740.6 279.6 L741.1 278.9 L741.7 278.2 L742.3 277.5 L742.8 276.8 L743.4 276.2 L744.0 275.5 L744.6 274.8 L745.1 274.1 L745.7 273.4 L746.3 272.7 L746.9 272.0 L747.5 271.3 L748.0 270.6 L748.6 270.0 L749.2 269.3 L749.8 268.6 L750.4 267.9 L751.0 267.2 L751.6 266.5 L752.2 265.8 L752.8 265.1 L753.4 264.5 L754.0 263.8 L754.6 263.1 L755.2 262.4 L755.8 261.7 L756.4 261.0 L757.1 260.3 L757.7 259.7 L758.3 259.0 L758.9 258.3 L759.5 257.6 L760.2 256.9 L760.8 256.2 L761.4 255.6 L762.0 254.9 L762.7 254.2 L763.3 253.5 L763.9 252.8 L764.6 252.2 L765.2 251.5 L765.9 250.8 L766.5 250.1 L767.2 249.4 L767.8 248.8 L768.4 248.1 L769.1 247.4 L769.7 246.7 L770.4 246.1 L771.0 245.4 L771.7 244.7 L772.4 244.0 L773.0 243.4 L773.7 242.7 L774.3 242.0 L775.0 241.3 L775.7 240.7 L776.3 240.0 L777.0 239.3 L777.7 238.7 L778.3 238.0 L779.0 237.3 L779.7 236.6 L780.4 236.0 L781.0 235.3 L781.7 234.6 L782.4 234.0 L783.1 233.3 L783.7 232.6 L784.4 232.0 L785.1 231.3 L785.8 230.6 L786.5 230.0 L787.2 229.3 L787.9 228.7 L788.6 228.0 L789.2 227.3 L789.9 226.7 L790.6 226.0 L791.3 225.4 L792.0 224.7 L792.7 224.0 L793.4 223.4 L794.1 222.7 L794.8 222.1 L795.5 221.4 L796.2 220.8 L796.9 220.1 L797.6 219.5 L798.3 218.8 L799.0 218.2 L799.8 217.5 L800.5 216.9 L801.2 216.2 L801.9 215.6 L802.6 214.9 L803.3 214.3 L804.0 213.6 L804.7 213.0 L805.5 212.3 L806.2 211.7 L806.9 211.1 L807.6 210.4 L808.3 209.8 L809.0 209.1 L809.8 208.5 L810.5 207.9 L811.2 207.2 L811.9 206.6 L812.6 206.0 L813.4 205.3 L814.1 204.7 L814.8 204.1 L815.5 203.4 L816.3 202.8 L817.0 202.2 L817.7 201.5 L818.5 200.9 L819.2 200.3 L819.9 199.7 L820.6 199.0 L821.4 198.4 L822.1 197.8 L822.8 197.2 L823.6 196.6 L824.3 196.0 L825.0 195.3 L825.8 194.7 L826.5 194.1 L827.2 193.5 L828.0 192.9 L828.7 192.3 L829.4 191.7 L830.2 191.1 L830.9 190.5 L831.7 189.9 L832.4 189.2 L833.1 188.6 L833.9 188.0 L834.6 187.4 L835.3 186.8 L836.1 186.3 L836.8 185.7 L837.6 185.1 L838.3 184.5 L839.0 183.9 L839.8 183.3 L840.5 182.7 L841.3 182.1 L842.0 181.5 L842.7 181.0 L843.5 180.4 L844.2 179.8 L845.0 179.2 L845.7 178.6 L846.4 178.1 L847.2 177.5 L847.9 176.9 L848.7 176.4 L849.4 175.8 L850.1 175.2 L850.9 174.7 L851.6 174.1 L852.4 173.5" fill="none" stroke="#ee82ee" stroke-width="1.2" stroke-dasharray="2.2 0.9"/>
<path d="M438.3 244.3 L439.0 243.5 L439.6 242.7 L440.3 241.9 L441.0 241.1 L441.7 240.4 L442.4 239.6 L443.1 238.8 L443.8 238.0 L444.5 237.2 L445.3 236.4 L446.0 235.6 L446.7 234.8 L447.5 234.1 L448.3 233.3 L449.0 232.5 L449.8 231.7 L450.6 230.9 L451.4 230.1 L452.2 229.3 L453.0 228.6 L453.8 227.8 L454.7 227.0 L455.5 226.2 L456.3 225.4 L457.2 224.6 L458.0 223.8 L458.9 223.1 L459.8 222.3 L460.7 221.5 L461.6 220.7 L462.4 219.9 L463.4 219.1 L464.3 218.3 L465.2 217.6 L466.1 216.8 L467.0 216.0 L468.0 215.2 L468.9 214.4 L469.9 213.6 L470.9 212.9 L471.8 212.1 L472.8 211.3 L473.8 210.5 L474.8 209.7 L475.8 208.9 L476.8 208.2 L477.8 207.4 L478.8 206.6 L479.9 205.8 L480.9 205.0 L481.9 204.3 L483.0 203.5 L484.1 202.7 L485.1 201.9 L486.2 201.1 L487.3 200.3 L488.4 199.6 L489.4 198.8 L490.5 198.0 L491.7 197.2 L492.8 196.4 L493.9 195.7 L495.0 194.9 L496.2 194.1 L497.3 193.3 L498.4 192.6 L499.6 191.8 L500.8 191.0 L501.9 190.2 L503.1 189.4 L504.3 188.7 L505.5 187.9 L506.7 187.1 L507.9 186.3 L509.1 185.6 L510.3 184.8 L511.5 184.0 L512.7 183.2 L513.9 182.5 L515.2 181.7 L516.4 180.9 L517.7 180.1 L518.9 179.4 L520.2 178.6 L521.5 177.8 L522.7 177.0 L524.0 176.3 L525.3 175.5 L526.6 174.7 L527.9 174.0 L529.2 173.2 L530.5 172.4 L531.8 171.6 L533.1 170.9 L534.4 170.1 L535.8 169.3 L537.1 168.6 L538.5 167.8 L539.8 167.0 L541.2 166.3 L542.5 165.5 L543.9 164.7 L545.2 164.0 L546.6 163.2 L548.0 162.4 L549.4 161.7 L550.8 160.9 L552.2 160.1 L553.5 159.4 L555.0 158.6 L556.4 157.8 L557.8 157.1 L559.2 156.3 L560.6 155.6 L562.0 154.8 L563.5 154.0 L564.9 153.3 L566.3 152.5 L567.8 151.8 L569.2 151.0 L570.7 150.2 L572.1 149.5 L573.6 148.7 L575.0 148.0 L576.5 147.2 L578.0 146.5 L579.5 145.7 L580.9 145.0 L582.4 144.2 L583.9 143.5 L585.4 142.7 L586.9 142.0 L588.4 141.2 L589.9 140.5 L591.4 139.7 L592.9 139.0 L594.4 138.2 L595.9 137.5 L597.4 136.7 L598.9 136.0 L600.5 135.2 L602.0 134.5 L603.5 133.8 L605.0 133.0 L606.6 132.3 L608.1 131.6 L609.6 130.8 L611.1 130.1 L612.7 129.3 L614.2 128.6 L615.8 127.9 L617.3 127.1 L618.8 126.4 L620.4 125.7 L621.9 125.0 L623.5 124.2 L625.0 123.5 L626.6 122.8 L628.1 122.1 L629.7 121.3 L631.2 120.6 L632.8 119.9 L634.3 119.2 L635.9 118.5 L637.4 117.8 L639.0 117.0 L640.5 116.3 L642.1 115.6 L643.6 114.9 L645.2 114.2 L646.7 113.5 L648.3 112.8 L649.8 112.1 L651.3 111.4 L652.9 110.7 L654.4 110.0 L656.0 109.3 L657.5 108.6 L659.0 107.9 M1144.1 107.2 L1141.7 106.6 L1139.4 105.9 L1137.0 105.2 L1134.6 104.5 L1132.2 103.8 L1129.8 103.2 L1127.5 102.5 L1125.1 101.8 L1122.7 101.2 L1120.4 100.5 L1118.0 99.9 L1115.7 99.2 L1113.3 98.6 L1111.0 97.9 L1108.7 97.3 L1106.4 96.6 L1104.1 96.0 L1101.8 95.3 L1099.5 94.7 L1097.2 94.1 L1094.9 93.5 L1092.6 92.8 L1090.4 92.2 L1088.1 91.6 L1085.9 91.0 L1083.7 90.4 L1081.4 89.8 L1079.2 89.2 L1077.0 88.6 L1074.9 88.0 L1072.7 87.5 L1070.5 86.9 L1068.4 86.3 L1066.3 85.8 L1064.1 85.2 L1062.1 84.6 L1060.0 84.1 L1057.9 83.6 L1055.8 83.0 L1053.8 82.5 L1051.8 82.0 L1049.8 81.5 L1047.8 81.0 L1045.9 80.5 L1043.9 80.0 L1042.0 79.5 L1040.1 79.0 L1038.2 78.6 L1036.4 78.1 L1034.5 77.7 L1032.7 77.2 L1030.9 76.8 L1029.1 76.4 L1027.4 76.0 L1025.7 75.6 L1024.0 75.2 L1022.3 74.8 L1020.7 74.5 L1019.1 74.1 L1017.5 73.8 L1016.0 73.4 L1014.4 73.1 L1012.9 72.8 L1011.5 72.5 L1010.0 72.2 L1008.6 72.0 L1007.3 71.7 L1005.9 71.5 L1004.6 71.2 L1003.3 71.0 L1002.1 70.8 L1000.9 70.6 L999.7 70.5 L998.5 70.3 L997.4 70.2 L996.3 70.0 L995.3 69.9 L994.2 69.8 L993.3 69.7 L992.3 69.7 L991.4 69.6 L990.5 69.6 L989.6 69.6 L988.8 69.6 L988.0 69.6 L987.3 69.6 L986.5 69.6 L985.8 69.7 L985.2 69.8 L984.5 69.9 L983.9 70.0 L983.4 70.1 L982.8 70.2 L982.3 70.4 L981.8 70.5 L981.3 70.7 L980.9 70.9 L980.4 71.1 L980.1 71.3 L979.7 71.5 L979.3 71.8 L979.0 72.1 L978.7 72.3 L978.4 72.6 L978.2 72.9 L977.9 73.2 L977.7 73.5 L977.5 73.9 L977.3 74.2 L977.2 74.6 L977.0 75.0 L976.9 75.3 L976.8 75.7 L976.7 76.1 L976.6 76.5 L976.5 77.0 L976.4 77.4 L976.4 77.8 L976.4 78.3 L976.4 78.7 L976.3 79.2 L976.3 79.7 L976.4 80.2 L976.4 80.6 L976.4 81.1 L976.5 81.6 L976.5 82.2 L976.6 82.7 L976.7 83.2 L976.7 83.7 L976.8 84.3 L976.9 84.8 L977.0 85.4 L977.1 85.9 L977.2 86.5 L977.4 87.1 L977.5 87.6 L977.6 88.2 L977.7 88.8 L977.9 89.4 L978.0 90.0 L978.2 90.6 L978.3 91.2 L978.5 91.8 L978.7 92.4 L978.8 93.0 L979.0 93.7 L979.2 94.3 L979.4 94.9 L979.5 95.5 L979.7 96.2 L979.9 96.8 L980.1 97.5 L980.3 98.1 M479.3 234.3 L479.8 233.6 L480.4 232.8 L480.9 232.1 L481.5 231.3 L482.1 230.6 L482.7 229.8 L483.2 229.1 L483.8 228.3 L484.4 227.6 L485.0 226.8 L485.6 226.1 L486.2 225.3 L486.9 224.6 L487.5 223.8 L488.1 223.1 L488.8 222.3 L489.4 221.6 L490.1 220.8 L490.7 220.1 L491.4 219.4 L492.0 218.6 L492.7 217.9 L493.4 217.1 L494.1 216.4 L494.8 215.6 L495.5 214.9 L496.2 214.2 L496.9 213.4 L497.6 212.7 L498.3 211.9 L499.1 211.2 L499.8 210.5 L500.5 209.7 L501.3 209.0 L502.0 208.2 L502.8 207.5 L503.6 206.8 L504.3 206.0 L505.1 205.3 L505.9 204.6 L506.7 203.8 L507.5 203.1 L508.3 202.3 L509.1 201.6 L509.9 200.9 L510.7 200.1 L511.5 199.4 L512.3 198.7 L513.2 197.9 L514.0 197.2 L514.8 196.5 L515.7 195.8 L516.5 195.0 L517.4 194.3 L518.2 193.6 L519.1 192.8 L520.0 192.1 L520.8 191.4 L521.7 190.7 L522.6 189.9 L523.5 189.2 L524.4 188.5 L525.3 187.8 L526.2 187.0 L527.1 186.3 L528.0 185.6 L528.9 184.9 L529.8 184.1 L530.8 183.4 L531.7 182.7 L532.6 182.0 L533.6 181.3 L534.5 180.5 L535.4 179.8 L536.4 179.1 L537.4 178.4 L538.3 177.7 L539.3 177.0 L540.2 176.3 L541.2 175.5 L542.2 174.8 L543.2 174.1 L544.1 173.4 L545.1 172.7 L546.1 172.0 L547.1 171.3 L548.1 170.6 L549.1 169.9 L550.1 169.2 L551.1 168.5 L552.1 167.8 L553.1 167.1 L554.1 166.4 L555.1 165.7 L556.2 165.0 L557.2 164.3 L558.2 163.6 L559.2 162.9 L560.3 162.2 L561.3 161.5 L562.3 160.8 L563.4 160.1 L564.4 159.4 L565.4 158.7 L566.5 158.0 L567.5 157.3 L568.6 156.7 L569.6 156.0 L570.7 155.3 L571.7 154.6 L572.8 153.9 L573.9 153.2 L574.9 152.6 L576.0 151.9 L577.0 151.2 L578.1 150.5 L579.2 149.9 L580.2 149.2 L581.3 148.5 L582.3 147.9 L583.4 147.2 L584.5 146.5 L585.5 145.9 L586.6 145.2 L587.7 144.5 L588.7 143.9 L589.8 143.2 L590.9 142.6 L591.9 141.9 L593.0 141.3 L594.1 140.6 L595.1 140.0 L596.2 139.3 L597.3 138.7 L598.3 138.0 L599.4 137.4 L600.4 136.8 L601.5 136.1 L602.6 135.5 L603.6 134.9 L604.7 134.2 L605.7 133.6 L606.8 133.0 L607.8 132.4 L608.9 131.7 L609.9 131.1 L610.9 130.5 L612.0 129.9 L613.0 129.3 L614.0 128.7 L615.0 128.1 L616.1 127.5 L617.1 126.9 L618.1 126.3 L619.1 125.7 L620.1 125.1 L621.1 124.5 L622.1 123.9 L623.1 123.3 L624.1 122.7 L625.0 122.2 L626.0 121.6 L627.0 121.0 L627.9 120.4 L628.9 119.9 L629.8 119.3 L630.8 118.8 L631.7 118.2 L632.6 117.7 L633.6 117.1 L634.5 116.6 M1168.7 116.0 L1166.6 115.5 L1164.5 115.0 L1162.4 114.4 L1160.3 113.9 L1158.2 113.4 L1156.2 112.9 L1154.1 112.4 L1152.1 111.9 L1150.1 111.4 L1148.1 110.9 L1146.1 110.4 L1144.1 109.9 L1142.1 109.4 L1140.1 108.9 L1138.2 108.5 L1136.2 108.0 L1134.3 107.5 L1132.4 107.1 L1130.5 106.6 L1128.6 106.2 L1126.7 105.7 L1124.8 105.3 L1123.0 104.9 L1121.1 104.4 L1119.3 104.0 L1117.5 103.6 L1115.7 103.2 L1114.0 102.8 L1112.2 102.4 L1110.5 102.0 L1108.7 101.7 L1107.0 101.3 L1105.3 100.9 L1103.7 100.6 L1102.0 100.2 L1100.4 99.9 L1098.7 99.5 L1097.1 99.2 L1095.6 98.9 L1094.0 98.5 L1092.4 98.2 L1090.9 97.9 L1089.4 97.6 L1087.9 97.4 L1086.5 97.1 L1085.0 96.8 L1083.6 96.5 L1082.2 96.3 L1080.8 96.1 L1079.4 95.8 L1078.1 95.6 L1076.8 95.4 L1075.5 95.2 L1074.2 95.0 L1072.9 94.8 L1071.7 94.6 L1070.5 94.4 L1069.3 94.2 L1068.1 94.1 L1066.9 93.9 L1065.8 93.8 L1064.7 93.7 L1063.6 93.5 L1062.6 93.4 L1061.5 93.3 L1060.5 93.2 L1059.5 93.2 L1058.5 93.1 L1057.6 93.0 L1056.6 93.0 L1055.7 92.9 L1054.8 92.9 L1054.0 92.9 L1053.1 92.9 L1052.3 92.9 L1051.5 92.9 L1050.7 92.9 L1050.0 92.9 L1049.2 92.9 L1048.5 93.0 L1047.8 93.0 L1047.2 93.1 L1046.5 93.2 L1045.9 93.2 L1045.3 93.3 L1044.7 93.4 L1044.1 93.6 L1043.5 93.7 L1043.0 93.8 L1042.5 93.9 L1042.0 94.1 L1041.5 94.2 L1041.0 94.4 L1040.6 94.6 L1040.2 94.8 L1039.8 95.0 L1039.4 95.2 L1039.0 95.4 L1038.7 95.6 L1038.3 95.8 L1038.0 96.1 L1037.7 96.3 L1037.4 96.6 L1037.1 96.8 L1036.8 97.1 L1036.6 97.4 L1036.4 97.7 L1036.1 98.0 L1035.9 98.3 L1035.7 98.6 L1035.6 98.9 L1035.4 99.2 L1035.2 99.5 L1035.1 99.9 L1035.0 100.2 L1034.8 100.6 L1034.7 100.9 L1034.6 101.3 L1034.6 101.7 L1034.5 102.1 L1034.4 102.4 L1034.4 102.8 L1034.3 103.2 L1034.3 103.6 L1034.3 104.1 L1034.3 104.5 L1034.2 104.9 L1034.2 105.3 L1034.3 105.8 L1034.3 106.2 L1034.3 106.6 L1034.3 107.1" fill="none" stroke="#55cc22" stroke-width="1.5" stroke-dasharray="1.4 1.9"/>
<path d="M724.9 89.4 L723.1 89.8 L721.3 90.2 L719.5 90.6 L717.6 91.0 L715.7 91.4 L713.9 91.8 L712.0 92.3 L710.0 92.7 L708.1 93.1 L706.1 93.6 L704.2 94.0 L702.2 94.5 L700.1 95.0 L698.1 95.4 L696.1 95.9 L694.0 96.4 L691.9 96.9 L689.8 97.4 L687.7 97.9 M1118.1 98.4 L1119.0 98.9 L1119.9 99.4 L1120.8 100.0 L1121.7 100.5 M689.7 99.0 L687.8 99.5 L685.8 99.9 L683.9 100.4 L681.9 100.8 L679.9 101.3 L677.9 101.8 L675.9 102.2 L673.8 102.7 M1132.2 103.2 L1132.9 103.7 L1133.7 104.2 L1134.5 104.7 M922.1 83.1 L922.9 83.0 L923.6 82.9 L924.4 82.8 L925.2 82.7 L925.9 82.6 L926.7 82.6 L927.5 82.5 L928.3 82.5 L929.1 82.5 L929.9 82.5 L930.7 82.5 L931.5 82.5 L932.3 82.5 L933.1 82.6 L934.0 82.6 L934.8 82.7 L935.6 82.7 L936.5 82.8 L937.3 82.9 L938.2 83.0 L939.1 83.1 L939.9 83.2 L940.8 83.4 L941.7 83.5 L942.6 83.7 L943.5 83.9 L944.4 84.0 L945.4 84.2 L946.3 84.4 L947.2 84.6 L948.2 84.9 L949.1 85.1 L950.1 85.3 L951.0 85.6 L952.0 85.9 L953.0 86.1 L954.0 86.4 L955.0 86.7 L956.0 87.0 M911.3 104.8 L912.0 104.6 L912.8 104.4 L913.5 104.1 L914.3 103.9 L915.0 103.7 L915.8 103.6 L916.5 103.4 L917.2 103.2 L918.0 103.0 L918.7 102.9 L919.5 102.7 L920.3 102.6 L921.0 102.5 L921.8 102.3 L922.5 102.2 L923.3 102.1 L924.0 102.0 L924.8 101.9 L925.6 101.8 L926.4 101.7 L927.1 101.7 L927.9 101.6 M982.2 109.3 L983.3 109.7 L984.3 110.1 L985.4 110.5 L986.4 110.9 L987.5 111.4 L988.6 111.8 L989.7 112.2 L990.7 112.7 L991.8 113.1 L992.9 113.6 L994.0 114.0 L995.1 114.5 L996.2 114.9 L997.3 115.4 L998.4 115.9 L999.6 116.4 L1000.7 116.8 L1001.8 117.3 L1002.9 117.8 L1004.1 118.3 L1005.2 118.8 L1006.3 119.3 L1007.5 119.8 L1008.6 120.3 L1009.7 120.8 L1010.9 121.3 L1012.0 121.8 L1013.2 122.4 L1014.4 122.9 L1015.5 123.4 L1016.7 123.9 L1017.8 124.5 L1019.0 125.0 L1020.2 125.6 L1021.3 126.1 L1022.5 126.7 L1023.7 127.2 M901.7 149.8 L902.5 149.6 L903.2 149.4 L904.0 149.2 L904.8 149.1 L905.5 148.9 L906.3 148.7 L907.0 148.6 L907.8 148.4 L908.6 148.3 L909.3 148.1 L910.1 148.0 L910.9 147.8 L911.6 147.7 L912.4 147.5 L913.2 147.4 L913.9 147.3 L914.7 147.2 L915.5 147.1 L916.2 146.9 L917.0 146.8 L917.8 146.7 L918.5 146.6 L919.3 146.5 L920.1 146.4 L920.8 146.4 L921.6 146.3 L922.4 146.2 L923.2 146.1 L923.9 146.1 L924.7 146.0 M980.9 151.1 L981.8 151.3 L982.7 151.5 L983.6 151.8 L984.5 152.0 L985.4 152.2 L986.3 152.5 L987.2 152.7 L988.1 153.0 L989.0 153.2 L989.9 153.5 L990.8 153.7 L991.8 154.0 L992.7 154.3 L993.6 154.5 L994.5 154.8 L995.4 155.1 L996.4 155.4 L997.3 155.7 L998.2 155.9 L999.2 156.2 L1000.1 156.5 L1001.0 156.8 L1002.0 157.1 L1002.9 157.4 L1003.9 157.8 L1004.8 158.1 L1005.7 158.4 L1006.7 158.7 L1007.6 159.0 L1008.6 159.4 L1009.6 159.7 L1010.5 160.0 L1011.5 160.4 L1012.4 160.7 L1013.4 161.1 L1014.4 161.4 L1015.3 161.8 L1016.3 162.1 L1017.3 162.5 L1018.2 162.8 L1019.2 163.2 M965.1 155.2 L966.0 155.3 L966.8 155.4 L967.7 155.6 L968.5 155.7 L969.4 155.9 L970.3 156.0 L971.1 156.2 L972.0 156.4 L972.9 156.5 L973.7 156.7 L974.6 156.9 L975.5 157.0 L976.4 157.2 L977.2 157.4 L978.1 157.6 L979.0 157.8 M1020.5 143.4 L1021.6 143.8 L1022.6 144.3 L1023.7 144.7 L1024.8 145.2 L1025.9 145.7 L1026.9 146.1 L1028.0 146.6 L1029.1 147.0 L1030.2 147.5 L1031.3 148.0 L1032.4 148.5 L1033.5 148.9 L1034.6 149.4 L1035.7 149.9 L1036.8 150.4 L1037.9 150.9 L1039.0 151.4 L1040.1 151.9 L1041.2 152.4 L1042.3 152.9 L1043.4 153.4 L1044.5 153.9 L1045.6 154.4 L1046.7 154.9 M1059.2 138.5 L1060.5 139.2 L1061.7 139.8 L1063.0 140.5 L1064.3 141.1 L1065.6 141.8 L1066.8 142.5 L1068.1 143.1 L1069.4 143.8 L1070.7 144.5 L1071.9 145.1 L1073.2 145.8 L1074.5 146.5 L1075.8 147.2 L1077.0 147.8 L1078.3 148.5 L1079.6 149.2 L1080.8 149.9 L1082.1 150.5 L1083.4 151.2 L1084.6 151.9 L1085.9 152.6 L1087.2 153.3 L1088.4 154.0 L1089.7 154.6 L1091.0 155.3 L1092.2 156.0 L1093.5 156.7 L1094.7 157.4 L1096.0 158.1 L1097.2 158.8 L1098.5 159.5 L1099.8 160.2 L1101.0 160.9 L1102.2 161.6 L1103.5 162.3 L1104.7 163.0 L1106.0 163.7 L1107.2 164.4 L1108.5 165.1 L1109.7 165.8 L1110.9 166.5 L1112.2 167.2 L1113.4 167.9 M1110.7 183.1 L1111.8 183.7 L1113.0 184.4 L1114.1 185.0 L1115.2 185.6 L1116.4 186.3 L1117.5 186.9 L1118.7 187.6 L1119.8 188.2 L1120.9 188.9 L1122.1 189.5 L1123.2 190.2" fill="none" stroke="#ff2200" stroke-width="1.6"/>
<path d="M946.4 43.9 L947.8 44.6 L949.3 45.3 L950.8 46.0 L952.3 46.7 L953.8 47.4 L955.4 48.1 L956.9 48.9 L958.5 49.6 L960.1 50.4 L961.7 51.1 L963.3 51.9 L964.9 52.6 L966.5 53.4 L968.2 54.1 L969.8 54.9 L971.4 55.7 L973.1 56.4 L974.7 57.2 L976.4 58.0 L978.0 58.7 L979.7 59.5 L981.3 60.3 L983.0 61.1 L984.7 61.8 L986.3 62.6 L988.0 63.4 L989.7 64.2 L991.3 65.0 L993.0 65.8 L994.7 66.6 L996.3 67.3 L998.0 68.1 L999.7 68.9 L1001.3 69.7 L1003.0 70.5 L1004.7 71.3 L1006.3 72.1 L1008.0 72.9 L1009.7 73.7 L1011.3 74.5 L1013.0 75.3 L1014.7 76.0 L1016.3 76.8 L1018.0 77.6 L1019.6 78.4 L1021.3 79.2 L1023.0 80.0 L1024.6 80.8 L1026.3 81.6 L1027.9 82.4 L1029.6 83.2 L1031.2 84.0 L1032.9 84.8 L1034.5 85.6 L1036.2 86.4 L1037.8 87.2 L1039.5 88.0 L1041.1 88.8 L1042.7 89.6 L1044.4 90.4 L1046.0 91.2 M899.7 56.9 L900.4 56.4 L901.1 56.0 L901.8 55.5 L902.5 55.1 L903.2 54.8 L903.9 54.4 L904.6 54.0 L905.3 53.7 L906.0 53.4 L906.7 53.1 L907.5 52.9 L908.2 52.6 L908.9 52.4 L909.6 52.2 L910.4 52.0 L911.1 51.9 L911.9 51.8 M874.8 100.5 L875.5 99.9 L876.3 99.3 L877.0 98.8 L877.8 98.2 L878.5 97.6 L879.2 97.1 L880.0 96.5 L880.7 95.9 L881.4 95.4 L882.1 94.9 L882.9 94.3 L883.6 93.8 L884.3 93.2 L885.1 92.7 L885.8 92.2 L886.5 91.7 L887.2 91.2 L887.9 90.7 L888.7 90.2 L889.4 89.7 L890.1 89.2 L890.8 88.7 L891.5 88.2 L892.2 87.8 L893.0 87.3 L893.7 86.9 L894.4 86.4 L895.1 86.0 L895.8 85.5 L896.5 85.1 M982.0 94.0 L983.2 94.5 L984.4 95.1 L985.7 95.6 L986.9 96.2 L988.1 96.7 L989.4 97.3 L990.6 97.8 L991.9 98.4 L993.1 99.0 L994.4 99.5 L995.7 100.1 L996.9 100.7 L998.2 101.3 L999.5 101.9 L1000.8 102.5 L1002.1 103.1 L1003.3 103.7 L1004.6 104.3 L1005.9 104.9 L1007.2 105.5 L1008.5 106.1 L1009.8 106.8 L1011.1 107.4 L1012.4 108.0 L1013.8 108.6 L1015.1 109.3 L1016.4 109.9 L1017.7 110.5 L1019.0 111.2 L1020.3 111.8 L1021.7 112.5 L1023.0 113.1 M943.9 137.0 L944.7 137.1 L945.5 137.2 L946.4 137.4 L947.2 137.5 L948.0 137.6 L948.9 137.8 L949.7 137.9 L950.5 138.1 L951.3 138.2 L952.2 138.4 L953.0 138.5 L953.9 138.7 L954.7 138.9 L955.6 139.0 L956.4 139.2 L957.2 139.4 L958.1 139.6 L958.9 139.8 L959.8 140.0 M953.4 177.3 L954.2 177.5 L955.0 177.6 L955.9 177.8 L956.7 178.0 L957.5 178.1 L958.3 178.3 L959.2 178.5 L960.0 178.7 L960.8 178.9 L961.6 179.1 L962.5 179.2 L963.3 179.4 L964.1 179.6 L965.0 179.8 L965.8 180.0 L966.6 180.3 L967.4 180.5 L968.3 180.7 L969.1 180.9 L970.0 181.1 L970.8 181.3 L971.6 181.6 L972.5 181.8 L973.3 182.0 L974.1 182.2 L975.0 182.5 L975.8 182.7 L976.7 183.0 L977.5 183.2 L978.4 183.5 L979.2 183.7 L980.1 184.0 L980.9 184.2 L981.7 184.5 L982.6 184.7 L983.4 185.0 L984.3 185.3 L985.1 185.5 L986.0 185.8 M1107.0 224.7 L1107.9 225.3 L1108.8 225.8 L1109.8 226.3 L1110.7 226.9 L1111.6 227.4 L1112.6 228.0 L1113.5 228.5 L1114.4 229.1 L1115.4 229.6 L1116.3 230.2 L1117.2 230.7 L1118.2 231.3 L1119.1 231.8 L1120.0 232.4" fill="none" stroke="#d21ef5" stroke-width="1.6"/>
<path d="M921.4 38.3 L923.0 39.1 L924.7 39.8 L926.4 40.6 L928.0 41.4 L929.7 42.2 L931.4 43.0 L933.1 43.8 L934.8 44.6 L936.5 45.4 L938.2 46.2 L939.9 47.0 L941.6 47.8 L943.3 48.6 L945.0 49.4 L946.7 50.2 L948.4 51.0 L950.1 51.8 L951.8 52.6 L953.5 53.4 L955.2 54.2 L956.9 55.0 L958.6 55.8 L960.3 56.6 L962.0 57.4 L963.7 58.3 L965.4 59.1 L967.1 59.9 L968.8 60.7 L970.5 61.5 L972.2 62.3 L973.9 63.1 L975.6 63.9 L977.3 64.7 L979.0 65.5 L980.7 66.3 L982.4 67.1 L984.1 67.9 L985.8 68.8 L987.5 69.6 L989.1 70.4 L990.8 71.2 L992.5 72.0 L994.2 72.8 L995.9 73.6 L997.5 74.4 L999.2 75.2 L1000.9 76.0 L1002.6 76.9 L1004.2 77.7 L1005.9 78.5 L1007.6 79.3 L1009.2 80.1 L1010.9 80.9 M909.7 126.6 L910.4 126.2 L911.1 125.9 L911.8 125.6 L912.6 125.3 L913.3 125.0 L914.0 124.7 L914.7 124.4 L915.5 124.1 L916.2 123.8 L916.9 123.6 L917.6 123.3 L918.4 123.0 L919.1 122.8 L919.8 122.5 L920.5 122.3 L921.3 122.0 L922.0 121.8 L922.7 121.6 L923.5 121.3 L924.2 121.1 L924.9 120.9 L925.7 120.7 L926.4 120.5 L927.2 120.3 L927.9 120.1 M852.4 173.5 L853.1 173.0 L853.8 172.4 L854.6 171.9 L855.3 171.3 L856.1 170.8 L856.8 170.2 L857.5 169.7 L858.3 169.1 L859.0 168.6 L859.8 168.0 L860.5 167.5" fill="none" stroke="#ee82ee" stroke-width="1.6"/>
<path d="M980.3 98.1 L980.5 98.8 L980.7 99.4 L980.9 100.1 L981.1 100.7 L981.3 101.4 L981.5 102.1 L981.7 102.7 L981.9 103.4 L982.2 104.1 L982.4 104.7 L982.6 105.4 L982.8 106.1 M1034.3 107.1 L1034.4 107.6 L1034.4 108.0 L1034.5 108.5 L1034.6 109.0 L1034.6 109.4 L1034.7 109.9 L1034.8 110.4 L1034.9 110.9 L1035.0 111.4 L1035.1 111.9 L1035.2 112.4 L1035.3 112.9 L1035.4 113.4 L1035.5 113.9 L1035.7 114.5 L1035.8 115.0" fill="none" stroke="#55cc22" stroke-width="1.6"/>
<g fill="#ff6a4a"><circle cx="677.0" cy="100.5" r="1.4"/><circle cx="1134.5" cy="104.7" r="1.4"/><circle cx="956.0" cy="87.0" r="1.4"/><circle cx="927.9" cy="101.6" r="1.4"/><circle cx="1023.7" cy="127.2" r="1.4"/><circle cx="924.7" cy="146.0" r="1.4"/><circle cx="1019.2" cy="163.2" r="1.4"/><circle cx="979.0" cy="157.8" r="1.4"/><circle cx="1046.7" cy="154.9" r="1.4"/><circle cx="1113.4" cy="167.9" r="1.4"/><circle cx="1123.2" cy="190.2" r="1.4"/><circle cx="1046.0" cy="91.2" r="1.4"/><circle cx="911.9" cy="51.8" r="1.4"/><circle cx="896.5" cy="85.1" r="1.4"/><circle cx="1023.0" cy="113.1" r="1.4"/><circle cx="959.8" cy="140.0" r="1.4"/><circle cx="986.0" cy="185.8" r="1.4"/><circle cx="1120.0" cy="232.4" r="1.4"/><circle cx="1010.9" cy="80.9" r="1.4"/><circle cx="927.9" cy="120.1" r="1.4"/><circle cx="860.5" cy="167.5" r="1.4"/><circle cx="982.8" cy="106.1" r="1.4"/><circle cx="1035.8" cy="115.0" r="1.4"/></g>
<path d="M1054.7 106.6 L1057.2 107.1 L1059.7 107.7 L1062.3 108.2 L1064.9 108.8 L1067.6 109.4 L1070.3 110.1 L1073.1 110.8 L1075.9 111.5 L1078.8 112.2 L1081.7 112.9 L1084.6 113.7 L1087.6 114.5 L1090.6 115.3 L1093.7 116.1 L1096.8 117.0 L1099.9 117.9 L1103.0 118.7 L1106.2 119.7 L1109.5 120.6 L1112.7 121.5 L1116.0 122.5 L1119.3 123.5 L1122.7 124.5 L1126.0 125.5 L1129.4 126.5 L1132.9 127.5 L1136.3 128.6 L1139.8 129.6 L1143.2 130.7 L1146.7 131.8 L1150.2 132.9 L1153.8 134.0 L1157.3 135.2 L1160.9 136.3 L1164.5 137.5 L1168.0 138.6 L1171.6 139.8 L1175.2 141.0 L1178.9 142.2 L1182.5 143.4 L1186.1 144.6 L1189.7 145.8 L1193.4 147.0 L1197.0 148.2 L1200.7 149.5 L1204.3 150.7 L1208.0 152.0 L1211.7 153.3 L1215.3 154.5 L1219.0 155.8 L1222.6 157.1 L1226.3 158.4 L1229.9 159.7 L1233.6 161.0 L1237.2 162.3 L1240.8 163.6 L1244.5 164.9 L1248.1 166.2 L1251.7 167.6 L1255.3 168.9 L1258.9 170.2 L1262.5 171.6 L1266.1 172.9 L1269.7 174.3 L1273.2 175.7 L1276.8 177.0 L1280.3 178.4 L1283.8 179.8 L1287.3 181.1 L1290.8 182.5 L1294.3 183.9 L1297.8 185.3 L1301.2 186.7 L1304.7 188.0 L1308.1 189.4 L1311.5 190.8 L1314.9 192.2 L1318.3 193.6 L1321.6 195.1 L1324.9 196.5 L1328.2 197.9 L1331.5 199.3 L1334.8 200.7 L1338.0 202.1 L1341.3 203.5 L1344.5 205.0 L1347.7 206.4 L1350.8 207.8 L1354.0 209.3 L1357.1 210.7 L1360.2 212.1 L1363.2 213.6 L1366.3 215.0 L1369.3 216.4 L1372.3 217.9 L1375.3 219.3 L1378.2 220.8 L1381.1 222.2 L1384.0 223.7 L1386.9 225.1 L1389.7 226.6 L1392.5 228.0 L1395.3 229.5 L1398.1 231.0 L1400.8 232.4 L1403.5 233.9 L1406.2 235.3 L1408.8 236.8 L1411.4 238.3 L1414.0 239.7 L1416.5 241.2 L1419.0 242.7 L1421.5 244.1 L1424.0 245.6 L1426.4 247.1 L1428.8 248.6 L1431.2 250.0 L1433.5 251.5 L1435.8 253.0 L1438.0 254.5 L1440.3 255.9 L1442.5 257.4 L1444.6 258.9 L1446.8 260.4 L1448.9 261.9 L1450.9 263.3 L1453.0 264.8 L1455.0 266.3 L1456.9 267.8 L1458.8 269.3 L1460.7 270.8 L1462.6 272.3 L1464.4 273.7 L1466.2 275.2 L1467.9 276.7 L1469.7 278.2 L1471.3 279.7 L1473.0 281.2 L1474.6 282.7 L1476.2 284.2 M328.0 285.7 L327.8 287.2 L327.6 288.6 L327.5 290.1 L327.4 291.6 L327.3 293.1 L327.3 294.6 L327.3 296.1 L327.4 297.6 L327.5 299.1 L327.6 300.6 L327.8 302.1 L328.0 303.6 L328.2 305.1 L328.5 306.6 L328.8 308.1 L329.1 309.6 L329.5 311.1 L329.9 312.6 L330.4 314.1 L330.9 315.5 L331.4 317.0 L332.0 318.5 L332.6 320.0 L333.3 321.5 L333.9 323.0 L334.7 324.5 L335.4 326.0 L336.2 327.5 L337.0 329.0 L337.9 330.5 L338.8 332.0 L339.7 333.5 L340.7 335.0 L341.7 336.5 L342.7 338.0 L343.8 339.5 L344.9 341.0 L346.1 342.5 L347.3 344.0 L348.5 345.5 L349.8 346.9 L351.1 348.4 L352.4 349.9 L353.8 351.4 L355.2 352.9 L356.6 354.4 L358.1 355.9 L359.6 357.4 L361.1 358.9 L362.7 360.4 L364.3 361.9 L365.9 363.4 L367.6 364.8 L369.3 366.3 L371.1 367.8 L372.8 369.3 L374.6 370.8 L376.5 372.3 L378.4 373.8 L380.3 375.2 L382.2 376.7 L384.2 378.2 L386.2 379.7 L388.2 381.2 L390.3 382.7 L392.4 384.1 L394.5 385.6 L396.7 387.1 L398.9 388.6 L401.1 390.0 L403.4 391.5 L405.7 393.0 L408.0 394.5 L410.3 395.9 L412.7 397.4 L415.1 398.9 L417.5 400.3 L420.0 401.8 L422.5 403.3 L425.0 404.7 L427.5 406.2 L430.1 407.7 L432.7 409.1 L435.3 410.6 L438.0 412.0 L440.7 413.5 L443.4 415.0 L446.1 416.4 L448.9 417.9 L451.7 419.3 L454.5 420.8 L457.3 422.2 L460.2 423.6 L463.0 425.1 L465.9 426.5 L468.9 428.0 L471.8 429.4 L474.8 430.8 L477.8 432.3 M1105.1 129.0 L1103.1 128.8 L1101.1 128.6 L1099.2 128.4 L1097.3 128.3 L1095.5 128.1 L1093.7 128.0 L1091.9 128.0 L1090.2 127.9 L1088.6 127.9 L1086.9 127.9 L1085.3 127.9 L1083.8 127.9 L1082.2 128.0 L1080.8 128.1 L1079.3 128.2 L1077.9 128.3 L1076.6 128.5 L1075.2 128.7 L1073.9 128.9 L1072.7 129.1 L1071.4 129.4 L1070.3 129.6 L1069.1 129.9 L1068.0 130.3 L1066.9 130.6 L1065.8 131.0 L1064.8 131.4 L1063.8 131.8 L1062.8 132.2 L1061.9 132.6 L1060.9 133.1 L1060.0 133.6 L1059.2 134.1 L1058.3 134.6 L1057.5 135.2 L1056.7 135.8 L1055.9 136.3 L1055.2 137.0 L1054.5 137.6 L1053.7 138.2 L1053.1 138.9 L1052.4 139.6 L1051.7 140.3 L1051.1 141.0 L1050.5 141.7 L1049.9 142.4 L1049.3 143.2 L1048.7 144.0 L1048.1 144.8 L1047.6 145.6 L1047.1 146.4 L1046.5 147.2 L1046.0 148.1 L1045.5 148.9 L1045.0 149.8 L1044.6 150.7 L1044.1 151.6 L1043.6 152.5 L1043.2 153.4 L1042.7 154.4 L1042.3 155.3 L1041.9 156.3 L1041.4 157.3 L1041.0 158.3 L1040.6 159.2 L1040.2 160.2 L1039.8 161.3 L1039.4 162.3 L1039.0 163.3 L1038.6 164.4 L1038.2 165.4 L1037.8 166.5 L1037.4 167.5 L1037.0 168.6 L1036.7 169.7 L1036.3 170.8 L1035.9 171.9 L1035.5 173.0 L1035.2 174.1 L1034.8 175.3 L1034.4 176.4 L1034.0 177.5 L1033.7 178.7 L1033.3 179.8 L1032.9 181.0 L1032.5 182.2 L1032.2 183.3 L1031.8 184.5 L1031.4 185.7 L1031.0 186.9 L1030.6 188.1 L1030.2 189.3 L1029.8 190.5 L1029.5 191.7 L1029.1 192.9 L1028.7 194.2 L1028.3 195.4 L1027.9 196.6 L1027.5 197.8 L1027.1 199.1 L1026.6 200.3 L1026.2 201.6 L1025.8 202.8 L1025.4 204.1 L1025.0 205.4 L1024.5 206.6 L1024.1 207.9 L1023.7 209.2 L1023.2 210.5 L1022.8 211.7 L1022.3 213.0 L1021.9 214.3 L1021.4 215.6 L1020.9 216.9 L1020.5 218.2 L1020.0 219.5 L1019.5 220.8 L1019.0 222.1 L1018.6 223.4 L1018.1 224.7 L1017.6 226.1 L1017.1 227.4 L1016.6 228.7 L1016.1 230.0 L1015.5 231.4 L1015.0 232.7 L1014.5 234.0 L1014.0 235.3 L1013.4 236.7 L1012.9 238.0 L1012.3 239.4 L1011.8 240.7 L1011.2 242.1 L1010.7 243.4 L1010.1 244.7 L1009.5 246.1 L1009.0 247.5 L1008.4 248.8 L1007.8 250.2 L1007.2 251.5 L1006.6 252.9 L1006.0 254.2 L1005.4 255.6 L1004.8 257.0 L1004.2 258.3 L1003.5 259.7 L1002.9 261.1 L1002.3 262.4 L1001.6 263.8 L1001.0 265.2 L1000.3 266.6 L999.7 267.9 L999.0 269.3 L998.4 270.7 L997.7 272.1 L997.0 273.4 L996.3 274.8 L995.7 276.2 L995.0 277.6 L994.3 279.0 L993.6 280.4 L992.9 281.7 L992.2 283.1 L991.4 284.5 L990.7 285.9 L990.0 287.3 L989.3 288.7 L988.5 290.1 L987.8 291.5 L987.0 292.8 L986.3 294.2 L985.5 295.6 L984.8 297.0 L984.0 298.4 L983.3 299.8 L982.5 301.2 L981.7 302.6 L980.9 304.0 L980.1 305.4 L979.4 306.8 L978.6 308.2 L977.8 309.6 L977.0 311.0 L976.2 312.4 L975.3 313.8 L974.5 315.2 L973.7 316.5 L972.9 317.9 L972.1 319.3 L971.2 320.7 L970.4 322.1 L969.6 323.5 L968.7 324.9 L967.9 326.3 L967.0 327.7 L966.2 329.1 L965.3 330.5 L964.5 331.9 L963.6 333.3 L962.7 334.7 L961.9 336.1 L961.0 337.5 L960.1 338.9 L959.2 340.3 L958.3 341.7 L957.5 343.1 L956.6 344.5 L955.7 345.8 L954.8 347.2 L953.9 348.6 L953.0 350.0 L952.1 351.4 L951.2 352.8 L950.3 354.2 L949.4 355.6 L948.4 357.0 L947.5 358.3 L946.6 359.7 L945.7 361.1 L944.8 362.5 L943.8 363.9 L942.9 365.3 L942.0 366.6 L941.0 368.0 L940.1 369.4 L939.2 370.8 L938.2 372.2 L937.3 373.5 L936.3 374.9 L935.4 376.3 L934.5 377.6 L933.5 379.0 L932.6 380.4 L931.6 381.8 L930.7 383.1 L929.7 384.5 L928.7 385.9 L927.8 387.2 L926.8 388.6 L925.9 389.9 L924.9 391.3 L924.0 392.6 L923.0 394.0 L922.0 395.4 L921.1 396.7 L920.1 398.0 L919.1 399.4 L918.2 400.7 L917.2 402.1 L916.2 403.4 L915.3 404.8 L914.3 406.1 L913.3 407.4 L912.3 408.8 L911.4 410.1 L910.4 411.4 L909.4 412.7 L908.5 414.1 L907.5 415.4 L906.5 416.7 L905.5 418.0 L904.6 419.3 L903.6 420.6 L902.6 421.9 L901.7 423.2 L900.7 424.5 L899.7 425.8 L898.7 427.1 L897.8 428.4 L896.8 429.7 L895.8 431.0 L894.8 432.2 L893.9 433.5 L892.9 434.8 L891.9 436.0 L891.0 437.3 L890.0 438.6 L889.0 439.8 L888.0 441.1 L887.1 442.3 M1146.0 130.9 L1142.2 129.4 L1138.4 128.0 L1134.6 126.5 L1130.7 125.1 L1126.9 123.6 L1123.1 122.2 L1119.2 120.7 L1115.4 119.3 L1111.6 117.9 L1107.7 116.4 L1103.9 115.0 L1100.1 113.6 L1096.3 112.2 L1092.4 110.8 L1088.6 109.4 L1084.8 108.1 L1081.0 106.7 L1077.3 105.3 L1073.5 104.0 L1069.7 102.7 L1066.0 101.3 L1062.3 100.0 L1058.6 98.7 L1054.9 97.4 L1051.2 96.2 L1047.6 94.9 L1043.9 93.6 L1040.3 92.4 L1036.8 91.2 L1033.2 90.0 L1029.8 88.8 L1026.3 87.7 L1022.9 86.5 L1019.5 85.4 L1016.1 84.3 L1012.8 83.3 L1009.6 82.2 L1006.4 81.2 L1003.3 80.3 L1000.2 79.3 L997.2 78.4 L994.2 77.5 L991.3 76.7 L988.5 75.9 L985.7 75.1 L983.1 74.4 L980.4 73.8 L977.9 73.1 L975.5 72.6 L973.1 72.1 L970.8 71.6 L968.6 71.2 L966.5 70.8 L964.5 70.5 L962.6 70.3 L960.7 70.1 L958.9 70.0 L957.2 70.0 L955.6 70.0 L954.1 70.0 L952.6 70.2 L951.2 70.4 L949.9 70.6 L948.6 70.9 L947.4 71.3 L946.3 71.7 L945.2 72.2 L944.2 72.7 L943.2 73.3 L942.2 73.9 L941.3 74.6 L940.4 75.3 L939.6 76.1 L938.8 76.9 L938.0 77.8 L937.2 78.6 L936.5 79.6 L935.8 80.5 L935.1 81.5 L934.4 82.5 L933.7 83.6 L933.1 84.6 L932.4 85.7 L931.8 86.8 L931.2 88.0 L930.6 89.1 L930.0 90.3 L929.4 91.5 L928.8 92.7 L928.2 94.0 L927.6 95.2 L927.0 96.5 L926.5 97.8 L925.9 99.1 L925.3 100.4 L924.8 101.7 L924.2 103.0 L923.6 104.3 L923.1 105.7 L922.5 107.1 L922.0 108.4 L921.4 109.8 L920.9 111.2 L920.3 112.6 L919.8 114.0 L919.2 115.4 L918.6 116.8 L918.1 118.2 L917.5 119.7 L917.0 121.1 L916.4 122.5 L915.9 124.0 L915.3 125.4 L914.8 126.9 L914.2 128.3 L913.7 129.8 L913.1 131.3 L912.6 132.8 L912.0 134.2 L911.5 135.7 L910.9 137.2 L910.3 138.7 L909.8 140.2 L909.2 141.7 L908.7 143.2 L908.1 144.7 L907.6 146.2 L907.0 147.7 L906.5 149.2 L905.9 150.7 L905.3 152.2 L904.8 153.7 L904.2 155.2 L903.7 156.8 L903.1 158.3 L902.5 159.8 L902.0 161.3 L901.4 162.9 L900.9 164.4 L900.3 165.9 L899.8 167.5 L899.2 169.0 L898.6 170.5 L898.1 172.1 L897.5 173.6 L897.0 175.2 L896.4 176.7 L895.9 178.2 L895.3 179.8 L894.8 181.3 L894.2 182.9 L893.6 184.4 L893.1 186.0 L892.5 187.5 L892.0 189.1 L891.4 190.6 L890.9 192.2 L890.3 193.8 L889.8 195.3 L889.2 196.9 L888.7 198.4 L888.1 200.0 L887.6 201.5 L887.1 203.1 L886.5 204.7 L886.0 206.2 L885.4 207.8 L884.9 209.4 L884.3 210.9 L883.8 212.5 L883.3 214.1 L882.7 215.6 L882.2 217.2 L881.7 218.8 L881.1 220.3 L880.6 221.9 L880.1 223.5 L879.6 225.0 L879.0 226.6 L878.5 228.2 L878.0 229.8 L877.5 231.3 L877.0 232.9 L876.4 234.5 L875.9 236.0 L875.4 237.6 L874.9 239.2 L874.4 240.8 L873.9 242.3 L873.4 243.9 L872.9 245.5 L872.4 247.1 L871.9 248.6 L871.4 250.2 L870.9 251.8 L870.4 253.4 L869.9 255.0 L869.4 256.5 L868.9 258.1 L868.4 259.7 L868.0 261.3 L867.5 262.8 L867.0 264.4 L866.5 266.0 L866.1 267.6 L865.6 269.2 L865.1 270.7 L864.7 272.3 L864.2 273.9 L863.8 275.5 L863.3 277.1 L862.9 278.7 L862.4 280.2 L862.0 281.8 L861.5 283.4 L861.1 285.0 L860.6 286.6 L860.2 288.1 L859.8 289.7 L859.3 291.3 L858.9 292.9 L858.5 294.5 L858.1 296.1 L857.7 297.6 L857.3 299.2 L856.9 300.8 L856.4 302.4 L856.0 304.0 L855.6 305.6 L855.3 307.1 L854.9 308.7 L854.5 310.3 L854.1 311.9 L853.7 313.5 L853.3 315.1 L853.0 316.6 L852.6 318.2 L852.2 319.8 L851.9 321.4 L851.5 323.0 L851.1 324.6 L850.8 326.1 L850.4 327.7 L850.1 329.3 L849.7 330.9 L849.4 332.5 L849.1 334.1 L848.7 335.6 L848.4 337.2 L848.1 338.8 L847.8 340.4 L847.5 342.0 L847.2 343.6 L846.9 345.1 L846.6 346.7 L846.3 348.3 L846.0 349.9 L845.7 351.5 L845.4 353.1 L845.1 354.6 L844.8 356.2 L844.6 357.8 L844.3 359.4 L844.0 361.0 L843.8 362.6 L843.5 364.1 L843.2 365.7 L843.0 367.3 L842.8 368.9 L842.5 370.5 L842.3 372.0 L842.1 373.6 L841.8 375.2 L841.6 376.8 L841.4 378.4 L841.2 379.9 L841.0 381.5 L840.8 383.1 L840.6 384.7 L840.4 386.3 L840.2 387.8 L840.0 389.4 L839.8 391.0 L839.6 392.6 L839.4 394.1 L839.3 395.7 L839.1 397.3 L839.0 398.9 L838.8 400.4 L838.6 402.0 L838.5 403.6 L838.4 405.2 L838.2 406.7 L838.1 408.3 L838.0 409.9 L837.8 411.5 L837.7 413.0 L837.6 414.6 L837.5 416.2 L837.4 417.7 L837.3 419.3 L837.2 420.9 L837.1 422.4 L837.0 424.0 L836.9 425.6 L836.8 427.1 L836.8 428.7 L836.7 430.3 L836.6 431.8 L836.6 433.4 L836.5 435.0 L836.5 436.5 L836.4 438.1 L836.4 439.7 L836.3 441.2 L836.3 442.8 L836.3 444.3 L836.2 445.9 L836.2 447.4 L836.2 449.0 M1149.8 142.4 L1147.6 140.9 L1145.4 139.4 L1143.2 137.9 L1141.0 136.4 L1138.7 134.9 L1136.5 133.5 L1134.2 132.0 L1132.0 130.5 L1129.7 129.0 L1127.4 127.6 L1125.2 126.1 L1122.9 124.7 L1120.6 123.2 L1118.3 121.8 L1116.1 120.3 L1113.8 118.9 L1111.5 117.5 L1109.2 116.1 L1106.9 114.6 L1104.7 113.2 L1102.4 111.8 L1100.1 110.4 L1097.9 109.1 L1095.6 107.7 L1093.4 106.3 L1091.1 105.0 L1088.9 103.6 L1086.7 102.3 L1084.5 100.9 L1082.4 99.6 L1080.2 98.3 L1078.1 97.0 L1076.0 95.8 L1073.9 94.5 L1071.9 93.3 L1069.9 92.0 L1067.9 90.8 L1066.0 89.6 L1064.1 88.4 L1062.3 87.3 L1060.5 86.2 L1058.7 85.0 L1057.0 84.0 L1055.4 82.9 L1053.9 81.9 L1052.4 80.9 L1051.0 79.9 L1049.7 79.0 L1048.5 78.0 L1047.4 77.2 L1046.4 76.3 L1045.5 75.6 L1044.7 74.8 L1044.1 74.1 L1043.6 73.4 M763.7 72.8 L766.9 72.3 L769.9 71.8 L772.8 71.3 L775.6 70.9 L778.2 70.6 L780.6 70.3 L782.8 70.0 L784.9 69.9 L786.8 69.8 L788.5 69.7 L790.1 69.8 L791.5 69.8 L792.7 70.0 L793.8 70.2 L794.8 70.5 L795.6 70.8 L796.2 71.2 L796.7 71.6 L797.1 72.1 L797.4 72.6 L797.5 73.2 L797.6 73.9 L797.5 74.6 L797.4 75.3 L797.1 76.1 L796.8 76.9 L796.4 77.8 L795.9 78.7 L795.3 79.6 L794.7 80.5 L794.0 81.5 L793.3 82.6 L792.5 83.6 L791.7 84.7 L790.8 85.8 L789.9 86.9 L788.9 88.1 L788.0 89.2 L786.9 90.4 L785.9 91.6 L784.8 92.8 L783.7 94.1 L782.6 95.3 L781.5 96.6 L780.3 97.9 L779.2 99.2 L778.0 100.5 L776.8 101.8 L775.6 103.2 L774.4 104.5 L773.1 105.9 L771.9 107.2 L770.7 108.6 L769.4 110.0 L768.2 111.4 L766.9 112.8 L765.7 114.2 L764.4 115.6 L763.1 117.0 L761.9 118.4 L760.6 119.9 L759.3 121.3 L758.1 122.7 L756.8 124.2 L755.6 125.6 L754.3 127.1 L753.0 128.6 L751.8 130.0 L750.5 131.5 L749.3 133.0 L748.1 134.5 L746.8 135.9 L745.6 137.4 L744.4 138.9 L743.1 140.4 L741.9 141.9 L740.7 143.4 L739.5 144.9 L738.3 146.4 L737.2 147.9 L736.0 149.4 L734.8 150.9 L733.7 152.5 L732.5 154.0 L731.4 155.5 L730.2 157.0 L729.1 158.5 L728.0 160.1 L726.9 161.6 L725.8 163.1 L724.7 164.7 L723.6 166.2 L722.6 167.7 L721.5 169.3 L720.5 170.8 L719.4 172.3 L718.4 173.9 L717.4 175.4 L716.4 177.0 L715.4 178.5 L714.5 180.1 L713.5 181.6 L712.5 183.2 L711.6 184.7 L710.7 186.3 L709.8 187.8 L708.9 189.4 L708.0 190.9 L707.1 192.5 L706.2 194.0 L705.4 195.6 L704.5 197.2 L703.7 198.7 L702.9 200.3 L702.1 201.8 L701.3 203.4 L700.5 205.0 L699.8 206.5 L699.0 208.1 L698.3 209.7 L697.6 211.2 L696.9 212.8 L696.2 214.3 L695.5 215.9 L694.9 217.5 L694.2 219.1 L693.6 220.6 L693.0 222.2 L692.4 223.8 L691.8 225.3 L691.2 226.9 L690.7 228.5 L690.1 230.0 L689.6 231.6 L689.1 233.2 L688.6 234.8 L688.1 236.3 L687.6 237.9 L687.2 239.5 L686.7 241.1 L686.3 242.6 L685.9 244.2 L685.5 245.8 L685.1 247.4 L684.8 249.0 L684.4 250.5 L684.1 252.1 L683.8 253.7 L683.5 255.3 L683.2 256.8 L682.9 258.4 L682.7 260.0 L682.4 261.6 L682.2 263.2 L682.0 264.7 L681.8 266.3 L681.6 267.9 L681.5 269.5 L681.3 271.1 L681.2 272.6 L681.1 274.2 L681.0 275.8 L680.9 277.4 L680.9 279.0 L680.8 280.6 L680.8 282.1 L680.8 283.7 L680.8 285.3 L680.8 286.9 L680.8 288.5 L680.9 290.0 L681.0 291.6 L681.0 293.2 L681.1 294.8 L681.2 296.4 L681.4 298.0 L681.5 299.5 L681.7 301.1 L681.9 302.7 L682.0 304.3 L682.3 305.9 L682.5 307.5 L682.7 309.1 L683.0 310.6 L683.3 312.2 L683.5 313.8 L683.8 315.4 L684.2 317.0 L684.5 318.6 L684.8 320.1 L685.2 321.7 L685.6 323.3 L686.0 324.9 L686.4 326.5 L686.8 328.1 L687.3 329.6 L687.7 331.2 L688.2 332.8 L688.7 334.4 L689.2 336.0 L689.7 337.6 L690.3 339.1 L690.8 340.7 L691.4 342.3 L692.0 343.9 L692.6 345.5 L693.2 347.1 L693.8 348.6 L694.5 350.2 L695.1 351.8 L695.8 353.4 L696.5 355.0 L697.2 356.6 L697.9 358.1 L698.7 359.7 L699.4 361.3 L700.2 362.9 L701.0 364.5 L701.7 366.1 L702.6 367.6 L703.4 369.2 L704.2 370.8 L705.1 372.4 L705.9 374.0 L706.8 375.5 L707.7 377.1 L708.6 378.7 L709.5 380.3 L710.5 381.9 L711.4 383.4 L712.4 385.0 L713.3 386.6 L714.3 388.2 L715.3 389.8 L716.3 391.3 L717.4 392.9 L718.4 394.5 L719.5 396.1 L720.5 397.6 L721.6 399.2 L722.7 400.8 L723.8 402.4 L724.9 403.9 L726.1 405.5 M1118.5 160.3 L1116.4 158.7 L1114.3 157.1 L1112.2 155.4 L1110.0 153.8 L1107.9 152.2 L1105.7 150.6 L1103.5 148.9 L1101.3 147.3 L1099.1 145.7 L1096.8 144.1 L1094.6 142.5 L1092.3 140.8 L1090.0 139.2 L1087.7 137.6 L1085.4 136.0 L1083.1 134.4 L1080.8 132.7 L1078.4 131.1 L1076.1 129.5 L1073.7 127.9 L1071.3 126.3 L1068.9 124.6 L1066.5 123.0 L1064.1 121.4 L1061.6 119.8 L1059.2 118.2 L1056.7 116.5 L1054.3 114.9 L1051.8 113.3 L1049.3 111.7 L1046.8 110.1 L1044.3 108.4 L1041.8 106.8 L1039.2 105.2 L1036.7 103.6 L1034.1 102.0 L1031.6 100.4 L1029.0 98.7 L1026.4 97.1 L1023.8 95.5 L1021.2 93.9 L1018.6 92.3 L1016.0 90.7 L1013.4 89.1 L1010.8 87.4 L1008.1 85.8 L1005.5 84.2 L1002.8 82.6 L1000.2 81.0 L997.5 79.4 L994.9 77.8 L992.2 76.2 L989.5 74.6 L986.8 73.0 L984.2 71.4 L981.5 69.8 L978.8 68.2 L976.1 66.6 L973.4 65.0 L970.7 63.4 L968.0 61.8 L965.3 60.2 L962.7 58.6 L960.0 57.1 L957.3 55.5 L954.7 53.9 L952.0 52.4 L949.4 50.8 L946.8 49.3 L944.2 47.8 L941.6 46.3 L939.1 44.8 L936.7 43.3 L934.3 41.9 L932.1 40.6 L930.0 39.3 L928.1 38.1 L926.6 37.0 L925.6 36.1 L925.3 35.5 L880.0 35.2 L881.5 35.3 L882.0 35.7 L881.7 36.3 L880.9 37.3 L879.6 38.4 L878.1 39.6 L876.4 40.9 L874.5 42.3 L872.6 43.7 L870.6 45.2 L868.6 46.6 L866.5 48.1 L864.4 49.7 L862.3 51.2 L860.2 52.8 L858.0 54.3 L855.8 55.9 L853.7 57.4 L851.5 59.0 L849.3 60.6 L847.1 62.2 L845.0 63.8 L842.8 65.4 L840.6 67.0 L838.4 68.6 L836.2 70.2 L834.1 71.8 L831.9 73.4 L829.7 75.0 L827.5 76.6 L825.4 78.2 L823.2 79.8 L821.0 81.4 L818.9 83.0 L816.7 84.6 L814.6 86.2 L812.5 87.8 L810.3 89.5 L808.2 91.1 L806.1 92.7 L804.0 94.3 L801.9 95.9 L799.8 97.5 L797.7 99.1 L795.6 100.8 L793.5 102.4 L791.5 104.0 L789.4 105.6 L787.3 107.2 L785.3 108.8 L783.3 110.5 L781.2 112.1 L779.2 113.7 L777.2 115.3 L775.2 116.9 L773.2 118.6 L771.2 120.2 L769.3 121.8 L767.3 123.4 L765.3 125.0 L763.4 126.7 L761.5 128.3 L759.6 129.9 L757.6 131.5 L755.7 133.1 L753.9 134.8 L752.0 136.4 L750.1 138.0 L748.3 139.6 L746.4 141.2 L744.6 142.9 L742.8 144.5 L741.0 146.1 L739.2 147.7 L737.4 149.4 L735.6 151.0 L733.8 152.6 L732.1 154.2 L730.4 155.8 L728.6 157.5 L726.9 159.1 L725.2 160.7 L723.6 162.3 L721.9 164.0 L720.2 165.6 L718.6 167.2 L717.0 168.8 L715.4 170.4 L713.8 172.1 L712.2 173.7 L710.6 175.3 L709.1 176.9 L707.5 178.6 L706.0 180.2 L704.5 181.8 L703.0 183.4 L701.5 185.0 L700.1 186.7 L698.6 188.3 L697.2 189.9 L695.8 191.5 L694.4 193.2 L693.0 194.8 L691.6 196.4 L690.2 198.0 L688.9 199.6 L687.6 201.3 L686.3 202.9 L685.0 204.5 L683.7 206.1 L682.5 207.8 L681.2 209.4 L680.0 211.0 L678.8 212.6 L677.6 214.3 L676.4 215.9 L675.3 217.5 L674.1 219.1 L673.0 220.8 L671.9 222.4 L670.8 224.0 L669.8 225.6 L668.7 227.2 L667.7 228.9 L666.7 230.5 L665.7 232.1 L664.7 233.7 L663.7 235.4 L662.8 237.0 L661.9 238.6 L661.0 240.2 L660.1 241.9 L659.2 243.5 L658.4 245.1 L657.5 246.7 L656.7 248.3 L655.9 250.0 L655.1 251.6 L654.4 253.2 L653.6 254.8 L652.9 256.5 L652.2 258.1 L651.5 259.7 L650.9 261.3 L650.2 263.0 L649.6 264.6 L649.0 266.2 L648.4 267.8 L647.8 269.5 L647.3 271.1 L646.8 272.7 L646.3 274.3 L645.8 276.0 L645.3 277.6 L644.9 279.2 L644.4 280.8 L644.0 282.4 L643.6 284.1 L643.3 285.7 L642.9 287.3 L642.6 288.9 L642.3 290.6 L642.0 292.2 L641.7 293.8 L641.4 295.4 L641.2 297.1 L641.0 298.7 L640.8 300.3 L640.6 301.9 L640.5 303.6 L640.3 305.2 L640.2 306.8 L640.1 308.4 L640.1 310.0 L640.0 311.7 L640.0 313.3 L640.0 314.9 L640.0 316.5 L640.0 318.2 L640.0 319.8 L640.1 321.4 L640.2 323.0 L640.3 324.7 L640.4 326.3 L640.6 327.9 L640.7 329.5 L640.9 331.2 L641.1 332.8 L641.4 334.4 L641.6 336.0 L641.9 337.7 L642.1 339.3 L642.5 340.9 L642.8 342.5 L643.1 344.1 L643.5 345.8 L643.9 347.4 L644.3 349.0 L644.7 350.6 L645.1 352.3 L645.6 353.9 L646.1 355.5 L646.6 357.1 L647.1 358.8 L647.6 360.4 L648.2 362.0 L648.8 363.6 L649.4 365.3 L650.0 366.9 L650.6 368.5 L651.3 370.1 L652.0 371.8 L652.7 373.4 L653.4 375.0 L654.1 376.6 L654.8 378.2 L655.6 379.9 L656.4 381.5 L657.2 383.1 L658.0 384.7 L658.9 386.4 L659.7 388.0 L660.6 389.6 L661.5 391.2 L662.4 392.9 L663.4 394.5 L664.3 396.1 L665.3 397.7 L666.3 399.4 L667.3 401.0 L668.3 402.6 L669.4 404.2 L670.4 405.8 L671.5 407.5 L672.6 409.1 L673.7 410.7 L674.9 412.3 L676.0 414.0 L677.2 415.6 L678.3 417.2 L679.5 418.8 L680.8 420.5 L682.0 422.1 L683.2 423.7 L684.5 425.3 L685.8 426.9 L687.1 428.6 L688.4 430.2 L689.7 431.8 M1039.6 153.2 L1038.1 151.6 L1036.6 150.0 L1035.1 148.3 L1033.6 146.7 L1032.1 145.1 L1030.5 143.5 L1029.0 141.8 L1027.4 140.2 L1025.9 138.6 L1024.3 137.0 L1022.7 135.3 L1021.1 133.7 L1019.5 132.1 L1017.9 130.5 L1016.3 128.8 L1014.7 127.2 L1013.0 125.6 L1011.4 124.0 L1009.7 122.3 L1008.1 120.7 L1006.4 119.1 L1004.7 117.5 L1003.0 115.8 L1001.3 114.2 L999.6 112.6 L997.9 111.0 L996.2 109.3 L994.5 107.7 L992.8 106.1 L991.0 104.5 L989.3 102.8 L987.5 101.2 L985.8 99.6 L984.0 98.0 L982.3 96.3 L980.5 94.7 L978.7 93.1 L976.9 91.5 L975.1 89.8 L973.3 88.2 L971.5 86.6 L969.7 85.0 L967.9 83.3 L966.1 81.7 L964.3 80.1 L962.4 78.5 L960.6 76.8 L958.8 75.2 L956.9 73.6 L955.1 72.0 L953.2 70.3 L951.4 68.7 L949.5 67.1 L947.7 65.5 L945.8 63.9 L944.0 62.2 L942.1 60.6 L940.2 59.0 L938.3 57.4 L936.5 55.7 L934.6 54.1 L932.7 52.5 L930.8 50.9 L928.9 49.3 L927.1 47.6 L925.2 46.0 L923.3 44.4 L921.4 42.8 L919.5 41.2 L917.6 39.6 L915.8 37.9 L913.9 36.3 L912.0 34.8 L910.2 33.2 L908.5 31.7 L907.0 30.3 L906.6 29.5 L896.4 30.1 L893.9 31.4 L891.0 32.9 L887.9 34.4 L884.8 36.0 L881.7 37.6 L878.5 39.2 L875.3 40.8 L872.2 42.4 L869.0 44.1 L865.8 45.7 L862.7 47.3 L859.5 48.9 L856.3 50.5 L853.2 52.2 L850.0 53.8 L846.8 55.4 L843.7 57.0 L840.5 58.6 L837.4 60.3 L834.2 61.9 L831.1 63.5 L828.0 65.1 L824.8 66.8 L821.7 68.4 L818.6 70.0 L815.5 71.6 L812.4 73.3 L809.3 74.9 L806.2 76.5 L803.1 78.1 L800.0 79.8 L796.9 81.4 L793.9 83.0 L790.8 84.6 L787.8 86.3 L784.8 87.9 L781.7 89.5 L778.7 91.1 L775.7 92.8 L772.7 94.4 L769.7 96.0 L766.7 97.6 L763.8 99.3 L760.8 100.9 L757.9 102.5 L754.9 104.1 L752.0 105.7 L749.1 107.4 L746.2 109.0 L743.3 110.6 L740.4 112.2 L737.5 113.9 L734.7 115.5 L731.9 117.1 L729.0 118.7 L726.2 120.4 L723.4 122.0 L720.6 123.6 L717.9 125.2 L715.1 126.9 L712.3 128.5 L709.6 130.1 L706.9 131.7 L704.2 133.4 L701.5 135.0 L698.8 136.6 L696.2 138.2 L693.5 139.9 L690.9 141.5 L688.3 143.1 L685.7 144.7 L683.1 146.4 L680.6 148.0 L678.0 149.6 L675.5 151.2 L673.0 152.9 L670.5 154.5 L668.1 156.1 L665.6 157.7 L663.2 159.4 L660.7 161.0 L658.3 162.6 L656.0 164.2 L653.6 165.9 L651.3 167.5 L648.9 169.1 L646.6 170.7 L644.3 172.4 L642.1 174.0 L639.8 175.6 L637.6 177.2 L635.4 178.9 L633.2 180.5 L631.1 182.1 L628.9 183.7 L626.8 185.4 L624.7 187.0 L622.6 188.6 L620.5 190.2 L618.5 191.9 L616.5 193.5 L614.5 195.1 L612.5 196.7 L610.6 198.4 L608.6 200.0 L606.7 201.6 L604.8 203.2 L603.0 204.9 L601.2 206.5 L599.3 208.1 L597.5 209.7 L595.8 211.4 L594.0 213.0 L592.3 214.6 L590.6 216.2 L588.9 217.9 L587.3 219.5 L585.7 221.1 L584.0 222.7 L582.5 224.4 L580.9 226.0 L579.4 227.6 L577.9 229.2 L576.4 230.9 L574.9 232.5 L573.5 234.1 L572.1 235.7 L570.7 237.4 L569.4 239.0 L568.0 240.6 L566.7 242.2 L565.5 243.9 L564.2 245.5 L563.0 247.1 L561.8 248.7 L560.6 250.4 L559.4 252.0 L558.3 253.6 L557.2 255.2 L556.2 256.9 L555.1 258.5 L554.1 260.1 L553.1 261.7 L552.1 263.4 L551.2 265.0 L550.3 266.6 L549.4 268.2 L548.5 269.9 L547.7 271.5 L546.9 273.1 L546.1 274.7 L545.4 276.4 L544.7 278.0 L544.0 279.6 L543.3 281.2 L542.6 282.9 L542.0 284.5 L541.4 286.1 L540.9 287.7 L540.4 289.4 L539.9 291.0 L539.4 292.6 L538.9 294.2 L538.5 295.9 L538.1 297.5 L537.7 299.1 L537.4 300.7 L537.1 302.4 L536.8 304.0 L536.6 305.6 L536.3 307.2 L536.1 308.9 L536.0 310.5 L535.8 312.1 L535.7 313.7 L535.6 315.4 L535.6 317.0 L535.5 318.6 L535.5 320.2 L535.6 321.9 L535.6 323.5 L535.7 325.1 L535.8 326.7 L535.9 328.4 L536.1 330.0 L536.3 331.6 L536.5 333.2 L536.8 334.9 L537.0 336.5 L537.3 338.1 L537.7 339.7 L538.0 341.4 L538.4 343.0 L538.8 344.6 L539.3 346.2 L539.8 347.9 L540.2 349.5 L540.8 351.1 L541.3 352.7 L541.9 354.4 L542.5 356.0 L543.2 357.6 L543.8 359.2 L544.5 360.9 L545.2 362.5 L546.0 364.1 L546.7 365.7 L547.5 367.4 L548.4 369.0 L549.2 370.6 L550.1 372.2 L551.0 373.9 L551.9 375.5 L552.9 377.1 L553.9 378.7 L554.9 380.4 L555.9 382.0 L557.0 383.6 L558.1 385.2 L559.2 386.9 L560.4 388.5 L561.5 390.1 M1037.0 162.8 L1034.9 161.6 L1032.8 160.4 L1030.8 159.3 L1028.7 158.1 L1026.6 156.9 L1024.6 155.8 L1022.5 154.6 L1020.4 153.5 L1018.4 152.4 L1016.3 151.3 L1014.2 150.2 L1012.2 149.1 L1010.1 148.0 L1008.1 146.9 L1006.1 145.9 L1004.0 144.8 L1002.0 143.8 L1000.0 142.7 L998.0 141.7 L996.0 140.7 L994.0 139.7 L992.0 138.8 L990.0 137.8 L988.0 136.8 L986.0 135.9 L984.0 135.0 L982.1 134.1 L980.1 133.2 L978.2 132.3 L976.3 131.5 L974.3 130.6 L972.4 129.8 L970.5 129.0 L968.6 128.2 L966.7 127.4 L964.9 126.7 L963.0 125.9 L961.2 125.2 L959.3 124.5 L957.5 123.9 L955.6 123.2 L953.8 122.6 L952.0 122.0 L950.2 121.4 L948.4 120.8 L946.7 120.3 L944.9 119.8 L943.2 119.3 L941.4 118.8 L939.7 118.3 L938.0 117.9 L936.2 117.5 L934.5 117.2 L932.8 116.8 L931.1 116.5 L929.5 116.2 L927.8 115.9 L926.1 115.7 L924.4 115.5 L922.8 115.3 L921.1 115.1 L919.5 115.0 L917.9 114.9 L916.2 114.9 L914.6 114.8 L913.0 114.8 L911.3 114.8 L909.7 114.8 L908.1 114.9 L906.5 115.0 L904.9 115.1 L903.3 115.3 L901.6 115.5 L900.0 115.7 L898.4 115.9 L896.8 116.2 L895.2 116.5 L893.6 116.8 L891.9 117.1 L890.3 117.5 L888.7 117.9 L887.0 118.3 L885.4 118.8 L883.8 119.2 L882.1 119.7 L880.5 120.2 L878.8 120.8 L877.2 121.3 L875.5 121.9 L873.8 122.5 L872.1 123.2 L870.5 123.8 L868.8 124.5 L867.1 125.2 L865.4 125.9 L863.7 126.6 L862.0 127.4 L860.2 128.1 L858.5 128.9 L856.8 129.7 L855.1 130.6 L853.3 131.4 L851.6 132.3 L849.8 133.1 L848.1 134.0 L846.3 134.9 L844.5 135.9 L842.7 136.8 L841.0 137.7 L839.2 138.7 L837.4 139.7 L835.6 140.7 L833.8 141.7 L832.0 142.7 L830.2 143.7 L828.3 144.7 L826.5 145.8 L824.7 146.9 L822.9 147.9 L821.0 149.0 L819.2 150.1 L817.4 151.2 L815.5 152.3 L813.7 153.4 L811.8 154.6 L810.0 155.7 L808.1 156.9 L806.3 158.0 L804.4 159.2 L802.6 160.4 L800.7 161.5 L798.9 162.7 L797.0 163.9 L795.2 165.1 L793.3 166.3 L791.5 167.6 L789.6 168.8 L787.8 170.0 L785.9 171.2 L784.1 172.5 L782.2 173.7 L780.4 175.0 L778.5 176.2 L776.7 177.5 L774.8 178.8 L773.0 180.1 L771.2 181.3 L769.3 182.6 L767.5 183.9 L765.7 185.2 L763.9 186.5 L762.0 187.8 L760.2 189.1 L758.4 190.4 L756.6 191.8 L754.8 193.1 L753.0 194.4 L751.2 195.7 L749.4 197.1 L747.7 198.4 L745.9 199.7 L744.1 201.1 L742.4 202.4 L740.6 203.8 L738.9 205.1 L737.1 206.5 L735.4 207.9 L733.7 209.2 L731.9 210.6 L730.2 211.9 L728.5 213.3 L726.8 214.7 L725.1 216.1 L723.5 217.4 L721.8 218.8 L720.1 220.2 L718.5 221.6 L716.8 223.0 L715.2 224.4 L713.5 225.8 L711.9 227.2 L710.3 228.6 L708.7 230.0 L707.1 231.4 L705.6 232.8 L704.0 234.2 L702.4 235.6 L700.9 237.0 L699.3 238.4 L697.8 239.8 L696.3 241.2 L694.8 242.6 L693.3 244.0 L691.8 245.4 L690.3 246.9 L688.9 248.3 L687.4 249.7 L686.0 251.1 L684.6 252.6 L683.2 254.0 L681.8 255.4 L680.4 256.8 L679.0 258.3 L677.6 259.7 L676.3 261.1 L675.0 262.6 L673.6 264.0 L672.3 265.4 L671.0 266.9 L669.7 268.3 L668.5 269.7 L667.2 271.2 L666.0 272.6 L664.7 274.0 L663.5 275.5 L662.3 276.9 L661.1 278.4 L660.0 279.8 L658.8 281.2 L657.7 282.7 L656.5 284.1 L655.4 285.6 L654.3 287.0 L653.2 288.5 L652.2 289.9 L651.1 291.4 L650.1 292.8 L649.1 294.3 L648.0 295.7 L647.1 297.1 L646.1 298.6 L645.1 300.0 L644.2 301.5 L643.2 302.9 L642.3 304.4 L641.4 305.8 L640.5 307.3 L639.7 308.7 L638.8 310.2 L638.0 311.6 L637.2 313.1 L636.3 314.5 L635.6 316.0 L634.8 317.5 L634.0 318.9 L633.3 320.4 L632.6 321.8 L631.9 323.3 L631.2 324.7 L630.5 326.2 L629.8 327.6 L629.2 329.1 L628.6 330.5 L628.0 332.0 L627.4 333.4 L626.8 334.9 L626.2 336.3 L625.7 337.8 L625.2 339.2 L624.7 340.7 L624.2 342.1 L623.7 343.6 L623.2 345.0 L622.8 346.5 L622.4 347.9 L622.0 349.3 L621.6 350.8 L621.2 352.2 L620.9 353.7 L620.5 355.1 L620.2 356.6 L619.9 358.0 L619.6 359.5 L619.3 360.9 L619.1 362.3 L618.8 363.8 L618.6 365.2 L618.4 366.7 L618.2 368.1 L618.0 369.5 L617.9 371.0 L617.7 372.4 L617.6 373.9 L617.5 375.3 L617.4 376.7 L617.4 378.2 L617.3 379.6 L617.3 381.0 L617.2 382.4 L617.2 383.9 L617.2 385.3 L617.3 386.7 L617.3 388.2 L617.4 389.6 L617.4 391.0 L617.5 392.4 L617.6 393.8 L617.7 395.3 L617.9 396.7 L618.0 398.1 M1079.6 87.5 L1079.3 87.9 L1079.1 88.4 L1079.1 89.0 L1079.1 89.5 L1079.2 90.1 L1079.4 90.7 L1079.8 91.4 L1080.2 92.1 L1080.6 92.8 L1081.2 93.6 L1081.8 94.4 L1082.5 95.2 L1083.3 96.1 L1084.1 96.9 L1085.0 97.8 L1086.0 98.8 L1087.0 99.7 L1088.0 100.7 L1089.1 101.7 L1090.3 102.7 L1091.5 103.7 L1092.7 104.8 L1094.0 105.8 L1095.3 106.9 L1096.6 108.0 L1098.0 109.2 L1099.4 110.3 L1100.8 111.4 L1102.2 112.6 L1103.7 113.8 L1105.2 115.0 L1106.7 116.2 L1108.2 117.4 L1109.7 118.6 L1111.3 119.9 L1112.9 121.1 L1114.4 122.4 L1116.0 123.7 L1117.6 125.0 L1119.2 126.3 L1120.8 127.6 L1122.5 128.9 L1124.1 130.2 L1125.7 131.5 L1127.3 132.8 L1129.0 134.2 L1130.6 135.5 L1132.3 136.9 L1133.9 138.2 L1135.5 139.6 L1137.2 141.0 L1138.8 142.4 L1140.4 143.7 L1142.0 145.1 L1143.7 146.5 L1145.3 147.9 L1146.9 149.3 L1148.5 150.7 L1150.1 152.2 L1151.7 153.6 L1153.3 155.0 L1154.8 156.4 L1156.4 157.9 L1157.9 159.3 L1159.5 160.7 L1161.0 162.2 L1162.6 163.6 L1164.1 165.1 L1165.6 166.5 L1167.1 168.0 L1168.6 169.4 L1170.0 170.9 L1171.5 172.4 L1172.9 173.8 L1174.4 175.3 L1175.8 176.8 L1177.2 178.2 L1178.6 179.7 L1180.0 181.2 L1181.3 182.7 L1182.7 184.1 L1184.0 185.6 L1185.3 187.1 L1186.6 188.6 L1187.9 190.1 L1189.2 191.6 L1190.5 193.1 L1191.7 194.6 L1192.9 196.1 L1194.1 197.6 L1195.3 199.1 L1196.5 200.6 L1197.7 202.1 L1198.8 203.6 L1199.9 205.1 L1201.0 206.6 L1202.1 208.1 L1203.2 209.6 L1204.2 211.1 L1205.2 212.7 L1206.2 214.2 L1207.2 215.7 L1208.2 217.2 L1209.2 218.7 L1210.1 220.2 L1211.0 221.8 L1211.9 223.3 L1212.8 224.8 L1213.6 226.3 L1214.5 227.9 L1215.3 229.4 L1216.1 230.9 L1216.9 232.4 L1217.6 234.0 L1218.3 235.5 L1219.1 237.0 L1219.7 238.5 L1220.4 240.1 L1221.1 241.6 L1221.7 243.1 L1222.3 244.7 L1222.9 246.2 L1223.5 247.7 L1224.0 249.3 L1224.5 250.8 L1225.0 252.4 L1225.5 253.9 L1226.0 255.4 L1226.4 257.0 L1226.8 258.5 L1227.2 260.0 L1227.6 261.6 L1227.9 263.1 L1228.3 264.7 L1228.6 266.2 L1228.8 267.7 L1229.1 269.3 L1229.3 270.8 L1229.6 272.4 L1229.7 273.9 L1229.9 275.5 L1230.1 277.0 L1230.2 278.5 L1230.3 280.1 L1230.4 281.6 L1230.4 283.2 L1230.5 284.7 L1230.5 286.3 L1230.5 287.8 L1230.5 289.4 L1230.4 290.9 L1230.3 292.5 L1230.2 294.0 L1230.1 295.6 L1230.0 297.1 L1229.8 298.6 L1229.6 300.2 L1229.4 301.7 L1229.2 303.3 L1228.9 304.8 L1228.6 306.4 L1228.3 307.9 L1228.0 309.5 L1227.7 311.0 L1227.3 312.6 L1226.9 314.1 L1226.5 315.7 L1226.0 317.2 L1225.6 318.8 L1225.1 320.3 L1224.6 321.9 L1224.1 323.4 L1223.5 325.0 L1223.0 326.5 L1222.4 328.1 L1221.8 329.6 L1221.1 331.2 L1220.5 332.7 L1219.8 334.2 L1219.1 335.8 L1218.3 337.3 L1217.6 338.9 L1216.8 340.4 L1216.0 342.0 L1215.2 343.5 L1214.4 345.1 L1213.5 346.6 L1212.7 348.2 L1211.8 349.7 L1210.9 351.3 L1209.9 352.8 L1209.0 354.4 L1208.0 355.9 L1207.0 357.4 L1206.0 359.0 L1204.9 360.5 L1203.8 362.1 L1202.8 363.6 L1201.7 365.2 L1200.5 366.7 L1199.4 368.3 L1198.2 369.8 L1197.0 371.3 L1195.8 372.9 L1194.6 374.4 L1193.3 376.0 L1192.1 377.5 L1190.8 379.0 L1189.5 380.6 L1188.2 382.1 L1186.8 383.7 L1185.5 385.2 L1184.1 386.7 L1182.7 388.3 L1181.2 389.8 L1179.8 391.4 L1178.4 392.9 L1176.9 394.4 L1175.4 396.0 L1173.9 397.5 L1172.3 399.0 L1170.8 400.6 L1169.2 402.1 L1167.6 403.6 L1166.0 405.1 L1164.4 406.7 L1162.8 408.2 L1161.1 409.7 L1159.5 411.3 L1157.8 412.8 L1156.1 414.3 L1154.4 415.8 L1152.6 417.4 L1150.9 418.9 L1149.1 420.4 L1147.3 421.9 L1145.5 423.4 L1143.7 425.0 L1141.9 426.5 L1140.1 428.0 M1150.7 174.9 L1148.0 173.5 L1145.3 172.1 L1142.6 170.7 L1139.9 169.3 L1137.2 167.9 L1134.5 166.5 L1131.8 165.2 L1129.0 163.8 L1126.3 162.4 L1123.5 161.0 L1120.8 159.7 L1118.0 158.3 L1115.3 157.0 L1112.5 155.6 L1109.7 154.3 L1107.0 153.0 L1104.2 151.6 L1101.4 150.3 L1098.7 149.0 L1095.9 147.7 L1093.1 146.4 L1090.3 145.1 L1087.5 143.8 L1084.8 142.5 L1082.0 141.2 L1079.2 140.0 L1076.5 138.7 L1073.7 137.5 L1070.9 136.2 L1068.2 135.0 L1065.4 133.8 L1062.7 132.5 L1060.0 131.3 L1057.2 130.2 L1054.5 129.0 L1051.8 127.8 L1049.1 126.6 L1046.4 125.5 L1043.7 124.4 L1041.1 123.2 L1038.4 122.1 L1035.8 121.0 L1033.2 120.0 L1030.5 118.9 L1027.9 117.8 L1025.4 116.8 L1022.8 115.8 L1020.3 114.8 L1017.7 113.8 L1015.2 112.8 L1012.8 111.9 L1010.3 111.0 L1007.9 110.1 L1005.4 109.2 L1003.0 108.3 L1000.7 107.5 L998.3 106.7 L996.0 105.9 L993.7 105.1 L991.4 104.4 L989.2 103.6 L987.0 102.9 L984.8 102.3 L982.6 101.7 L980.5 101.0 L978.4 100.5 L976.4 99.9 L974.3 99.4 L972.3 98.9 L970.3 98.5 L968.4 98.1 L966.5 97.7 L964.6 97.3 L962.7 97.0 L960.9 96.7 L959.1 96.5 L957.3 96.3 L955.6 96.1 L953.8 96.0 L952.1 95.9 L950.5 95.8 L948.8 95.8 L947.2 95.8 L945.6 95.8 L944.1 95.9 L942.5 96.0 L941.0 96.2 L939.5 96.4 L938.0 96.6 L936.5 96.9 L935.1 97.2 L933.6 97.6 L932.2 97.9 L930.8 98.3 L929.4 98.8 L928.0 99.2 L926.6 99.7 L925.2 100.3 L923.9 100.9 L922.5 101.4 L921.2 102.1 L919.8 102.7 L918.5 103.4 L917.2 104.1 L915.9 104.9 L914.6 105.6 L913.2 106.4 L911.9 107.2 L910.6 108.0 L909.3 108.9 L908.0 109.8 L906.7 110.7 L905.4 111.6 L904.1 112.5 L902.8 113.5 L901.5 114.5 L900.2 115.5 L898.9 116.5 L897.6 117.5 L896.3 118.5 L895.0 119.6 L893.7 120.7 L892.4 121.8 L891.1 122.9 L889.8 124.0 L888.5 125.1 L887.1 126.3 L885.8 127.4 L884.5 128.6 L883.2 129.8 L881.9 131.0 L880.6 132.2 L879.3 133.4 L877.9 134.6 L876.6 135.8 L875.3 137.0 L874.0 138.3 L872.7 139.6 L871.3 140.8 L870.0 142.1 L868.7 143.4 L867.4 144.7 L866.1 145.9 L864.7 147.2 L863.4 148.6 L862.1 149.9 L860.8 151.2 L859.4 152.5 L858.1 153.9 L856.8 155.2 L855.5 156.5 L854.2 157.9 L852.8 159.2 L851.5 160.6 L850.2 162.0 L848.9 163.3 L847.6 164.7 L846.3 166.1 L845.0 167.5 L843.6 168.9 L842.3 170.2 L841.0 171.6 L839.7 173.0 L838.4 174.4 L837.1 175.8 L835.8 177.3 L834.6 178.7 L833.3 180.1 L832.0 181.5 L830.7 182.9 L829.4 184.4 L828.1 185.8 L826.9 187.2 L825.6 188.6 L824.3 190.1 L823.1 191.5 L821.8 193.0 L820.5 194.4 L819.3 195.9 L818.0 197.3 L816.8 198.8 L815.6 200.2 L814.3 201.7 L813.1 203.1 L811.9 204.6 L810.7 206.0 L809.4 207.5 L808.2 209.0 L807.0 210.4 L805.8 211.9 L804.6 213.4 L803.5 214.8 L802.3 216.3 L801.1 217.8 L799.9 219.3 L798.8 220.7 L797.6 222.2 L796.4 223.7 L795.3 225.2 L794.2 226.7 L793.0 228.2 L791.9 229.6 L790.8 231.1 L789.7 232.6 L788.6 234.1 L787.5 235.6 L786.4 237.1 L785.3 238.6 L784.2 240.1 L783.1 241.6 L782.1 243.1 L781.0 244.6 L780.0 246.1 L778.9 247.6 L777.9 249.1 L776.9 250.6 L775.9 252.1 L774.8 253.6 L773.8 255.1 L772.9 256.6 L771.9 258.1 L770.9 259.6 L769.9 261.1 L769.0 262.6 L768.0 264.1 L767.1 265.6 L766.1 267.1 L765.2 268.6 L764.3 270.1 L763.4 271.7 L762.5 273.2 L761.6 274.7 L760.7 276.2 L759.9 277.7 L759.0 279.2 L758.2 280.7 L757.3 282.2 L756.5 283.8 L755.7 285.3 L754.8 286.8 L754.0 288.3 L753.2 289.8 L752.5 291.3 L751.7 292.8 L750.9 294.4 L750.2 295.9 L749.4 297.4 L748.7 298.9 L748.0 300.4 L747.3 301.9 L746.6 303.5 L745.9 305.0 L745.2 306.5 L744.5 308.0 L743.8 309.5 L743.2 311.0 L742.6 312.6 L741.9 314.1 L741.3 315.6 L740.7 317.1 L740.1 318.6 L739.5 320.2 L738.9 321.7 L738.4 323.2 L737.8 324.7 L737.3 326.2 L736.8 327.7 L736.2 329.3 L735.7 330.8 L735.2 332.3 L734.7 333.8 L734.3 335.3 L733.8 336.9 L733.3 338.4 L732.9 339.9 L732.5 341.4 L732.0 342.9 L731.6 344.4 L731.2 346.0 L730.8 347.5 L730.5 349.0 L730.1 350.5 L729.8 352.0 L729.4 353.5 L729.1 355.0 L728.8 356.6 L728.5 358.1 L728.2 359.6 L727.9 361.1 L727.6 362.6 L727.3 364.1 L727.1 365.6 L726.9 367.1 L726.6 368.7 L726.4 370.2 L726.2 371.7 L726.0 373.2 L725.8 374.7 L725.7 376.2 L725.5 377.7 M977.0 131.3 L975.4 129.8 L973.7 128.4 L972.1 126.9 L970.4 125.4 L968.8 124.0 L967.2 122.5 L965.5 121.1 L963.9 119.7 L962.2 118.2 L960.6 116.8 L958.9 115.4 L957.3 114.0 L955.6 112.6 L954.0 111.2 L952.4 109.8 L950.7 108.4 L949.1 107.0 L947.5 105.7 L945.8 104.3 L944.2 103.0 L942.6 101.6 L941.0 100.3 L939.3 99.0 L937.7 97.7 L936.1 96.4 L934.5 95.1 L932.9 93.9 L931.3 92.6 L929.7 91.4 L928.2 90.2 L926.6 89.0 L925.0 87.9 L923.5 86.7 L921.9 85.6 L920.4 84.5 L918.8 83.4 L917.3 82.4 L915.8 81.3 L914.3 80.4 L912.8 79.4 L911.2 78.5 L909.7 77.6 L908.3 76.7 L906.8 75.9 L905.3 75.1 L903.8 74.4 L902.3 73.7 L900.8 73.1 L899.3 72.5 L897.9 71.9 L896.4 71.4 L894.9 71.0 L893.4 70.6 L891.8 70.3 L890.3 70.1 L888.7 69.9 L887.2 69.7 L885.6 69.6 L884.0 69.6 L882.3 69.7 L880.6 69.8 L878.9 70.0 L877.2 70.2 L875.4 70.5 L873.6 70.8 L871.8 71.2 L869.9 71.7 L867.9 72.2 L866.0 72.8 L864.0 73.4 L861.9 74.1 L859.8 74.8 L857.7 75.5 L855.6 76.3 L853.4 77.2 L851.1 78.1 L848.9 79.0 L846.6 79.9 L844.2 80.9 L841.9 81.9 L839.5 82.9 L837.1 84.0 L834.6 85.1 L832.2 86.2 L829.7 87.3 L827.1 88.5 L824.6 89.7 L822.0 90.9 L819.5 92.1 L816.9 93.3 L814.3 94.6 L811.6 95.8 L809.0 97.1 L806.3 98.4 L803.7 99.7 L801.0 101.0 L798.3 102.4 L795.6 103.7 L792.9 105.0 L790.2 106.4 L787.5 107.8 L784.7 109.2 L782.0 110.5 L779.3 111.9 L776.5 113.3 L773.8 114.7 L771.1 116.2 L768.3 117.6 L765.6 119.0 L762.8 120.5 L760.1 121.9 L757.3 123.3 L754.6 124.8 L751.9 126.2 L749.1 127.7 L746.4 129.2 L743.7 130.6 L740.9 132.1 L738.2 133.6 L735.5 135.1 L732.8 136.6 L730.1 138.0 L727.4 139.5 L724.7 141.0 L722.0 142.5 L719.4 144.0 L716.7 145.5 L714.0 147.0 L711.4 148.6 L708.7 150.1 L706.1 151.6 L703.5 153.1 L700.9 154.6 L698.3 156.1 L695.7 157.7 L693.1 159.2 L690.5 160.7 L688.0 162.2 L685.4 163.8 L682.9 165.3 L680.4 166.8 L677.9 168.4 L675.4 169.9 L672.9 171.5 L670.4 173.0 L668.0 174.5 L665.6 176.1 L663.1 177.6 L660.7 179.2 L658.3 180.7 L656.0 182.3 L653.6 183.8 L651.2 185.4 L648.9 186.9 L646.6 188.5 L644.3 190.0 L642.0 191.6 L639.8 193.1 L637.5 194.7 L635.3 196.3 L633.1 197.8 L630.9 199.4 L628.7 200.9 L626.6 202.5 L624.4 204.1 L622.3 205.6 L620.2 207.2 L618.1 208.8 L616.1 210.3 L614.0 211.9 L612.0 213.5 L610.0 215.0 L608.0 216.6 L606.1 218.2 L604.1 219.7 L602.2 221.3 L600.3 222.9 L598.4 224.4 L596.6 226.0 L594.7 227.6 L592.9 229.2 L591.1 230.7 L589.4 232.3 L587.6 233.9 L585.9 235.4 L584.2 237.0 L582.5 238.6 L580.8 240.2 L579.2 241.8 L577.6 243.3 L576.0 244.9 L574.4 246.5 L572.9 248.1 L571.4 249.6 L569.9 251.2 L568.4 252.8 L566.9 254.4 L565.5 255.9 L564.1 257.5 L562.7 259.1 L561.4 260.7 L560.0 262.3 L558.7 263.8 L557.5 265.4 L556.2 267.0 L555.0 268.6 L553.8 270.2 L552.6 271.8 L551.4 273.3 L550.3 274.9 L549.2 276.5 L548.1 278.1 L547.1 279.7 L546.0 281.2 L545.0 282.8 L544.1 284.4 L543.1 286.0 L542.2 287.6 L541.3 289.2 L540.4 290.7 L539.6 292.3 L538.7 293.9 L537.9 295.5 L537.2 297.1 L536.4 298.7 L535.7 300.2 L535.0 301.8 L534.4 303.4 L533.7 305.0 L533.1 306.6 L532.5 308.2 L532.0 309.7 L531.5 311.3 L531.0 312.9 L530.5 314.5 L530.0 316.1 L529.6 317.7 L529.2 319.3 L528.9 320.8 L528.5 322.4 L528.2 324.0 L527.9 325.6 L527.7 327.2 L527.4 328.8 L527.2 330.3 L527.0 331.9 L526.9 333.5 L526.8 335.1 L526.7 336.7 L526.6 338.3 L526.6 339.8 L526.5 341.4 L526.6 343.0 L526.6 344.6 L526.7 346.2 L526.8 347.8 L526.9 349.4 L527.0 350.9 L527.2 352.5 L527.4 354.1 L527.6 355.7 L527.9 357.3 L528.2 358.8 L528.5 360.4 L528.8 362.0 L529.2 363.6 L529.6 365.2 L530.0 366.8 L530.4 368.3 L530.9 369.9 L531.4 371.5 L531.9 373.1 L532.5 374.7 L533.1 376.2 L533.7 377.8 L534.3 379.4 L535.0 381.0 L535.6 382.6 L536.4 384.1 L537.1 385.7 M738.0 95.0 L737.4 95.8 L736.8 96.7 L736.2 97.6 L735.4 98.5 L734.7 99.4 L733.8 100.4 L733.0 101.4 L732.1 102.4 L731.1 103.4 L730.1 104.5 L729.1 105.5 L728.1 106.6 L727.0 107.7 L725.9 108.8 L724.7 110.0 L723.6 111.1 L722.4 112.3 L721.2 113.4 L720.0 114.6 L718.7 115.8 L717.5 117.0 L716.2 118.3 L714.9 119.5 L713.6 120.8 L712.3 122.0 L711.0 123.3 L709.7 124.6 L708.3 125.9 L707.0 127.2 L705.7 128.5 L704.3 129.8 L703.0 131.1 L701.6 132.4 L700.2 133.8 L698.9 135.1 L697.5 136.5 L696.2 137.8 L694.8 139.2 L693.4 140.6 L692.1 141.9 L690.7 143.3 L689.4 144.7 L688.0 146.1 L686.7 147.5 L685.3 148.9 L684.0 150.3 L682.7 151.7 L681.3 153.1 L680.0 154.5 L678.7 156.0 L677.4 157.4 L676.1 158.8 L674.8 160.3 L673.5 161.7 L672.3 163.1 L671.0 164.6 L669.8 166.0 L668.5 167.5 L667.3 169.0 L666.1 170.4 L664.9 171.9 L663.7 173.3 L662.5 174.8 L661.3 176.3 L660.1 177.7 L659.0 179.2 L657.8 180.7 L656.7 182.2 L655.6 183.7 L654.5 185.1 L653.4 186.6 L652.3 188.1 L651.3 189.6 L650.2 191.1 L649.2 192.6 L648.2 194.1 L647.2 195.6 L646.2 197.1 L645.2 198.6 L644.2 200.1 L643.3 201.6 L642.4 203.1 L641.4 204.6 L640.6 206.1 L639.7 207.6 L638.8 209.1 L638.0 210.6 L637.1 212.1 L636.3 213.7 L635.5 215.2 L634.7 216.7 L633.9 218.2 L633.2 219.7 L632.5 221.2 L631.7 222.8 L631.0 224.3 L630.4 225.8 L629.7 227.3 L629.1 228.9 L628.4 230.4 L627.8 231.9 L627.2 233.4 L626.6 235.0 L626.1 236.5 L625.5 238.0 L625.0 239.6 L624.5 241.1 L624.0 242.6 L623.6 244.2 L623.1 245.7 L622.7 247.2 L622.3 248.8 L621.9 250.3 L621.5 251.8 L621.2 253.4 L620.8 254.9 L620.5 256.4 L620.2 258.0 L619.9 259.5 L619.7 261.1 L619.4 262.6 L619.2 264.1 L619.0 265.7 L618.8 267.2 L618.7 268.8 L618.5 270.3 L618.4 271.8 L618.3 273.4 L618.2 274.9 L618.1 276.5 L618.1 278.0 L618.0 279.6 L618.0 281.1 L618.0 282.7 L618.1 284.2 L618.1 285.7 L618.2 287.3 L618.3 288.8 L618.4 290.4 L618.5 291.9 L618.7 293.5 L618.8 295.0 L619.0 296.6 L619.2 298.1 L619.4 299.7 L619.7 301.2 L619.9 302.8 L620.2 304.3 L620.5 305.8 L620.9 307.4 L621.2 308.9 L621.6 310.5 L621.9 312.0 L622.3 313.6 L622.8 315.1 L623.2 316.7 L623.6 318.2 L624.1 319.8 L624.6 321.3 L625.1 322.9 L625.7 324.4 L626.2 326.0 L626.8 327.5 L627.4 329.1 L628.0 330.6 L628.6 332.2 L629.3 333.7 L629.9 335.3 L630.6 336.8 L631.3 338.4 L632.1 339.9 L632.8 341.4 L633.6 343.0 L634.3 344.5 L635.1 346.1 L636.0 347.6 L636.8 349.2 L637.6 350.7 L638.5 352.3 L639.4 353.8 L640.3 355.4 L641.2 356.9 L642.2 358.5 L643.1 360.0 L644.1 361.5 L645.1 363.1 L646.1 364.6 L647.2 366.2 L648.2 367.7 L649.3 369.3 L650.4 370.8 L651.5 372.3 L652.6 373.9 L653.7 375.4 L654.9 377.0 L656.0 378.5 L657.2 380.0 L658.4 381.6 L659.6 383.1 L660.9 384.7 L662.1 386.2 L663.4 387.7 L664.7 389.3 L666.0 390.8 L667.3 392.3 L668.6 393.9 L670.0 395.4 L671.3 396.9 L672.7 398.5 L674.1 400.0 L675.5 401.5 L676.9 403.1 L678.3 404.6 L679.8 406.1 L681.3 407.7 L682.7 409.2 L684.2 410.7 L685.7 412.2 L687.3 413.8 L688.8 415.3 L690.3 416.8 L691.9 418.3 L693.5 419.8 L695.1 421.4 L696.7 422.9 L698.3 424.4 L699.9 425.9 L701.6 427.4 L703.2 428.9 L704.9 430.5 L706.6 432.0 L708.2 433.5 L709.9 435.0 L711.7 436.5 L713.4 438.0 L715.1 439.5 L716.9 441.0 L718.6 442.5 L720.4 444.0 L722.2 445.5" fill="none" stroke="#6a6a6a" stroke-width="1.3" stroke-dasharray="1.3 2.4"/>
<path d="M1054.7 106.6L1040.0 104.0 M1105.1 129.0L1129.4 132.8 M1146.0 130.9L1173.5 141.7 M1149.8 142.4L1165.2 153.2 M1118.5 160.3L1131.3 170.5 M1039.6 153.2L1049.2 164.0 M1037.0 162.8L1051.0 171.0 M1079.6 87.5L1085.3 85.5 M1102.6 121.3L1111.5 117.5 M1150.7 174.9L1160.3 180.0 M977.0 131.3L984.7 138.3 M719 86 Q734 84 740 90 L738 95" fill="none" stroke="#a0a0a0" stroke-width="1.4"/>
<path d="M484.4 240.4 L483.0 241.7 L481.5 243.0 L480.1 244.2 L478.6 245.5 L477.0 246.7 L475.5 247.9 L473.9 249.0 L472.3 250.2 L470.6 251.3 L469.0 252.4 L467.4 253.5 L465.7 254.5 L464.0 255.4 L462.4 256.4 L460.7 257.3 L459.1 258.1 L457.4 258.9 L455.8 259.6 L454.2 260.3 L452.5 261.0 L451.0 261.6 L449.4 262.1 L447.8 262.5 L446.3 262.9 L444.8 263.3 L443.4 263.6 L441.9 263.8 L440.5 263.9 L439.2 264.0 L437.9 264.1 L436.7 264.0 L435.5 263.9 L434.3 263.8 L433.2 263.6 L432.2 263.3 L431.3 262.9 L430.4 262.5 L429.6 262.1 L428.9 261.6 L428.2 261.0 L427.7 260.3 L427.2 259.6 L426.8 258.9 L426.5 258.1 L426.3 257.3 L426.2 256.4 L426.2 255.4 L426.3 254.5 L426.5 253.5 L426.8 252.4 L427.2 251.3 L427.7 250.2 L428.4 249.0 L429.1 247.9 L429.9 246.7 L430.9 245.5 L431.9 244.2 L433.0 243.0 L434.3 241.7 L435.6 240.4 L437.0 239.2 L438.5 237.9 L440.1 236.6 L441.8 235.4 L443.6 234.1 L445.4 232.9 L447.3 231.6 L449.2 230.4 L451.2 229.3 L453.3 228.1 L455.3 227.0 L457.4 225.9 L459.5 224.9 L461.7 223.8 L463.8 222.9 L466.0 222.0 L468.1 221.1 L470.2 220.3 L472.3 219.5 L474.3 218.8 L476.3 218.2 L478.2 217.6 L480.1 217.1 L482.0 216.6 L483.7 216.2 L485.4 215.9 L487.0 215.6 L488.5 215.5 L489.9 215.4 L491.2 215.3 L492.5 215.4 L493.6 215.5 L494.6 215.6 L495.5 215.9 L496.3 216.2 L497.0 216.6 L497.6 217.1 L498.0 217.6 L498.4 218.2 L498.6 218.8 L498.8 219.5 L498.8 220.3 L498.7 221.1 L498.5 222.0 L498.3 222.9 L497.9 223.8 L497.4 224.9 L496.9 225.9 L496.2 227.0 L495.5 228.1 L494.7 229.3 L493.8 230.4 L492.8 231.6 L491.8 232.9 L490.7 234.1 L489.5 235.4 L488.3 236.6 L487.1 237.9 L485.7 239.2 L484.4 240.4Z" fill="none" stroke="#55cc22" stroke-width="2.1"/>
<path d="M738.9 315.8 L738.9 317.1 L738.7 318.4 L738.6 319.6 L738.3 320.9 L738.0 322.1 L737.7 323.3 L737.3 324.5 L736.8 325.7 L736.3 326.8 L735.7 327.9 L735.1 329.0 L734.5 330.0 L733.7 331.0 L733.0 332.0 L732.2 332.9 L731.3 333.8 L730.4 334.6 L729.5 335.4 L728.5 336.1 L727.4 336.8 L726.4 337.4 L725.3 337.9 L724.2 338.4 L723.0 338.8 L721.8 339.2 L720.6 339.5 L719.4 339.7 L718.2 339.9 L716.9 340.0 L715.7 340.0 L714.4 340.0 L713.1 339.9 L711.9 339.7 L710.6 339.5 L709.3 339.2 L708.1 338.8 L706.9 338.4 L705.6 337.9 L704.5 337.4 L703.3 336.8 L702.1 336.1 L701.0 335.4 L700.0 334.6 L699.0 333.8 L698.0 332.9 L697.0 332.0 L696.2 331.0 L695.3 330.0 L694.6 329.0 L693.8 327.9 L693.2 326.8 L692.6 325.7 L692.1 324.5 L691.6 323.3 L691.3 322.1 L691.0 320.9 L690.7 319.6 L690.6 318.4 L690.5 317.1 L690.5 315.8 L690.6 314.6 L690.7 313.3 L690.9 312.1 L691.2 310.8 L691.6 309.6 L692.0 308.4 L692.5 307.2 L693.1 306.0 L693.7 304.9 L694.4 303.7 L695.2 302.7 L696.0 301.6 L696.9 300.6 L697.8 299.6 L698.8 298.7 L699.8 297.8 L700.9 297.0 L702.0 296.2 L703.2 295.5 L704.3 294.9 L705.5 294.2 L706.7 293.7 L708.0 293.2 L709.2 292.8 L710.5 292.4 L711.8 292.1 L713.1 291.9 L714.3 291.7 L715.6 291.6 L716.9 291.6 L718.1 291.6 L719.4 291.7 L720.6 291.9 L721.8 292.1 L723.0 292.4 L724.2 292.8 L725.3 293.2 L726.4 293.7 L727.5 294.2 L728.5 294.9 L729.5 295.5 L730.4 296.2 L731.3 297.0 L732.2 297.8 L733.0 298.7 L733.8 299.6 L734.5 300.6 L735.2 301.6 L735.8 302.7 L736.3 303.7 L736.9 304.9 L737.3 306.0 L737.7 307.2 L738.1 308.4 L738.3 309.6 L738.6 310.8 L738.7 312.1 L738.9 313.3 L738.9 314.6 L738.9 315.8Z" fill="none" stroke="#ee82ee" stroke-width="2.1"/>
<path d="M749.7 264.5 L749.3 265.7 L748.9 267.0 L748.4 268.2 L747.8 269.4 L747.2 270.7 L746.5 271.8 L745.8 273.0 L745.0 274.2 L744.2 275.3 L743.3 276.4 L742.4 277.4 L741.5 278.4 L740.5 279.4 L739.5 280.3 L738.4 281.2 L737.4 282.1 L736.2 282.9 L735.1 283.6 L733.9 284.3 L732.7 284.9 L731.5 285.5 L730.3 286.0 L729.0 286.5 L727.8 286.9 L726.5 287.3 L725.2 287.5 L724.0 287.8 L722.7 287.9 L721.4 288.0 L720.2 288.1 L718.9 288.0 L717.7 287.9 L716.5 287.8 L715.3 287.5 L714.1 287.3 L712.9 286.9 L711.8 286.5 L710.8 286.0 L709.7 285.5 L708.7 284.9 L707.8 284.3 L706.9 283.6 L706.0 282.9 L705.2 282.1 L704.5 281.2 L703.8 280.3 L703.2 279.4 L702.6 278.4 L702.1 277.4 L701.7 276.4 L701.4 275.3 L701.1 274.2 L700.9 273.0 L700.8 271.8 L700.7 270.7 L700.7 269.4 L700.8 268.2 L701.0 267.0 L701.3 265.7 L701.6 264.5 L702.0 263.2 L702.5 262.0 L703.0 260.7 L703.7 259.5 L704.4 258.2 L705.1 257.0 L705.9 255.8 L706.8 254.7 L707.8 253.5 L708.8 252.4 L709.8 251.3 L710.9 250.2 L712.1 249.2 L713.3 248.2 L714.5 247.3 L715.7 246.4 L717.0 245.5 L718.3 244.7 L719.7 244.0 L721.0 243.3 L722.4 242.7 L723.7 242.1 L725.1 241.6 L726.5 241.2 L727.8 240.8 L729.2 240.5 L730.5 240.3 L731.8 240.1 L733.1 240.0 L734.4 239.9 L735.6 240.0 L736.8 240.1 L738.0 240.3 L739.1 240.5 L740.2 240.8 L741.3 241.2 L742.3 241.6 L743.2 242.1 L744.2 242.7 L745.0 243.3 L745.8 244.0 L746.6 244.7 L747.2 245.5 L747.9 246.4 L748.5 247.3 L749.0 248.2 L749.4 249.2 L749.8 250.2 L750.1 251.3 L750.4 252.4 L750.6 253.5 L750.8 254.7 L750.8 255.8 L750.9 257.0 L750.8 258.2 L750.7 259.5 L750.6 260.7 L750.3 262.0 L750.1 263.2 L749.7 264.5Z" fill="none" stroke="#ff2200" stroke-width="2.1"/>
<path d="M756.8 243.7 L756.3 244.9 L755.7 246.2 L755.0 247.4 L754.3 248.6 L753.6 249.8 L752.8 251.0 L752.0 252.2 L751.1 253.3 L750.2 254.4 L749.2 255.5 L748.2 256.5 L747.1 257.5 L746.0 258.5 L744.9 259.4 L743.8 260.3 L742.6 261.1 L741.4 261.9 L740.2 262.7 L738.9 263.3 L737.7 264.0 L736.4 264.6 L735.1 265.1 L733.8 265.5 L732.5 265.9 L731.2 266.3 L729.9 266.5 L728.6 266.8 L727.3 266.9 L726.0 267.0 L724.8 267.0 L723.5 267.0 L722.3 266.9 L721.1 266.8 L719.9 266.5 L718.8 266.3 L717.7 265.9 L716.6 265.5 L715.6 265.1 L714.6 264.6 L713.7 264.0 L712.8 263.3 L712.0 262.7 L711.2 261.9 L710.5 261.1 L709.8 260.3 L709.2 259.4 L708.7 258.5 L708.2 257.5 L707.9 256.5 L707.5 255.5 L707.3 254.4 L707.2 253.3 L707.1 252.2 L707.1 251.0 L707.1 249.8 L707.3 248.6 L707.5 247.4 L707.8 246.2 L708.2 244.9 L708.7 243.7 L709.2 242.4 L709.8 241.2 L710.5 239.9 L711.2 238.7 L712.1 237.4 L713.0 236.2 L713.9 235.0 L714.9 233.8 L716.0 232.7 L717.1 231.5 L718.3 230.4 L719.5 229.4 L720.7 228.3 L722.0 227.3 L723.4 226.4 L724.7 225.5 L726.1 224.6 L727.5 223.8 L728.9 223.1 L730.3 222.4 L731.7 221.7 L733.2 221.2 L734.6 220.6 L736.0 220.2 L737.4 219.8 L738.8 219.5 L740.1 219.3 L741.5 219.1 L742.8 219.0 L744.0 218.9 L745.3 219.0 L746.5 219.1 L747.6 219.3 L748.7 219.5 L749.8 219.8 L750.8 220.2 L751.8 220.6 L752.7 221.2 L753.5 221.7 L754.3 222.4 L755.0 223.1 L755.7 223.8 L756.3 224.6 L756.9 225.5 L757.3 226.4 L757.7 227.3 L758.1 228.3 L758.4 229.4 L758.6 230.4 L758.7 231.5 L758.8 232.7 L758.9 233.8 L758.8 235.0 L758.7 236.2 L758.5 237.4 L758.3 238.7 L758.0 239.9 L757.7 241.2 L757.3 242.4 L756.8 243.7Z" fill="none" stroke="#d21ef5" stroke-width="2.1"/>
<path d="M435.3 244.3h6M438.3 241.3v6" stroke="#ff2020" stroke-width="1.3"/>
<path d="M476.3 234.3h6M479.3 231.3v6" stroke="#ff2020" stroke-width="1.3"/>
<path d="M730.0 259.0h6M733.0 256.0v6" stroke="#ff2020" stroke-width="1.3"/>
<path d="M722.8 264.0h6M725.8 261.0v6" stroke="#ff2020" stroke-width="1.3"/>
<path d="M727.8 265.7h6M730.8 262.7v6" stroke="#ff2020" stroke-width="1.3"/>
<path d="M721.3 263.2h6M724.3 260.2v6" stroke="#ff2020" stroke-width="1.3"/>
<path d="M720.5 262.9h6M723.5 259.9v6" stroke="#ff2020" stroke-width="1.3"/>
<path d="M718.9 259.8h6M721.9 256.8v6" stroke="#ff2020" stroke-width="1.3"/>
<path d="M722.7 263.9h6M725.7 260.9v6" stroke="#ff2020" stroke-width="1.3"/>
<path d="M722.8 264.0h6M725.8 261.0v6" stroke="#ff2020" stroke-width="1.3"/>
<path d="M724.0 264.9h6M727.0 261.9v6" stroke="#ff2020" stroke-width="1.3"/>
<path d="M721.0 263.3h6M724.0 260.3v6" stroke="#ff2020" stroke-width="1.3"/>
<path d="M722.8 264.0h6M725.8 261.0v6" stroke="#ff2020" stroke-width="1.3"/>
<path d="M732.2 242.9h6M735.2 239.9v6" stroke="#ff2020" stroke-width="1.3"/>
<path d="M730.0 243.0h6M733.0 240.0v6" stroke="#ff2020" stroke-width="1.3"/>
<path d="M733.3 244.1h6M736.3 241.1v6" stroke="#ff2020" stroke-width="1.3"/>
<path d="M732.8 243.9h6M735.8 240.9v6" stroke="#ff2020" stroke-width="1.3"/>
<path d="M726.3 238.8h6M729.3 235.8v6" stroke="#ff2020" stroke-width="1.3"/>
<path d="M729.0 240.5h6M732.0 237.5v6" stroke="#ff2020" stroke-width="1.3"/>
<path d="M730.0 243.0h6M733.0 240.0v6" stroke="#ff2020" stroke-width="1.3"/>
<path d="M711.7 315.8h6M714.7 312.8v6" stroke="#ff2020" stroke-width="1.3"/>
<path d="M711.7 315.8h6M714.7 312.8v6" stroke="#ff2020" stroke-width="1.3"/>
<path d="M711.7 315.8h6M714.7 312.8v6" stroke="#ff2020" stroke-width="1.3"/>
<text x="732.5" y="247.0" fill="#fff" font-size="10.8" text-anchor="middle">NTA</text>
<text x="725.8" y="267.3" fill="#fff" font-size="10.8" text-anchor="middle">STA</text>
<text x="715.0" y="319.0" fill="#fff" font-size="10.8" text-anchor="middle">OER</text>
<text x="458.3" y="243.3" fill="#fff" font-size="10.8" text-anchor="middle">LEO</text>
<text x="316.5" y="29.50" fill="#fff" font-size="13.9" style="font-family:'Liberation Mono',monospace" xml:space="preserve">UK00AP</text>
<text x="316.5" y="42.65" fill="#fff" font-size="13.9" style="font-family:'Liberation Mono',monospace" xml:space="preserve">Beg: 20251110 18:16:52 (sol = 228.25°)</text>
<text x="316.5" y="55.80" fill="#fff" font-size="13.9" style="font-family:'Liberation Mono',monospace" xml:space="preserve">End: 20251111 04:26:20 (sol = 228.67°)</text>
<text x="316.5" y="68.95" fill="#fff" font-size="13.9" style="font-family:'Liberation Mono',monospace" xml:space="preserve">--------------------------------------</text>
<text x="316.5" y="82.10" fill="#fff" font-size="13.9" style="font-family:'Liberation Mono',monospace" xml:space="preserve">...: 17</text>
<text x="316.5" y="95.25" fill="#fff" font-size="13.9" style="font-family:'Liberation Mono',monospace" xml:space="preserve">STA: 13</text>
<text x="316.5" y="108.40" fill="#fff" font-size="13.9" style="font-family:'Liberation Mono',monospace" xml:space="preserve">NTA: 10</text>
<text x="316.5" y="121.55" fill="#fff" font-size="13.9" style="font-family:'Liberation Mono',monospace" xml:space="preserve">LEO: 2</text>
<text x="316.5" y="134.70" fill="#fff" font-size="13.9" style="font-family:'Liberation Mono',monospace" xml:space="preserve">OER: 2</text>
<line x1="75.0" y1="842.5" x2="75.0" y2="641.5" stroke="#4d4d4d" stroke-width="2.08" stroke-dasharray="2.08 3.44"/>
<line x1="219.0" y1="842.5" x2="219.0" y2="641.5" stroke="#4d4d4d" stroke-width="2.08" stroke-dasharray="2.08 3.44"/>
<line x1="365.1" y1="842.5" x2="365.1" y2="641.5" stroke="#4d4d4d" stroke-width="2.08" stroke-dasharray="2.08 3.44"/>
<line x1="506.1" y1="842.5" x2="506.1" y2="641.5" stroke="#4d4d4d" stroke-width="2.08" stroke-dasharray="2.08 3.44"/>
<line x1="651.0" y1="842.5" x2="651.0" y2="641.5" stroke="#4d4d4d" stroke-width="2.08" stroke-dasharray="2.08 3.44"/>
<line x1="797.3" y1="842.5" x2="797.3" y2="641.5" stroke="#4d4d4d" stroke-width="2.08" stroke-dasharray="2.08 3.44"/>
<line x1="940.0" y1="842.5" x2="940.0" y2="641.5" stroke="#4d4d4d" stroke-width="2.08" stroke-dasharray="2.08 3.44"/>
<line x1="1091.0" y1="842.5" x2="1091.0" y2="641.5" stroke="#4d4d4d" stroke-width="2.08" stroke-dasharray="2.08 3.44"/>
<line x1="1239.0" y1="842.5" x2="1239.0" y2="641.5" stroke="#4d4d4d" stroke-width="2.08" stroke-dasharray="2.08 3.44"/>
<line x1="1394.3" y1="842.5" x2="1394.3" y2="641.5" stroke="#4d4d4d" stroke-width="2.08" stroke-dasharray="2.08 3.44"/>
<line x1="1548.3" y1="842.5" x2="1548.3" y2="641.5" stroke="#4d4d4d" stroke-width="2.08" stroke-dasharray="2.08 3.44"/>
<line x1="1687.3" y1="842.5" x2="1687.3" y2="641.5" stroke="#4d4d4d" stroke-width="2.08" stroke-dasharray="2.08 3.44"/>
<text transform="translate(148.60 696.84) rotate(-90) scale(0.8787 1)" fill="#555" font-size="30.0">APR</text>
<text transform="translate(295.20 700.81) rotate(-90) scale(0.9068 1)" fill="#555" font-size="30.0">MAY</text>
<text transform="translate(436.00 690.93) rotate(-90) scale(0.8450 1)" fill="#555" font-size="30.0">JUN</text>
<text transform="translate(577.00 686.08) rotate(-90) scale(0.8462 1)" fill="#555" font-size="30.0">JUL</text>
<text transform="translate(723.60 700.34) rotate(-90) scale(0.8874 1)" fill="#555" font-size="30.0">AUG</text>
<text transform="translate(872.00 694.63) rotate(-90) scale(0.8562 1)" fill="#555" font-size="30.0">SEP</text>
<text transform="translate(1017.00 700.47) rotate(-90) scale(0.8988 1)" fill="#555" font-size="30.0">OCT</text>
<text transform="translate(1170.00 704.21) rotate(-90) scale(0.9113 1)" fill="#555" font-size="30.0">NOV</text>
<text transform="translate(1318.60 701.13) rotate(-90) scale(0.8935 1)" fill="#555" font-size="30.0">DEC</text>
<text transform="translate(1468.60 688.93) rotate(-90) scale(0.8427 1)" fill="#555" font-size="30.0">JAN</text>
<text transform="translate(1628.40 695.72) rotate(-90) scale(0.8600 1)" fill="#555" font-size="30.0">FEB</text>
<text transform="translate(1765.60 705.44) rotate(-90) scale(0.9143 1)" fill="#555" font-size="30.0">MAR</text>
<rect x="106.0" y="831.7" width="24.0" height="4.2" fill="#ee82ee"/>
<rect x="165.0" y="831.7" width="180.0" height="4.2" fill="#ee82ee"/>
<rect x="366.0" y="831.7" width="259.0" height="4.2" fill="#ee82ee"/>
<rect x="636.0" y="831.7" width="151.0" height="4.2" fill="#ee82ee"/>
<rect x="807.0" y="831.7" width="93.0" height="4.2" fill="#ee82ee"/>
<rect x="920.0" y="831.7" width="53.0" height="4.2" fill="#ee82ee"/>
<rect x="984.0" y="831.7" width="82.0" height="4.2" fill="#ee82ee"/>
<rect x="1082.0" y="831.7" width="122.0" height="4.2" fill="#ee82ee"/>
<rect x="1244.0" y="831.7" width="82.0" height="4.2" fill="#ee82ee"/>
<rect x="1337.0" y="831.7" width="19.0" height="4.2" fill="#ee82ee"/>
<rect x="1381.0" y="831.7" width="63.0" height="4.2" fill="#ee82ee"/>
<rect x="1459.0" y="831.7" width="53.0" height="4.2" fill="#ee82ee"/>
<rect x="1523.0" y="831.7" width="24.0" height="4.2" fill="#ee82ee"/>
<rect x="1724.0" y="831.7" width="24.0" height="4.2" fill="#ee82ee"/>
<rect x="1758.0" y="831.7" width="24.0" height="4.2" fill="#ee82ee"/>
<rect x="165.0" y="815.9" width="24.0" height="4.2" fill="#d614f8"/>
<rect x="224.0" y="815.9" width="63.0" height="4.2" fill="#d614f8"/>
<rect x="312.0" y="815.9" width="29.0" height="4.2" fill="#d614f8"/>
<rect x="366.0" y="815.9" width="127.0" height="4.2" fill="#d614f8"/>
<rect x="508.0" y="815.9" width="146.0" height="4.2" fill="#d614f8"/>
<rect x="704.0" y="815.9" width="34.0" height="4.2" fill="#d614f8"/>
<rect x="773.0" y="815.9" width="73.0" height="4.2" fill="#d614f8"/>
<rect x="871.0" y="815.9" width="117.0" height="4.2" fill="#d614f8"/>
<rect x="1003.0" y="815.9" width="14.0" height="4.2" fill="#d614f8"/>
<rect x="1062.0" y="815.9" width="151.0" height="4.2" fill="#d614f8"/>
<rect x="1244.0" y="815.9" width="23.0" height="4.2" fill="#d614f8"/>
<rect x="1293.0" y="815.9" width="23.0" height="4.2" fill="#d614f8"/>
<rect x="1342.0" y="815.9" width="23.0" height="4.2" fill="#d614f8"/>
<rect x="1386.0" y="815.9" width="43.0" height="4.2" fill="#d614f8"/>
<rect x="1459.0" y="815.9" width="24.0" height="4.2" fill="#d614f8"/>
<rect x="1548.0" y="815.9" width="23.0" height="4.2" fill="#d614f8"/>
<rect x="165.0" y="799.9" width="24.0" height="4.2" fill="#ff2200"/>
<rect x="258.0" y="799.9" width="230.0" height="4.2" fill="#ff2200"/>
<rect x="508.0" y="799.9" width="107.0" height="4.2" fill="#ff2200"/>
<rect x="626.0" y="799.9" width="92.0" height="4.2" fill="#ff2200"/>
<rect x="729.0" y="799.9" width="97.0" height="4.2" fill="#ff2200"/>
<rect x="949.0" y="799.9" width="201.0" height="4.2" fill="#ff2200"/>
<rect x="1160.0" y="799.9" width="88.0" height="4.2" fill="#ff2200"/>
<rect x="1258.0" y="799.9" width="186.0" height="4.2" fill="#ff2200"/>
<rect x="1459.0" y="799.9" width="24.0" height="4.2" fill="#ff2200"/>
<rect x="1553.0" y="799.9" width="23.0" height="4.2" fill="#ff2200"/>
<rect x="194.0" y="782.8" width="24.0" height="4.2" fill="#ffaa00"/>
<rect x="322.0" y="782.8" width="185.0" height="4.2" fill="#ffaa00"/>
<rect x="518.0" y="782.8" width="24.0" height="4.2" fill="#ffaa00"/>
<rect x="557.0" y="782.8" width="127.0" height="4.2" fill="#ffaa00"/>
<rect x="807.0" y="782.8" width="24.0" height="4.2" fill="#ffaa00"/>
<rect x="954.0" y="782.8" width="19.0" height="4.2" fill="#ffaa00"/>
<rect x="989.0" y="782.8" width="136.0" height="4.2" fill="#ffaa00"/>
<rect x="1155.0" y="782.8" width="63.0" height="4.2" fill="#ffaa00"/>
<rect x="1244.0" y="782.8" width="23.0" height="4.2" fill="#ffaa00"/>
<rect x="1317.0" y="782.8" width="24.0" height="4.2" fill="#ffaa00"/>
<rect x="1396.0" y="782.8" width="23.0" height="4.2" fill="#ffaa00"/>
<rect x="1464.0" y="782.8" width="186.0" height="4.2" fill="#ffaa00"/>
<rect x="341.0" y="766.8" width="29.0" height="4.2" fill="#ffee00"/>
<rect x="410.0" y="766.8" width="38.0" height="4.2" fill="#ffee00"/>
<rect x="469.0" y="766.8" width="24.0" height="4.2" fill="#ffee00"/>
<rect x="528.0" y="766.8" width="18.0" height="4.2" fill="#ffee00"/>
<rect x="562.0" y="766.8" width="29.0" height="4.2" fill="#ffee00"/>
<rect x="616.0" y="766.8" width="33.0" height="4.2" fill="#ffee00"/>
<rect x="959.0" y="766.8" width="29.0" height="4.2" fill="#ffee00"/>
<rect x="1062.0" y="766.8" width="24.0" height="4.2" fill="#ffee00"/>
<rect x="1101.0" y="766.8" width="24.0" height="4.2" fill="#ffee00"/>
<rect x="1160.0" y="766.8" width="34.0" height="4.2" fill="#ffee00"/>
<rect x="1249.0" y="766.8" width="23.0" height="4.2" fill="#ffee00"/>
<rect x="1425.0" y="766.8" width="87.0" height="4.2" fill="#ffee00"/>
<rect x="420.0" y="749.7" width="24.0" height="4.2" fill="#aaf030"/>
<rect x="533.0" y="749.7" width="23.0" height="4.2" fill="#aaf030"/>
<rect x="567.0" y="749.7" width="24.0" height="4.2" fill="#aaf030"/>
<rect x="621.0" y="749.7" width="122.0" height="4.2" fill="#aaf030"/>
<rect x="969.0" y="749.7" width="166.0" height="4.2" fill="#aaf030"/>
<rect x="1185.0" y="749.7" width="161.0" height="4.2" fill="#aaf030"/>
<rect x="1469.0" y="749.7" width="24.0" height="4.2" fill="#aaf030"/>
<rect x="430.0" y="733.7" width="23.0" height="4.2" fill="#55cc00"/>
<rect x="577.0" y="733.7" width="156.0" height="4.2" fill="#55cc00"/>
<rect x="994.0" y="733.7" width="111.0" height="4.2" fill="#55cc00"/>
<rect x="1116.0" y="733.7" width="107.0" height="4.2" fill="#55cc00"/>
<rect x="1263.0" y="733.7" width="29.0" height="4.2" fill="#55cc00"/>
<rect x="1489.0" y="733.7" width="23.0" height="4.2" fill="#55cc00"/>
<rect x="592.0" y="717.7" width="23.0" height="4.2" fill="#00e676"/>
<rect x="655.0" y="717.7" width="117.0" height="4.2" fill="#00e676"/>
<rect x="1072.0" y="717.7" width="171.0" height="4.2" fill="#00e676"/>
<rect x="1263.0" y="717.7" width="24.0" height="4.2" fill="#00e676"/>
<rect x="596.0" y="700.8" width="137.0" height="4.2" fill="#00ddff"/>
<rect x="1092.0" y="700.8" width="28.0" height="4.2" fill="#00ddff"/>
<rect x="1200.0" y="700.8" width="23.0" height="4.2" fill="#00ddff"/>
<rect x="1273.0" y="700.8" width="53.0" height="4.2" fill="#00ddff"/>
<rect x="1111.0" y="684.8" width="24.0" height="4.2" fill="#1020d0"/>
<path d="M113.8 833.8h8.4M118.0 829.6v8.4M240.8 833.8h8.4M245.0 829.6v8.4M510.8 833.8h8.4M515.0 829.6v8.4M706.8 833.8h8.4M711.0 829.6v8.4M833.8 833.8h8.4M838.0 829.6v8.4M961.8 833.8h8.4M966.0 829.6v8.4M986.8 833.8h8.4M991.0 829.6v8.4M1116.8 833.8h8.4M1121.0 829.6v8.4M1295.8 833.8h8.4M1300.0 829.6v8.4M1341.8 833.8h8.4M1346.0 829.6v8.4M1412.8 833.8h8.4M1417.0 829.6v8.4M1481.8 833.8h8.4M1486.0 829.6v8.4M1530.8 833.8h8.4M1535.0 829.6v8.4M1731.8 833.8h8.4M1736.0 829.6v8.4M1765.8 833.8h8.4M1770.0 829.6v8.4M172.8 818.0h8.4M177.0 813.8v8.4M255.8 818.0h8.4M260.0 813.8v8.4M323.8 818.0h8.4M328.0 813.8v8.4M437.8 818.0h8.4M442.0 813.8v8.4M598.8 818.0h8.4M603.0 813.8v8.4M716.8 818.0h8.4M721.0 813.8v8.4M793.8 818.0h8.4M798.0 813.8v8.4M939.8 818.0h8.4M944.0 813.8v8.4M1005.8 818.0h8.4M1010.0 813.8v8.4M1152.8 818.0h8.4M1157.0 813.8v8.4M1250.8 818.0h8.4M1255.0 813.8v8.4M1299.8 818.0h8.4M1304.0 813.8v8.4M1349.8 818.0h8.4M1354.0 813.8v8.4M1402.8 818.0h8.4M1407.0 813.8v8.4M1466.8 818.0h8.4M1471.0 813.8v8.4M1554.8 818.0h8.4M1559.0 813.8v8.4M174.6 802.0h8.4M178.8 797.8v8.4M378.8 802.0h8.4M383.0 797.8v8.4M544.8 802.0h8.4M549.0 797.8v8.4M682.8 802.0h8.4M687.0 797.8v8.4M741.8 802.0h8.4M746.0 797.8v8.4M1074.8 802.0h8.4M1079.0 797.8v8.4M1216.8 802.0h8.4M1221.0 797.8v8.4M1304.8 802.0h8.4M1309.0 797.8v8.4M1466.8 802.0h8.4M1471.0 797.8v8.4M1559.8 802.0h8.4M1564.0 797.8v8.4M201.6 784.9h8.4M205.8 780.7v8.4M400.8 784.9h8.4M405.0 780.7v8.4M525.8 784.9h8.4M530.0 780.7v8.4M638.8 784.9h8.4M643.0 780.7v8.4M814.8 784.9h8.4M819.0 780.7v8.4M959.8 784.9h8.4M964.0 780.7v8.4M1040.8 784.9h8.4M1045.0 780.7v8.4M1187.8 784.9h8.4M1192.0 780.7v8.4M1250.8 784.9h8.4M1255.0 780.7v8.4M1324.8 784.9h8.4M1329.0 780.7v8.4M1402.8 784.9h8.4M1407.0 780.7v8.4M1545.8 784.9h8.4M1550.0 780.7v8.4M355.8 768.9h8.4M360.0 764.7v8.4M426.8 768.9h8.4M431.0 764.7v8.4M476.8 768.9h8.4M481.0 764.7v8.4M535.8 768.9h8.4M540.0 764.7v8.4M570.8 768.9h8.4M575.0 764.7v8.4M630.8 768.9h8.4M635.0 764.7v8.4M973.8 768.9h8.4M978.0 764.7v8.4M1069.8 768.9h8.4M1074.0 764.7v8.4M1108.8 768.9h8.4M1113.0 764.7v8.4M1177.8 768.9h8.4M1182.0 764.7v8.4M1255.8 768.9h8.4M1260.0 764.7v8.4M1466.8 768.9h8.4M1471.0 764.7v8.4M427.8 751.8h8.4M432.0 747.6v8.4M539.8 751.8h8.4M544.0 747.6v8.4M574.8 751.8h8.4M579.0 747.6v8.4M703.8 751.8h8.4M708.0 747.6v8.4M1094.8 751.8h8.4M1099.0 747.6v8.4M1270.8 751.8h8.4M1275.0 747.6v8.4M1476.8 751.8h8.4M1481.0 747.6v8.4M437.8 735.8h8.4M442.0 731.6v8.4M630.8 735.8h8.4M635.0 731.6v8.4M1038.8 735.8h8.4M1043.0 731.6v8.4M1167.8 735.8h8.4M1172.0 731.6v8.4M1274.8 735.8h8.4M1279.0 731.6v8.4M1496.8 735.8h8.4M1501.0 731.6v8.4M598.8 719.8h8.4M603.0 715.6v8.4M726.8 719.8h8.4M731.0 715.6v8.4M1187.8 719.8h8.4M1192.0 715.6v8.4M1270.8 719.8h8.4M1275.0 715.6v8.4M687.8 702.9h8.4M692.0 698.7v8.4M1101.8 702.9h8.4M1106.0 698.7v8.4M1206.8 702.9h8.4M1211.0 698.7v8.4M1299.8 702.9h8.4M1304.0 698.7v8.4M1118.8 686.9h8.4M1123.0 682.7v8.4" stroke="#fff" stroke-width="2.1" fill="none"/>
<g fill="#fff" font-size="10.6"><text x="118.0" y="831.8" text-anchor="middle">KSE</text><text x="255.0" y="831.8" text-anchor="middle">ETA</text><text x="495.5" y="831.8" text-anchor="middle">NZC</text><text x="711.5" y="831.8" text-anchor="middle">NDA</text><text x="853.5" y="831.8" text-anchor="middle">SPE</text><text x="946.5" y="831.8" text-anchor="middle">ARD</text><text x="1025.0" y="831.8" text-anchor="middle">EGE</text><text x="1143.0" y="831.8" text-anchor="middle">NTA</text><text x="1285.0" y="831.8" text-anchor="middle">MON</text><text x="1346.5" y="831.8" text-anchor="middle">URS</text><text x="1412.5" y="831.8" text-anchor="middle">AHY</text><text x="1485.5" y="831.8" text-anchor="middle">GUM</text><text x="1535.0" y="831.8" text-anchor="middle">OHY</text><text x="1736.0" y="831.8" text-anchor="middle">XHE</text><text x="1770.0" y="831.8" text-anchor="middle">EVI</text><text x="177.0" y="816.0" text-anchor="middle">AVB</text><text x="255.5" y="816.0" text-anchor="middle">ELY</text><text x="326.5" y="816.0" text-anchor="middle">CAM</text><text x="429.5" y="816.0" text-anchor="middle">SSG</text><text x="581.0" y="816.0" text-anchor="middle">PCA</text><text x="721.0" y="816.0" text-anchor="middle">AUD</text><text x="809.5" y="816.0" text-anchor="middle">AUR</text><text x="929.5" y="816.0" text-anchor="middle">DSX</text><text x="1010.0" y="816.0" text-anchor="middle">OCU</text><text x="1137.5" y="816.0" text-anchor="middle">OER</text><text x="1255.5" y="816.0" text-anchor="middle">DKD</text><text x="1304.5" y="816.0" text-anchor="middle">DSV</text><text x="1353.5" y="816.0" text-anchor="middle">ALY</text><text x="1407.5" y="816.0" text-anchor="middle">JLE</text><text x="1471.0" y="816.0" text-anchor="middle">SCC</text><text x="1559.5" y="816.0" text-anchor="middle">FEV</text><text x="177.0" y="800.0" text-anchor="middle">LYR</text><text x="373.0" y="800.0" text-anchor="middle">JMC</text><text x="561.5" y="800.0" text-anchor="middle">JPE</text><text x="672.0" y="800.0" text-anchor="middle">PAU</text><text x="777.5" y="800.0" text-anchor="middle">NIA</text><text x="1049.5" y="800.0" text-anchor="middle">STA</text><text x="1204.0" y="800.0" text-anchor="middle">NOO</text><text x="1351.0" y="800.0" text-anchor="middle">COM</text><text x="1471.0" y="800.0" text-anchor="middle">NCC</text><text x="1564.5" y="800.0" text-anchor="middle">FED</text><text x="206.0" y="782.9" text-anchor="middle">HVI</text><text x="414.5" y="782.9" text-anchor="middle">ARI</text><text x="530.0" y="782.9" text-anchor="middle">SZC</text><text x="620.5" y="782.9" text-anchor="middle">CAP</text><text x="819.0" y="782.9" text-anchor="middle">NUE</text><text x="963.5" y="782.9" text-anchor="middle">OCT</text><text x="1057.0" y="782.9" text-anchor="middle">ORI</text><text x="1186.5" y="782.9" text-anchor="middle">AMO</text><text x="1255.5" y="782.9" text-anchor="middle">DPC</text><text x="1329.0" y="782.9" text-anchor="middle">XVI</text><text x="1407.5" y="782.9" text-anchor="middle">QUA</text><text x="1557.0" y="782.9" text-anchor="middle">AAN</text><text x="355.5" y="766.9" text-anchor="middle">TAH</text><text x="429.0" y="766.9" text-anchor="middle">JEA</text><text x="481.0" y="766.9" text-anchor="middle">JIP</text><text x="537.0" y="766.9" text-anchor="middle">PPS</text><text x="576.5" y="766.9" text-anchor="middle">ZCS</text><text x="632.5" y="766.9" text-anchor="middle">GDR</text><text x="973.5" y="766.9" text-anchor="middle">DRA</text><text x="1074.0" y="766.9" text-anchor="middle">LUM</text><text x="1113.0" y="766.9" text-anchor="middle">RPU</text><text x="1177.0" y="766.9" text-anchor="middle">THA</text><text x="1260.5" y="766.9" text-anchor="middle">PSU</text><text x="1468.5" y="766.9" text-anchor="middle">XCB</text><text x="432.0" y="749.8" text-anchor="middle">IRC</text><text x="544.5" y="749.8" text-anchor="middle">CAN</text><text x="579.0" y="749.8" text-anchor="middle">FAN</text><text x="682.0" y="749.8" text-anchor="middle">PER</text><text x="1052.0" y="749.8" text-anchor="middle">CTA</text><text x="1265.5" y="749.8" text-anchor="middle">HYD</text><text x="1481.0" y="749.8" text-anchor="middle">XUM</text><text x="441.5" y="733.8" text-anchor="middle">COR</text><text x="655.0" y="733.8" text-anchor="middle">SDA</text><text x="1049.5" y="733.8" text-anchor="middle">LMI</text><text x="1169.5" y="733.8" text-anchor="middle">LEO</text><text x="1277.5" y="733.8" text-anchor="middle">EHY</text><text x="1500.5" y="733.8" text-anchor="middle">ECV</text><text x="603.5" y="717.8" text-anchor="middle">JXA</text><text x="713.5" y="717.8" text-anchor="middle">KCG</text><text x="1157.5" y="717.8" text-anchor="middle">AND</text><text x="1275.0" y="717.8" text-anchor="middle">DAD</text><text x="664.5" y="700.9" text-anchor="middle">ERI</text><text x="1106.0" y="700.9" text-anchor="middle">SLD</text><text x="1211.5" y="700.9" text-anchor="middle">ORS</text><text x="1299.5" y="700.9" text-anchor="middle">GEM</text><text x="1123.0" y="684.9" text-anchor="middle">KUM</text></g>
<line x1="1139.50" y1="842.5" x2="1139.50" y2="641.5" stroke="#ff0000" stroke-width="1.1" stroke-dasharray="5.1 2.2"/>
<line x1="1141.70" y1="842.5" x2="1141.70" y2="641.5" stroke="#ff0000" stroke-width="1.1" stroke-dasharray="5.1 2.2"/>
<rect x="20.5" y="641.5" width="1765.0" height="201.0" fill="none" stroke="#fff" stroke-width="1.1"/>
<line x1="20.50" y1="842.5" x2="20.50" y2="847.4" stroke="#fff" stroke-width="1.1"/>
<text transform="translate(20.50 862.3) scale(1.13 1)" fill="#fff" font-size="13.9" text-anchor="middle">0</text>
<line x1="265.64" y1="842.5" x2="265.64" y2="847.4" stroke="#fff" stroke-width="1.1"/>
<text transform="translate(265.64 862.3) scale(1.13 1)" fill="#fff" font-size="13.9" text-anchor="middle">50</text>
<line x1="510.78" y1="842.5" x2="510.78" y2="847.4" stroke="#fff" stroke-width="1.1"/>
<text transform="translate(510.78 862.3) scale(1.13 1)" fill="#fff" font-size="13.9" text-anchor="middle">100</text>
<line x1="755.92" y1="842.5" x2="755.92" y2="847.4" stroke="#fff" stroke-width="1.1"/>
<text transform="translate(755.92 862.3) scale(1.13 1)" fill="#fff" font-size="13.9" text-anchor="middle">150</text>
<line x1="1001.06" y1="842.5" x2="1001.06" y2="847.4" stroke="#fff" stroke-width="1.1"/>
<text transform="translate(1001.06 862.3) scale(1.13 1)" fill="#fff" font-size="13.9" text-anchor="middle">200</text>
<line x1="1246.19" y1="842.5" x2="1246.19" y2="847.4" stroke="#fff" stroke-width="1.1"/>
<text transform="translate(1246.19 862.3) scale(1.13 1)" fill="#fff" font-size="13.9" text-anchor="middle">250</text>
<line x1="1491.33" y1="842.5" x2="1491.33" y2="847.4" stroke="#fff" stroke-width="1.1"/>
<text transform="translate(1491.33 862.3) scale(1.13 1)" fill="#fff" font-size="13.9" text-anchor="middle">300</text>
<line x1="1736.47" y1="842.5" x2="1736.47" y2="847.4" stroke="#fff" stroke-width="1.1"/>
<text transform="translate(1736.47 862.3) scale(1.13 1)" fill="#fff" font-size="13.9" text-anchor="middle">350</text>
<text x="829.5" y="882" fill="#fff" font-size="13.9" textLength="146" lengthAdjust="spacingAndGlyphs">Solar longitude (deg)</text>
</svg></body></html>
